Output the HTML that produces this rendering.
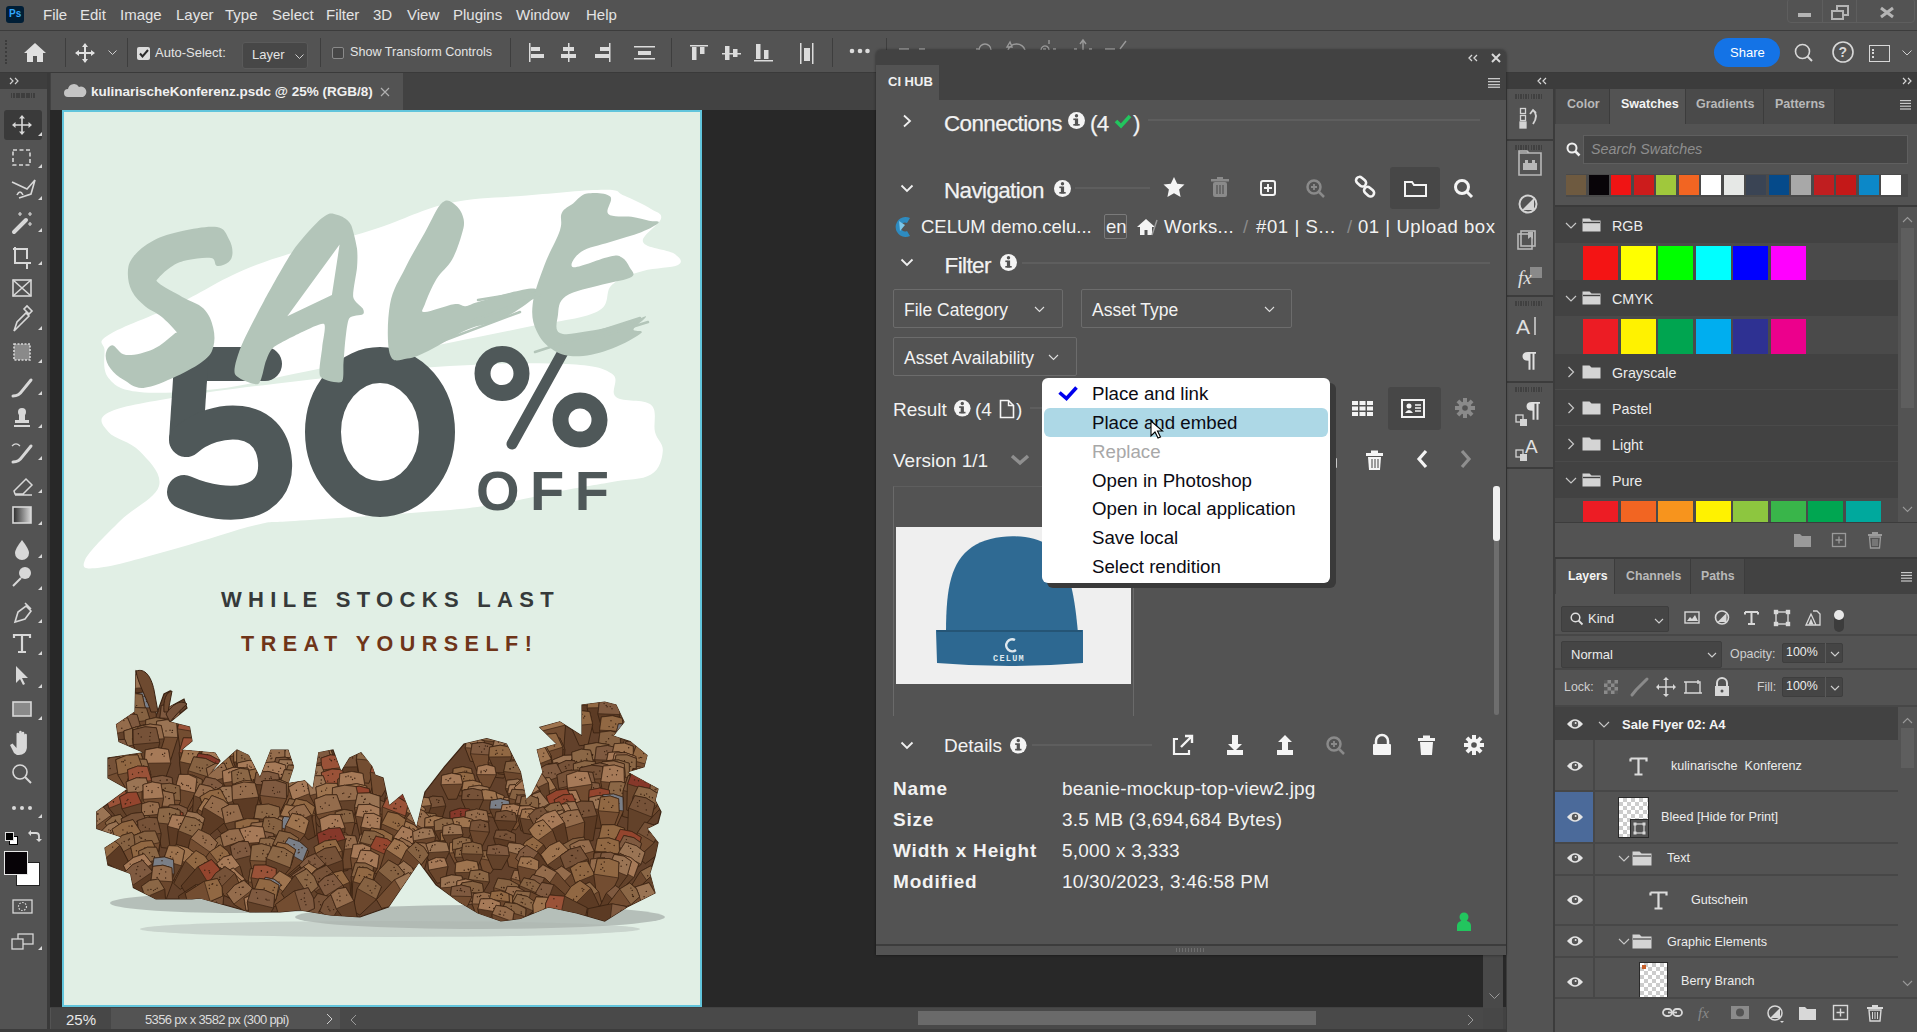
<!DOCTYPE html>
<html><head><meta charset="utf-8">
<style>
*{margin:0;padding:0;box-sizing:border-box}
html,body{width:1917px;height:1032px;overflow:hidden;background:#535353;font-family:"Liberation Sans",sans-serif;color:#e8e8e8}
.a{position:absolute}
.t{position:absolute;white-space:nowrap}
svg{position:absolute;overflow:visible}
</style></head><body>
<!-- ===== MENU BAR ===== -->
<div class="a" style="left:0;top:0;width:1917px;height:30px;background:#535353"></div>
<div class="a" style="left:0;top:30px;width:1917px;height:1px;background:#3c3c3c"></div>
<!-- ===== OPTIONS BAR ===== -->
<div class="a" style="left:0;top:31px;width:1917px;height:42px;background:#535353"></div>
<div class="a" style="left:0;top:72px;width:1917px;height:1px;background:#3a3a3a"></div>
<div id="menus" style="font-size:15px;color:#e4e4e4">
<div class="a" style="left:6px;top:6px;width:18px;height:17px;background:#001e36;border-radius:3px"></div>
<span class="t" style="left:9px;top:8px;font-size:10px;font-weight:bold;color:#31a8ff">Ps</span>
<span class="t" style="left:43px;top:6px">File</span><span class="t" style="left:80px;top:6px">Edit</span><span class="t" style="left:120px;top:6px">Image</span><span class="t" style="left:176px;top:6px">Layer</span><span class="t" style="left:225px;top:6px">Type</span><span class="t" style="left:272px;top:6px">Select</span><span class="t" style="left:326px;top:6px">Filter</span><span class="t" style="left:373px;top:6px">3D</span><span class="t" style="left:407px;top:6px">View</span><span class="t" style="left:453px;top:6px">Plugins</span><span class="t" style="left:516px;top:6px">Window</span><span class="t" style="left:586px;top:6px">Help</span>
<!-- window controls -->
<div class="a" style="left:1787px;top:-2px;width:128px;height:25px;border:1px solid #5e5e5e;border-radius:4px"></div>
<div class="a" style="left:1822px;top:0;width:1px;height:23px;background:#5e5e5e"></div>
<div class="a" style="left:1856px;top:0;width:1px;height:23px;background:#5e5e5e"></div>
<div class="a" style="left:1798px;top:13px;width:13px;height:4px;background:#b4b4b4"></div>
<div class="a" style="left:1836px;top:5px;width:13px;height:11px;border:2px solid #b4b4b4"></div>
<div class="a" style="left:1831px;top:10px;width:13px;height:10px;border:2px solid #b4b4b4;background:#535353"></div>
<svg style="left:1880px;top:7px" width="14" height="11"><path d="M1 1L13 10M13 1L1 10" stroke="#b4b4b4" stroke-width="3"/></svg>
</div>
<!-- options bar content -->
<div id="opts">
<div class="a" style="left:5px;top:40px;width:2px;height:24px;border-left:2px dotted #3c3c3c"></div>
<svg style="left:24px;top:43px" width="22" height="20"><path d="M11 0L0 10h3v9h6v-6h4v6h6v-9h3z" fill="#e0e0e0"/></svg>
<div class="a" style="left:65px;top:38px;width:1px;height:29px;background:#3e3e3e"></div>
<svg style="left:75px;top:43px" width="20" height="20"><path d="M10 1v18M1 10h18" stroke="#e0e0e0" stroke-width="2"/><path d="M10 0l-3 4h6zM10 20l-3-4h6zM0 10l4-3v6zM20 10l-4-3v6z" fill="#e0e0e0"/></svg>
<svg style="left:108px;top:50px" width="9" height="6"><path d="M0.5 0.5l4 4 4-4" stroke="#cfcfcf" fill="none"/></svg>
<div class="a" style="left:127px;top:38px;width:1px;height:29px;background:#3e3e3e"></div>
<div class="a" style="left:137px;top:47px;width:13px;height:13px;background:#dcdcdc;border-radius:2px"></div>
<svg style="left:139px;top:49px" width="10" height="9"><path d="M1 4.5l2.5 3 5.5-6.5" stroke="#2a2a2a" stroke-width="2" fill="none"/></svg>
<span class="t" style="left:155px;top:45px;font-size:13px;color:#e4e4e4">Auto-Select:</span>
<div class="a" style="left:242px;top:42px;width:66px;height:27px;background:#474747;border:1px solid #5a5a5a;border-radius:3px"></div>
<span class="t" style="left:252px;top:47px;font-size:13px;color:#e4e4e4">Layer</span>
<svg style="left:295px;top:54px" width="9" height="6"><path d="M0.5 0.5l4 4 4-4" stroke="#cfcfcf" fill="none"/></svg>
<div class="a" style="left:320px;top:38px;width:1px;height:29px;background:#3e3e3e"></div>
<div class="a" style="left:332px;top:47px;width:12px;height:12px;border:1px solid #8a8a8a;border-radius:2px;background:#474747"></div>
<span class="t" style="left:350px;top:45px;font-size:12.6px;color:#e4e4e4">Show Transform Controls</span>
<div class="a" style="left:510px;top:38px;width:1px;height:29px;background:#3e3e3e"></div>
<svg style="left:528px;top:42px" width="300" height="22" fill="#dcdcdc">
<rect x="1" y="1" width="1.5" height="19"/><rect x="3" y="5" width="9" height="4"/><rect x="3" y="12" width="13" height="4"/>
<rect x="40" y="1" width="1.5" height="19"/><rect x="35" y="5" width="11" height="4"/><rect x="33" y="12" width="15" height="4"/>
<rect x="81" y="1" width="1.5" height="19"/><rect x="72" y="5" width="9" height="4"/><rect x="67" y="12" width="14" height="4"/>
<rect x="106" y="4" width="21" height="1.5"/><rect x="110" y="9" width="13" height="4"/><rect x="106" y="16" width="21" height="1.5"/>
<rect x="162" y="3" width="18" height="1.5"/><rect x="164" y="5" width="4.5" height="13"/><rect x="172" y="5" width="4.5" height="7"/>
<rect x="194" y="11" width="19" height="1.5"/><rect x="197" y="4" width="4.5" height="14"/><rect x="205" y="7" width="4.5" height="8"/>
<rect x="226" y="18" width="19" height="1.5"/><rect x="228" y="2" width="4.5" height="15"/><rect x="236" y="8" width="4.5" height="9"/>
<rect x="272" y="1" width="1.5" height="21"/><rect x="284" y="1" width="1.5" height="21"/><rect x="276" y="6" width="6" height="13"/>
</svg>
<div class="a" style="left:671px;top:38px;width:1px;height:29px;background:#3e3e3e"></div>
<div class="a" style="left:832px;top:38px;width:1px;height:29px;background:#3e3e3e"></div>
<svg style="left:849px;top:48px" width="22" height="6" fill="#dcdcdc"><circle cx="3" cy="3" r="2.3"/><circle cx="11" cy="3" r="2.3"/><circle cx="18.5" cy="3" r="2.3"/></svg>
<div class="a" style="left:886px;top:38px;width:1px;height:29px;background:#3e3e3e"></div>
<!-- share etc -->
<div class="a" style="left:1714px;top:38px;width:66px;height:29px;background:#1473e6;border-radius:15px"></div>
<span class="t" style="left:1730px;top:45px;font-size:13px;color:#fff">Share</span>
<svg style="left:1794px;top:43px" width="24" height="20"><circle cx="8.5" cy="8.5" r="7" stroke="#d8d8d8" stroke-width="1.6" fill="none"/><path d="M13.5 13.5l4.5 4.5" stroke="#d8d8d8" stroke-width="2"/></svg>
<svg style="left:1832px;top:41px" width="24" height="24"><circle cx="11" cy="11" r="10" stroke="#d8d8d8" stroke-width="1.6" fill="none"/><text x="6.5" y="16" font-size="14" font-weight="bold" fill="#d8d8d8" font-family="Liberation Sans">?</text></svg>
<div class="a" style="left:1869px;top:45px;width:21px;height:17px;border:1.5px solid #d8d8d8"></div>
<div class="a" style="left:1872px;top:49px;width:3px;height:9px;border-left:2px dotted #d8d8d8"></div>
<svg style="left:1902px;top:50px" width="10" height="6"><path d="M0.5 0.5l4.5 4.5 4.5-4.5" stroke="#cfcfcf" fill="none"/></svg>
<!-- faint 3D icons partly hidden -->
<svg style="left:880px;top:38px" width="260" height="12" stroke="#9a9a9a" fill="none" stroke-width="1.4"><path d="M19 11h10M39 11h6"/><path d="M99 12a6 6 0 0 1 12 0M96 11h4"/><path d="M128 12a9 9 0 0 1 17 0M130 4l-3 5 5 0z"/><path d="M169 12a4 4 0 1 1 0-.1M169 2v4M163 11h3M173 11h3"/><path d="M200 6l3-4 3 4M203 3v9M194 11h3M209 11h3"/><path d="M225 11h10M240 11l6-8"/></svg>
</div>
<!-- ===== LEFT TOOLBAR ===== -->
<div class="a" style="left:0;top:73px;width:47px;height:959px;background:#535353"></div>
<div class="a" style="left:0;top:73px;width:47px;height:16px;background:#3e3e3e"></div>
<div class="a" style="left:47px;top:73px;width:3px;height:959px;background:#3a3a3a"></div>
<svg style="left:9px;top:77px" width="12" height="8"><path d="M1 1l3 3-3 3M6 1l3 3-3 3" stroke="#d0d0d0" fill="none" stroke-width="1.2"/></svg>
<div class="a" style="left:11px;top:93px;width:25px;height:5px;background:repeating-linear-gradient(90deg,#3e3e3e 0 1.5px,transparent 1.5px 2.5px)"></div>
<div class="a" style="left:4px;top:110px;width:38px;height:30px;background:#3a3a3a;border-radius:3px"></div>
<svg style="left:0;top:100px" width="47" height="870" fill="none" stroke="#d8d8d8" stroke-width="1.6">
<g transform="translate(22,25)"><path d="M0-9v18M-9 0h18"/><path d="M0-10l-3 3.5h6zM0 10l-3-3.5h6zM-10 0l3.5-3v6zM10 0l-3.5-3v6z" fill="#d8d8d8" stroke="none"/></g>
<rect x="13" y="50" width="17" height="15" stroke-dasharray="4 2.5"/>
<path d="M12 82l15 7 8-9-4 14-12 4M17 95q3-6 6 0"/>
<path d="M14 132l12-12" stroke-width="4" stroke-linecap="round"/><path d="M20 112v4M18 114h4M30 112v4M28 114h4M30 122v4M28 124h4" stroke-width="1.2"/>
<path d="M15 147v16h16M13 149h6M27 163v6M19 149h8v10" stroke-width="2"/>
<rect x="13" y="180" width="18" height="16"/><path d="M13 180l18 16M31 180l-18 16"/>
<path d="M14 231l3-9 9-9 3 3-9 9zM24 209l5 5 3-3-5-5z"/>
<rect x="14" y="244" width="16" height="16" fill="#8a8a8a" stroke-dasharray="2 1.5"/>
<path d="M13 296q6 0 9-5l9-11" stroke-width="3" stroke-linecap="round"/>
<path d="M14 327h16M15 323h14v-3h-14zM19 320v-5h6v5" fill="#d8d8d8" stroke="none"/><circle cx="22" cy="312" r="4" fill="#d8d8d8" stroke="none"/><rect x="14" y="325" width="16" height="2" fill="#d8d8d8" stroke="none"/>
<path d="M13 362q6 0 9-5l9-11" stroke-width="3" stroke-linecap="round"/><path d="M12 346q4-4 8 0" stroke-width="1.2"/>
<path d="M14 391l12-12 6 6-9 9h-8zM15 395h17" stroke-width="1.5"/>
<rect x="13" y="407" width="18" height="16" fill="url(#gr)" stroke="#d8d8d8"/>
<path d="M22 440q-7 9-7 13a7 7 0 0 0 14 0q0-4-7-13z" fill="#d8d8d8" stroke="none"/>
<circle cx="25" cy="473" r="6" fill="#d8d8d8" stroke="none"/><path d="M21 478l-8 8" stroke-width="2"/>
<path d="M15 522l3-10 8-6 5 5-6 8zM25 503l6 6" stroke-width="1.6"/>
<path d="M14 538v-3h16v3M22 535v17M18 552h8" stroke-width="2.2"/>
<path d="M16 566v17l4-4 3 6 2-1-3-6h6z" fill="#d8d8d8" stroke="none"/>
<rect x="13" y="602" width="18" height="14" fill="#8a8a8a"/>
<path d="M14 653l-4-8 2.5-1.5 4 4.5v-14a1.3 1.3 0 0 1 2.6 0v9-11a1.3 1.3 0 0 1 2.6 0v11-10a1.3 1.3 0 0 1 2.6 0v10-8a1.3 1.3 0 0 1 2.6 0v13q-1 7-8 7h-2z" fill="#d8d8d8" stroke="none"/>
<circle cx="20" cy="672" r="7"/><path d="M25 677l6 6" stroke-width="2"/>
<circle cx="14" cy="708" r="2" fill="#d8d8d8" stroke="none"/><circle cx="22" cy="708" r="2" fill="#d8d8d8" stroke="none"/><circle cx="30" cy="708" r="2" fill="#d8d8d8" stroke="none"/>
<rect x="13" y="800" width="19" height="13" stroke-width="1.3"/><circle cx="22.5" cy="806.5" r="4" stroke-dasharray="1.5 1.5" stroke-width="1.2"/>
<rect x="18" y="834" width="15" height="10" stroke-width="1.3"/><rect x="12" y="839" width="11" height="10" stroke-width="1.3" fill="#535353"/>
</svg>
<svg style="left:0;top:100px" width="47" height="870" fill="#d8d8d8"><path d="M38 36h4v-4zM38 68h4v-4zM38 100h4v-4zM38 132h4v-4zM38 165h4v-4zM38 230h4v-4zM38 263h4v-4zM38 295h4v-4zM38 328h4v-4zM38 360h4v-4zM38 393h4v-4zM38 425h4v-4zM38 458h4v-4zM38 490h4v-4zM38 523h4v-4zM38 555h4v-4zM38 588h4v-4zM38 620h4v-4zM38 718h4v-4zM38 850h4v-4z"/></svg>
<div class="a" style="left:5px;top:832px;width:9px;height:9px;background:#000;border:1px solid #ddd"></div>
<div class="a" style="left:9px;top:836px;width:9px;height:9px;background:#fff;border:1px solid #000;z-index:0"></div>
<div class="a" style="left:5px;top:832px;width:9px;height:9px;background:#000;border:1.5px solid #ddd"></div>
<svg style="left:27px;top:829px" width="14" height="14"><path d="M2 4h7q3 0 3 3v5" stroke="#d8d8d8" stroke-width="1.8" fill="none"/><path d="M4 1l-3 3 3 3zM9 10l3 3 3-3z" fill="#d8d8d8"/></svg>
<div class="a" style="left:16px;top:862px;width:24px;height:24px;background:#fff;border:1px solid #222"></div>
<div class="a" style="left:4px;top:851px;width:24px;height:24px;background:#070307;border:1.5px solid #e8e8e8"></div>
<svg width="0" height="0"><defs><linearGradient id="gr" x1="0" x2="1"><stop offset="0" stop-color="#2a2a2a"/><stop offset="1" stop-color="#d8d8d8"/></linearGradient></defs></svg>
<!-- ===== DOCUMENT AREA ===== -->
<div class="a" style="left:50px;top:73px;width:1457px;height:37px;background:#424242"></div>
<div class="a" style="left:51px;top:73px;width:352px;height:37px;background:#535353"></div>
<div class="a" style="left:50px;top:110px;width:1457px;height:897px;background:#282828"></div>
<div class="a" style="left:50px;top:1007px;width:1457px;height:25px;background:#424242"></div>
<svg style="left:64px;top:83px" width="23" height="15"><path d="M4 14a4 4 0 0 1 0-8a6 6 0 0 1 11-2a5 5 0 0 1 4 10z" fill="#c4c4c4"/></svg>
<span class="t" style="left:91px;top:84px;font-size:13.5px;font-weight:bold;color:#f0f0f0">kulinarischeKonferenz.psdc @ 25% (RGB/8)</span>
<svg style="left:380px;top:87px" width="10" height="10"><path d="M1 1l8 8M9 1l-8 8" stroke="#b0b0b0" stroke-width="1.2"/></svg>
<!-- status bar -->
<div class="a" style="left:50px;top:1008px;width:1433px;height:21px;background:#494949"></div>
<div class="a" style="left:50px;top:1008px;width:290px;height:21px;background:#535353"></div>
<div class="a" style="left:51px;top:1008px;width:60px;height:21px;background:#474747"></div>
<span class="t" style="left:66px;top:1011px;font-size:15px;color:#e8e8e8">25%</span>
<span class="t" style="left:145px;top:1012px;font-size:13px;color:#dcdcdc;letter-spacing:-0.65px">5356 px x 3582 px (300 ppi)</span>
<svg style="left:326px;top:1013px" width="8" height="12"><path d="M1 1l5 5-5 5" stroke="#cfcfcf" fill="none"/></svg>
<svg style="left:350px;top:1014px" width="8" height="12"><path d="M6 1l-5 5 5 5" stroke="#9a9a9a" fill="none"/></svg>
<div class="a" style="left:918px;top:1011px;width:398px;height:14px;background:#6a6a6a"></div>
<svg style="left:1467px;top:1014px" width="8" height="12"><path d="M1 1l5 5-5 5" stroke="#9a9a9a" fill="none"/></svg>
<div class="a" style="left:1483px;top:110px;width:20px;height:898px;background:#494949"></div>
<div class="a" style="left:1483px;top:1008px;width:20px;height:21px;background:#474747"></div>
<svg style="left:1489px;top:993px" width="11" height="7"><path d="M0.5 0.5l5 5 5-5" stroke="#9a9a9a" fill="none"/></svg>
<div class="a" style="left:0;top:1029px;width:1917px;height:3px;background:#3c3c3c"></div>
<!-- canvas -->
<div class="a" style="left:62px;top:110px;width:640px;height:897px;background:#e1efe5;border:2px solid #62c5dc"></div>
<!--ART-->
<svg style="left:64px;top:112px" width="636" height="893" viewBox="64 112 636 893">
<path fill="#fff"  d="M108.5,335.0 C121.7,326.6 151.4,316.6 178.0,304.0 C204.6,291.4 221.1,278.3 256.0,265.0 C290.9,251.7 337.2,241.2 372.0,230.0 C406.8,218.8 421.7,209.2 449.6,203.0 C477.5,196.8 499.1,197.9 527.0,195.5 C554.9,193.1 587.1,189.7 604.6,189.7 C622.1,189.7 615.6,192.0 624.0,195.5 C632.4,199.0 644.3,204.8 651.0,209.0 C657.7,213.2 662.4,212.9 661.0,218.8 C659.6,224.7 640.7,235.7 643.0,242.0 C645.3,248.3 667.7,249.5 674.0,253.6 C680.3,257.7 683.6,261.9 678.0,265.0 C672.4,268.1 654.9,267.5 643.0,271.0 C631.1,274.5 620.3,277.4 612.0,284.7 C603.7,292.0 612.3,304.2 597.0,311.8 C581.7,319.4 553.5,321.4 527.0,327.0 C500.5,332.6 477.5,337.2 449.6,342.8 C421.7,348.4 399.9,352.4 372.0,358.0 C344.1,363.6 322.5,368.2 294.6,373.8 C266.7,379.4 244.9,385.7 217.0,389.0 C189.1,392.3 159.0,394.0 139.5,392.0 C120.0,390.0 114.8,385.5 108.5,378.0 C102.2,370.5 104.6,358.2 104.6,350.5 C104.6,342.8 95.3,343.4 108.5,335.0Z"/>
<path fill="#fff"  d="M108.5,412.6 C121.0,406.3 144.5,402.6 178.0,397.0 C211.5,391.4 245.7,387.1 294.6,381.5 C343.5,375.9 400.7,369.1 449.6,366.0 C498.5,362.9 536.8,362.6 566.0,364.0 C595.2,365.4 603.0,367.9 612.0,373.8 C621.0,379.7 609.0,391.4 616.0,397.0 C623.0,402.6 644.0,398.5 651.0,404.8 C658.0,411.1 652.9,423.7 655.0,432.0 C657.1,440.3 663.5,443.3 662.8,451.0 C662.1,458.7 660.1,469.0 651.0,474.6 C641.9,480.2 627.3,479.2 612.0,482.0 C596.7,484.8 588.3,485.8 566.0,490.0 C543.7,494.2 515.9,501.5 488.0,505.6 C460.1,509.7 445.8,510.2 411.0,513.0 C376.2,515.8 322.5,518.8 294.6,521.0 C266.7,523.2 277.0,520.1 256.0,525.0 C235.0,529.9 205.9,540.3 178.0,548.0 C150.1,555.7 117.5,565.4 100.8,567.6 C84.1,569.8 81.5,568.4 85.0,560.0 C88.5,551.6 106.7,534.3 120.0,521.0 C133.3,507.7 155.5,498.6 159.0,486.0 C162.5,473.4 148.6,460.7 139.5,451.0 C130.4,441.3 114.1,438.9 108.5,432.0 C102.9,425.1 96.0,418.9 108.5,412.6Z"/>
<g fill="none" stroke="#4f5859">
<ellipse cx="380" cy="432" rx="57" ry="67" stroke-width="36"/>
<path stroke-width="34" stroke-linecap="round" d="M265 364 H192"/>
<path stroke-width="34" d="M192 350 L186 440"/>
<path stroke-width="34" stroke-linecap="round" d="M186 440 C215 415 272 412 275 462 C278 505 230 512 184 492"/>
<circle cx="502" cy="373.5" r="19.5" stroke-width="16"/>
<circle cx="580" cy="420" r="19.5" stroke-width="16"/>
<path stroke-width="11" stroke-linecap="round" d="M563 352 L512 444"/>
</g>
<path fill="#b3c5b9"  d="M217.0,227.1 C225.4,228.5 225.9,234.2 228.7,238.7 C231.5,243.2 232.5,248.1 232.5,252.3 C232.5,256.5 231.5,259.6 228.7,262.0 C225.9,264.4 220.2,266.6 217.0,265.9 C213.8,265.2 216.4,259.2 211.2,258.1 C206.0,257.0 195.0,258.6 188.0,260.0 C181.0,261.4 177.7,262.8 172.5,265.9 C167.3,269.0 161.4,274.4 159.0,277.5 C156.6,280.6 154.8,279.8 159.0,283.3 C163.2,286.8 174.2,292.4 182.2,296.9 C190.2,301.4 197.9,302.9 203.5,308.5 C209.1,314.1 211.5,320.8 213.2,327.8 C214.9,334.8 214.9,341.3 213.2,347.2 C211.5,353.1 210.1,355.6 203.5,360.8 C196.9,366.0 187.2,371.4 176.4,376.3 C165.6,381.2 152.8,387.2 143.4,387.9 C134.0,388.6 129.9,383.6 124.0,380.1 C118.1,376.6 113.8,373.0 110.5,368.5 C107.2,364.0 105.4,359.2 105.7,355.0 C106.0,350.8 108.7,345.3 112.4,345.3 C116.1,345.3 118.7,354.3 126.0,355.0 C133.3,355.7 144.4,353.0 153.1,349.2 C161.8,345.4 170.2,336.8 174.4,333.7 C178.6,330.6 178.8,334.8 176.4,331.7 C174.0,328.6 166.5,320.7 160.9,316.2 C155.3,311.7 150.6,311.0 145.4,306.5 C140.2,302.0 135.0,297.3 131.8,291.0 C128.7,284.7 127.6,278.0 127.9,271.7 C128.2,265.4 129.2,261.8 133.7,256.2 C138.2,250.6 144.4,245.2 153.1,240.7 C161.8,236.2 170.7,233.4 182.2,231.0 C193.7,228.6 208.6,225.7 217.0,227.1Z"/>
<path fill="#b3c5b9" fill-rule="evenodd" d="M329.9,213.6 C333.2,212.9 340.9,216.0 343.5,217.4 C346.1,218.8 349.6,221.5 351.2,225.2 C352.8,228.9 356.3,243.3 357.0,248.4 C357.7,253.5 357.5,262.0 357.0,267.8 C356.5,273.6 352.5,292.0 353.2,296.9 C353.9,301.8 361.6,306.4 362.8,308.5 C364.0,310.6 364.4,313.1 362.8,314.3 C361.2,315.5 351.4,315.2 349.3,318.2 C347.2,321.2 346.1,334.2 345.4,339.5 C344.7,344.8 344.0,357.6 343.5,362.7 C343.0,367.8 344.3,380.5 341.5,382.1 C338.7,383.7 322.5,380.5 320.2,376.3 C317.9,372.1 321.7,353.5 322.2,347.2 C322.7,340.9 326.4,325.9 324.1,324.0 C321.8,322.1 308.8,328.9 302.8,331.7 C296.8,334.5 278.1,343.7 273.7,347.2 C269.3,350.7 267.9,356.4 266.0,360.8 C264.1,365.2 261.9,382.4 258.2,384.0 C254.5,385.6 237.1,378.7 235.0,374.3 C232.9,369.9 237.3,356.0 240.8,347.2 C244.3,338.4 257.8,312.3 264.1,300.7 C270.4,289.1 286.8,259.7 293.1,250.4 C299.4,241.1 312.0,227.6 316.4,223.2 C320.8,218.8 326.6,214.3 329.9,213.6Z M339.6,244.6 L331.9,294.9 L287.3,316.2 Z"/>
<path fill="#b3c5b9"  d="M442.3,202.6 C447.9,197.7 452.1,202.5 455.9,205.5 C459.7,208.5 462.6,213.9 463.6,219.1 C464.6,224.3 463.8,227.3 461.7,234.6 C459.6,241.9 456.5,251.7 452.0,259.7 C447.5,267.7 441.4,271.1 436.5,279.1 C431.6,287.1 427.0,298.4 424.9,304.3 C422.8,310.2 419.7,312.0 424.9,312.0 C430.1,312.0 446.6,305.3 453.9,304.3 C461.2,303.3 461.3,306.6 465.5,306.2 C469.7,305.8 469.2,304.7 477.2,302.3 C485.2,299.9 499.6,295.1 510.1,292.7 C520.6,290.3 531.1,287.8 535.3,288.8 C539.5,289.8 539.6,292.9 533.3,298.5 C527.0,304.1 512.2,314.2 500.4,319.8 C488.6,325.4 480.4,323.9 467.5,329.5 C454.6,335.1 439.5,345.6 428.7,350.8 C417.9,356.0 414.4,357.8 407.4,358.5 C400.4,359.2 393.1,364.4 390.0,354.6 C386.9,344.8 387.2,320.0 390.0,304.3 C392.8,288.6 399.2,280.4 405.5,267.5 C411.8,254.6 418.3,244.3 424.9,232.6 C431.5,220.9 436.7,207.5 442.3,202.6Z"/>
<path fill="#b3c5b9"  d="M587.0,193.6 C593.6,192.4 606.4,192.8 610.2,196.5 C614.0,200.2 604.5,210.2 608.3,213.9 C612.1,217.6 624.2,215.6 631.5,216.8 C638.8,218.0 644.1,219.7 649.0,220.7 C653.9,221.7 660.1,220.5 658.7,222.6 C657.3,224.7 649.9,228.8 641.2,232.3 C632.5,235.8 621.0,238.5 610.2,242.0 C599.4,245.5 587.8,247.2 581.2,251.7 C574.6,256.2 568.2,266.3 573.4,267.2 C578.6,268.1 601.5,258.2 610.2,256.5 C618.9,254.8 618.4,255.6 621.9,257.5 C625.4,259.4 627.9,263.7 629.6,267.2 C631.3,270.7 636.4,273.8 631.5,276.9 C626.6,280.0 614.3,281.1 602.5,284.6 C590.7,288.1 573.7,290.6 565.7,296.2 C557.7,301.8 558.9,309.0 557.9,315.6 C556.9,322.2 554.3,330.2 559.9,333.0 C565.5,335.8 576.0,333.2 588.9,331.1 C601.8,329.0 621.2,324.0 631.5,321.4 C641.8,318.8 645.6,315.2 646.0,316.6 C646.4,318.0 634.4,326.2 633.5,329.2 C632.6,332.2 645.0,329.5 641.2,333.0 C637.4,336.5 623.4,344.3 612.2,348.5 C601.0,352.7 589.7,355.9 579.2,356.3 C568.7,356.7 561.7,355.0 554.0,350.5 C546.3,346.0 540.4,339.5 536.6,331.1 C532.8,322.7 531.3,315.9 532.7,304.0 C534.1,292.1 539.5,278.4 544.4,265.2 C549.3,252.0 556.8,239.8 559.9,230.4 C563.0,221.0 559.4,217.8 561.8,212.9 C564.2,208.0 568.9,206.7 573.4,203.2 C577.9,199.7 580.4,194.8 587.0,193.6Z"/>
<g fill="none" stroke="#b3c5b9" stroke-linecap="round">
<path stroke-width="2.5" d="M432 345 L520 312 M470 322 L540 295 M535 352 L640 318 M590 340 L648 322 M478 300 L534 291"/>
</g>
<text x="476" y="510" font-family="Liberation Sans" font-weight="bold" font-size="56" fill="#4f5859" letter-spacing="10.5">OFF</text>
<text x="221" y="607" font-family="Liberation Sans" font-weight="bold" font-size="22" fill="#363a3a" letter-spacing="6.3">WHILE STOCKS LAST</text>
<text x="241" y="651" font-family="Liberation Sans" font-weight="bold" font-size="21.5" fill="#6f3519" letter-spacing="6.5">TREAT YOURSELF!</text>
<ellipse cx="235" cy="903" rx="125" ry="10" fill="#8a908e" opacity="0.5"/>
<ellipse cx="480" cy="917" rx="185" ry="12" fill="#8a908e" opacity="0.5"/>
<ellipse cx="390" cy="929" rx="250" ry="8" fill="#aeb3b0" opacity="0.45"/>
<defs><clipPath id="conesclip"><polygon points="136.0,671.0 150.0,682.0 156.0,716.0 164.0,694.0 170.0,691.0 164.0,710.0 184.0,699.0 187.0,708.0 170.0,722.0 189.5,727.0 192.0,741.0 181.0,750.0 215.0,753.0 220.0,761.0 206.0,778.0 237.0,750.0 248.5,755.5 260.0,778.0 271.0,750.0 288.0,750.0 293.5,766.7 288.0,783.6 304.7,780.8 313.0,789.0 318.8,752.7 333.0,750.0 341.0,772.0 349.7,758.0 361.0,752.7 372.0,766.7 375.0,775.0 383.0,778.0 389.0,806.0 402.5,794.8 416.5,828.5 425.0,792.0 444.6,766.7 464.0,744.0 486.7,738.7 506.4,744.0 520.4,772.0 526.0,800.0 531.7,794.8 543.0,772.0 537.3,750.0 557.0,744.0 540.0,727.4 559.8,721.8 582.0,736.0 582.0,705.0 604.7,702.0 616.0,705.0 624.0,722.0 613.0,736.0 630.0,741.5 647.0,755.5 644.0,766.7 627.0,772.0 658.0,789.0 655.0,800.4 661.0,811.7 658.0,823.0 647.0,828.5 658.0,842.6 655.0,856.6 649.7,873.5 655.0,893.0 627.0,907.0 604.7,921.0 576.6,913.0 548.5,907.0 520.4,918.4 500.8,921.0 478.0,913.0 458.7,901.6 436.0,884.7 419.0,862.0 388.4,907.0 360.0,917.0 330.0,915.0 300.0,910.0 280.0,912.0 250.0,912.0 225.0,905.0 200.0,898.0 192.0,899.0 156.0,899.0 133.4,887.5 130.6,873.5 108.0,865.0 105.0,848.0 122.0,837.0 96.8,828.5 96.8,811.7 127.8,789.0 108.0,778.0 108.0,758.0 144.6,752.7 119.0,741.5 116.5,724.6 135.0,712.0"/></clipPath></defs>
<polygon points="136.0,671.0 150.0,682.0 156.0,716.0 164.0,694.0 170.0,691.0 164.0,710.0 184.0,699.0 187.0,708.0 170.0,722.0 189.5,727.0 192.0,741.0 181.0,750.0 215.0,753.0 220.0,761.0 206.0,778.0 237.0,750.0 248.5,755.5 260.0,778.0 271.0,750.0 288.0,750.0 293.5,766.7 288.0,783.6 304.7,780.8 313.0,789.0 318.8,752.7 333.0,750.0 341.0,772.0 349.7,758.0 361.0,752.7 372.0,766.7 375.0,775.0 383.0,778.0 389.0,806.0 402.5,794.8 416.5,828.5 425.0,792.0 444.6,766.7 464.0,744.0 486.7,738.7 506.4,744.0 520.4,772.0 526.0,800.0 531.7,794.8 543.0,772.0 537.3,750.0 557.0,744.0 540.0,727.4 559.8,721.8 582.0,736.0 582.0,705.0 604.7,702.0 616.0,705.0 624.0,722.0 613.0,736.0 630.0,741.5 647.0,755.5 644.0,766.7 627.0,772.0 658.0,789.0 655.0,800.4 661.0,811.7 658.0,823.0 647.0,828.5 658.0,842.6 655.0,856.6 649.7,873.5 655.0,893.0 627.0,907.0 604.7,921.0 576.6,913.0 548.5,907.0 520.4,918.4 500.8,921.0 478.0,913.0 458.7,901.6 436.0,884.7 419.0,862.0 388.4,907.0 360.0,917.0 330.0,915.0 300.0,910.0 280.0,912.0 250.0,912.0 225.0,905.0 200.0,898.0 192.0,899.0 156.0,899.0 133.4,887.5 130.6,873.5 108.0,865.0 105.0,848.0 122.0,837.0 96.8,828.5 96.8,811.7 127.8,789.0 108.0,778.0 108.0,758.0 144.6,752.7 119.0,741.5 116.5,724.6 135.0,712.0" fill="#62412b" stroke="#3a2212" stroke-width="1.2"/>
<g clip-path="url(#conesclip)">
<polygon points="153.9,713.6 158.6,691.1 156.2,676.3 147.9,674.8 139.1,677.2 139.1,692.1 146.1,714.0" fill="#63422a" stroke="#3a2212" stroke-width="0.9"/>
<polygon points="158.5,690.3 156.2,676.3 147.9,674.8 139.1,677.2 139.1,691.4" fill="#7f5a40" stroke="#3a2212" stroke-width="0.7"/>
<circle cx="145.8" cy="687.4" r="0.7" fill="#3a2212"/>
<circle cx="146.1" cy="687.8" r="0.7" fill="#3a2212"/>
<circle cx="154.0" cy="681.0" r="0.7" fill="#3a2212"/>
<circle cx="152.5" cy="681.8" r="0.7" fill="#3a2212"/>
<circle cx="150.7" cy="680.1" r="0.7" fill="#3a2212"/>
<polygon points="150.0,708.8 154.7,687.6 152.1,673.9 143.1,672.6 133.6,675.3 133.8,689.1 141.6,709.4" fill="#5c3b24" stroke="#3a2212" stroke-width="0.9"/>
<polygon points="154.7,686.9 152.1,673.9 143.1,672.6 133.6,675.3 133.7,688.4" fill="#9a7454" stroke="#3a2212" stroke-width="0.7"/>
<circle cx="146.9" cy="682.9" r="0.7" fill="#3a2212"/>
<circle cx="144.8" cy="682.1" r="0.7" fill="#3a2212"/>
<circle cx="145.3" cy="680.1" r="0.7" fill="#3a2212"/>
<circle cx="140.8" cy="683.8" r="0.7" fill="#3a2212"/>
<circle cx="140.0" cy="679.2" r="0.7" fill="#3a2212"/>
<polygon points="589.9,728.5 596.0,705.1 592.7,690.1 581.3,689.1 569.2,692.1 569.4,707.3 579.3,729.4" fill="#5c3b24" stroke="#3a2212" stroke-width="0.9"/>
<polygon points="596.0,704.4 592.7,690.1 581.3,689.1 569.2,692.1 569.4,706.6" fill="#866242" stroke="#3a2212" stroke-width="0.7"/>
<circle cx="577.0" cy="696.4" r="0.7" fill="#3a2212"/>
<circle cx="583.3" cy="697.4" r="0.7" fill="#3a2212"/>
<circle cx="584.6" cy="697.8" r="0.7" fill="#3a2212"/>
<circle cx="586.4" cy="693.4" r="0.7" fill="#3a2212"/>
<circle cx="576.1" cy="695.2" r="0.7" fill="#3a2212"/>
<polygon points="620.3,736.1 629.5,713.7 628.9,698.3 619.0,695.4 607.9,696.4 605.6,711.7 610.8,735.3" fill="#6b472d" stroke="#3a2212" stroke-width="0.9"/>
<polygon points="629.6,713.0 628.9,698.3 619.0,695.4 607.9,696.4 605.6,710.9" fill="#946c4c" stroke="#3a2212" stroke-width="0.7"/>
<circle cx="624.8" cy="707.8" r="0.7" fill="#3a2212"/>
<circle cx="621.1" cy="705.6" r="0.7" fill="#3a2212"/>
<circle cx="616.9" cy="703.1" r="0.7" fill="#3a2212"/>
<circle cx="619.1" cy="704.8" r="0.7" fill="#3a2212"/>
<circle cx="619.2" cy="699.5" r="0.7" fill="#3a2212"/>
<polygon points="610.7,724.7 617.9,701.2 616.7,685.4 607.8,683.1 597.9,684.8 596.5,700.5 602.1,724.4" fill="#63422a" stroke="#3a2212" stroke-width="0.9"/>
<polygon points="618.0,700.5 616.7,685.4 607.8,683.1 597.9,684.8 596.5,699.7" fill="#7f5a40" stroke="#3a2212" stroke-width="0.7"/>
<circle cx="613.4" cy="696.3" r="0.7" fill="#3a2212"/>
<circle cx="604.5" cy="690.8" r="0.7" fill="#3a2212"/>
<circle cx="602.3" cy="692.2" r="0.7" fill="#3a2212"/>
<circle cx="611.8" cy="694.8" r="0.7" fill="#3a2212"/>
<circle cx="612.3" cy="690.1" r="0.7" fill="#3a2212"/>
<polygon points="623.0,735.0 630.9,716.6 630.6,703.7 622.6,700.8 613.3,701.9 611.1,714.5 615.1,734.2" fill="#6b472d" stroke="#3a2212" stroke-width="0.9"/>
<polygon points="631.0,715.9 630.6,703.7 622.6,700.8 613.3,701.9 611.2,713.8" fill="#916843" stroke="#3a2212" stroke-width="0.7"/>
<circle cx="619.5" cy="706.4" r="0.7" fill="#3a2212"/>
<circle cx="623.0" cy="706.6" r="0.7" fill="#3a2212"/>
<circle cx="625.0" cy="710.4" r="0.7" fill="#3a2212"/>
<circle cx="622.5" cy="711.9" r="0.7" fill="#3a2212"/>
<circle cx="616.1" cy="710.3" r="0.7" fill="#3a2212"/>
<polygon points="144.3,729.6 148.8,707.5 145.3,693.6 135.4,692.7 125.0,695.9 125.8,710.2 135.1,730.7" fill="#734d31" stroke="#3a2212" stroke-width="0.9"/>
<polygon points="148.7,706.8 145.3,693.6 135.4,692.7 125.0,695.9 125.7,709.5" fill="#765238" stroke="#3a2212" stroke-width="0.7"/>
<circle cx="131.3" cy="698.9" r="0.7" fill="#3a2212"/>
<circle cx="143.2" cy="704.5" r="0.7" fill="#3a2212"/>
<circle cx="131.0" cy="702.3" r="0.7" fill="#3a2212"/>
<circle cx="139.4" cy="703.4" r="0.7" fill="#3a2212"/>
<circle cx="134.9" cy="704.0" r="0.7" fill="#3a2212"/>
<polygon points="143.3,736.4 146.9,712.9 143.3,698.0 133.9,697.2 124.2,700.4 125.3,715.7 134.6,737.5" fill="#63422a" stroke="#3a2212" stroke-width="0.9"/>
<polygon points="146.8,712.2 143.3,698.0 133.9,697.2 124.2,700.4 125.2,714.9" fill="#7f5a40" stroke="#3a2212" stroke-width="0.7"/>
<circle cx="137.1" cy="707.4" r="0.7" fill="#3a2212"/>
<circle cx="136.0" cy="704.2" r="0.7" fill="#3a2212"/>
<circle cx="138.3" cy="705.5" r="0.7" fill="#3a2212"/>
<circle cx="138.1" cy="708.2" r="0.7" fill="#3a2212"/>
<circle cx="128.4" cy="702.0" r="0.7" fill="#3a2212"/>
<polygon points="147.9,742.2 153.8,721.7 150.2,708.8 138.8,708.0 126.7,711.3 127.1,724.5 137.2,743.4" fill="#734d31" stroke="#3a2212" stroke-width="0.9"/>
<polygon points="153.7,721.0 150.2,708.8 138.8,708.0 126.7,711.3 127.0,723.9" fill="#7a7f88" stroke="#3a2212" stroke-width="0.7"/>
<circle cx="142.1" cy="719.0" r="0.7" fill="#3a2212"/>
<circle cx="145.7" cy="719.1" r="0.7" fill="#3a2212"/>
<circle cx="146.6" cy="716.6" r="0.7" fill="#3a2212"/>
<circle cx="133.4" cy="713.1" r="0.7" fill="#3a2212"/>
<circle cx="134.1" cy="717.1" r="0.7" fill="#3a2212"/>
<polygon points="153.3,731.7 157.7,707.9 155.2,692.4 146.8,690.9 137.8,693.5 138.0,709.2 145.4,732.2" fill="#6b472d" stroke="#3a2212" stroke-width="0.9"/>
<polygon points="157.7,707.2 155.2,692.4 146.8,690.9 137.8,693.5 138.0,708.4" fill="#7a7f88" stroke="#3a2212" stroke-width="0.7"/>
<circle cx="144.1" cy="696.5" r="0.7" fill="#3a2212"/>
<circle cx="146.8" cy="701.5" r="0.7" fill="#3a2212"/>
<circle cx="146.3" cy="699.3" r="0.7" fill="#3a2212"/>
<circle cx="145.2" cy="695.5" r="0.7" fill="#3a2212"/>
<circle cx="151.6" cy="699.7" r="0.7" fill="#3a2212"/>
<polygon points="173.1,739.1 180.2,719.7 179.3,706.4 170.9,704.0 161.4,705.5 159.9,718.6 164.9,738.6" fill="#6b472d" stroke="#3a2212" stroke-width="0.9"/>
<polygon points="180.3,719.0 179.3,706.4 170.9,704.0 161.4,705.5 159.9,717.9" fill="#7f5a40" stroke="#3a2212" stroke-width="0.7"/>
<circle cx="174.6" cy="708.7" r="0.7" fill="#3a2212"/>
<circle cx="168.4" cy="712.7" r="0.7" fill="#3a2212"/>
<circle cx="174.8" cy="715.3" r="0.7" fill="#3a2212"/>
<circle cx="168.5" cy="712.1" r="0.7" fill="#3a2212"/>
<circle cx="167.0" cy="714.2" r="0.7" fill="#3a2212"/>
<polygon points="601.6,732.8 607.3,708.4 605.5,692.2 597.1,690.3 587.9,692.5 587.3,708.7 593.6,732.9" fill="#5c3b24" stroke="#3a2212" stroke-width="0.9"/>
<polygon points="607.3,707.6 605.5,692.2 597.1,690.3 587.9,692.5 587.3,707.9" fill="#916843" stroke="#3a2212" stroke-width="0.7"/>
<circle cx="596.0" cy="699.4" r="0.7" fill="#3a2212"/>
<circle cx="601.1" cy="702.5" r="0.7" fill="#3a2212"/>
<circle cx="597.9" cy="695.4" r="0.7" fill="#3a2212"/>
<circle cx="602.2" cy="701.9" r="0.7" fill="#3a2212"/>
<circle cx="593.3" cy="702.5" r="0.7" fill="#3a2212"/>
<polygon points="562.9,745.0 564.9,721.3 559.3,707.3 548.3,707.9 537.4,712.7 540.0,727.5 552.9,747.5" fill="#6b472d" stroke="#3a2212" stroke-width="0.9"/>
<polygon points="564.7,720.6 559.3,707.3 548.3,707.9 537.4,712.7 539.8,726.8" fill="#866242" stroke="#3a2212" stroke-width="0.7"/>
<circle cx="553.1" cy="718.5" r="0.7" fill="#3a2212"/>
<circle cx="557.2" cy="716.3" r="0.7" fill="#3a2212"/>
<circle cx="553.5" cy="718.0" r="0.7" fill="#3a2212"/>
<circle cx="554.4" cy="718.4" r="0.7" fill="#3a2212"/>
<circle cx="547.7" cy="719.4" r="0.7" fill="#3a2212"/>
<polygon points="612.4,735.2 619.9,715.3 618.7,701.8 609.6,699.3 599.4,700.9 597.9,714.3 603.6,734.8" fill="#5c3b24" stroke="#3a2212" stroke-width="0.9"/>
<polygon points="619.9,714.6 618.7,701.8 609.6,699.3 599.4,700.9 598.0,713.7" fill="#7f5a40" stroke="#3a2212" stroke-width="0.7"/>
<circle cx="607.1" cy="706.8" r="0.7" fill="#3a2212"/>
<circle cx="610.2" cy="706.6" r="0.7" fill="#3a2212"/>
<circle cx="604.1" cy="703.6" r="0.7" fill="#3a2212"/>
<circle cx="612.0" cy="708.7" r="0.7" fill="#3a2212"/>
<circle cx="606.2" cy="705.4" r="0.7" fill="#3a2212"/>
<polygon points="142.7,735.8 145.8,710.5 142.1,694.4 133.1,693.5 123.9,696.7 125.2,713.1 134.5,736.9" fill="#5c3b24" stroke="#3a2212" stroke-width="0.9"/>
<polygon points="145.7,709.7 142.1,694.4 133.1,693.5 123.9,696.7 125.0,712.3" fill="#8b6746" stroke="#3a2212" stroke-width="0.7"/>
<circle cx="133.6" cy="699.5" r="0.7" fill="#3a2212"/>
<circle cx="134.8" cy="706.5" r="0.7" fill="#3a2212"/>
<circle cx="136.7" cy="705.6" r="0.7" fill="#3a2212"/>
<circle cx="129.5" cy="707.9" r="0.7" fill="#3a2212"/>
<circle cx="128.0" cy="702.3" r="0.7" fill="#3a2212"/>
<polygon points="588.0,744.9 592.7,724.6 589.7,711.7 580.3,710.6 570.5,713.6 570.9,726.7 579.3,745.7" fill="#6b472d" stroke="#3a2212" stroke-width="0.9"/>
<polygon points="592.6,724.0 589.7,711.7 580.3,710.6 570.5,713.6 570.8,726.1" fill="#916843" stroke="#3a2212" stroke-width="0.7"/>
<circle cx="578.3" cy="714.5" r="0.7" fill="#3a2212"/>
<circle cx="581.9" cy="714.2" r="0.7" fill="#3a2212"/>
<circle cx="583.7" cy="717.9" r="0.7" fill="#3a2212"/>
<circle cx="579.8" cy="715.3" r="0.7" fill="#3a2212"/>
<circle cx="584.7" cy="716.2" r="0.7" fill="#3a2212"/>
<polygon points="144.7,741.3 150.2,720.8 146.4,708.1 135.0,707.5 123.0,711.0 123.6,724.2 134.0,742.7" fill="#6b472d" stroke="#3a2212" stroke-width="0.9"/>
<polygon points="150.1,720.1 146.4,708.1 135.0,707.5 123.0,711.0 123.5,723.5" fill="#866242" stroke="#3a2212" stroke-width="0.7"/>
<circle cx="135.8" cy="715.1" r="0.7" fill="#3a2212"/>
<circle cx="133.4" cy="717.5" r="0.7" fill="#3a2212"/>
<circle cx="134.7" cy="717.7" r="0.7" fill="#3a2212"/>
<circle cx="142.1" cy="712.4" r="0.7" fill="#3a2212"/>
<circle cx="135.2" cy="718.4" r="0.7" fill="#3a2212"/>
<polygon points="563.6,750.7 565.5,725.8 559.6,711.1 548.3,711.9 536.9,716.8 539.8,732.4 553.3,753.4" fill="#734d31" stroke="#3a2212" stroke-width="0.9"/>
<polygon points="565.3,725.1 559.6,711.1 548.3,711.9 536.9,716.8 539.6,731.6" fill="#9e744f" stroke="#3a2212" stroke-width="0.7"/>
<circle cx="548.4" cy="723.7" r="0.7" fill="#3a2212"/>
<circle cx="557.8" cy="719.4" r="0.7" fill="#3a2212"/>
<circle cx="543.1" cy="723.5" r="0.7" fill="#3a2212"/>
<circle cx="550.5" cy="717.1" r="0.7" fill="#3a2212"/>
<circle cx="558.0" cy="720.8" r="0.7" fill="#3a2212"/>
<polygon points="133.5,742.9 137.4,722.7 132.9,710.6 121.9,710.7 110.7,714.9 112.2,727.6 123.4,744.9" fill="#6b472d" stroke="#3a2212" stroke-width="0.9"/>
<polygon points="137.3,722.1 132.9,710.6 121.9,710.7 110.7,714.9 112.0,727.0" fill="#94452e" stroke="#3a2212" stroke-width="0.7"/>
<circle cx="124.6" cy="715.5" r="0.7" fill="#3a2212"/>
<circle cx="116.6" cy="722.9" r="0.7" fill="#3a2212"/>
<circle cx="126.4" cy="718.3" r="0.7" fill="#3a2212"/>
<circle cx="122.9" cy="718.0" r="0.7" fill="#3a2212"/>
<circle cx="128.1" cy="720.5" r="0.7" fill="#3a2212"/>
<polygon points="189.7,754.5 200.2,733.3 200.9,718.1 191.6,714.6 180.8,714.8 177.4,729.5 180.6,752.9" fill="#734d31" stroke="#3a2212" stroke-width="0.9"/>
<polygon points="200.4,732.6 200.9,718.1 191.6,714.6 180.8,714.8 177.6,728.8" fill="#9a5238" stroke="#3a2212" stroke-width="0.7"/>
<circle cx="192.4" cy="722.4" r="0.7" fill="#3a2212"/>
<circle cx="194.0" cy="722.4" r="0.7" fill="#3a2212"/>
<circle cx="190.6" cy="720.8" r="0.7" fill="#3a2212"/>
<circle cx="186.0" cy="720.6" r="0.7" fill="#3a2212"/>
<circle cx="184.3" cy="723.6" r="0.7" fill="#3a2212"/>
<polygon points="139.1,754.6 141.3,729.9 137.0,714.5 128.0,713.9 118.8,717.5 120.6,733.4 130.8,755.9" fill="#5c3b24" stroke="#3a2212" stroke-width="0.9"/>
<polygon points="141.2,729.1 137.0,714.5 128.0,713.9 118.8,717.5 120.5,732.6" fill="#7f5a40" stroke="#3a2212" stroke-width="0.7"/>
<circle cx="123.5" cy="722.9" r="0.7" fill="#3a2212"/>
<circle cx="125.0" cy="723.1" r="0.7" fill="#3a2212"/>
<circle cx="123.7" cy="719.3" r="0.7" fill="#3a2212"/>
<circle cx="127.0" cy="723.8" r="0.7" fill="#3a2212"/>
<circle cx="129.7" cy="722.9" r="0.7" fill="#3a2212"/>
<polygon points="160.9,753.0 167.0,732.7 165.0,719.3 155.8,717.6 145.8,719.8 145.2,733.2 152.2,753.2" fill="#5c3b24" stroke="#3a2212" stroke-width="0.9"/>
<polygon points="167.0,732.1 165.0,719.3 155.8,717.6 145.8,719.8 145.2,732.5" fill="#8b6746" stroke="#3a2212" stroke-width="0.7"/>
<circle cx="152.6" cy="728.4" r="0.7" fill="#3a2212"/>
<circle cx="154.3" cy="728.0" r="0.7" fill="#3a2212"/>
<circle cx="149.6" cy="724.4" r="0.7" fill="#3a2212"/>
<circle cx="155.0" cy="725.5" r="0.7" fill="#3a2212"/>
<circle cx="160.2" cy="724.0" r="0.7" fill="#3a2212"/>
<polygon points="614.9,752.7 623.4,732.3 622.3,718.3 612.5,715.7 601.4,717.0 599.6,730.8 605.4,752.1" fill="#63422a" stroke="#3a2212" stroke-width="0.9"/>
<polygon points="623.4,731.6 622.3,718.3 612.5,715.7 601.4,717.0 599.6,730.1" fill="#916843" stroke="#3a2212" stroke-width="0.7"/>
<circle cx="611.0" cy="720.8" r="0.7" fill="#3a2212"/>
<circle cx="613.0" cy="727.3" r="0.7" fill="#3a2212"/>
<circle cx="609.1" cy="726.6" r="0.7" fill="#3a2212"/>
<circle cx="618.8" cy="728.0" r="0.7" fill="#3a2212"/>
<circle cx="615.7" cy="724.0" r="0.7" fill="#3a2212"/>
<polygon points="129.4,751.5 132.7,730.3 127.6,717.9 116.2,718.5 104.8,723.2 106.8,736.4 119.1,753.9" fill="#63422a" stroke="#3a2212" stroke-width="0.9"/>
<polygon points="132.5,729.7 127.6,717.9 116.2,718.5 104.8,723.2 106.6,735.7" fill="#946c4c" stroke="#3a2212" stroke-width="0.7"/>
<circle cx="111.4" cy="726.8" r="0.7" fill="#3a2212"/>
<circle cx="114.9" cy="726.1" r="0.7" fill="#3a2212"/>
<circle cx="123.9" cy="720.6" r="0.7" fill="#3a2212"/>
<circle cx="121.8" cy="728.3" r="0.7" fill="#3a2212"/>
<circle cx="112.3" cy="728.8" r="0.7" fill="#3a2212"/>
<polygon points="146.6,768.7 151.1,743.6 146.8,727.8 135.6,727.3 123.9,730.9 125.1,747.1 136.2,770.1" fill="#6b472d" stroke="#3a2212" stroke-width="0.9"/>
<polygon points="151.0,742.8 146.8,727.8 135.6,727.3 123.9,730.9 125.0,746.3" fill="#8b6746" stroke="#3a2212" stroke-width="0.7"/>
<circle cx="139.0" cy="734.2" r="0.7" fill="#3a2212"/>
<circle cx="141.9" cy="732.0" r="0.7" fill="#3a2212"/>
<circle cx="132.5" cy="738.9" r="0.7" fill="#3a2212"/>
<circle cx="138.2" cy="735.7" r="0.7" fill="#3a2212"/>
<circle cx="142.7" cy="737.0" r="0.7" fill="#3a2212"/>
<polygon points="152.4,766.6 157.5,741.9 154.1,726.1 143.7,725.0 132.6,728.0 133.1,744.1 142.6,767.5" fill="#5c3b24" stroke="#3a2212" stroke-width="0.9"/>
<polygon points="157.4,741.1 154.1,726.1 143.7,725.0 132.6,728.0 133.0,743.3" fill="#8b6746" stroke="#3a2212" stroke-width="0.7"/>
<circle cx="138.8" cy="731.4" r="0.7" fill="#3a2212"/>
<circle cx="146.0" cy="729.8" r="0.7" fill="#3a2212"/>
<circle cx="140.2" cy="736.7" r="0.7" fill="#3a2212"/>
<circle cx="143.9" cy="733.1" r="0.7" fill="#3a2212"/>
<circle cx="138.4" cy="732.6" r="0.7" fill="#3a2212"/>
<polygon points="170.0,762.3 177.6,738.3 176.5,722.0 167.1,719.7 156.7,721.3 155.2,737.4 161.0,762.0" fill="#734d31" stroke="#3a2212" stroke-width="0.9"/>
<polygon points="177.7,737.5 176.5,722.0 167.1,719.7 156.7,721.3 155.2,736.6" fill="#9a7454" stroke="#3a2212" stroke-width="0.7"/>
<circle cx="172.4" cy="730.4" r="0.7" fill="#3a2212"/>
<circle cx="170.0" cy="730.3" r="0.7" fill="#3a2212"/>
<circle cx="172.1" cy="732.4" r="0.7" fill="#3a2212"/>
<circle cx="160.5" cy="733.1" r="0.7" fill="#3a2212"/>
<circle cx="166.0" cy="730.9" r="0.7" fill="#3a2212"/>
<polygon points="157.4,761.3 164.1,739.6 161.2,725.5 150.1,724.1 138.1,726.7 137.8,741.0 146.9,761.9" fill="#63422a" stroke="#3a2212" stroke-width="0.9"/>
<polygon points="164.1,738.8 161.2,725.5 150.1,724.1 138.1,726.7 137.8,740.3" fill="#946c4c" stroke="#3a2212" stroke-width="0.7"/>
<circle cx="145.7" cy="729.4" r="0.7" fill="#3a2212"/>
<circle cx="149.8" cy="731.6" r="0.7" fill="#3a2212"/>
<circle cx="151.3" cy="728.5" r="0.7" fill="#3a2212"/>
<circle cx="155.4" cy="734.4" r="0.7" fill="#3a2212"/>
<circle cx="148.3" cy="733.3" r="0.7" fill="#3a2212"/>
<polygon points="489.2,756.5 497.2,742.5 496.5,732.6 487.5,729.7 477.3,730.6 475.4,740.3 480.4,755.6" fill="#6b472d" stroke="#3a2212" stroke-width="0.9"/>
<polygon points="497.3,742.0 496.5,732.6 487.5,729.7 477.3,730.6 475.4,739.8" fill="#8b6746" stroke="#3a2212" stroke-width="0.7"/>
<circle cx="490.3" cy="738.6" r="0.7" fill="#3a2212"/>
<circle cx="484.0" cy="733.0" r="0.7" fill="#3a2212"/>
<circle cx="484.4" cy="734.0" r="0.7" fill="#3a2212"/>
<circle cx="487.2" cy="734.2" r="0.7" fill="#3a2212"/>
<circle cx="481.9" cy="735.6" r="0.7" fill="#3a2212"/>
<polygon points="507.0,764.9 514.9,750.8 514.5,740.7 506.0,737.7 496.3,738.5 494.3,748.3 498.7,763.9" fill="#5c3b24" stroke="#3a2212" stroke-width="0.9"/>
<polygon points="515.0,750.3 514.5,740.7 506.0,737.7 496.3,738.5 494.4,747.8" fill="#7a7f88" stroke="#3a2212" stroke-width="0.7"/>
<circle cx="501.8" cy="746.3" r="0.7" fill="#3a2212"/>
<circle cx="499.3" cy="744.1" r="0.7" fill="#3a2212"/>
<circle cx="509.3" cy="744.8" r="0.7" fill="#3a2212"/>
<circle cx="507.7" cy="741.5" r="0.7" fill="#3a2212"/>
<circle cx="499.9" cy="742.1" r="0.7" fill="#3a2212"/>
<polygon points="563.5,769.6 565.0,749.6 559.8,738.1 549.9,738.8 540.3,743.6 542.8,755.9 554.6,772.1" fill="#5c3b24" stroke="#3a2212" stroke-width="0.9"/>
<polygon points="564.8,749.0 559.8,738.1 549.9,738.8 540.3,743.6 542.7,755.3" fill="#765238" stroke="#3a2212" stroke-width="0.7"/>
<circle cx="550.5" cy="750.2" r="0.7" fill="#3a2212"/>
<circle cx="550.0" cy="750.5" r="0.7" fill="#3a2212"/>
<circle cx="548.8" cy="746.1" r="0.7" fill="#3a2212"/>
<circle cx="547.1" cy="749.4" r="0.7" fill="#3a2212"/>
<circle cx="552.5" cy="747.0" r="0.7" fill="#3a2212"/>
<polygon points="629.8,763.3 641.2,742.6 641.4,727.6 630.7,723.9 618.4,723.9 615.0,738.4 619.3,761.6" fill="#63422a" stroke="#3a2212" stroke-width="0.9"/>
<polygon points="641.3,741.9 641.4,727.6 630.7,723.9 618.4,723.9 615.1,737.6" fill="#7a7f88" stroke="#3a2212" stroke-width="0.7"/>
<circle cx="629.8" cy="733.5" r="0.7" fill="#3a2212"/>
<circle cx="622.9" cy="731.7" r="0.7" fill="#3a2212"/>
<circle cx="627.1" cy="727.5" r="0.7" fill="#3a2212"/>
<circle cx="634.9" cy="734.8" r="0.7" fill="#3a2212"/>
<circle cx="630.7" cy="734.2" r="0.7" fill="#3a2212"/>
<polygon points="279.2,769.0 287.9,750.9 287.6,738.1 278.7,735.1 268.5,735.9 266.1,748.4 270.5,768.0" fill="#734d31" stroke="#3a2212" stroke-width="0.9"/>
<polygon points="288.0,750.3 287.6,738.1 278.7,735.1 268.5,735.9 266.2,747.7" fill="#9a7454" stroke="#3a2212" stroke-width="0.7"/>
<circle cx="277.6" cy="745.6" r="0.7" fill="#3a2212"/>
<circle cx="274.8" cy="739.7" r="0.7" fill="#3a2212"/>
<circle cx="272.7" cy="739.4" r="0.7" fill="#3a2212"/>
<circle cx="276.1" cy="741.8" r="0.7" fill="#3a2212"/>
<circle cx="280.7" cy="745.2" r="0.7" fill="#3a2212"/>
<polygon points="478.3,761.8 485.1,749.5 484.1,740.9 475.9,738.3 466.6,739.7 465.2,748.1 470.3,761.3" fill="#734d31" stroke="#3a2212" stroke-width="0.9"/>
<polygon points="485.1,749.0 484.1,740.9 475.9,738.3 466.6,739.7 465.3,747.7" fill="#9a7454" stroke="#3a2212" stroke-width="0.7"/>
<circle cx="470.9" cy="743.5" r="0.7" fill="#3a2212"/>
<circle cx="481.5" cy="743.9" r="0.7" fill="#3a2212"/>
<circle cx="476.7" cy="745.7" r="0.7" fill="#3a2212"/>
<circle cx="477.4" cy="742.3" r="0.7" fill="#3a2212"/>
<circle cx="472.3" cy="744.6" r="0.7" fill="#3a2212"/>
<polygon points="153.7,767.0 159.7,743.1 156.3,727.8 145.1,726.8 133.1,729.8 133.4,745.3 143.2,767.9" fill="#63422a" stroke="#3a2212" stroke-width="0.9"/>
<polygon points="159.6,742.3 156.3,727.8 145.1,726.8 133.1,729.8 133.3,744.6" fill="#765238" stroke="#3a2212" stroke-width="0.7"/>
<circle cx="150.5" cy="732.7" r="0.7" fill="#3a2212"/>
<circle cx="149.9" cy="736.4" r="0.7" fill="#3a2212"/>
<circle cx="141.2" cy="737.0" r="0.7" fill="#3a2212"/>
<circle cx="149.8" cy="740.1" r="0.7" fill="#3a2212"/>
<circle cx="138.4" cy="733.7" r="0.7" fill="#3a2212"/>
<polygon points="245.3,773.7 249.5,754.6 246.4,742.6 237.1,741.7 227.5,744.9 228.1,757.2 236.8,774.8" fill="#6b472d" stroke="#3a2212" stroke-width="0.9"/>
<polygon points="249.5,754.0 246.4,742.6 237.1,741.7 227.5,744.9 228.1,756.6" fill="#916843" stroke="#3a2212" stroke-width="0.7"/>
<circle cx="235.9" cy="751.1" r="0.7" fill="#3a2212"/>
<circle cx="237.2" cy="750.2" r="0.7" fill="#3a2212"/>
<circle cx="239.7" cy="745.2" r="0.7" fill="#3a2212"/>
<circle cx="238.9" cy="745.8" r="0.7" fill="#3a2212"/>
<circle cx="236.0" cy="745.7" r="0.7" fill="#3a2212"/>
<polygon points="213.7,774.4 227.6,758.4 230.4,745.3 221.2,739.7 209.8,737.6 204.2,749.7 204.3,770.9" fill="#63422a" stroke="#3a2212" stroke-width="0.9"/>
<polygon points="227.9,757.8 230.4,745.3 221.2,739.7 209.8,737.6 204.5,749.1" fill="#a67a58" stroke="#3a2212" stroke-width="0.7"/>
<circle cx="217.9" cy="750.6" r="0.7" fill="#3a2212"/>
<circle cx="214.0" cy="741.9" r="0.7" fill="#3a2212"/>
<circle cx="218.1" cy="742.7" r="0.7" fill="#3a2212"/>
<circle cx="223.7" cy="744.6" r="0.7" fill="#3a2212"/>
<circle cx="213.8" cy="747.3" r="0.7" fill="#3a2212"/>
<polygon points="505.9,768.1 515.6,753.4 515.5,742.5 506.0,738.9 494.8,739.1 492.1,749.5 496.5,766.6" fill="#5c3b24" stroke="#3a2212" stroke-width="0.9"/>
<polygon points="515.7,752.9 515.5,742.5 506.0,738.9 494.8,739.1 492.2,749.0" fill="#9a7454" stroke="#3a2212" stroke-width="0.7"/>
<circle cx="505.0" cy="744.0" r="0.7" fill="#3a2212"/>
<circle cx="498.5" cy="742.0" r="0.7" fill="#3a2212"/>
<circle cx="501.6" cy="742.4" r="0.7" fill="#3a2212"/>
<circle cx="503.4" cy="742.2" r="0.7" fill="#3a2212"/>
<circle cx="504.2" cy="744.5" r="0.7" fill="#3a2212"/>
<polygon points="129.8,776.3 130.3,753.2 124.8,739.4 115.5,739.8 106.5,744.3 109.5,758.8 121.5,778.5" fill="#6b472d" stroke="#3a2212" stroke-width="0.9"/>
<polygon points="130.1,752.5 124.8,739.4 115.5,739.8 106.5,744.3 109.3,758.1" fill="#7f5a40" stroke="#3a2212" stroke-width="0.7"/>
<circle cx="113.8" cy="745.2" r="0.7" fill="#3a2212"/>
<circle cx="123.7" cy="746.4" r="0.7" fill="#3a2212"/>
<circle cx="113.4" cy="753.1" r="0.7" fill="#3a2212"/>
<circle cx="121.4" cy="750.0" r="0.7" fill="#3a2212"/>
<circle cx="120.7" cy="748.8" r="0.7" fill="#3a2212"/>
<polygon points="191.6,780.3 204.0,758.4 205.3,742.4 195.2,738.2 183.4,737.8 179.1,753.2 181.6,778.2" fill="#63422a" stroke="#3a2212" stroke-width="0.9"/>
<polygon points="204.2,757.7 205.3,742.4 195.2,738.2 183.4,737.8 179.2,752.4" fill="#9a5238" stroke="#3a2212" stroke-width="0.7"/>
<circle cx="199.1" cy="747.1" r="0.7" fill="#3a2212"/>
<circle cx="187.6" cy="745.4" r="0.7" fill="#3a2212"/>
<circle cx="199.4" cy="750.5" r="0.7" fill="#3a2212"/>
<circle cx="192.6" cy="748.5" r="0.7" fill="#3a2212"/>
<circle cx="196.9" cy="744.0" r="0.7" fill="#3a2212"/>
<polygon points="612.7,772.6 620.8,749.3 619.9,733.4 610.5,730.9 599.9,732.3 598.1,748.0 603.6,772.1" fill="#6b472d" stroke="#3a2212" stroke-width="0.9"/>
<polygon points="620.9,748.5 619.9,733.4 610.5,730.9 599.9,732.3 598.1,747.2" fill="#866242" stroke="#3a2212" stroke-width="0.7"/>
<circle cx="605.8" cy="744.1" r="0.7" fill="#3a2212"/>
<circle cx="608.6" cy="738.7" r="0.7" fill="#3a2212"/>
<circle cx="612.2" cy="735.1" r="0.7" fill="#3a2212"/>
<circle cx="608.8" cy="744.4" r="0.7" fill="#3a2212"/>
<circle cx="606.1" cy="741.8" r="0.7" fill="#3a2212"/>
<polygon points="485.6,771.2 493.5,755.7 492.3,744.9 482.8,742.4 472.1,743.7 470.5,754.3 476.5,770.7" fill="#734d31" stroke="#3a2212" stroke-width="0.9"/>
<polygon points="493.5,755.2 492.3,744.9 482.8,742.4 472.1,743.7 470.6,753.8" fill="#7f5a40" stroke="#3a2212" stroke-width="0.7"/>
<circle cx="479.4" cy="746.6" r="0.7" fill="#3a2212"/>
<circle cx="484.3" cy="749.0" r="0.7" fill="#3a2212"/>
<circle cx="485.4" cy="745.9" r="0.7" fill="#3a2212"/>
<circle cx="481.6" cy="752.0" r="0.7" fill="#3a2212"/>
<circle cx="487.4" cy="746.3" r="0.7" fill="#3a2212"/>
<polygon points="506.4,775.6 513.4,763.4 512.3,755.0 503.8,752.4 494.2,753.8 492.8,762.1 498.2,775.0" fill="#63422a" stroke="#3a2212" stroke-width="0.9"/>
<polygon points="513.4,763.0 512.3,755.0 503.8,752.4 494.2,753.8 492.8,761.7" fill="#9e744f" stroke="#3a2212" stroke-width="0.7"/>
<circle cx="500.6" cy="755.9" r="0.7" fill="#3a2212"/>
<circle cx="505.8" cy="757.3" r="0.7" fill="#3a2212"/>
<circle cx="503.5" cy="759.4" r="0.7" fill="#3a2212"/>
<circle cx="500.6" cy="757.2" r="0.7" fill="#3a2212"/>
<circle cx="505.0" cy="758.0" r="0.7" fill="#3a2212"/>
<polygon points="629.7,784.5 640.8,761.3 642.3,744.6 633.9,741.0 623.9,741.1 619.9,757.2 621.4,782.9" fill="#63422a" stroke="#3a2212" stroke-width="0.9"/>
<polygon points="640.9,760.4 642.3,744.6 633.9,741.0 623.9,741.1 620.0,756.4" fill="#9a7454" stroke="#3a2212" stroke-width="0.7"/>
<circle cx="632.1" cy="749.0" r="0.7" fill="#3a2212"/>
<circle cx="629.2" cy="745.1" r="0.7" fill="#3a2212"/>
<circle cx="631.8" cy="749.9" r="0.7" fill="#3a2212"/>
<circle cx="630.9" cy="753.0" r="0.7" fill="#3a2212"/>
<circle cx="630.5" cy="750.2" r="0.7" fill="#3a2212"/>
<polygon points="602.8,783.9 610.5,760.2 608.0,744.5 596.7,742.7 584.3,744.9 583.6,760.7 592.1,784.1" fill="#5c3b24" stroke="#3a2212" stroke-width="0.9"/>
<polygon points="610.4,759.4 608.0,744.5 596.7,742.7 584.3,744.9 583.5,759.9" fill="#8b6746" stroke="#3a2212" stroke-width="0.7"/>
<circle cx="592.5" cy="755.4" r="0.7" fill="#3a2212"/>
<circle cx="597.0" cy="749.3" r="0.7" fill="#3a2212"/>
<circle cx="603.2" cy="754.3" r="0.7" fill="#3a2212"/>
<circle cx="603.7" cy="750.4" r="0.7" fill="#3a2212"/>
<circle cx="592.7" cy="754.5" r="0.7" fill="#3a2212"/>
<polygon points="250.2,784.0 254.3,761.0 251.3,746.3 242.6,745.0 233.4,747.9 233.9,762.9 242.1,784.7" fill="#5c3b24" stroke="#3a2212" stroke-width="0.9"/>
<polygon points="254.2,760.3 251.3,746.3 242.6,745.0 233.4,747.9 233.9,762.1" fill="#9e744f" stroke="#3a2212" stroke-width="0.7"/>
<circle cx="241.0" cy="757.8" r="0.7" fill="#3a2212"/>
<circle cx="242.4" cy="749.3" r="0.7" fill="#3a2212"/>
<circle cx="248.9" cy="748.9" r="0.7" fill="#3a2212"/>
<circle cx="246.3" cy="756.2" r="0.7" fill="#3a2212"/>
<circle cx="244.4" cy="749.3" r="0.7" fill="#3a2212"/>
<polygon points="503.6,778.2 512.1,765.5 511.0,756.4 501.1,753.5 489.9,754.4 488.1,763.2 494.0,777.2" fill="#63422a" stroke="#3a2212" stroke-width="0.9"/>
<polygon points="512.1,765.1 511.0,756.4 501.1,753.5 489.9,754.4 488.1,762.7" fill="#765238" stroke="#3a2212" stroke-width="0.7"/>
<circle cx="505.5" cy="759.5" r="0.7" fill="#3a2212"/>
<circle cx="493.3" cy="759.5" r="0.7" fill="#3a2212"/>
<circle cx="506.0" cy="760.4" r="0.7" fill="#3a2212"/>
<circle cx="502.2" cy="761.3" r="0.7" fill="#3a2212"/>
<circle cx="497.0" cy="761.1" r="0.7" fill="#3a2212"/>
<polygon points="206.3,772.7 218.8,753.0 221.8,738.3 214.5,733.8 205.2,733.0 199.9,747.0 198.8,770.3" fill="#63422a" stroke="#3a2212" stroke-width="0.9"/>
<polygon points="219.0,752.3 221.8,738.3 214.5,733.8 205.2,733.0 200.1,746.3" fill="#765238" stroke="#3a2212" stroke-width="0.7"/>
<circle cx="216.6" cy="741.0" r="0.7" fill="#3a2212"/>
<circle cx="214.3" cy="744.9" r="0.7" fill="#3a2212"/>
<circle cx="213.7" cy="740.1" r="0.7" fill="#3a2212"/>
<circle cx="213.0" cy="741.4" r="0.7" fill="#3a2212"/>
<circle cx="214.8" cy="740.5" r="0.7" fill="#3a2212"/>
<polygon points="562.1,781.4 562.9,760.1 557.0,748.1 546.7,749.3 536.7,754.6 539.9,767.5 552.9,784.3" fill="#6b472d" stroke="#3a2212" stroke-width="0.9"/>
<polygon points="562.7,759.5 557.0,748.1 546.7,749.3 536.7,754.6 539.7,766.9" fill="#916843" stroke="#3a2212" stroke-width="0.7"/>
<circle cx="550.3" cy="758.0" r="0.7" fill="#3a2212"/>
<circle cx="550.4" cy="755.7" r="0.7" fill="#3a2212"/>
<circle cx="552.2" cy="758.5" r="0.7" fill="#3a2212"/>
<circle cx="550.5" cy="759.6" r="0.7" fill="#3a2212"/>
<circle cx="551.9" cy="756.2" r="0.7" fill="#3a2212"/>
<polygon points="562.3,773.5 562.9,748.0 556.2,733.2 544.8,734.6 533.6,740.1 537.2,755.9 552.0,776.6" fill="#6b472d" stroke="#3a2212" stroke-width="0.9"/>
<polygon points="562.7,747.2 556.2,733.2 544.8,734.6 533.6,740.1 537.0,755.1" fill="#916843" stroke="#3a2212" stroke-width="0.7"/>
<circle cx="554.3" cy="746.0" r="0.7" fill="#3a2212"/>
<circle cx="544.8" cy="746.9" r="0.7" fill="#3a2212"/>
<circle cx="543.9" cy="746.4" r="0.7" fill="#3a2212"/>
<circle cx="544.8" cy="746.3" r="0.7" fill="#3a2212"/>
<circle cx="545.2" cy="743.6" r="0.7" fill="#3a2212"/>
<polygon points="508.0,775.2 517.6,760.6 517.2,749.8 507.3,746.3 495.8,746.6 493.3,757.0 498.3,773.8" fill="#6b472d" stroke="#3a2212" stroke-width="0.9"/>
<polygon points="517.7,760.0 517.2,749.8 507.3,746.3 495.8,746.6 493.3,756.5" fill="#7f5a40" stroke="#3a2212" stroke-width="0.7"/>
<circle cx="505.0" cy="751.2" r="0.7" fill="#3a2212"/>
<circle cx="509.8" cy="755.4" r="0.7" fill="#3a2212"/>
<circle cx="504.3" cy="751.5" r="0.7" fill="#3a2212"/>
<circle cx="500.1" cy="750.9" r="0.7" fill="#3a2212"/>
<circle cx="512.4" cy="751.9" r="0.7" fill="#3a2212"/>
<polygon points="275.5,787.4 284.1,763.1 284.3,746.4 276.2,743.5 266.9,744.6 264.3,761.0 267.6,786.5" fill="#6b472d" stroke="#3a2212" stroke-width="0.9"/>
<polygon points="284.2,762.3 284.3,746.4 276.2,743.5 266.9,744.6 264.4,760.2" fill="#8b6746" stroke="#3a2212" stroke-width="0.7"/>
<circle cx="273.4" cy="751.2" r="0.7" fill="#3a2212"/>
<circle cx="278.2" cy="749.4" r="0.7" fill="#3a2212"/>
<circle cx="273.1" cy="751.1" r="0.7" fill="#3a2212"/>
<circle cx="272.1" cy="749.3" r="0.7" fill="#3a2212"/>
<circle cx="273.4" cy="757.6" r="0.7" fill="#3a2212"/>
<polygon points="638.2,781.7 650.1,765.7 651.1,753.4 641.0,748.8 629.1,747.9 625.1,759.6 628.2,779.2" fill="#5c3b24" stroke="#3a2212" stroke-width="0.9"/>
<polygon points="650.3,765.1 651.1,753.4 641.0,748.8 629.1,747.9 625.3,759.0" fill="#a67a58" stroke="#3a2212" stroke-width="0.7"/>
<circle cx="642.7" cy="758.1" r="0.7" fill="#3a2212"/>
<circle cx="640.2" cy="752.7" r="0.7" fill="#3a2212"/>
<circle cx="635.4" cy="753.6" r="0.7" fill="#3a2212"/>
<circle cx="633.1" cy="756.9" r="0.7" fill="#3a2212"/>
<circle cx="637.9" cy="752.1" r="0.7" fill="#3a2212"/>
<polygon points="331.6,786.3 334.6,763.2 330.0,749.1 319.6,749.1 309.0,753.1 310.8,767.8 322.0,788.1" fill="#734d31" stroke="#3a2212" stroke-width="0.9"/>
<polygon points="334.5,762.5 330.0,749.1 319.6,749.1 309.0,753.1 310.6,767.0" fill="#765238" stroke="#3a2212" stroke-width="0.7"/>
<circle cx="319.2" cy="756.4" r="0.7" fill="#3a2212"/>
<circle cx="327.2" cy="757.5" r="0.7" fill="#3a2212"/>
<circle cx="321.5" cy="761.6" r="0.7" fill="#3a2212"/>
<circle cx="326.0" cy="753.1" r="0.7" fill="#3a2212"/>
<circle cx="323.9" cy="757.9" r="0.7" fill="#3a2212"/>
<polygon points="227.2,776.6 230.0,756.0 224.7,744.1 213.5,745.0 202.3,750.0 204.5,762.7 217.0,779.3" fill="#63422a" stroke="#3a2212" stroke-width="0.9"/>
<polygon points="229.9,755.4 224.7,744.1 213.5,745.0 202.3,750.0 204.3,762.1" fill="#9a7454" stroke="#3a2212" stroke-width="0.7"/>
<circle cx="207.9" cy="750.2" r="0.7" fill="#3a2212"/>
<circle cx="222.5" cy="748.3" r="0.7" fill="#3a2212"/>
<circle cx="210.4" cy="755.4" r="0.7" fill="#3a2212"/>
<circle cx="212.0" cy="751.1" r="0.7" fill="#3a2212"/>
<circle cx="217.6" cy="754.4" r="0.7" fill="#3a2212"/>
<polygon points="610.7,781.1 618.8,761.4 617.5,748.0 607.5,745.5 596.4,747.1 594.8,760.4 601.1,780.7" fill="#63422a" stroke="#3a2212" stroke-width="0.9"/>
<polygon points="618.8,760.8 617.5,748.0 607.5,745.5 596.4,747.1 594.8,759.7" fill="#7f5a40" stroke="#3a2212" stroke-width="0.7"/>
<circle cx="606.0" cy="754.8" r="0.7" fill="#3a2212"/>
<circle cx="604.6" cy="751.6" r="0.7" fill="#3a2212"/>
<circle cx="608.1" cy="752.9" r="0.7" fill="#3a2212"/>
<circle cx="606.8" cy="750.9" r="0.7" fill="#3a2212"/>
<circle cx="607.9" cy="754.1" r="0.7" fill="#3a2212"/>
<polygon points="191.8,787.0 203.8,767.8 205.0,753.5 195.2,749.3 183.6,748.7 179.5,762.3 182.1,784.8" fill="#63422a" stroke="#3a2212" stroke-width="0.9"/>
<polygon points="203.9,767.1 205.0,753.5 195.2,749.3 183.6,748.7 179.7,761.6" fill="#9e744f" stroke="#3a2212" stroke-width="0.7"/>
<circle cx="200.6" cy="756.7" r="0.7" fill="#3a2212"/>
<circle cx="192.6" cy="760.2" r="0.7" fill="#3a2212"/>
<circle cx="192.8" cy="753.8" r="0.7" fill="#3a2212"/>
<circle cx="188.4" cy="753.8" r="0.7" fill="#3a2212"/>
<circle cx="195.7" cy="761.2" r="0.7" fill="#3a2212"/>
<polygon points="353.8,792.7 359.8,767.6 357.8,751.1 348.6,749.2 338.7,751.4 338.1,768.1 345.1,792.9" fill="#5c3b24" stroke="#3a2212" stroke-width="0.9"/>
<polygon points="359.8,766.8 357.8,751.1 348.6,749.2 338.7,751.4 338.1,767.2" fill="#765238" stroke="#3a2212" stroke-width="0.7"/>
<circle cx="352.1" cy="754.5" r="0.7" fill="#3a2212"/>
<circle cx="342.8" cy="758.3" r="0.7" fill="#3a2212"/>
<circle cx="346.0" cy="757.5" r="0.7" fill="#3a2212"/>
<circle cx="343.7" cy="758.6" r="0.7" fill="#3a2212"/>
<circle cx="352.6" cy="757.9" r="0.7" fill="#3a2212"/>
<polygon points="632.7,784.0 644.5,761.8 646.1,745.6 636.9,741.6 626.0,741.4 621.7,756.9 623.5,782.0" fill="#63422a" stroke="#3a2212" stroke-width="0.9"/>
<polygon points="644.7,761.0 646.1,745.6 636.9,741.6 626.0,741.4 621.9,756.1" fill="#765238" stroke="#3a2212" stroke-width="0.7"/>
<circle cx="640.9" cy="750.9" r="0.7" fill="#3a2212"/>
<circle cx="632.2" cy="747.5" r="0.7" fill="#3a2212"/>
<circle cx="636.7" cy="753.1" r="0.7" fill="#3a2212"/>
<circle cx="631.6" cy="747.9" r="0.7" fill="#3a2212"/>
<circle cx="634.6" cy="753.0" r="0.7" fill="#3a2212"/>
<polygon points="504.9,772.8 511.7,757.4 509.8,747.1 500.2,745.2 489.6,747.2 488.8,757.5 495.8,772.8" fill="#63422a" stroke="#3a2212" stroke-width="0.9"/>
<polygon points="511.7,756.8 509.8,747.1 500.2,745.2 489.6,747.2 488.8,757.0" fill="#916843" stroke="#3a2212" stroke-width="0.7"/>
<circle cx="502.8" cy="750.1" r="0.7" fill="#3a2212"/>
<circle cx="502.1" cy="754.3" r="0.7" fill="#3a2212"/>
<circle cx="497.1" cy="753.3" r="0.7" fill="#3a2212"/>
<circle cx="496.2" cy="750.5" r="0.7" fill="#3a2212"/>
<circle cx="495.6" cy="754.3" r="0.7" fill="#3a2212"/>
<polygon points="624.2,776.2 633.2,758.8 633.2,746.3 624.5,743.1 614.4,743.7 611.8,755.8 615.6,775.0" fill="#6b472d" stroke="#3a2212" stroke-width="0.9"/>
<polygon points="633.3,758.2 633.2,746.3 624.5,743.1 614.4,743.7 611.9,755.1" fill="#9e744f" stroke="#3a2212" stroke-width="0.7"/>
<circle cx="628.7" cy="747.8" r="0.7" fill="#3a2212"/>
<circle cx="624.2" cy="751.5" r="0.7" fill="#3a2212"/>
<circle cx="624.3" cy="752.8" r="0.7" fill="#3a2212"/>
<circle cx="625.7" cy="753.1" r="0.7" fill="#3a2212"/>
<circle cx="627.1" cy="754.3" r="0.7" fill="#3a2212"/>
<polygon points="255.2,784.2 261.4,762.9 258.6,749.0 248.1,747.6 236.8,750.3 236.7,764.3 245.3,784.8" fill="#734d31" stroke="#3a2212" stroke-width="0.9"/>
<polygon points="261.3,762.2 258.6,749.0 248.1,747.6 236.8,750.3 236.6,763.6" fill="#866242" stroke="#3a2212" stroke-width="0.7"/>
<circle cx="244.8" cy="759.0" r="0.7" fill="#3a2212"/>
<circle cx="252.5" cy="755.9" r="0.7" fill="#3a2212"/>
<circle cx="255.9" cy="755.0" r="0.7" fill="#3a2212"/>
<circle cx="241.9" cy="757.9" r="0.7" fill="#3a2212"/>
<circle cx="241.8" cy="755.6" r="0.7" fill="#3a2212"/>
<polygon points="283.8,790.3 293.9,768.9 294.8,753.6 286.5,750.2 276.7,750.5 273.3,765.3 275.6,788.9" fill="#63422a" stroke="#3a2212" stroke-width="0.9"/>
<polygon points="294.0,768.2 294.8,753.6 286.5,750.2 276.7,750.5 273.4,764.6" fill="#94452e" stroke="#3a2212" stroke-width="0.7"/>
<circle cx="290.4" cy="755.0" r="0.7" fill="#3a2212"/>
<circle cx="284.9" cy="755.0" r="0.7" fill="#3a2212"/>
<circle cx="280.4" cy="756.9" r="0.7" fill="#3a2212"/>
<circle cx="287.5" cy="756.3" r="0.7" fill="#3a2212"/>
<circle cx="279.3" cy="758.6" r="0.7" fill="#3a2212"/>
<polygon points="231.9,788.7 233.8,768.4 229.1,756.3 219.5,756.6 210.1,760.9 212.3,773.6 223.3,790.8" fill="#63422a" stroke="#3a2212" stroke-width="0.9"/>
<polygon points="233.7,767.8 229.1,756.3 219.5,756.6 210.1,760.9 212.1,773.0" fill="#916843" stroke="#3a2212" stroke-width="0.7"/>
<circle cx="218.7" cy="767.2" r="0.7" fill="#3a2212"/>
<circle cx="219.1" cy="766.7" r="0.7" fill="#3a2212"/>
<circle cx="219.1" cy="762.1" r="0.7" fill="#3a2212"/>
<circle cx="224.0" cy="764.8" r="0.7" fill="#3a2212"/>
<circle cx="226.4" cy="763.2" r="0.7" fill="#3a2212"/>
<polygon points="205.3,788.5 220.1,769.2 223.1,754.1 213.6,748.7 201.7,746.7 195.8,760.9 195.6,785.2" fill="#734d31" stroke="#3a2212" stroke-width="0.9"/>
<polygon points="220.3,768.5 223.1,754.1 213.6,748.7 201.7,746.7 196.0,760.2" fill="#765238" stroke="#3a2212" stroke-width="0.7"/>
<circle cx="212.5" cy="757.4" r="0.7" fill="#3a2212"/>
<circle cx="217.2" cy="754.5" r="0.7" fill="#3a2212"/>
<circle cx="212.7" cy="759.6" r="0.7" fill="#3a2212"/>
<circle cx="205.0" cy="756.3" r="0.7" fill="#3a2212"/>
<circle cx="216.3" cy="761.9" r="0.7" fill="#3a2212"/>
<polygon points="553.4,782.2 551.4,756.4 543.5,741.8 532.9,743.8 522.9,749.9 527.9,765.6 544.0,785.9" fill="#5c3b24" stroke="#3a2212" stroke-width="0.9"/>
<polygon points="551.1,755.7 543.5,741.8 532.9,743.8 522.9,749.9 527.6,764.9" fill="#916843" stroke="#3a2212" stroke-width="0.7"/>
<circle cx="529.4" cy="755.1" r="0.7" fill="#3a2212"/>
<circle cx="536.2" cy="757.3" r="0.7" fill="#3a2212"/>
<circle cx="533.8" cy="751.0" r="0.7" fill="#3a2212"/>
<circle cx="534.5" cy="758.4" r="0.7" fill="#3a2212"/>
<circle cx="541.2" cy="753.9" r="0.7" fill="#3a2212"/>
<polygon points="329.4,777.9 333.4,757.0 328.8,744.6 317.3,744.8 305.6,749.2 307.1,762.3 318.8,780.0" fill="#63422a" stroke="#3a2212" stroke-width="0.9"/>
<polygon points="333.3,756.4 328.8,744.6 317.3,744.8 305.6,749.2 307.0,761.6" fill="#9e744f" stroke="#3a2212" stroke-width="0.7"/>
<circle cx="321.1" cy="749.0" r="0.7" fill="#3a2212"/>
<circle cx="314.2" cy="750.2" r="0.7" fill="#3a2212"/>
<circle cx="325.9" cy="754.3" r="0.7" fill="#3a2212"/>
<circle cx="318.3" cy="749.3" r="0.7" fill="#3a2212"/>
<circle cx="313.4" cy="752.7" r="0.7" fill="#3a2212"/>
<polygon points="577.5,793.0 580.0,769.2 574.7,755.0 563.7,755.4 552.5,760.0 554.9,774.9 567.5,795.3" fill="#5c3b24" stroke="#3a2212" stroke-width="0.9"/>
<polygon points="579.8,768.5 574.7,755.0 563.7,755.4 552.5,760.0 554.7,774.2" fill="#9a7454" stroke="#3a2212" stroke-width="0.7"/>
<circle cx="571.6" cy="759.4" r="0.7" fill="#3a2212"/>
<circle cx="559.0" cy="763.2" r="0.7" fill="#3a2212"/>
<circle cx="564.8" cy="765.8" r="0.7" fill="#3a2212"/>
<circle cx="562.5" cy="764.5" r="0.7" fill="#3a2212"/>
<circle cx="566.3" cy="766.0" r="0.7" fill="#3a2212"/>
<polygon points="516.7,789.6 524.9,774.6 524.5,763.9 515.8,760.8 505.8,761.7 503.7,772.0 508.2,788.6" fill="#6b472d" stroke="#3a2212" stroke-width="0.9"/>
<polygon points="525.0,774.1 524.5,763.9 515.8,760.8 505.8,761.7 503.8,771.5" fill="#866242" stroke="#3a2212" stroke-width="0.7"/>
<circle cx="519.7" cy="764.8" r="0.7" fill="#3a2212"/>
<circle cx="510.1" cy="769.0" r="0.7" fill="#3a2212"/>
<circle cx="510.0" cy="768.7" r="0.7" fill="#3a2212"/>
<circle cx="515.9" cy="765.0" r="0.7" fill="#3a2212"/>
<circle cx="513.4" cy="767.4" r="0.7" fill="#3a2212"/>
<polygon points="369.8,783.8 378.7,763.0 378.3,748.5 369.1,745.6 358.6,746.6 356.3,760.8 360.9,783.0" fill="#63422a" stroke="#3a2212" stroke-width="0.9"/>
<polygon points="378.7,762.3 378.3,748.5 369.1,745.6 358.6,746.6 356.3,760.1" fill="#765238" stroke="#3a2212" stroke-width="0.7"/>
<circle cx="373.2" cy="751.1" r="0.7" fill="#3a2212"/>
<circle cx="371.9" cy="750.9" r="0.7" fill="#3a2212"/>
<circle cx="366.9" cy="756.7" r="0.7" fill="#3a2212"/>
<circle cx="366.6" cy="750.6" r="0.7" fill="#3a2212"/>
<circle cx="364.4" cy="752.9" r="0.7" fill="#3a2212"/>
<polygon points="202.8,792.3 216.7,771.8 220.2,756.1 212.2,751.3 202.1,750.0 196.2,764.8 194.6,789.6" fill="#63422a" stroke="#3a2212" stroke-width="0.9"/>
<polygon points="216.9,771.0 220.2,756.1 212.2,751.3 202.1,750.0 196.4,764.0" fill="#866242" stroke="#3a2212" stroke-width="0.7"/>
<circle cx="204.1" cy="761.3" r="0.7" fill="#3a2212"/>
<circle cx="211.0" cy="761.0" r="0.7" fill="#3a2212"/>
<circle cx="206.4" cy="762.5" r="0.7" fill="#3a2212"/>
<circle cx="213.8" cy="760.7" r="0.7" fill="#3a2212"/>
<circle cx="210.0" cy="756.2" r="0.7" fill="#3a2212"/>
<polygon points="284.3,783.2 294.6,759.9 295.6,743.4 287.1,740.0 277.1,740.4 273.5,756.4 275.8,781.8" fill="#5c3b24" stroke="#3a2212" stroke-width="0.9"/>
<polygon points="294.8,759.1 295.6,743.4 287.1,740.0 277.1,740.4 273.7,755.6" fill="#9a7454" stroke="#3a2212" stroke-width="0.7"/>
<circle cx="289.3" cy="745.7" r="0.7" fill="#3a2212"/>
<circle cx="284.4" cy="751.1" r="0.7" fill="#3a2212"/>
<circle cx="290.7" cy="754.2" r="0.7" fill="#3a2212"/>
<circle cx="280.4" cy="748.7" r="0.7" fill="#3a2212"/>
<circle cx="285.3" cy="750.6" r="0.7" fill="#3a2212"/>
<polygon points="291.4,790.0 301.7,773.9 302.7,761.8 294.5,757.8 284.6,757.5 281.0,769.1 283.1,788.1" fill="#5c3b24" stroke="#3a2212" stroke-width="0.9"/>
<polygon points="301.8,773.3 302.7,761.8 294.5,757.8 284.6,757.5 281.2,768.5" fill="#946c4c" stroke="#3a2212" stroke-width="0.7"/>
<circle cx="290.4" cy="762.3" r="0.7" fill="#3a2212"/>
<circle cx="295.3" cy="768.5" r="0.7" fill="#3a2212"/>
<circle cx="290.6" cy="761.2" r="0.7" fill="#3a2212"/>
<circle cx="297.8" cy="765.7" r="0.7" fill="#3a2212"/>
<circle cx="291.1" cy="764.3" r="0.7" fill="#3a2212"/>
<polygon points="274.0,792.3 281.6,773.8 281.4,761.0 273.5,758.2 264.5,759.3 262.5,771.9 266.4,791.5" fill="#6b472d" stroke="#3a2212" stroke-width="0.9"/>
<polygon points="281.7,773.2 281.4,761.0 273.5,758.2 264.5,759.3 262.6,771.3" fill="#9e744f" stroke="#3a2212" stroke-width="0.7"/>
<circle cx="278.7" cy="762.5" r="0.7" fill="#3a2212"/>
<circle cx="273.5" cy="769.6" r="0.7" fill="#3a2212"/>
<circle cx="267.7" cy="763.7" r="0.7" fill="#3a2212"/>
<circle cx="271.0" cy="764.2" r="0.7" fill="#3a2212"/>
<circle cx="268.4" cy="764.2" r="0.7" fill="#3a2212"/>
<polygon points="639.2,788.1 651.8,766.6 654.4,750.7 646.2,746.4 636.1,745.7 631.0,760.9 630.9,785.9" fill="#734d31" stroke="#3a2212" stroke-width="0.9"/>
<polygon points="652.0,765.8 654.4,750.7 646.2,746.4 636.1,745.7 631.2,760.1" fill="#916843" stroke="#3a2212" stroke-width="0.7"/>
<circle cx="639.1" cy="758.0" r="0.7" fill="#3a2212"/>
<circle cx="643.8" cy="753.5" r="0.7" fill="#3a2212"/>
<circle cx="640.5" cy="757.4" r="0.7" fill="#3a2212"/>
<circle cx="649.5" cy="754.7" r="0.7" fill="#3a2212"/>
<circle cx="641.7" cy="757.6" r="0.7" fill="#3a2212"/>
<polygon points="369.3,795.0 377.6,773.0 377.6,757.8 369.6,754.9 360.4,756.0 358.0,770.9 361.5,794.1" fill="#734d31" stroke="#3a2212" stroke-width="0.9"/>
<polygon points="377.7,772.3 377.6,757.8 369.6,754.9 360.4,756.0 358.1,770.2" fill="#a67a58" stroke="#3a2212" stroke-width="0.7"/>
<circle cx="368.6" cy="759.9" r="0.7" fill="#3a2212"/>
<circle cx="372.8" cy="767.4" r="0.7" fill="#3a2212"/>
<circle cx="369.6" cy="761.2" r="0.7" fill="#3a2212"/>
<circle cx="373.8" cy="764.4" r="0.7" fill="#3a2212"/>
<circle cx="367.1" cy="762.4" r="0.7" fill="#3a2212"/>
<polygon points="368.9,783.3 377.2,761.7 376.9,746.7 368.3,743.9 358.6,745.0 356.4,759.7 360.6,782.5" fill="#734d31" stroke="#3a2212" stroke-width="0.9"/>
<polygon points="377.2,760.9 376.9,746.7 368.3,743.9 358.6,745.0 356.4,759.0" fill="#8b6746" stroke="#3a2212" stroke-width="0.7"/>
<circle cx="365.3" cy="756.8" r="0.7" fill="#3a2212"/>
<circle cx="371.6" cy="752.2" r="0.7" fill="#3a2212"/>
<circle cx="361.8" cy="753.7" r="0.7" fill="#3a2212"/>
<circle cx="361.9" cy="747.5" r="0.7" fill="#3a2212"/>
<circle cx="367.6" cy="753.1" r="0.7" fill="#3a2212"/>
<polygon points="205.0,789.1 219.4,767.5 223.3,751.1 215.3,746.2 205.1,744.8 198.8,760.3 196.7,786.2" fill="#734d31" stroke="#3a2212" stroke-width="0.9"/>
<polygon points="219.7,766.7 223.3,751.1 215.3,746.2 205.1,744.8 199.1,759.6" fill="#a67a58" stroke="#3a2212" stroke-width="0.7"/>
<circle cx="207.4" cy="754.7" r="0.7" fill="#3a2212"/>
<circle cx="213.8" cy="751.2" r="0.7" fill="#3a2212"/>
<circle cx="210.3" cy="751.8" r="0.7" fill="#3a2212"/>
<circle cx="217.9" cy="755.2" r="0.7" fill="#3a2212"/>
<circle cx="216.9" cy="759.7" r="0.7" fill="#3a2212"/>
<polygon points="141.3,785.3 144.7,764.1 140.1,751.4 129.5,751.5 118.8,755.7 120.4,769.0 131.6,787.2" fill="#5c3b24" stroke="#3a2212" stroke-width="0.9"/>
<polygon points="144.5,763.5 140.1,751.4 129.5,751.5 118.8,755.7 120.3,768.3" fill="#916843" stroke="#3a2212" stroke-width="0.7"/>
<circle cx="128.8" cy="755.9" r="0.7" fill="#3a2212"/>
<circle cx="137.3" cy="758.5" r="0.7" fill="#3a2212"/>
<circle cx="124.4" cy="759.6" r="0.7" fill="#3a2212"/>
<circle cx="132.1" cy="761.9" r="0.7" fill="#3a2212"/>
<circle cx="124.9" cy="761.8" r="0.7" fill="#3a2212"/>
<polygon points="330.3,785.9 332.1,761.2 327.3,745.9 318.1,745.7 308.7,749.6 310.9,765.4 321.8,787.5" fill="#6b472d" stroke="#3a2212" stroke-width="0.9"/>
<polygon points="331.9,760.4 327.3,745.9 318.1,745.7 308.7,749.6 310.7,764.6" fill="#7f5a40" stroke="#3a2212" stroke-width="0.7"/>
<circle cx="324.6" cy="751.1" r="0.7" fill="#3a2212"/>
<circle cx="314.1" cy="758.1" r="0.7" fill="#3a2212"/>
<circle cx="315.7" cy="754.3" r="0.7" fill="#3a2212"/>
<circle cx="319.1" cy="757.3" r="0.7" fill="#3a2212"/>
<circle cx="317.2" cy="758.9" r="0.7" fill="#3a2212"/>
<polygon points="553.8,784.0 551.6,760.0 544.3,746.2 534.9,747.7 526.1,753.3 530.9,768.0 545.6,787.3" fill="#63422a" stroke="#3a2212" stroke-width="0.9"/>
<polygon points="551.3,759.2 544.3,746.2 534.9,747.7 526.1,753.3 530.6,767.3" fill="#9e744f" stroke="#3a2212" stroke-width="0.7"/>
<circle cx="534.5" cy="757.1" r="0.7" fill="#3a2212"/>
<circle cx="532.4" cy="753.5" r="0.7" fill="#3a2212"/>
<circle cx="543.1" cy="756.6" r="0.7" fill="#3a2212"/>
<circle cx="543.8" cy="753.1" r="0.7" fill="#3a2212"/>
<circle cx="536.5" cy="761.7" r="0.7" fill="#3a2212"/>
<polygon points="227.9,798.3 227.3,774.3 221.3,759.9 212.3,760.5 203.6,765.2 207.2,780.2 219.8,800.7" fill="#6b472d" stroke="#3a2212" stroke-width="0.9"/>
<polygon points="227.1,773.5 221.3,759.9 212.3,760.5 203.6,765.2 207.0,779.5" fill="#9a7454" stroke="#3a2212" stroke-width="0.7"/>
<circle cx="216.2" cy="772.9" r="0.7" fill="#3a2212"/>
<circle cx="213.9" cy="772.2" r="0.7" fill="#3a2212"/>
<circle cx="210.0" cy="774.8" r="0.7" fill="#3a2212"/>
<circle cx="212.9" cy="773.9" r="0.7" fill="#3a2212"/>
<circle cx="216.0" cy="772.9" r="0.7" fill="#3a2212"/>
<polygon points="466.8,794.4 473.0,779.0 471.5,768.7 462.8,766.7 453.3,768.6 452.4,778.9 458.5,794.3" fill="#63422a" stroke="#3a2212" stroke-width="0.9"/>
<polygon points="473.1,778.5 471.5,768.7 462.8,766.7 453.3,768.6 452.4,778.4" fill="#916843" stroke="#3a2212" stroke-width="0.7"/>
<circle cx="463.5" cy="774.1" r="0.7" fill="#3a2212"/>
<circle cx="463.0" cy="775.8" r="0.7" fill="#3a2212"/>
<circle cx="466.7" cy="771.2" r="0.7" fill="#3a2212"/>
<circle cx="456.7" cy="774.3" r="0.7" fill="#3a2212"/>
<circle cx="464.9" cy="771.1" r="0.7" fill="#3a2212"/>
<polygon points="619.0,785.3 627.5,767.4 627.2,754.7 618.3,751.7 608.2,752.6 605.9,764.9 610.3,784.3" fill="#5c3b24" stroke="#3a2212" stroke-width="0.9"/>
<polygon points="627.6,766.7 627.2,754.7 618.3,751.7 608.2,752.6 606.0,764.3" fill="#a67a58" stroke="#3a2212" stroke-width="0.7"/>
<circle cx="616.2" cy="761.3" r="0.7" fill="#3a2212"/>
<circle cx="615.5" cy="756.7" r="0.7" fill="#3a2212"/>
<circle cx="618.8" cy="759.5" r="0.7" fill="#3a2212"/>
<circle cx="612.3" cy="760.6" r="0.7" fill="#3a2212"/>
<circle cx="620.2" cy="760.2" r="0.7" fill="#3a2212"/>
<polygon points="276.1,787.5 284.7,765.4 284.8,750.0 276.3,747.1 266.7,748.1 264.2,763.1 267.9,786.6" fill="#6b472d" stroke="#3a2212" stroke-width="0.9"/>
<polygon points="284.8,764.6 284.8,750.0 276.3,747.1 266.7,748.1 264.3,762.4" fill="#946c4c" stroke="#3a2212" stroke-width="0.7"/>
<circle cx="271.9" cy="758.1" r="0.7" fill="#3a2212"/>
<circle cx="279.1" cy="752.7" r="0.7" fill="#3a2212"/>
<circle cx="271.0" cy="753.3" r="0.7" fill="#3a2212"/>
<circle cx="271.0" cy="758.8" r="0.7" fill="#3a2212"/>
<circle cx="270.6" cy="756.0" r="0.7" fill="#3a2212"/>
<polygon points="163.2,785.0 170.7,763.6 168.4,749.5 157.3,747.7 145.3,749.9 144.4,764.1 152.7,785.1" fill="#63422a" stroke="#3a2212" stroke-width="0.9"/>
<polygon points="170.7,762.9 168.4,749.5 157.3,747.7 145.3,749.9 144.4,763.3" fill="#a67a58" stroke="#3a2212" stroke-width="0.7"/>
<circle cx="164.1" cy="756.1" r="0.7" fill="#3a2212"/>
<circle cx="162.6" cy="754.4" r="0.7" fill="#3a2212"/>
<circle cx="151.9" cy="753.7" r="0.7" fill="#3a2212"/>
<circle cx="164.7" cy="753.3" r="0.7" fill="#3a2212"/>
<circle cx="151.2" cy="754.9" r="0.7" fill="#3a2212"/>
<polygon points="624.5,793.3 635.4,771.9 635.9,756.5 626.1,752.9 614.6,753.1 611.3,768.0 614.9,791.7" fill="#734d31" stroke="#3a2212" stroke-width="0.9"/>
<polygon points="635.5,771.1 635.9,756.5 626.1,752.9 614.6,753.1 611.4,767.2" fill="#a67a58" stroke="#3a2212" stroke-width="0.7"/>
<circle cx="630.3" cy="764.0" r="0.7" fill="#3a2212"/>
<circle cx="631.0" cy="757.7" r="0.7" fill="#3a2212"/>
<circle cx="630.0" cy="759.2" r="0.7" fill="#3a2212"/>
<circle cx="617.1" cy="764.6" r="0.7" fill="#3a2212"/>
<circle cx="626.4" cy="766.3" r="0.7" fill="#3a2212"/>
<polygon points="490.2,787.8 496.2,775.2 494.7,766.7 486.5,764.6 477.5,766.6 476.7,775.0 482.4,787.7" fill="#734d31" stroke="#3a2212" stroke-width="0.9"/>
<polygon points="496.2,774.7 494.7,766.7 486.5,764.6 477.5,766.6 476.7,774.6" fill="#a67a58" stroke="#3a2212" stroke-width="0.7"/>
<circle cx="486.5" cy="770.0" r="0.7" fill="#3a2212"/>
<circle cx="481.1" cy="771.3" r="0.7" fill="#3a2212"/>
<circle cx="484.1" cy="770.6" r="0.7" fill="#3a2212"/>
<circle cx="481.0" cy="772.8" r="0.7" fill="#3a2212"/>
<circle cx="485.5" cy="771.5" r="0.7" fill="#3a2212"/>
<polygon points="256.3,794.2 263.0,774.5 260.2,761.8 249.2,760.4 237.5,763.0 237.2,775.9 246.0,794.8" fill="#6b472d" stroke="#3a2212" stroke-width="0.9"/>
<polygon points="262.9,773.8 260.2,761.8 249.2,760.4 237.5,763.0 237.2,775.3" fill="#a67a58" stroke="#3a2212" stroke-width="0.7"/>
<circle cx="248.7" cy="769.4" r="0.7" fill="#3a2212"/>
<circle cx="249.7" cy="766.1" r="0.7" fill="#3a2212"/>
<circle cx="247.1" cy="767.0" r="0.7" fill="#3a2212"/>
<circle cx="251.1" cy="767.3" r="0.7" fill="#3a2212"/>
<circle cx="247.2" cy="764.9" r="0.7" fill="#3a2212"/>
<polygon points="141.0,795.0 142.2,770.5 137.3,755.3 128.4,755.1 119.5,759.1 122.0,774.7 132.9,796.7" fill="#734d31" stroke="#3a2212" stroke-width="0.9"/>
<polygon points="142.1,769.7 137.3,755.3 128.4,755.1 119.5,759.1 121.8,774.0" fill="#8b6746" stroke="#3a2212" stroke-width="0.7"/>
<circle cx="124.5" cy="760.8" r="0.7" fill="#3a2212"/>
<circle cx="130.3" cy="766.0" r="0.7" fill="#3a2212"/>
<circle cx="131.8" cy="761.4" r="0.7" fill="#3a2212"/>
<circle cx="129.7" cy="767.8" r="0.7" fill="#3a2212"/>
<circle cx="125.5" cy="762.7" r="0.7" fill="#3a2212"/>
<polygon points="204.3,788.7 217.6,773.2 219.7,760.6 210.1,755.3 198.3,753.5 193.3,765.1 194.6,785.4" fill="#6b472d" stroke="#3a2212" stroke-width="0.9"/>
<polygon points="217.8,772.6 219.7,760.6 210.1,755.3 198.3,753.5 193.5,764.5" fill="#86382a" stroke="#3a2212" stroke-width="0.7"/>
<circle cx="203.7" cy="764.8" r="0.7" fill="#3a2212"/>
<circle cx="206.3" cy="763.0" r="0.7" fill="#3a2212"/>
<circle cx="201.0" cy="763.6" r="0.7" fill="#3a2212"/>
<circle cx="215.7" cy="762.1" r="0.7" fill="#3a2212"/>
<circle cx="205.1" cy="759.8" r="0.7" fill="#3a2212"/>
<polygon points="590.1,788.5 593.9,765.1 590.5,750.2 581.3,749.2 571.8,752.3 572.7,767.5 581.6,789.5" fill="#5c3b24" stroke="#3a2212" stroke-width="0.9"/>
<polygon points="593.8,764.3 590.5,750.2 581.3,749.2 571.8,752.3 572.6,766.7" fill="#8b6746" stroke="#3a2212" stroke-width="0.7"/>
<circle cx="576.6" cy="761.5" r="0.7" fill="#3a2212"/>
<circle cx="587.0" cy="760.2" r="0.7" fill="#3a2212"/>
<circle cx="581.2" cy="760.2" r="0.7" fill="#3a2212"/>
<circle cx="586.5" cy="759.0" r="0.7" fill="#3a2212"/>
<circle cx="587.5" cy="754.0" r="0.7" fill="#3a2212"/>
<polygon points="339.1,787.5 343.0,768.0 339.6,755.7 330.5,754.9 321.1,758.1 321.9,770.7 330.7,788.6" fill="#734d31" stroke="#3a2212" stroke-width="0.9"/>
<polygon points="342.9,767.4 339.6,755.7 330.5,754.9 321.1,758.1 321.8,770.1" fill="#9a5238" stroke="#3a2212" stroke-width="0.7"/>
<circle cx="331.5" cy="760.7" r="0.7" fill="#3a2212"/>
<circle cx="329.8" cy="759.1" r="0.7" fill="#3a2212"/>
<circle cx="337.2" cy="761.2" r="0.7" fill="#3a2212"/>
<circle cx="330.9" cy="760.1" r="0.7" fill="#3a2212"/>
<circle cx="334.6" cy="759.6" r="0.7" fill="#3a2212"/>
<polygon points="563.9,796.1 563.7,775.0 557.6,762.8 548.2,764.0 539.2,769.2 542.7,782.2 555.5,799.0" fill="#5c3b24" stroke="#3a2212" stroke-width="0.9"/>
<polygon points="563.5,774.3 557.6,762.8 548.2,764.0 539.2,769.2 542.5,781.5" fill="#7f5a40" stroke="#3a2212" stroke-width="0.7"/>
<circle cx="550.4" cy="773.5" r="0.7" fill="#3a2212"/>
<circle cx="552.6" cy="770.9" r="0.7" fill="#3a2212"/>
<circle cx="555.6" cy="771.7" r="0.7" fill="#3a2212"/>
<circle cx="553.2" cy="768.1" r="0.7" fill="#3a2212"/>
<circle cx="550.8" cy="768.8" r="0.7" fill="#3a2212"/>
<polygon points="625.0,795.2 635.7,773.8 636.4,758.5 627.1,754.9 616.2,755.1 612.7,769.9 615.8,793.6" fill="#6b472d" stroke="#3a2212" stroke-width="0.9"/>
<polygon points="635.9,773.1 636.4,758.5 627.1,754.9 616.2,755.1 612.9,769.2" fill="#8b6746" stroke="#3a2212" stroke-width="0.7"/>
<circle cx="624.2" cy="761.8" r="0.7" fill="#3a2212"/>
<circle cx="627.1" cy="763.4" r="0.7" fill="#3a2212"/>
<circle cx="630.6" cy="766.6" r="0.7" fill="#3a2212"/>
<circle cx="631.8" cy="762.3" r="0.7" fill="#3a2212"/>
<circle cx="624.4" cy="760.6" r="0.7" fill="#3a2212"/>
<polygon points="127.4,794.4 126.4,770.5 119.8,756.5 110.3,757.6 101.2,762.8 105.3,777.6 119.0,797.3" fill="#734d31" stroke="#3a2212" stroke-width="0.9"/>
<polygon points="126.1,769.8 119.8,756.5 110.3,757.6 101.2,762.8 105.1,776.9" fill="#765238" stroke="#3a2212" stroke-width="0.7"/>
<circle cx="110.1" cy="768.5" r="0.7" fill="#3a2212"/>
<circle cx="118.1" cy="762.6" r="0.7" fill="#3a2212"/>
<circle cx="117.5" cy="767.6" r="0.7" fill="#3a2212"/>
<circle cx="109.2" cy="765.7" r="0.7" fill="#3a2212"/>
<circle cx="118.5" cy="767.8" r="0.7" fill="#3a2212"/>
<polygon points="283.4,791.2 292.6,773.4 293.2,760.6 285.2,757.2 275.9,757.7 272.9,770.0 275.6,789.9" fill="#63422a" stroke="#3a2212" stroke-width="0.9"/>
<polygon points="292.7,772.8 293.2,760.6 285.2,757.2 275.9,757.7 273.0,769.4" fill="#765238" stroke="#3a2212" stroke-width="0.7"/>
<circle cx="285.8" cy="765.0" r="0.7" fill="#3a2212"/>
<circle cx="285.6" cy="767.2" r="0.7" fill="#3a2212"/>
<circle cx="289.8" cy="761.8" r="0.7" fill="#3a2212"/>
<circle cx="288.5" cy="766.1" r="0.7" fill="#3a2212"/>
<circle cx="279.2" cy="766.7" r="0.7" fill="#3a2212"/>
<polygon points="198.6,799.4 213.1,779.4 215.8,763.8 205.8,758.6 193.7,756.9 188.0,771.5 188.5,796.2" fill="#6b472d" stroke="#3a2212" stroke-width="0.9"/>
<polygon points="213.4,778.6 215.8,763.8 205.8,758.6 193.7,756.9 188.2,770.7" fill="#866242" stroke="#3a2212" stroke-width="0.7"/>
<circle cx="199.4" cy="767.7" r="0.7" fill="#3a2212"/>
<circle cx="202.4" cy="768.2" r="0.7" fill="#3a2212"/>
<circle cx="200.2" cy="770.7" r="0.7" fill="#3a2212"/>
<circle cx="196.8" cy="766.9" r="0.7" fill="#3a2212"/>
<circle cx="207.1" cy="764.9" r="0.7" fill="#3a2212"/>
<polygon points="578.1,796.7 579.2,774.4 574.6,760.7 566.2,760.5 557.8,764.4 560.1,778.6 570.4,798.3" fill="#734d31" stroke="#3a2212" stroke-width="0.9"/>
<polygon points="579.1,773.7 574.6,760.7 566.2,760.5 557.8,764.4 559.9,777.9" fill="#765238" stroke="#3a2212" stroke-width="0.7"/>
<circle cx="568.9" cy="764.9" r="0.7" fill="#3a2212"/>
<circle cx="571.3" cy="770.3" r="0.7" fill="#3a2212"/>
<circle cx="566.1" cy="768.2" r="0.7" fill="#3a2212"/>
<circle cx="565.4" cy="766.5" r="0.7" fill="#3a2212"/>
<circle cx="563.4" cy="772.9" r="0.7" fill="#3a2212"/>
<polygon points="229.9,800.4 229.9,777.1 224.2,763.2 215.1,763.7 206.3,768.3 209.5,782.9 221.8,802.8" fill="#63422a" stroke="#3a2212" stroke-width="0.9"/>
<polygon points="229.7,776.4 224.2,763.2 215.1,763.7 206.3,768.3 209.3,782.2" fill="#946c4c" stroke="#3a2212" stroke-width="0.7"/>
<circle cx="214.0" cy="770.3" r="0.7" fill="#3a2212"/>
<circle cx="221.3" cy="767.4" r="0.7" fill="#3a2212"/>
<circle cx="213.3" cy="770.0" r="0.7" fill="#3a2212"/>
<circle cx="217.8" cy="767.5" r="0.7" fill="#3a2212"/>
<circle cx="221.6" cy="767.4" r="0.7" fill="#3a2212"/>
<polygon points="555.0,800.7 552.9,779.5 545.9,767.8 536.6,769.7 528.1,775.6 532.7,788.3 546.9,804.3" fill="#6b472d" stroke="#3a2212" stroke-width="0.9"/>
<polygon points="552.6,778.9 545.9,767.8 536.6,769.7 528.1,775.6 532.5,787.7" fill="#a67a58" stroke="#3a2212" stroke-width="0.7"/>
<circle cx="535.5" cy="782.5" r="0.7" fill="#3a2212"/>
<circle cx="537.3" cy="777.5" r="0.7" fill="#3a2212"/>
<circle cx="532.4" cy="776.1" r="0.7" fill="#3a2212"/>
<circle cx="542.7" cy="776.6" r="0.7" fill="#3a2212"/>
<circle cx="543.5" cy="774.3" r="0.7" fill="#3a2212"/>
<polygon points="619.0,800.1 629.4,778.6 629.2,763.3 618.6,760.0 606.5,760.6 603.6,775.5 608.7,798.9" fill="#734d31" stroke="#3a2212" stroke-width="0.9"/>
<polygon points="629.5,777.8 629.2,763.3 618.6,760.0 606.5,760.6 603.7,774.7" fill="#8b6746" stroke="#3a2212" stroke-width="0.7"/>
<circle cx="619.2" cy="771.3" r="0.7" fill="#3a2212"/>
<circle cx="620.9" cy="768.3" r="0.7" fill="#3a2212"/>
<circle cx="614.7" cy="767.0" r="0.7" fill="#3a2212"/>
<circle cx="613.4" cy="765.8" r="0.7" fill="#3a2212"/>
<circle cx="610.1" cy="766.9" r="0.7" fill="#3a2212"/>
<polygon points="147.7,799.9 150.9,774.9 146.5,759.4 136.2,759.0 125.7,762.8 127.3,778.8 138.3,801.5" fill="#6b472d" stroke="#3a2212" stroke-width="0.9"/>
<polygon points="150.8,774.1 146.5,759.4 136.2,759.0 125.7,762.8 127.2,778.0" fill="#8b6746" stroke="#3a2212" stroke-width="0.7"/>
<circle cx="143.7" cy="765.9" r="0.7" fill="#3a2212"/>
<circle cx="137.5" cy="769.3" r="0.7" fill="#3a2212"/>
<circle cx="144.5" cy="768.5" r="0.7" fill="#3a2212"/>
<circle cx="134.4" cy="772.3" r="0.7" fill="#3a2212"/>
<circle cx="133.5" cy="765.9" r="0.7" fill="#3a2212"/>
<polygon points="260.2,801.7 266.5,783.1 264.5,770.9 255.2,769.0 245.2,771.2 244.5,783.6 251.5,801.9" fill="#6b472d" stroke="#3a2212" stroke-width="0.9"/>
<polygon points="266.5,782.5 264.5,770.9 255.2,769.0 245.2,771.2 244.5,782.9" fill="#916843" stroke="#3a2212" stroke-width="0.7"/>
<circle cx="249.1" cy="776.2" r="0.7" fill="#3a2212"/>
<circle cx="256.2" cy="775.9" r="0.7" fill="#3a2212"/>
<circle cx="253.3" cy="779.7" r="0.7" fill="#3a2212"/>
<circle cx="255.9" cy="778.4" r="0.7" fill="#3a2212"/>
<circle cx="251.5" cy="780.3" r="0.7" fill="#3a2212"/>
<polygon points="247.8,807.7 252.1,783.3 247.8,768.1 237.0,767.7 225.7,771.3 226.9,786.9 237.7,809.1" fill="#6b472d" stroke="#3a2212" stroke-width="0.9"/>
<polygon points="251.9,782.6 247.8,768.1 237.0,767.7 225.7,771.3 226.8,786.2" fill="#a67a58" stroke="#3a2212" stroke-width="0.7"/>
<circle cx="238.1" cy="780.6" r="0.7" fill="#3a2212"/>
<circle cx="230.4" cy="774.6" r="0.7" fill="#3a2212"/>
<circle cx="234.5" cy="776.1" r="0.7" fill="#3a2212"/>
<circle cx="242.7" cy="773.3" r="0.7" fill="#3a2212"/>
<circle cx="241.9" cy="772.1" r="0.7" fill="#3a2212"/>
<polygon points="243.4,799.1 247.4,779.6 243.5,767.6 233.1,767.4 222.4,771.2 223.5,783.6 233.8,800.8" fill="#6b472d" stroke="#3a2212" stroke-width="0.9"/>
<polygon points="247.3,778.9 243.5,767.6 233.1,767.4 222.4,771.2 223.4,783.0" fill="#a67a58" stroke="#3a2212" stroke-width="0.7"/>
<circle cx="234.3" cy="777.0" r="0.7" fill="#3a2212"/>
<circle cx="233.1" cy="775.5" r="0.7" fill="#3a2212"/>
<circle cx="229.9" cy="771.9" r="0.7" fill="#3a2212"/>
<circle cx="228.8" cy="772.8" r="0.7" fill="#3a2212"/>
<circle cx="233.3" cy="773.4" r="0.7" fill="#3a2212"/>
<polygon points="381.7,796.4 392.5,777.4 393.5,763.4 384.5,759.5 373.8,759.4 370.2,772.8 372.7,794.6" fill="#734d31" stroke="#3a2212" stroke-width="0.9"/>
<polygon points="392.7,776.7 393.5,763.4 384.5,759.5 373.8,759.4 370.3,772.2" fill="#9a5238" stroke="#3a2212" stroke-width="0.7"/>
<circle cx="379.8" cy="770.2" r="0.7" fill="#3a2212"/>
<circle cx="383.6" cy="771.6" r="0.7" fill="#3a2212"/>
<circle cx="384.9" cy="769.3" r="0.7" fill="#3a2212"/>
<circle cx="385.5" cy="770.4" r="0.7" fill="#3a2212"/>
<circle cx="383.5" cy="769.7" r="0.7" fill="#3a2212"/>
<polygon points="140.9,795.0 143.2,770.0 137.8,754.9 126.8,755.2 115.8,759.7 118.2,775.5 130.9,797.2" fill="#734d31" stroke="#3a2212" stroke-width="0.9"/>
<polygon points="143.0,769.2 137.8,754.9 126.8,755.2 115.8,759.7 118.0,774.7" fill="#916843" stroke="#3a2212" stroke-width="0.7"/>
<circle cx="124.9" cy="760.3" r="0.7" fill="#3a2212"/>
<circle cx="123.4" cy="761.7" r="0.7" fill="#3a2212"/>
<circle cx="121.9" cy="761.8" r="0.7" fill="#3a2212"/>
<circle cx="130.7" cy="762.9" r="0.7" fill="#3a2212"/>
<circle cx="125.4" cy="765.1" r="0.7" fill="#3a2212"/>
<polygon points="639.5,811.1 654.3,790.0 657.6,773.7 648.3,768.5 636.8,766.8 630.7,782.2 630.0,807.9" fill="#63422a" stroke="#3a2212" stroke-width="0.9"/>
<polygon points="654.6,789.2 657.6,773.7 648.3,768.5 636.8,766.8 630.9,781.4" fill="#a67a58" stroke="#3a2212" stroke-width="0.7"/>
<circle cx="641.2" cy="779.2" r="0.7" fill="#3a2212"/>
<circle cx="642.7" cy="776.6" r="0.7" fill="#3a2212"/>
<circle cx="648.0" cy="777.6" r="0.7" fill="#3a2212"/>
<circle cx="642.7" cy="780.1" r="0.7" fill="#3a2212"/>
<circle cx="642.4" cy="780.1" r="0.7" fill="#3a2212"/>
<polygon points="288.4,795.3 299.7,777.4 300.5,764.0 291.0,759.9 279.6,759.6 275.9,772.3 278.9,793.2" fill="#63422a" stroke="#3a2212" stroke-width="0.9"/>
<polygon points="299.8,776.7 300.5,764.0 291.0,759.9 279.6,759.6 276.1,771.7" fill="#9a7454" stroke="#3a2212" stroke-width="0.7"/>
<circle cx="287.4" cy="763.2" r="0.7" fill="#3a2212"/>
<circle cx="292.6" cy="765.9" r="0.7" fill="#3a2212"/>
<circle cx="292.9" cy="771.0" r="0.7" fill="#3a2212"/>
<circle cx="291.0" cy="771.8" r="0.7" fill="#3a2212"/>
<circle cx="292.2" cy="764.7" r="0.7" fill="#3a2212"/>
<polygon points="273.8,806.0 283.4,783.8 283.0,768.4 273.0,765.3 261.7,766.2 259.2,781.4 264.2,805.0" fill="#734d31" stroke="#3a2212" stroke-width="0.9"/>
<polygon points="283.5,783.1 283.0,768.4 273.0,765.3 261.7,766.2 259.3,780.6" fill="#866242" stroke="#3a2212" stroke-width="0.7"/>
<circle cx="268.3" cy="777.7" r="0.7" fill="#3a2212"/>
<circle cx="275.4" cy="777.0" r="0.7" fill="#3a2212"/>
<circle cx="274.2" cy="770.2" r="0.7" fill="#3a2212"/>
<circle cx="270.2" cy="770.0" r="0.7" fill="#3a2212"/>
<circle cx="275.3" cy="777.7" r="0.7" fill="#3a2212"/>
<polygon points="270.1,804.1 278.3,784.1 277.4,770.3 268.0,767.7 257.5,769.0 255.6,782.6 261.0,803.5" fill="#5c3b24" stroke="#3a2212" stroke-width="0.9"/>
<polygon points="278.4,783.4 277.4,770.3 268.0,767.7 257.5,769.0 255.7,781.9" fill="#9e744f" stroke="#3a2212" stroke-width="0.7"/>
<circle cx="264.9" cy="771.5" r="0.7" fill="#3a2212"/>
<circle cx="273.8" cy="779.2" r="0.7" fill="#3a2212"/>
<circle cx="262.5" cy="772.4" r="0.7" fill="#3a2212"/>
<circle cx="272.4" cy="777.5" r="0.7" fill="#3a2212"/>
<circle cx="266.2" cy="777.1" r="0.7" fill="#3a2212"/>
<polygon points="468.9,795.7 475.8,782.4 473.5,773.8 463.1,772.2 451.9,774.6 451.3,783.3 459.1,796.0" fill="#6b472d" stroke="#3a2212" stroke-width="0.9"/>
<polygon points="475.7,782.0 473.5,773.8 463.1,772.2 451.9,774.6 451.2,782.8" fill="#916843" stroke="#3a2212" stroke-width="0.7"/>
<circle cx="456.4" cy="776.3" r="0.7" fill="#3a2212"/>
<circle cx="461.7" cy="776.2" r="0.7" fill="#3a2212"/>
<circle cx="464.5" cy="776.3" r="0.7" fill="#3a2212"/>
<circle cx="463.7" cy="778.7" r="0.7" fill="#3a2212"/>
<circle cx="469.8" cy="780.3" r="0.7" fill="#3a2212"/>
<polygon points="595.4,808.7 600.5,783.8 597.1,767.9 586.8,766.8 575.9,769.7 576.4,786.0 585.8,809.5" fill="#734d31" stroke="#3a2212" stroke-width="0.9"/>
<polygon points="600.4,783.0 597.1,767.9 586.8,766.8 575.9,769.7 576.3,785.1" fill="#916843" stroke="#3a2212" stroke-width="0.7"/>
<circle cx="590.0" cy="778.2" r="0.7" fill="#3a2212"/>
<circle cx="592.5" cy="770.5" r="0.7" fill="#3a2212"/>
<circle cx="582.5" cy="773.2" r="0.7" fill="#3a2212"/>
<circle cx="584.6" cy="778.0" r="0.7" fill="#3a2212"/>
<circle cx="593.4" cy="774.6" r="0.7" fill="#3a2212"/>
<polygon points="456.7,799.1 462.7,784.5 460.7,774.9 451.6,773.2 441.7,775.5 441.2,785.2 448.1,799.4" fill="#6b472d" stroke="#3a2212" stroke-width="0.9"/>
<polygon points="462.7,784.0 460.7,774.9 451.6,773.2 441.7,775.5 441.2,784.7" fill="#a67a58" stroke="#3a2212" stroke-width="0.7"/>
<circle cx="450.8" cy="778.1" r="0.7" fill="#3a2212"/>
<circle cx="454.2" cy="781.9" r="0.7" fill="#3a2212"/>
<circle cx="448.2" cy="780.8" r="0.7" fill="#3a2212"/>
<circle cx="449.9" cy="778.8" r="0.7" fill="#3a2212"/>
<circle cx="446.0" cy="779.6" r="0.7" fill="#3a2212"/>
<polygon points="593.1,795.9 598.5,775.0 595.2,761.8 584.6,760.8 573.4,763.9 573.7,777.5 583.2,796.9" fill="#5c3b24" stroke="#3a2212" stroke-width="0.9"/>
<polygon points="598.4,774.3 595.2,761.8 584.6,760.8 573.4,763.9 573.7,776.8" fill="#8b6746" stroke="#3a2212" stroke-width="0.7"/>
<circle cx="580.3" cy="772.4" r="0.7" fill="#3a2212"/>
<circle cx="581.9" cy="766.7" r="0.7" fill="#3a2212"/>
<circle cx="582.0" cy="767.9" r="0.7" fill="#3a2212"/>
<circle cx="577.9" cy="767.8" r="0.7" fill="#3a2212"/>
<circle cx="591.0" cy="770.1" r="0.7" fill="#3a2212"/>
<polygon points="188.9,810.9 200.9,793.2 202.3,779.7 193.0,775.3 181.8,774.5 177.6,787.3 179.6,808.5" fill="#6b472d" stroke="#3a2212" stroke-width="0.9"/>
<polygon points="201.1,792.5 202.3,779.7 193.0,775.3 181.8,774.5 177.7,786.6" fill="#866242" stroke="#3a2212" stroke-width="0.7"/>
<circle cx="190.3" cy="783.4" r="0.7" fill="#3a2212"/>
<circle cx="190.5" cy="786.8" r="0.7" fill="#3a2212"/>
<circle cx="189.0" cy="783.0" r="0.7" fill="#3a2212"/>
<circle cx="197.1" cy="782.2" r="0.7" fill="#3a2212"/>
<circle cx="188.2" cy="783.0" r="0.7" fill="#3a2212"/>
<polygon points="326.2,804.7 327.3,780.0 321.3,765.3 310.6,766.1 300.0,771.1 303.1,786.5 316.5,807.3" fill="#5c3b24" stroke="#3a2212" stroke-width="0.9"/>
<polygon points="327.1,779.2 321.3,765.3 310.6,766.1 300.0,771.1 302.9,785.7" fill="#9a7454" stroke="#3a2212" stroke-width="0.7"/>
<circle cx="314.5" cy="774.1" r="0.7" fill="#3a2212"/>
<circle cx="316.1" cy="773.8" r="0.7" fill="#3a2212"/>
<circle cx="308.8" cy="780.1" r="0.7" fill="#3a2212"/>
<circle cx="309.6" cy="772.7" r="0.7" fill="#3a2212"/>
<circle cx="317.0" cy="772.1" r="0.7" fill="#3a2212"/>
<polygon points="615.8,795.8 625.1,777.0 624.3,763.9 613.8,760.9 602.1,761.9 599.9,774.8 605.7,794.9" fill="#734d31" stroke="#3a2212" stroke-width="0.9"/>
<polygon points="625.2,776.4 624.3,763.9 613.8,760.9 602.1,761.9 599.9,774.1" fill="#946c4c" stroke="#3a2212" stroke-width="0.7"/>
<circle cx="607.5" cy="770.3" r="0.7" fill="#3a2212"/>
<circle cx="616.4" cy="770.5" r="0.7" fill="#3a2212"/>
<circle cx="608.9" cy="769.9" r="0.7" fill="#3a2212"/>
<circle cx="608.8" cy="765.5" r="0.7" fill="#3a2212"/>
<circle cx="617.8" cy="767.2" r="0.7" fill="#3a2212"/>
<polygon points="603.7,801.7 609.5,779.6 607.9,764.9 599.9,762.9 591.1,764.9 590.3,779.6 596.1,801.7" fill="#734d31" stroke="#3a2212" stroke-width="0.9"/>
<polygon points="609.5,778.9 607.9,764.9 599.9,762.9 591.1,764.9 590.3,778.9" fill="#7f5a40" stroke="#3a2212" stroke-width="0.7"/>
<circle cx="599.1" cy="768.8" r="0.7" fill="#3a2212"/>
<circle cx="604.1" cy="768.3" r="0.7" fill="#3a2212"/>
<circle cx="599.9" cy="771.1" r="0.7" fill="#3a2212"/>
<circle cx="600.1" cy="769.4" r="0.7" fill="#3a2212"/>
<circle cx="604.9" cy="767.0" r="0.7" fill="#3a2212"/>
<polygon points="563.5,798.9 563.2,776.1 556.5,763.2 546.1,764.8 536.2,770.5 540.1,784.4 554.3,802.2" fill="#63422a" stroke="#3a2212" stroke-width="0.9"/>
<polygon points="562.9,775.5 556.5,763.2 546.1,764.8 536.2,770.5 539.9,783.7" fill="#7f5a40" stroke="#3a2212" stroke-width="0.7"/>
<circle cx="555.1" cy="773.9" r="0.7" fill="#3a2212"/>
<circle cx="551.5" cy="772.8" r="0.7" fill="#3a2212"/>
<circle cx="546.2" cy="777.9" r="0.7" fill="#3a2212"/>
<circle cx="542.9" cy="771.8" r="0.7" fill="#3a2212"/>
<circle cx="548.5" cy="773.0" r="0.7" fill="#3a2212"/>
<polygon points="580.9,806.2 583.6,783.6 578.6,770.1 567.8,770.5 556.9,774.9 559.0,789.1 571.1,808.4" fill="#6b472d" stroke="#3a2212" stroke-width="0.9"/>
<polygon points="583.5,782.9 578.6,770.1 567.8,770.5 556.9,774.9 558.8,788.4" fill="#765238" stroke="#3a2212" stroke-width="0.7"/>
<circle cx="567.7" cy="775.0" r="0.7" fill="#3a2212"/>
<circle cx="563.4" cy="781.6" r="0.7" fill="#3a2212"/>
<circle cx="567.7" cy="781.2" r="0.7" fill="#3a2212"/>
<circle cx="567.4" cy="780.0" r="0.7" fill="#3a2212"/>
<circle cx="574.4" cy="775.3" r="0.7" fill="#3a2212"/>
<polygon points="276.2,798.9 286.1,779.2 285.6,765.2 275.2,762.0 263.3,762.7 260.8,776.3 266.1,797.8" fill="#5c3b24" stroke="#3a2212" stroke-width="0.9"/>
<polygon points="286.2,778.5 285.6,765.2 275.2,762.0 263.3,762.7 260.8,775.6" fill="#a67a58" stroke="#3a2212" stroke-width="0.7"/>
<circle cx="268.3" cy="766.7" r="0.7" fill="#3a2212"/>
<circle cx="281.4" cy="774.5" r="0.7" fill="#3a2212"/>
<circle cx="272.9" cy="770.1" r="0.7" fill="#3a2212"/>
<circle cx="280.5" cy="768.3" r="0.7" fill="#3a2212"/>
<circle cx="278.8" cy="771.6" r="0.7" fill="#3a2212"/>
<polygon points="598.7,798.4 605.5,779.1 602.7,766.6 591.7,765.2 579.8,767.9 579.4,780.6 588.3,799.0" fill="#6b472d" stroke="#3a2212" stroke-width="0.9"/>
<polygon points="605.5,778.5 602.7,766.6 591.7,765.2 579.8,767.9 579.4,779.9" fill="#765238" stroke="#3a2212" stroke-width="0.7"/>
<circle cx="585.5" cy="776.9" r="0.7" fill="#3a2212"/>
<circle cx="586.1" cy="773.9" r="0.7" fill="#3a2212"/>
<circle cx="599.8" cy="771.0" r="0.7" fill="#3a2212"/>
<circle cx="596.1" cy="774.2" r="0.7" fill="#3a2212"/>
<circle cx="593.9" cy="772.0" r="0.7" fill="#3a2212"/>
<polygon points="149.1,815.1 151.9,790.7 147.4,775.5 137.6,775.2 127.5,779.0 129.3,794.6 140.1,816.7" fill="#734d31" stroke="#3a2212" stroke-width="0.9"/>
<polygon points="151.7,790.0 147.4,775.5 137.6,775.2 127.5,779.0 129.2,793.8" fill="#9e744f" stroke="#3a2212" stroke-width="0.7"/>
<circle cx="139.2" cy="782.1" r="0.7" fill="#3a2212"/>
<circle cx="135.9" cy="787.5" r="0.7" fill="#3a2212"/>
<circle cx="140.2" cy="779.3" r="0.7" fill="#3a2212"/>
<circle cx="139.1" cy="784.0" r="0.7" fill="#3a2212"/>
<circle cx="140.3" cy="780.3" r="0.7" fill="#3a2212"/>
<polygon points="268.8,814.0 277.8,794.8 276.4,781.7 265.4,779.1 253.1,780.4 251.4,793.4 258.2,813.4" fill="#63422a" stroke="#3a2212" stroke-width="0.9"/>
<polygon points="277.9,794.2 276.4,781.7 265.4,779.1 253.1,780.4 251.4,792.8" fill="#765238" stroke="#3a2212" stroke-width="0.7"/>
<circle cx="272.5" cy="788.6" r="0.7" fill="#3a2212"/>
<circle cx="259.7" cy="784.8" r="0.7" fill="#3a2212"/>
<circle cx="264.0" cy="784.2" r="0.7" fill="#3a2212"/>
<circle cx="270.9" cy="790.7" r="0.7" fill="#3a2212"/>
<circle cx="263.6" cy="789.0" r="0.7" fill="#3a2212"/>
<polygon points="348.1,807.5 353.6,788.3 350.8,776.1 340.9,774.8 330.5,777.6 330.5,790.1 338.8,808.2" fill="#5c3b24" stroke="#3a2212" stroke-width="0.9"/>
<polygon points="353.5,787.7 350.8,776.1 340.9,774.8 330.5,777.6 330.4,789.5" fill="#9a7454" stroke="#3a2212" stroke-width="0.7"/>
<circle cx="343.6" cy="779.1" r="0.7" fill="#3a2212"/>
<circle cx="347.7" cy="782.5" r="0.7" fill="#3a2212"/>
<circle cx="339.1" cy="784.5" r="0.7" fill="#3a2212"/>
<circle cx="339.6" cy="781.9" r="0.7" fill="#3a2212"/>
<circle cx="336.2" cy="782.1" r="0.7" fill="#3a2212"/>
<polygon points="248.1,802.6 251.5,782.2 248.3,769.4 240.1,768.3 231.6,771.4 232.4,784.6 240.5,803.5" fill="#6b472d" stroke="#3a2212" stroke-width="0.9"/>
<polygon points="251.4,781.6 248.3,769.4 240.1,768.3 231.6,771.4 232.4,783.9" fill="#8b6746" stroke="#3a2212" stroke-width="0.7"/>
<circle cx="237.8" cy="778.5" r="0.7" fill="#3a2212"/>
<circle cx="237.3" cy="774.7" r="0.7" fill="#3a2212"/>
<circle cx="241.1" cy="773.2" r="0.7" fill="#3a2212"/>
<circle cx="243.7" cy="778.7" r="0.7" fill="#3a2212"/>
<circle cx="238.4" cy="772.3" r="0.7" fill="#3a2212"/>
<polygon points="166.3,814.3 173.7,792.4 172.0,777.7 162.3,775.5 151.5,777.4 150.3,792.0 156.9,814.1" fill="#63422a" stroke="#3a2212" stroke-width="0.9"/>
<polygon points="173.7,791.7 172.0,777.7 162.3,775.5 151.5,777.4 150.3,791.3" fill="#7f5a40" stroke="#3a2212" stroke-width="0.7"/>
<circle cx="166.9" cy="780.0" r="0.7" fill="#3a2212"/>
<circle cx="167.1" cy="780.0" r="0.7" fill="#3a2212"/>
<circle cx="160.2" cy="780.5" r="0.7" fill="#3a2212"/>
<circle cx="161.5" cy="787.1" r="0.7" fill="#3a2212"/>
<circle cx="168.3" cy="787.5" r="0.7" fill="#3a2212"/>
<polygon points="519.9,803.2 527.7,790.8 526.6,781.9 517.5,779.1 507.1,780.3 505.5,788.9 511.0,802.5" fill="#63422a" stroke="#3a2212" stroke-width="0.9"/>
<polygon points="527.7,790.3 526.6,781.9 517.5,779.1 507.1,780.3 505.5,788.4" fill="#9a7454" stroke="#3a2212" stroke-width="0.7"/>
<circle cx="517.4" cy="787.7" r="0.7" fill="#3a2212"/>
<circle cx="516.9" cy="783.2" r="0.7" fill="#3a2212"/>
<circle cx="521.7" cy="786.1" r="0.7" fill="#3a2212"/>
<circle cx="522.6" cy="784.4" r="0.7" fill="#3a2212"/>
<circle cx="514.5" cy="784.5" r="0.7" fill="#3a2212"/>
<polygon points="148.6,805.2 151.7,781.4 147.5,766.5 137.7,766.1 127.6,769.7 129.1,785.0 139.6,806.6" fill="#734d31" stroke="#3a2212" stroke-width="0.9"/>
<polygon points="151.6,780.6 147.5,766.5 137.7,766.1 127.6,769.7 129.0,784.2" fill="#9a5238" stroke="#3a2212" stroke-width="0.7"/>
<circle cx="132.5" cy="774.3" r="0.7" fill="#3a2212"/>
<circle cx="142.2" cy="771.7" r="0.7" fill="#3a2212"/>
<circle cx="146.4" cy="777.9" r="0.7" fill="#3a2212"/>
<circle cx="139.7" cy="777.7" r="0.7" fill="#3a2212"/>
<circle cx="138.6" cy="772.7" r="0.7" fill="#3a2212"/>
<polygon points="293.7,802.0 305.8,784.0 307.6,770.3 298.9,765.9 288.3,765.0 283.8,778.0 284.9,799.5" fill="#734d31" stroke="#3a2212" stroke-width="0.9"/>
<polygon points="306.0,783.3 307.6,770.3 298.9,765.9 288.3,765.0 283.9,777.3" fill="#866242" stroke="#3a2212" stroke-width="0.7"/>
<circle cx="296.5" cy="769.7" r="0.7" fill="#3a2212"/>
<circle cx="295.4" cy="774.5" r="0.7" fill="#3a2212"/>
<circle cx="296.1" cy="776.9" r="0.7" fill="#3a2212"/>
<circle cx="291.0" cy="772.3" r="0.7" fill="#3a2212"/>
<circle cx="292.8" cy="773.3" r="0.7" fill="#3a2212"/>
<polygon points="648.1,808.7 662.5,790.7 666.4,776.4 658.7,771.1 648.6,769.2 642.2,782.4 640.0,805.3" fill="#5c3b24" stroke="#3a2212" stroke-width="0.9"/>
<polygon points="662.8,790.0 666.4,776.4 658.7,771.1 648.6,769.2 642.5,781.8" fill="#9a7454" stroke="#3a2212" stroke-width="0.7"/>
<circle cx="658.8" cy="775.7" r="0.7" fill="#3a2212"/>
<circle cx="656.9" cy="781.3" r="0.7" fill="#3a2212"/>
<circle cx="661.4" cy="777.9" r="0.7" fill="#3a2212"/>
<circle cx="653.7" cy="773.6" r="0.7" fill="#3a2212"/>
<circle cx="653.5" cy="781.5" r="0.7" fill="#3a2212"/>
<polygon points="204.3,815.4 218.8,798.4 223.0,784.6 215.6,779.1 205.7,777.0 199.1,789.7 196.4,811.9" fill="#6b472d" stroke="#3a2212" stroke-width="0.9"/>
<polygon points="219.1,797.8 223.0,784.6 215.6,779.1 205.7,777.0 199.4,789.0" fill="#7f5a40" stroke="#3a2212" stroke-width="0.7"/>
<circle cx="215.1" cy="789.9" r="0.7" fill="#3a2212"/>
<circle cx="216.6" cy="791.6" r="0.7" fill="#3a2212"/>
<circle cx="205.9" cy="787.6" r="0.7" fill="#3a2212"/>
<circle cx="215.8" cy="787.5" r="0.7" fill="#3a2212"/>
<circle cx="211.9" cy="784.5" r="0.7" fill="#3a2212"/>
<polygon points="184.0,815.0 195.0,793.7 196.8,778.3 188.7,774.5 179.0,774.4 174.9,789.3 176.0,813.2" fill="#6b472d" stroke="#3a2212" stroke-width="0.9"/>
<polygon points="195.2,793.0 196.8,778.3 188.7,774.5 179.0,774.4 175.1,788.5" fill="#a67a58" stroke="#3a2212" stroke-width="0.7"/>
<circle cx="190.6" cy="788.3" r="0.7" fill="#3a2212"/>
<circle cx="188.3" cy="785.7" r="0.7" fill="#3a2212"/>
<circle cx="186.8" cy="785.4" r="0.7" fill="#3a2212"/>
<circle cx="181.6" cy="783.2" r="0.7" fill="#3a2212"/>
<circle cx="182.7" cy="784.5" r="0.7" fill="#3a2212"/>
<polygon points="475.1,805.8 482.4,792.4 481.5,783.0 473.0,780.3 463.3,781.5 461.8,790.7 466.8,805.2" fill="#63422a" stroke="#3a2212" stroke-width="0.9"/>
<polygon points="482.4,791.9 481.5,783.0 473.0,780.3 463.3,781.5 461.8,790.3" fill="#9e744f" stroke="#3a2212" stroke-width="0.7"/>
<circle cx="472.4" cy="788.7" r="0.7" fill="#3a2212"/>
<circle cx="473.0" cy="785.1" r="0.7" fill="#3a2212"/>
<circle cx="471.6" cy="786.4" r="0.7" fill="#3a2212"/>
<circle cx="477.1" cy="786.9" r="0.7" fill="#3a2212"/>
<circle cx="474.2" cy="789.0" r="0.7" fill="#3a2212"/>
<polygon points="270.8,804.8 279.8,786.7 278.6,774.1 268.0,771.4 256.0,772.5 254.1,784.9 260.6,804.0" fill="#5c3b24" stroke="#3a2212" stroke-width="0.9"/>
<polygon points="279.9,786.1 278.6,774.1 268.0,771.4 256.0,772.5 254.2,784.3" fill="#7f5a40" stroke="#3a2212" stroke-width="0.7"/>
<circle cx="261.6" cy="781.4" r="0.7" fill="#3a2212"/>
<circle cx="271.3" cy="778.4" r="0.7" fill="#3a2212"/>
<circle cx="265.3" cy="778.7" r="0.7" fill="#3a2212"/>
<circle cx="270.9" cy="776.9" r="0.7" fill="#3a2212"/>
<circle cx="269.6" cy="778.7" r="0.7" fill="#3a2212"/>
<polygon points="614.9,808.4 624.2,784.6 623.9,768.0 614.3,765.1 603.3,766.1 600.8,782.3 605.5,807.5" fill="#6b472d" stroke="#3a2212" stroke-width="0.9"/>
<polygon points="624.3,783.8 623.9,768.0 614.3,765.1 603.3,766.1 600.9,781.5" fill="#a67a58" stroke="#3a2212" stroke-width="0.7"/>
<circle cx="609.9" cy="769.2" r="0.7" fill="#3a2212"/>
<circle cx="617.5" cy="770.7" r="0.7" fill="#3a2212"/>
<circle cx="607.4" cy="776.6" r="0.7" fill="#3a2212"/>
<circle cx="612.2" cy="774.9" r="0.7" fill="#3a2212"/>
<circle cx="616.5" cy="774.7" r="0.7" fill="#3a2212"/>
<polygon points="558.4,809.3 556.3,788.8 549.5,777.5 540.6,779.2 532.5,784.9 537.0,797.2 550.7,812.7" fill="#734d31" stroke="#3a2212" stroke-width="0.9"/>
<polygon points="556.0,788.2 549.5,777.5 540.6,779.2 532.5,784.9 536.7,796.6" fill="#9e744f" stroke="#3a2212" stroke-width="0.7"/>
<circle cx="543.8" cy="784.3" r="0.7" fill="#3a2212"/>
<circle cx="546.3" cy="783.3" r="0.7" fill="#3a2212"/>
<circle cx="540.4" cy="785.3" r="0.7" fill="#3a2212"/>
<circle cx="541.2" cy="789.7" r="0.7" fill="#3a2212"/>
<circle cx="541.7" cy="789.6" r="0.7" fill="#3a2212"/>
<polygon points="634.4,810.0 646.6,788.9 649.5,773.3 642.2,769.1 633.0,768.5 627.8,783.4 626.9,807.8" fill="#734d31" stroke="#3a2212" stroke-width="0.9"/>
<polygon points="646.8,788.1 649.5,773.3 642.2,769.1 633.0,768.5 628.0,782.7" fill="#8b6746" stroke="#3a2212" stroke-width="0.7"/>
<circle cx="640.0" cy="780.2" r="0.7" fill="#3a2212"/>
<circle cx="642.0" cy="773.5" r="0.7" fill="#3a2212"/>
<circle cx="635.8" cy="780.0" r="0.7" fill="#3a2212"/>
<circle cx="643.1" cy="779.6" r="0.7" fill="#3a2212"/>
<circle cx="639.3" cy="774.4" r="0.7" fill="#3a2212"/>
<polygon points="592.1,809.7 596.0,786.9 592.6,772.4 583.2,771.5 573.5,774.6 574.3,789.4 583.4,810.8" fill="#5c3b24" stroke="#3a2212" stroke-width="0.9"/>
<polygon points="595.9,786.2 592.6,772.4 583.2,771.5 573.5,774.6 574.3,788.7" fill="#7f5a40" stroke="#3a2212" stroke-width="0.7"/>
<circle cx="579.9" cy="777.8" r="0.7" fill="#3a2212"/>
<circle cx="578.9" cy="777.5" r="0.7" fill="#3a2212"/>
<circle cx="579.2" cy="783.6" r="0.7" fill="#3a2212"/>
<circle cx="579.9" cy="780.6" r="0.7" fill="#3a2212"/>
<circle cx="586.8" cy="783.9" r="0.7" fill="#3a2212"/>
<polygon points="596.5,815.6 602.0,795.9 599.1,783.3 589.0,782.1 578.4,785.0 578.5,797.8 587.1,816.3" fill="#63422a" stroke="#3a2212" stroke-width="0.9"/>
<polygon points="601.9,795.3 599.1,783.3 589.0,782.1 578.4,785.0 578.5,797.2" fill="#7f5a40" stroke="#3a2212" stroke-width="0.7"/>
<circle cx="590.8" cy="788.9" r="0.7" fill="#3a2212"/>
<circle cx="593.5" cy="787.8" r="0.7" fill="#3a2212"/>
<circle cx="587.6" cy="791.2" r="0.7" fill="#3a2212"/>
<circle cx="595.5" cy="790.8" r="0.7" fill="#3a2212"/>
<circle cx="596.1" cy="790.3" r="0.7" fill="#3a2212"/>
<polygon points="341.8,806.2 346.1,783.8 342.3,769.7 332.0,769.1 321.4,772.5 322.3,786.9 332.3,807.5" fill="#63422a" stroke="#3a2212" stroke-width="0.9"/>
<polygon points="346.0,783.1 342.3,769.7 332.0,769.1 321.4,772.5 322.2,786.2" fill="#9a5238" stroke="#3a2212" stroke-width="0.7"/>
<circle cx="327.7" cy="781.1" r="0.7" fill="#3a2212"/>
<circle cx="339.2" cy="778.3" r="0.7" fill="#3a2212"/>
<circle cx="328.2" cy="775.4" r="0.7" fill="#3a2212"/>
<circle cx="332.7" cy="774.0" r="0.7" fill="#3a2212"/>
<circle cx="334.4" cy="781.6" r="0.7" fill="#3a2212"/>
<polygon points="290.3,812.6 303.7,791.3 305.9,775.3 296.2,770.7 284.5,769.7 279.4,784.9 280.6,810.0" fill="#734d31" stroke="#3a2212" stroke-width="0.9"/>
<polygon points="304.0,790.6 305.9,775.3 296.2,770.7 284.5,769.7 279.6,784.1" fill="#8b6746" stroke="#3a2212" stroke-width="0.7"/>
<circle cx="290.3" cy="780.9" r="0.7" fill="#3a2212"/>
<circle cx="290.1" cy="782.4" r="0.7" fill="#3a2212"/>
<circle cx="300.0" cy="776.3" r="0.7" fill="#3a2212"/>
<circle cx="300.9" cy="780.0" r="0.7" fill="#3a2212"/>
<circle cx="289.1" cy="773.6" r="0.7" fill="#3a2212"/>
<polygon points="353.1,809.2 359.0,790.7 356.9,778.6 347.8,776.8 337.9,779.1 337.3,791.4 344.4,809.5" fill="#63422a" stroke="#3a2212" stroke-width="0.9"/>
<polygon points="359.0,790.1 356.9,778.6 347.8,776.8 337.9,779.1 337.3,790.8" fill="#916843" stroke="#3a2212" stroke-width="0.7"/>
<circle cx="345.8" cy="781.0" r="0.7" fill="#3a2212"/>
<circle cx="352.4" cy="787.3" r="0.7" fill="#3a2212"/>
<circle cx="351.6" cy="787.0" r="0.7" fill="#3a2212"/>
<circle cx="343.0" cy="786.2" r="0.7" fill="#3a2212"/>
<circle cx="342.1" cy="781.8" r="0.7" fill="#3a2212"/>
<polygon points="587.9,806.4 592.0,784.9 587.9,771.7 577.4,771.3 566.5,775.1 567.6,788.8 578.1,807.9" fill="#734d31" stroke="#3a2212" stroke-width="0.9"/>
<polygon points="591.9,784.3 587.9,771.7 577.4,771.3 566.5,775.1 567.5,788.1" fill="#a67a58" stroke="#3a2212" stroke-width="0.7"/>
<circle cx="581.5" cy="778.9" r="0.7" fill="#3a2212"/>
<circle cx="575.4" cy="777.3" r="0.7" fill="#3a2212"/>
<circle cx="584.8" cy="778.0" r="0.7" fill="#3a2212"/>
<circle cx="581.8" cy="780.2" r="0.7" fill="#3a2212"/>
<circle cx="580.0" cy="779.4" r="0.7" fill="#3a2212"/>
<polygon points="278.7,814.1 287.7,796.1 288.2,783.2 280.3,779.9 270.9,780.4 268.1,792.9 270.8,812.8" fill="#6b472d" stroke="#3a2212" stroke-width="0.9"/>
<polygon points="287.8,795.5 288.2,783.2 280.3,779.9 270.9,780.4 268.2,792.2" fill="#8b6746" stroke="#3a2212" stroke-width="0.7"/>
<circle cx="277.7" cy="783.6" r="0.7" fill="#3a2212"/>
<circle cx="280.0" cy="786.1" r="0.7" fill="#3a2212"/>
<circle cx="283.3" cy="791.3" r="0.7" fill="#3a2212"/>
<circle cx="278.4" cy="784.8" r="0.7" fill="#3a2212"/>
<circle cx="281.0" cy="787.6" r="0.7" fill="#3a2212"/>
<polygon points="169.8,821.9 177.0,801.2 176.5,787.0 168.7,784.4 159.8,785.8 158.1,799.8 162.2,821.3" fill="#5c3b24" stroke="#3a2212" stroke-width="0.9"/>
<polygon points="177.1,800.5 176.5,787.0 168.7,784.4 159.8,785.8 158.1,799.1" fill="#946c4c" stroke="#3a2212" stroke-width="0.7"/>
<circle cx="172.8" cy="791.8" r="0.7" fill="#3a2212"/>
<circle cx="162.7" cy="795.7" r="0.7" fill="#3a2212"/>
<circle cx="163.9" cy="794.9" r="0.7" fill="#3a2212"/>
<circle cx="164.7" cy="789.3" r="0.7" fill="#3a2212"/>
<circle cx="168.8" cy="789.9" r="0.7" fill="#3a2212"/>
<polygon points="550.5,803.1 548.4,783.0 541.2,772.5 531.6,775.0 522.9,781.5 527.6,793.2 542.1,807.2" fill="#63422a" stroke="#3a2212" stroke-width="0.9"/>
<polygon points="548.1,782.5 541.2,772.5 531.6,775.0 522.9,781.5 527.3,792.7" fill="#946c4c" stroke="#3a2212" stroke-width="0.7"/>
<circle cx="529.2" cy="782.4" r="0.7" fill="#3a2212"/>
<circle cx="528.6" cy="780.8" r="0.7" fill="#3a2212"/>
<circle cx="536.6" cy="784.1" r="0.7" fill="#3a2212"/>
<circle cx="534.9" cy="784.6" r="0.7" fill="#3a2212"/>
<circle cx="536.0" cy="782.2" r="0.7" fill="#3a2212"/>
<polygon points="650.2,819.1 665.5,803.4 669.6,790.1 661.4,784.0 650.7,781.2 644.0,793.3 641.6,815.1" fill="#6b472d" stroke="#3a2212" stroke-width="0.9"/>
<polygon points="665.7,802.8 669.6,790.1 661.4,784.0 650.7,781.2 644.3,792.7" fill="#8b6746" stroke="#3a2212" stroke-width="0.7"/>
<circle cx="661.4" cy="789.6" r="0.7" fill="#3a2212"/>
<circle cx="661.6" cy="794.7" r="0.7" fill="#3a2212"/>
<circle cx="656.8" cy="794.2" r="0.7" fill="#3a2212"/>
<circle cx="655.1" cy="789.7" r="0.7" fill="#3a2212"/>
<circle cx="656.2" cy="788.9" r="0.7" fill="#3a2212"/>
<polygon points="620.2,818.0 630.4,799.0 630.6,785.3 621.1,781.7 610.0,782.0 606.9,795.3 610.8,816.5" fill="#63422a" stroke="#3a2212" stroke-width="0.9"/>
<polygon points="630.5,798.3 630.6,785.3 621.1,781.7 610.0,782.0 607.0,794.6" fill="#8b6746" stroke="#3a2212" stroke-width="0.7"/>
<circle cx="620.4" cy="790.7" r="0.7" fill="#3a2212"/>
<circle cx="620.2" cy="789.2" r="0.7" fill="#3a2212"/>
<circle cx="613.8" cy="790.5" r="0.7" fill="#3a2212"/>
<circle cx="621.0" cy="785.9" r="0.7" fill="#3a2212"/>
<circle cx="622.2" cy="793.3" r="0.7" fill="#3a2212"/>
<polygon points="171.4,823.6 180.5,801.4 179.8,786.1 169.8,783.3 158.5,784.3 156.3,799.4 161.7,822.8" fill="#734d31" stroke="#3a2212" stroke-width="0.9"/>
<polygon points="180.6,800.6 179.8,786.1 169.8,783.3 158.5,784.3 156.4,798.7" fill="#866242" stroke="#3a2212" stroke-width="0.7"/>
<circle cx="174.4" cy="793.4" r="0.7" fill="#3a2212"/>
<circle cx="165.2" cy="788.3" r="0.7" fill="#3a2212"/>
<circle cx="175.6" cy="792.8" r="0.7" fill="#3a2212"/>
<circle cx="175.5" cy="787.8" r="0.7" fill="#3a2212"/>
<circle cx="164.2" cy="791.6" r="0.7" fill="#3a2212"/>
<polygon points="630.5,818.5 642.9,796.6 645.6,780.5 637.8,776.3 628.1,775.7 623.0,791.2 622.6,816.4" fill="#63422a" stroke="#3a2212" stroke-width="0.9"/>
<polygon points="643.1,795.8 645.6,780.5 637.8,776.3 628.1,775.7 623.2,790.4" fill="#765238" stroke="#3a2212" stroke-width="0.7"/>
<circle cx="634.7" cy="781.2" r="0.7" fill="#3a2212"/>
<circle cx="639.2" cy="787.4" r="0.7" fill="#3a2212"/>
<circle cx="641.9" cy="784.5" r="0.7" fill="#3a2212"/>
<circle cx="630.0" cy="787.6" r="0.7" fill="#3a2212"/>
<circle cx="635.8" cy="783.3" r="0.7" fill="#3a2212"/>
<polygon points="635.5,812.7 649.1,791.3 652.1,775.1 643.5,770.5 632.9,769.4 627.4,784.7 626.8,810.1" fill="#6b472d" stroke="#3a2212" stroke-width="0.9"/>
<polygon points="649.3,790.5 652.1,775.1 643.5,770.5 632.9,769.4 627.6,783.9" fill="#86382a" stroke="#3a2212" stroke-width="0.7"/>
<circle cx="638.5" cy="780.8" r="0.7" fill="#3a2212"/>
<circle cx="645.2" cy="782.1" r="0.7" fill="#3a2212"/>
<circle cx="634.5" cy="779.9" r="0.7" fill="#3a2212"/>
<circle cx="639.6" cy="776.5" r="0.7" fill="#3a2212"/>
<circle cx="639.9" cy="775.3" r="0.7" fill="#3a2212"/>
<polygon points="357.1,806.9 364.9,786.9 362.8,773.5 351.8,771.5 339.9,773.6 338.9,786.9 346.7,807.0" fill="#63422a" stroke="#3a2212" stroke-width="0.9"/>
<polygon points="364.9,786.2 362.8,773.5 351.8,771.5 339.9,773.6 338.9,786.2" fill="#a67a58" stroke="#3a2212" stroke-width="0.7"/>
<circle cx="348.2" cy="776.0" r="0.7" fill="#3a2212"/>
<circle cx="345.9" cy="776.8" r="0.7" fill="#3a2212"/>
<circle cx="352.5" cy="779.5" r="0.7" fill="#3a2212"/>
<circle cx="354.8" cy="778.3" r="0.7" fill="#3a2212"/>
<circle cx="350.9" cy="777.0" r="0.7" fill="#3a2212"/>
<polygon points="495.6,817.8 504.2,805.2 504.0,795.8 495.5,792.4 485.5,792.8 483.2,801.7 487.3,816.4" fill="#734d31" stroke="#3a2212" stroke-width="0.9"/>
<polygon points="504.3,804.7 504.0,795.8 495.5,792.4 485.5,792.8 483.3,801.3" fill="#9e744f" stroke="#3a2212" stroke-width="0.7"/>
<circle cx="491.7" cy="799.0" r="0.7" fill="#3a2212"/>
<circle cx="490.0" cy="799.2" r="0.7" fill="#3a2212"/>
<circle cx="498.4" cy="799.6" r="0.7" fill="#3a2212"/>
<circle cx="500.9" cy="798.5" r="0.7" fill="#3a2212"/>
<circle cx="491.9" cy="799.0" r="0.7" fill="#3a2212"/>
<polygon points="147.1,811.4 150.3,790.7 146.1,778.1 136.2,777.9 126.2,781.9 127.7,795.0 138.1,813.1" fill="#734d31" stroke="#3a2212" stroke-width="0.9"/>
<polygon points="150.2,790.1 146.1,778.1 136.2,777.9 126.2,781.9 127.6,794.3" fill="#9a7454" stroke="#3a2212" stroke-width="0.7"/>
<circle cx="134.0" cy="786.4" r="0.7" fill="#3a2212"/>
<circle cx="138.1" cy="787.1" r="0.7" fill="#3a2212"/>
<circle cx="135.6" cy="789.2" r="0.7" fill="#3a2212"/>
<circle cx="136.2" cy="788.0" r="0.7" fill="#3a2212"/>
<circle cx="143.2" cy="785.4" r="0.7" fill="#3a2212"/>
<polygon points="275.4,821.8 286.4,799.5 286.3,783.7 275.4,780.3 262.9,780.7 259.9,796.1 264.8,820.4" fill="#734d31" stroke="#3a2212" stroke-width="0.9"/>
<polygon points="286.5,798.8 286.3,783.7 275.4,780.3 262.9,780.7 260.0,795.4" fill="#7f5a40" stroke="#3a2212" stroke-width="0.7"/>
<circle cx="272.6" cy="790.6" r="0.7" fill="#3a2212"/>
<circle cx="274.4" cy="793.6" r="0.7" fill="#3a2212"/>
<circle cx="279.6" cy="791.9" r="0.7" fill="#3a2212"/>
<circle cx="273.5" cy="787.5" r="0.7" fill="#3a2212"/>
<circle cx="277.5" cy="792.1" r="0.7" fill="#3a2212"/>
<polygon points="482.8,809.7 488.7,797.1 487.1,788.7 478.7,786.8 469.5,788.8 468.7,797.2 474.8,809.7" fill="#5c3b24" stroke="#3a2212" stroke-width="0.9"/>
<polygon points="488.7,796.7 487.1,788.7 478.7,786.8 469.5,788.8 468.7,796.8" fill="#7f5a40" stroke="#3a2212" stroke-width="0.7"/>
<circle cx="474.7" cy="793.9" r="0.7" fill="#3a2212"/>
<circle cx="475.6" cy="795.0" r="0.7" fill="#3a2212"/>
<circle cx="475.1" cy="794.1" r="0.7" fill="#3a2212"/>
<circle cx="476.5" cy="794.2" r="0.7" fill="#3a2212"/>
<circle cx="484.2" cy="794.1" r="0.7" fill="#3a2212"/>
<polygon points="314.1,816.5 312.5,797.2 306.5,786.3 298.3,787.5 290.9,792.6 294.8,804.4 307.1,819.4" fill="#6b472d" stroke="#3a2212" stroke-width="0.9"/>
<polygon points="312.3,796.6 306.5,786.3 298.3,787.5 290.9,792.6 294.6,803.8" fill="#765238" stroke="#3a2212" stroke-width="0.7"/>
<circle cx="298.4" cy="793.3" r="0.7" fill="#3a2212"/>
<circle cx="297.5" cy="799.8" r="0.7" fill="#3a2212"/>
<circle cx="295.0" cy="793.3" r="0.7" fill="#3a2212"/>
<circle cx="298.7" cy="795.8" r="0.7" fill="#3a2212"/>
<circle cx="299.3" cy="793.8" r="0.7" fill="#3a2212"/>
<polygon points="237.7,825.5 237.4,800.9 231.6,786.1 222.6,786.4 214.0,790.9 217.4,806.4 229.7,827.7" fill="#63422a" stroke="#3a2212" stroke-width="0.9"/>
<polygon points="237.2,800.2 231.6,786.1 222.6,786.4 214.0,790.9 217.2,805.7" fill="#9a7454" stroke="#3a2212" stroke-width="0.7"/>
<circle cx="218.4" cy="792.2" r="0.7" fill="#3a2212"/>
<circle cx="222.7" cy="791.8" r="0.7" fill="#3a2212"/>
<circle cx="226.1" cy="789.6" r="0.7" fill="#3a2212"/>
<circle cx="228.9" cy="796.5" r="0.7" fill="#3a2212"/>
<circle cx="226.2" cy="798.2" r="0.7" fill="#3a2212"/>
<polygon points="475.8,811.7 482.3,799.4 481.2,790.8 473.2,788.4 464.2,789.9 462.9,798.3 468.0,811.3" fill="#5c3b24" stroke="#3a2212" stroke-width="0.9"/>
<polygon points="482.3,799.0 481.2,790.8 473.2,788.4 464.2,789.9 463.0,797.9" fill="#8b6746" stroke="#3a2212" stroke-width="0.7"/>
<circle cx="472.6" cy="792.7" r="0.7" fill="#3a2212"/>
<circle cx="477.0" cy="795.9" r="0.7" fill="#3a2212"/>
<circle cx="470.1" cy="794.6" r="0.7" fill="#3a2212"/>
<circle cx="478.7" cy="792.3" r="0.7" fill="#3a2212"/>
<circle cx="478.3" cy="795.3" r="0.7" fill="#3a2212"/>
<polygon points="642.4,821.4 656.4,806.8 659.1,794.4 650.0,788.6 638.4,786.2 632.8,797.5 633.0,817.7" fill="#734d31" stroke="#3a2212" stroke-width="0.9"/>
<polygon points="656.6,806.2 659.1,794.4 650.0,788.6 638.4,786.2 633.1,796.9" fill="#8b6746" stroke="#3a2212" stroke-width="0.7"/>
<circle cx="644.4" cy="795.3" r="0.7" fill="#3a2212"/>
<circle cx="646.6" cy="793.9" r="0.7" fill="#3a2212"/>
<circle cx="649.4" cy="797.0" r="0.7" fill="#3a2212"/>
<circle cx="640.9" cy="794.3" r="0.7" fill="#3a2212"/>
<circle cx="652.4" cy="797.7" r="0.7" fill="#3a2212"/>
<polygon points="523.2,808.5 531.9,796.2 530.9,787.3 520.8,784.2 509.4,785.0 507.5,793.6 513.5,807.5" fill="#6b472d" stroke="#3a2212" stroke-width="0.9"/>
<polygon points="531.9,795.7 530.9,787.3 520.8,784.2 509.4,785.0 507.6,793.2" fill="#a67a58" stroke="#3a2212" stroke-width="0.7"/>
<circle cx="523.9" cy="788.9" r="0.7" fill="#3a2212"/>
<circle cx="521.4" cy="792.1" r="0.7" fill="#3a2212"/>
<circle cx="522.8" cy="789.0" r="0.7" fill="#3a2212"/>
<circle cx="523.6" cy="788.6" r="0.7" fill="#3a2212"/>
<circle cx="514.7" cy="790.0" r="0.7" fill="#3a2212"/>
<polygon points="160.8,829.3 166.9,805.4 164.0,789.9 153.5,788.5 142.3,791.1 142.2,806.8 150.9,829.9" fill="#5c3b24" stroke="#3a2212" stroke-width="0.9"/>
<polygon points="166.8,804.6 164.0,789.9 153.5,788.5 142.3,791.1 142.1,806.0" fill="#916843" stroke="#3a2212" stroke-width="0.7"/>
<circle cx="161.2" cy="799.4" r="0.7" fill="#3a2212"/>
<circle cx="151.3" cy="796.2" r="0.7" fill="#3a2212"/>
<circle cx="151.0" cy="795.7" r="0.7" fill="#3a2212"/>
<circle cx="158.9" cy="797.9" r="0.7" fill="#3a2212"/>
<circle cx="155.3" cy="794.2" r="0.7" fill="#3a2212"/>
<polygon points="328.8,823.8 329.5,798.8 322.9,784.2 311.9,785.3 301.1,790.7 304.6,806.2 318.9,826.8" fill="#63422a" stroke="#3a2212" stroke-width="0.9"/>
<polygon points="329.2,798.0 322.9,784.2 311.9,785.3 301.1,790.7 304.4,805.4" fill="#866242" stroke="#3a2212" stroke-width="0.7"/>
<circle cx="315.4" cy="792.1" r="0.7" fill="#3a2212"/>
<circle cx="315.3" cy="793.2" r="0.7" fill="#3a2212"/>
<circle cx="311.9" cy="798.3" r="0.7" fill="#3a2212"/>
<circle cx="318.6" cy="792.0" r="0.7" fill="#3a2212"/>
<circle cx="321.6" cy="791.2" r="0.7" fill="#3a2212"/>
<polygon points="252.0,813.9 256.0,794.1 253.2,781.5 244.7,780.3 235.9,783.2 236.4,796.1 244.2,814.6" fill="#734d31" stroke="#3a2212" stroke-width="0.9"/>
<polygon points="256.0,793.5 253.2,781.5 244.7,780.3 235.9,783.2 236.3,795.4" fill="#9e744f" stroke="#3a2212" stroke-width="0.7"/>
<circle cx="243.6" cy="785.2" r="0.7" fill="#3a2212"/>
<circle cx="242.2" cy="789.4" r="0.7" fill="#3a2212"/>
<circle cx="249.1" cy="787.3" r="0.7" fill="#3a2212"/>
<circle cx="245.8" cy="791.0" r="0.7" fill="#3a2212"/>
<circle cx="240.5" cy="790.0" r="0.7" fill="#3a2212"/>
<polygon points="441.1,821.7 445.7,806.3 442.6,796.8 432.8,796.2 422.8,799.6 423.3,809.5 432.1,823.0" fill="#5c3b24" stroke="#3a2212" stroke-width="0.9"/>
<polygon points="445.7,805.8 442.6,796.8 432.8,796.2 422.8,799.6 423.2,809.0" fill="#765238" stroke="#3a2212" stroke-width="0.7"/>
<circle cx="438.9" cy="800.5" r="0.7" fill="#3a2212"/>
<circle cx="436.8" cy="799.7" r="0.7" fill="#3a2212"/>
<circle cx="430.9" cy="803.9" r="0.7" fill="#3a2212"/>
<circle cx="427.0" cy="801.1" r="0.7" fill="#3a2212"/>
<circle cx="438.4" cy="802.4" r="0.7" fill="#3a2212"/>
<polygon points="200.6,820.9 214.8,805.1 218.3,792.0 210.2,786.4 199.7,784.1 193.6,796.1 192.1,817.3" fill="#63422a" stroke="#3a2212" stroke-width="0.9"/>
<polygon points="215.0,804.5 218.3,792.0 210.2,786.4 199.7,784.1 193.9,795.5" fill="#946c4c" stroke="#3a2212" stroke-width="0.7"/>
<circle cx="203.5" cy="793.0" r="0.7" fill="#3a2212"/>
<circle cx="203.2" cy="790.0" r="0.7" fill="#3a2212"/>
<circle cx="205.9" cy="797.0" r="0.7" fill="#3a2212"/>
<circle cx="206.9" cy="794.9" r="0.7" fill="#3a2212"/>
<circle cx="209.4" cy="796.7" r="0.7" fill="#3a2212"/>
<polygon points="546.9,814.2 539.7,789.8 530.2,776.2 522.1,778.6 515.3,784.7 522.8,799.5 540.2,818.0" fill="#63422a" stroke="#3a2212" stroke-width="0.9"/>
<polygon points="539.3,789.1 530.2,776.2 522.1,778.6 515.3,784.7 522.4,798.7" fill="#9e744f" stroke="#3a2212" stroke-width="0.7"/>
<circle cx="525.3" cy="783.8" r="0.7" fill="#3a2212"/>
<circle cx="528.4" cy="790.4" r="0.7" fill="#3a2212"/>
<circle cx="529.6" cy="787.3" r="0.7" fill="#3a2212"/>
<circle cx="523.2" cy="788.1" r="0.7" fill="#3a2212"/>
<circle cx="528.6" cy="788.7" r="0.7" fill="#3a2212"/>
<polygon points="167.1,828.2 175.0,807.3 173.5,793.2 163.5,790.9 152.4,792.5 151.0,806.6 157.5,827.9" fill="#6b472d" stroke="#3a2212" stroke-width="0.9"/>
<polygon points="175.0,806.6 173.5,793.2 163.5,790.9 152.4,792.5 151.0,805.9" fill="#946c4c" stroke="#3a2212" stroke-width="0.7"/>
<circle cx="168.8" cy="798.6" r="0.7" fill="#3a2212"/>
<circle cx="169.4" cy="798.5" r="0.7" fill="#3a2212"/>
<circle cx="156.3" cy="800.4" r="0.7" fill="#3a2212"/>
<circle cx="165.5" cy="796.9" r="0.7" fill="#3a2212"/>
<circle cx="159.0" cy="801.6" r="0.7" fill="#3a2212"/>
<polygon points="483.0,813.7 490.3,798.1 488.7,787.5 479.1,785.3 468.5,787.1 467.3,797.5 473.8,813.5" fill="#5c3b24" stroke="#3a2212" stroke-width="0.9"/>
<polygon points="490.3,797.6 488.7,787.5 479.1,785.3 468.5,787.1 467.3,797.0" fill="#9a7454" stroke="#3a2212" stroke-width="0.7"/>
<circle cx="475.2" cy="791.9" r="0.7" fill="#3a2212"/>
<circle cx="481.8" cy="793.7" r="0.7" fill="#3a2212"/>
<circle cx="473.9" cy="790.6" r="0.7" fill="#3a2212"/>
<circle cx="482.5" cy="789.7" r="0.7" fill="#3a2212"/>
<circle cx="473.8" cy="794.0" r="0.7" fill="#3a2212"/>
<polygon points="426.8,818.5 431.4,805.8 428.9,797.9 420.3,796.9 411.4,799.9 411.5,808.1 418.9,819.4" fill="#63422a" stroke="#3a2212" stroke-width="0.9"/>
<polygon points="431.3,805.4 428.9,797.9 420.3,796.9 411.4,799.9 411.5,807.7" fill="#9e744f" stroke="#3a2212" stroke-width="0.7"/>
<circle cx="414.9" cy="801.7" r="0.7" fill="#3a2212"/>
<circle cx="420.5" cy="803.6" r="0.7" fill="#3a2212"/>
<circle cx="418.8" cy="803.1" r="0.7" fill="#3a2212"/>
<circle cx="419.2" cy="800.7" r="0.7" fill="#3a2212"/>
<circle cx="418.1" cy="804.1" r="0.7" fill="#3a2212"/>
<polygon points="545.7,813.2 539.8,790.3 530.7,778.0 521.9,780.8 514.4,787.5 521.3,801.1 538.3,817.5" fill="#6b472d" stroke="#3a2212" stroke-width="0.9"/>
<polygon points="539.4,789.6 530.7,778.0 521.9,780.8 514.4,787.5 520.9,800.4" fill="#a67a58" stroke="#3a2212" stroke-width="0.7"/>
<circle cx="525.1" cy="788.3" r="0.7" fill="#3a2212"/>
<circle cx="528.1" cy="782.8" r="0.7" fill="#3a2212"/>
<circle cx="530.4" cy="784.2" r="0.7" fill="#3a2212"/>
<circle cx="526.5" cy="792.3" r="0.7" fill="#3a2212"/>
<circle cx="525.4" cy="788.0" r="0.7" fill="#3a2212"/>
<polygon points="390.8,828.1 405.8,806.9 409.9,790.6 401.7,785.4 391.3,783.7 384.7,799.1 382.3,825.0" fill="#734d31" stroke="#3a2212" stroke-width="0.9"/>
<polygon points="406.1,806.1 409.9,790.6 401.7,785.4 391.3,783.7 385.0,798.3" fill="#8b6746" stroke="#3a2212" stroke-width="0.7"/>
<circle cx="395.4" cy="796.4" r="0.7" fill="#3a2212"/>
<circle cx="397.9" cy="796.0" r="0.7" fill="#3a2212"/>
<circle cx="393.2" cy="794.1" r="0.7" fill="#3a2212"/>
<circle cx="400.8" cy="800.1" r="0.7" fill="#3a2212"/>
<circle cx="396.7" cy="793.0" r="0.7" fill="#3a2212"/>
<polygon points="516.2,826.6 525.5,811.5 525.0,800.6 515.1,797.3 503.8,797.8 501.4,808.3 506.5,825.3" fill="#6b472d" stroke="#3a2212" stroke-width="0.9"/>
<polygon points="525.6,811.0 525.0,800.6 515.1,797.3 503.8,797.8 501.5,807.8" fill="#a67a58" stroke="#3a2212" stroke-width="0.7"/>
<circle cx="508.7" cy="802.5" r="0.7" fill="#3a2212"/>
<circle cx="517.9" cy="806.2" r="0.7" fill="#3a2212"/>
<circle cx="507.7" cy="800.5" r="0.7" fill="#3a2212"/>
<circle cx="507.9" cy="800.1" r="0.7" fill="#3a2212"/>
<circle cx="511.7" cy="801.5" r="0.7" fill="#3a2212"/>
<polygon points="315.8,814.5 314.6,792.3 307.7,779.9 297.9,781.6 288.6,787.4 292.8,800.8 307.1,817.9" fill="#6b472d" stroke="#3a2212" stroke-width="0.9"/>
<polygon points="314.4,791.7 307.7,779.9 297.9,781.6 288.6,787.4 292.6,800.2" fill="#a67a58" stroke="#3a2212" stroke-width="0.7"/>
<circle cx="303.4" cy="786.4" r="0.7" fill="#3a2212"/>
<circle cx="296.4" cy="790.3" r="0.7" fill="#3a2212"/>
<circle cx="308.0" cy="788.5" r="0.7" fill="#3a2212"/>
<circle cx="302.3" cy="784.2" r="0.7" fill="#3a2212"/>
<circle cx="304.4" cy="790.9" r="0.7" fill="#3a2212"/>
<polygon points="329.5,817.2 328.8,791.5 323.1,775.7 314.8,775.8 306.7,779.9 310.2,796.3 322.0,819.1" fill="#6b472d" stroke="#3a2212" stroke-width="0.9"/>
<polygon points="328.6,790.7 323.1,775.7 314.8,775.8 306.7,779.9 310.0,795.5" fill="#9a7454" stroke="#3a2212" stroke-width="0.7"/>
<circle cx="321.3" cy="780.0" r="0.7" fill="#3a2212"/>
<circle cx="316.7" cy="787.1" r="0.7" fill="#3a2212"/>
<circle cx="317.0" cy="786.9" r="0.7" fill="#3a2212"/>
<circle cx="321.0" cy="783.2" r="0.7" fill="#3a2212"/>
<circle cx="318.2" cy="786.4" r="0.7" fill="#3a2212"/>
<polygon points="604.3,823.4 611.0,803.4 609.2,790.1 599.7,788.1 589.3,790.1 588.5,803.5 595.3,823.5" fill="#6b472d" stroke="#3a2212" stroke-width="0.9"/>
<polygon points="611.0,802.8 609.2,790.1 599.7,788.1 589.3,790.1 588.4,802.8" fill="#94452e" stroke="#3a2212" stroke-width="0.7"/>
<circle cx="600.0" cy="792.9" r="0.7" fill="#3a2212"/>
<circle cx="605.8" cy="797.8" r="0.7" fill="#3a2212"/>
<circle cx="595.6" cy="796.8" r="0.7" fill="#3a2212"/>
<circle cx="602.4" cy="795.9" r="0.7" fill="#3a2212"/>
<circle cx="596.1" cy="797.9" r="0.7" fill="#3a2212"/>
<polygon points="360.3,816.9 368.0,798.5 366.6,786.1 356.8,783.7 345.9,785.3 344.6,797.7 350.9,816.6" fill="#6b472d" stroke="#3a2212" stroke-width="0.9"/>
<polygon points="368.0,797.9 366.6,786.1 356.8,783.7 345.9,785.3 344.6,797.1" fill="#9e744f" stroke="#3a2212" stroke-width="0.7"/>
<circle cx="352.2" cy="793.7" r="0.7" fill="#3a2212"/>
<circle cx="358.5" cy="794.2" r="0.7" fill="#3a2212"/>
<circle cx="355.7" cy="789.3" r="0.7" fill="#3a2212"/>
<circle cx="360.9" cy="788.8" r="0.7" fill="#3a2212"/>
<circle cx="358.6" cy="788.4" r="0.7" fill="#3a2212"/>
<polygon points="580.6,825.8 581.5,803.5 576.1,790.3 566.5,790.9 557.1,795.5 559.9,809.4 571.9,828.1" fill="#734d31" stroke="#3a2212" stroke-width="0.9"/>
<polygon points="581.3,802.9 576.1,790.3 566.5,790.9 557.1,795.5 559.7,808.7" fill="#a67a58" stroke="#3a2212" stroke-width="0.7"/>
<circle cx="575.7" cy="799.2" r="0.7" fill="#3a2212"/>
<circle cx="569.6" cy="794.5" r="0.7" fill="#3a2212"/>
<circle cx="562.1" cy="797.5" r="0.7" fill="#3a2212"/>
<circle cx="569.2" cy="796.1" r="0.7" fill="#3a2212"/>
<circle cx="566.2" cy="801.3" r="0.7" fill="#3a2212"/>
<polygon points="253.3,821.5 258.7,797.9 255.0,783.0 243.8,782.1 232.0,785.4 232.5,800.7 242.8,822.6" fill="#5c3b24" stroke="#3a2212" stroke-width="0.9"/>
<polygon points="258.6,797.1 255.0,783.0 243.8,782.1 232.0,785.4 232.5,799.9" fill="#946c4c" stroke="#3a2212" stroke-width="0.7"/>
<circle cx="252.5" cy="793.6" r="0.7" fill="#3a2212"/>
<circle cx="245.7" cy="786.5" r="0.7" fill="#3a2212"/>
<circle cx="240.6" cy="786.7" r="0.7" fill="#3a2212"/>
<circle cx="242.5" cy="791.1" r="0.7" fill="#3a2212"/>
<circle cx="240.4" cy="794.4" r="0.7" fill="#3a2212"/>
<polygon points="490.2,813.6 497.6,800.5 495.7,791.7 485.5,789.6 474.3,791.5 473.3,800.3 480.4,813.5" fill="#63422a" stroke="#3a2212" stroke-width="0.9"/>
<polygon points="497.6,800.0 495.7,791.7 485.5,789.6 474.3,791.5 473.3,799.8" fill="#9e744f" stroke="#3a2212" stroke-width="0.7"/>
<circle cx="478.9" cy="798.0" r="0.7" fill="#3a2212"/>
<circle cx="491.2" cy="797.2" r="0.7" fill="#3a2212"/>
<circle cx="478.3" cy="797.1" r="0.7" fill="#3a2212"/>
<circle cx="481.1" cy="792.8" r="0.7" fill="#3a2212"/>
<circle cx="491.9" cy="797.9" r="0.7" fill="#3a2212"/>
<polygon points="337.4,815.5 341.1,795.5 336.9,783.4 326.5,783.3 315.9,787.3 317.3,799.9 327.9,817.2" fill="#734d31" stroke="#3a2212" stroke-width="0.9"/>
<polygon points="341.0,794.8 336.9,783.4 326.5,783.3 315.9,787.3 317.2,799.3" fill="#9e744f" stroke="#3a2212" stroke-width="0.7"/>
<circle cx="326.7" cy="788.1" r="0.7" fill="#3a2212"/>
<circle cx="321.6" cy="791.3" r="0.7" fill="#3a2212"/>
<circle cx="333.5" cy="793.5" r="0.7" fill="#3a2212"/>
<circle cx="325.6" cy="790.1" r="0.7" fill="#3a2212"/>
<circle cx="332.6" cy="792.3" r="0.7" fill="#3a2212"/>
<polygon points="158.9,822.3 163.5,798.8 160.9,783.5 152.3,782.0 143.1,784.6 143.3,800.1 150.8,822.8" fill="#734d31" stroke="#3a2212" stroke-width="0.9"/>
<polygon points="163.4,798.0 160.9,783.5 152.3,782.0 143.1,784.6 143.2,799.3" fill="#a67a58" stroke="#3a2212" stroke-width="0.7"/>
<circle cx="151.9" cy="792.5" r="0.7" fill="#3a2212"/>
<circle cx="148.2" cy="790.5" r="0.7" fill="#3a2212"/>
<circle cx="146.5" cy="786.4" r="0.7" fill="#3a2212"/>
<circle cx="152.1" cy="790.9" r="0.7" fill="#3a2212"/>
<circle cx="158.2" cy="787.6" r="0.7" fill="#3a2212"/>
<polygon points="574.7,827.8 573.9,803.1 566.9,788.9 556.4,790.4 546.4,796.1 550.6,811.2 565.4,831.0" fill="#5c3b24" stroke="#3a2212" stroke-width="0.9"/>
<polygon points="573.6,802.3 566.9,788.9 556.4,790.4 546.4,796.1 550.4,810.5" fill="#94452e" stroke="#3a2212" stroke-width="0.7"/>
<circle cx="561.6" cy="801.3" r="0.7" fill="#3a2212"/>
<circle cx="558.0" cy="801.3" r="0.7" fill="#3a2212"/>
<circle cx="558.8" cy="797.1" r="0.7" fill="#3a2212"/>
<circle cx="554.8" cy="804.1" r="0.7" fill="#3a2212"/>
<circle cx="564.1" cy="802.3" r="0.7" fill="#3a2212"/>
<polygon points="613.9,832.5 623.2,811.7 622.9,797.1 613.5,794.0 602.7,794.8 600.2,809.1 604.7,831.4" fill="#734d31" stroke="#3a2212" stroke-width="0.9"/>
<polygon points="623.3,810.9 622.9,797.1 613.5,794.0 602.7,794.8 600.3,808.4" fill="#7a7f88" stroke="#3a2212" stroke-width="0.7"/>
<circle cx="612.8" cy="806.4" r="0.7" fill="#3a2212"/>
<circle cx="607.7" cy="805.4" r="0.7" fill="#3a2212"/>
<circle cx="607.8" cy="804.4" r="0.7" fill="#3a2212"/>
<circle cx="616.1" cy="802.0" r="0.7" fill="#3a2212"/>
<circle cx="618.8" cy="803.5" r="0.7" fill="#3a2212"/>
<polygon points="603.7,828.3 610.0,809.7 608.2,797.4 599.1,795.4 589.2,797.5 588.4,809.9 595.0,828.3" fill="#5c3b24" stroke="#3a2212" stroke-width="0.9"/>
<polygon points="610.0,809.1 608.2,797.4 599.1,795.4 589.2,797.5 588.4,809.2" fill="#9a7454" stroke="#3a2212" stroke-width="0.7"/>
<circle cx="595.8" cy="800.0" r="0.7" fill="#3a2212"/>
<circle cx="600.5" cy="804.1" r="0.7" fill="#3a2212"/>
<circle cx="598.0" cy="799.1" r="0.7" fill="#3a2212"/>
<circle cx="598.3" cy="799.3" r="0.7" fill="#3a2212"/>
<circle cx="599.7" cy="802.2" r="0.7" fill="#3a2212"/>
<polygon points="230.4,830.0 228.2,803.8 220.3,788.9 209.9,790.8 199.9,796.8 205.1,812.8 221.1,833.6" fill="#5c3b24" stroke="#3a2212" stroke-width="0.9"/>
<polygon points="227.9,803.1 220.3,788.9 209.9,790.8 199.9,796.8 204.8,812.0" fill="#916843" stroke="#3a2212" stroke-width="0.7"/>
<circle cx="214.1" cy="802.0" r="0.7" fill="#3a2212"/>
<circle cx="210.9" cy="799.8" r="0.7" fill="#3a2212"/>
<circle cx="211.3" cy="804.1" r="0.7" fill="#3a2212"/>
<circle cx="210.5" cy="806.2" r="0.7" fill="#3a2212"/>
<circle cx="218.4" cy="793.0" r="0.7" fill="#3a2212"/>
<polygon points="555.0,828.2 549.7,804.2 540.0,791.7 529.9,795.3 520.9,802.9 528.0,816.9 546.3,833.3" fill="#63422a" stroke="#3a2212" stroke-width="0.9"/>
<polygon points="549.3,803.5 540.0,791.7 529.9,795.3 520.9,802.9 527.6,816.2" fill="#9a7454" stroke="#3a2212" stroke-width="0.7"/>
<circle cx="537.5" cy="797.2" r="0.7" fill="#3a2212"/>
<circle cx="534.9" cy="803.5" r="0.7" fill="#3a2212"/>
<circle cx="538.0" cy="804.0" r="0.7" fill="#3a2212"/>
<circle cx="538.8" cy="803.9" r="0.7" fill="#3a2212"/>
<circle cx="539.9" cy="803.8" r="0.7" fill="#3a2212"/>
<polygon points="362.1,823.9 370.4,803.0 369.3,788.8 359.3,786.2 348.2,787.6 346.5,801.7 352.5,823.3" fill="#734d31" stroke="#3a2212" stroke-width="0.9"/>
<polygon points="370.5,802.3 369.3,788.8 359.3,786.2 348.2,787.6 346.5,801.0" fill="#94452e" stroke="#3a2212" stroke-width="0.7"/>
<circle cx="356.3" cy="797.7" r="0.7" fill="#3a2212"/>
<circle cx="357.3" cy="793.9" r="0.7" fill="#3a2212"/>
<circle cx="365.5" cy="797.0" r="0.7" fill="#3a2212"/>
<circle cx="355.8" cy="792.5" r="0.7" fill="#3a2212"/>
<circle cx="361.8" cy="798.4" r="0.7" fill="#3a2212"/>
<polygon points="521.0,817.3 531.3,804.4 531.9,794.2 522.9,789.9 512.1,789.3 508.8,798.8 512.0,815.1" fill="#6b472d" stroke="#3a2212" stroke-width="0.9"/>
<polygon points="531.4,803.9 531.9,794.2 522.9,789.9 512.1,789.3 509.0,798.3" fill="#866242" stroke="#3a2212" stroke-width="0.7"/>
<circle cx="520.0" cy="796.0" r="0.7" fill="#3a2212"/>
<circle cx="516.9" cy="794.5" r="0.7" fill="#3a2212"/>
<circle cx="524.4" cy="796.0" r="0.7" fill="#3a2212"/>
<circle cx="522.7" cy="797.9" r="0.7" fill="#3a2212"/>
<circle cx="523.5" cy="797.7" r="0.7" fill="#3a2212"/>
<polygon points="352.1,822.4 358.9,800.7 356.0,786.6 344.7,785.2 332.5,787.8 332.2,802.1 341.4,823.0" fill="#63422a" stroke="#3a2212" stroke-width="0.9"/>
<polygon points="358.9,800.0 356.0,786.6 344.7,785.2 332.5,787.8 332.2,801.4" fill="#946c4c" stroke="#3a2212" stroke-width="0.7"/>
<circle cx="348.4" cy="797.1" r="0.7" fill="#3a2212"/>
<circle cx="349.6" cy="796.8" r="0.7" fill="#3a2212"/>
<circle cx="342.7" cy="793.6" r="0.7" fill="#3a2212"/>
<circle cx="350.7" cy="793.9" r="0.7" fill="#3a2212"/>
<circle cx="343.8" cy="793.1" r="0.7" fill="#3a2212"/>
<polygon points="476.8,814.5 483.3,800.1 481.6,790.5 472.5,788.5 462.5,790.4 461.6,800.1 468.1,814.5" fill="#63422a" stroke="#3a2212" stroke-width="0.9"/>
<polygon points="483.3,799.6 481.6,790.5 472.5,788.5 462.5,790.4 461.6,799.6" fill="#765238" stroke="#3a2212" stroke-width="0.7"/>
<circle cx="467.5" cy="796.0" r="0.7" fill="#3a2212"/>
<circle cx="468.3" cy="794.9" r="0.7" fill="#3a2212"/>
<circle cx="468.2" cy="796.5" r="0.7" fill="#3a2212"/>
<circle cx="477.8" cy="795.5" r="0.7" fill="#3a2212"/>
<circle cx="469.5" cy="794.6" r="0.7" fill="#3a2212"/>
<polygon points="132.1,822.9 130.4,800.4 123.5,787.9 113.9,789.5 104.9,795.3 109.4,808.9 123.6,826.2" fill="#63422a" stroke="#3a2212" stroke-width="0.9"/>
<polygon points="130.2,799.8 123.5,787.9 113.9,789.5 104.9,795.3 109.1,808.2" fill="#9a5238" stroke="#3a2212" stroke-width="0.7"/>
<circle cx="113.3" cy="797.4" r="0.7" fill="#3a2212"/>
<circle cx="110.4" cy="795.2" r="0.7" fill="#3a2212"/>
<circle cx="113.5" cy="801.8" r="0.7" fill="#3a2212"/>
<circle cx="113.4" cy="801.9" r="0.7" fill="#3a2212"/>
<circle cx="111.1" cy="795.7" r="0.7" fill="#3a2212"/>
<polygon points="527.3,818.3 535.7,807.0 535.5,798.4 527.2,794.9 517.4,795.2 515.1,803.3 519.1,816.8" fill="#5c3b24" stroke="#3a2212" stroke-width="0.9"/>
<polygon points="535.7,806.6 535.5,798.4 527.2,794.9 517.4,795.2 515.2,802.9" fill="#7f5a40" stroke="#3a2212" stroke-width="0.7"/>
<circle cx="528.8" cy="802.1" r="0.7" fill="#3a2212"/>
<circle cx="522.9" cy="797.3" r="0.7" fill="#3a2212"/>
<circle cx="527.6" cy="800.9" r="0.7" fill="#3a2212"/>
<circle cx="521.3" cy="797.0" r="0.7" fill="#3a2212"/>
<circle cx="525.2" cy="799.5" r="0.7" fill="#3a2212"/>
<polygon points="636.7,835.1 651.4,817.7 654.9,803.6 646.0,797.9 634.7,795.7 628.5,808.7 627.5,831.5" fill="#63422a" stroke="#3a2212" stroke-width="0.9"/>
<polygon points="651.7,817.0 654.9,803.6 646.0,797.9 634.7,795.7 628.8,808.0" fill="#765238" stroke="#3a2212" stroke-width="0.7"/>
<circle cx="645.1" cy="803.5" r="0.7" fill="#3a2212"/>
<circle cx="637.9" cy="806.3" r="0.7" fill="#3a2212"/>
<circle cx="646.3" cy="809.9" r="0.7" fill="#3a2212"/>
<circle cx="639.5" cy="800.8" r="0.7" fill="#3a2212"/>
<circle cx="637.4" cy="802.6" r="0.7" fill="#3a2212"/>
<polygon points="401.6,834.2 416.5,821.1 420.4,809.3 412.2,802.8 401.3,799.5 394.8,809.9 392.9,829.7" fill="#63422a" stroke="#3a2212" stroke-width="0.9"/>
<polygon points="416.8,820.6 420.4,809.3 412.2,802.8 401.3,799.5 395.1,809.4" fill="#765238" stroke="#3a2212" stroke-width="0.7"/>
<circle cx="408.0" cy="809.5" r="0.7" fill="#3a2212"/>
<circle cx="405.6" cy="808.8" r="0.7" fill="#3a2212"/>
<circle cx="404.7" cy="803.5" r="0.7" fill="#3a2212"/>
<circle cx="404.9" cy="806.6" r="0.7" fill="#3a2212"/>
<circle cx="402.4" cy="807.2" r="0.7" fill="#3a2212"/>
<polygon points="531.2,822.2 538.7,808.5 538.4,798.6 530.6,795.6 521.6,796.5 519.7,806.1 523.6,821.2" fill="#734d31" stroke="#3a2212" stroke-width="0.9"/>
<polygon points="538.8,808.0 538.4,798.6 530.6,795.6 521.6,796.5 519.7,805.6" fill="#866242" stroke="#3a2212" stroke-width="0.7"/>
<circle cx="531.4" cy="803.0" r="0.7" fill="#3a2212"/>
<circle cx="526.1" cy="803.0" r="0.7" fill="#3a2212"/>
<circle cx="530.2" cy="804.4" r="0.7" fill="#3a2212"/>
<circle cx="530.1" cy="804.4" r="0.7" fill="#3a2212"/>
<circle cx="525.7" cy="800.9" r="0.7" fill="#3a2212"/>
<polygon points="579.1,832.2 578.4,808.3 572.3,794.1 563.1,794.9 554.2,799.7 557.9,814.6 570.8,834.7" fill="#63422a" stroke="#3a2212" stroke-width="0.9"/>
<polygon points="578.2,807.6 572.3,794.1 563.1,794.9 554.2,799.7 557.7,813.9" fill="#94452e" stroke="#3a2212" stroke-width="0.7"/>
<circle cx="566.7" cy="799.7" r="0.7" fill="#3a2212"/>
<circle cx="564.0" cy="799.3" r="0.7" fill="#3a2212"/>
<circle cx="563.4" cy="805.9" r="0.7" fill="#3a2212"/>
<circle cx="562.5" cy="806.5" r="0.7" fill="#3a2212"/>
<circle cx="567.9" cy="801.0" r="0.7" fill="#3a2212"/>
<polygon points="504.0,822.8 510.6,809.7 509.1,800.9 500.3,798.7 490.6,800.5 489.6,809.3 495.6,822.7" fill="#63422a" stroke="#3a2212" stroke-width="0.9"/>
<polygon points="510.6,809.3 509.1,800.9 500.3,798.7 490.6,800.5 489.6,808.9" fill="#7a7f88" stroke="#3a2212" stroke-width="0.7"/>
<circle cx="505.5" cy="806.2" r="0.7" fill="#3a2212"/>
<circle cx="502.0" cy="802.8" r="0.7" fill="#3a2212"/>
<circle cx="503.4" cy="807.3" r="0.7" fill="#3a2212"/>
<circle cx="495.6" cy="805.2" r="0.7" fill="#3a2212"/>
<circle cx="505.8" cy="805.7" r="0.7" fill="#3a2212"/>
<polygon points="291.8,835.5 305.1,818.8 308.0,805.5 299.8,800.4 289.3,798.7 283.8,811.1 283.2,832.4" fill="#5c3b24" stroke="#3a2212" stroke-width="0.9"/>
<polygon points="305.3,818.2 308.0,805.5 299.8,800.4 289.3,798.7 284.0,810.4" fill="#866242" stroke="#3a2212" stroke-width="0.7"/>
<circle cx="301.5" cy="809.0" r="0.7" fill="#3a2212"/>
<circle cx="291.1" cy="808.5" r="0.7" fill="#3a2212"/>
<circle cx="295.8" cy="810.6" r="0.7" fill="#3a2212"/>
<circle cx="302.4" cy="808.2" r="0.7" fill="#3a2212"/>
<circle cx="299.2" cy="808.0" r="0.7" fill="#3a2212"/>
<polygon points="391.8,834.1 407.6,814.6 411.7,799.1 402.9,793.4 391.8,791.1 384.9,805.5 382.8,830.5" fill="#5c3b24" stroke="#3a2212" stroke-width="0.9"/>
<polygon points="407.9,813.9 411.7,799.1 402.9,793.4 391.8,791.1 385.2,804.8" fill="#946c4c" stroke="#3a2212" stroke-width="0.7"/>
<circle cx="405.4" cy="805.6" r="0.7" fill="#3a2212"/>
<circle cx="399.7" cy="797.2" r="0.7" fill="#3a2212"/>
<circle cx="394.4" cy="799.2" r="0.7" fill="#3a2212"/>
<circle cx="398.2" cy="801.6" r="0.7" fill="#3a2212"/>
<circle cx="393.4" cy="801.9" r="0.7" fill="#3a2212"/>
<polygon points="156.9,833.6 161.5,814.7 158.5,802.7 149.2,801.6 139.5,804.7 139.9,816.9 148.3,834.5" fill="#63422a" stroke="#3a2212" stroke-width="0.9"/>
<polygon points="161.5,814.0 158.5,802.7 149.2,801.6 139.5,804.7 139.8,816.3" fill="#946c4c" stroke="#3a2212" stroke-width="0.7"/>
<circle cx="152.8" cy="804.9" r="0.7" fill="#3a2212"/>
<circle cx="150.3" cy="805.9" r="0.7" fill="#3a2212"/>
<circle cx="152.5" cy="811.3" r="0.7" fill="#3a2212"/>
<circle cx="144.5" cy="811.7" r="0.7" fill="#3a2212"/>
<circle cx="152.7" cy="812.2" r="0.7" fill="#3a2212"/>
<polygon points="141.1,823.9 141.7,803.9 136.7,792.1 128.0,792.5 119.6,796.9 122.3,809.4 133.4,826.1" fill="#63422a" stroke="#3a2212" stroke-width="0.9"/>
<polygon points="141.5,803.3 136.7,792.1 128.0,792.5 119.6,796.9 122.1,808.8" fill="#94452e" stroke="#3a2212" stroke-width="0.7"/>
<circle cx="125.2" cy="804.0" r="0.7" fill="#3a2212"/>
<circle cx="127.9" cy="799.4" r="0.7" fill="#3a2212"/>
<circle cx="130.5" cy="802.8" r="0.7" fill="#3a2212"/>
<circle cx="125.8" cy="803.6" r="0.7" fill="#3a2212"/>
<circle cx="127.0" cy="800.6" r="0.7" fill="#3a2212"/>
<polygon points="515.9,829.9 525.0,816.9 524.1,807.3 513.9,804.1 502.3,804.7 500.2,813.9 505.9,828.7" fill="#734d31" stroke="#3a2212" stroke-width="0.9"/>
<polygon points="525.0,816.4 524.1,807.3 513.9,804.1 502.3,804.7 500.3,813.4" fill="#a67a58" stroke="#3a2212" stroke-width="0.7"/>
<circle cx="509.9" cy="806.8" r="0.7" fill="#3a2212"/>
<circle cx="519.9" cy="811.0" r="0.7" fill="#3a2212"/>
<circle cx="506.8" cy="807.8" r="0.7" fill="#3a2212"/>
<circle cx="516.8" cy="810.6" r="0.7" fill="#3a2212"/>
<circle cx="512.0" cy="810.2" r="0.7" fill="#3a2212"/>
<polygon points="398.9,832.3 416.2,813.2 421.4,797.5 412.8,791.3 401.6,788.2 393.7,802.6 389.9,828.1" fill="#63422a" stroke="#3a2212" stroke-width="0.9"/>
<polygon points="416.5,812.5 421.4,797.5 412.8,791.3 401.6,788.2 394.1,801.9" fill="#86382a" stroke="#3a2212" stroke-width="0.7"/>
<circle cx="412.6" cy="800.9" r="0.7" fill="#3a2212"/>
<circle cx="410.8" cy="801.2" r="0.7" fill="#3a2212"/>
<circle cx="408.6" cy="801.7" r="0.7" fill="#3a2212"/>
<circle cx="403.0" cy="800.3" r="0.7" fill="#3a2212"/>
<circle cx="414.0" cy="805.5" r="0.7" fill="#3a2212"/>
<polygon points="373.9,833.3 383.7,815.4 384.8,802.3 376.9,798.7 367.5,798.8 364.1,811.3 366.1,831.7" fill="#734d31" stroke="#3a2212" stroke-width="0.9"/>
<polygon points="383.9,814.7 384.8,802.3 376.9,798.7 367.5,798.8 364.2,810.7" fill="#765238" stroke="#3a2212" stroke-width="0.7"/>
<circle cx="369.6" cy="807.7" r="0.7" fill="#3a2212"/>
<circle cx="372.0" cy="801.6" r="0.7" fill="#3a2212"/>
<circle cx="378.7" cy="803.3" r="0.7" fill="#3a2212"/>
<circle cx="373.7" cy="807.1" r="0.7" fill="#3a2212"/>
<circle cx="372.5" cy="806.7" r="0.7" fill="#3a2212"/>
<polygon points="315.4,835.7 311.2,813.2 303.3,800.6 294.8,802.5 287.4,808.3 293.1,821.9 308.2,839.2" fill="#6b472d" stroke="#3a2212" stroke-width="0.9"/>
<polygon points="310.9,812.5 303.3,800.6 294.8,802.5 287.4,808.3 292.8,821.3" fill="#916843" stroke="#3a2212" stroke-width="0.7"/>
<circle cx="304.7" cy="810.3" r="0.7" fill="#3a2212"/>
<circle cx="300.8" cy="811.2" r="0.7" fill="#3a2212"/>
<circle cx="300.2" cy="807.0" r="0.7" fill="#3a2212"/>
<circle cx="297.8" cy="809.6" r="0.7" fill="#3a2212"/>
<circle cx="301.4" cy="809.4" r="0.7" fill="#3a2212"/>
<polygon points="317.0,835.0 315.4,815.3 308.5,805.0 298.7,807.4 289.8,813.9 294.2,825.4 308.5,839.1" fill="#6b472d" stroke="#3a2212" stroke-width="0.9"/>
<polygon points="315.2,814.8 308.5,805.0 298.7,807.4 289.8,813.9 293.9,824.8" fill="#916843" stroke="#3a2212" stroke-width="0.7"/>
<circle cx="304.3" cy="813.1" r="0.7" fill="#3a2212"/>
<circle cx="298.7" cy="813.2" r="0.7" fill="#3a2212"/>
<circle cx="305.5" cy="811.5" r="0.7" fill="#3a2212"/>
<circle cx="297.8" cy="815.1" r="0.7" fill="#3a2212"/>
<circle cx="298.2" cy="811.6" r="0.7" fill="#3a2212"/>
<polygon points="468.7,833.7 475.7,821.6 473.9,813.4 464.2,811.3 453.6,813.3 452.6,821.4 459.4,833.7" fill="#63422a" stroke="#3a2212" stroke-width="0.9"/>
<polygon points="475.7,821.2 473.9,813.4 464.2,811.3 453.6,813.3 452.6,821.0" fill="#8b6746" stroke="#3a2212" stroke-width="0.7"/>
<circle cx="469.4" cy="815.4" r="0.7" fill="#3a2212"/>
<circle cx="467.8" cy="817.4" r="0.7" fill="#3a2212"/>
<circle cx="468.3" cy="816.0" r="0.7" fill="#3a2212"/>
<circle cx="464.3" cy="817.4" r="0.7" fill="#3a2212"/>
<circle cx="469.0" cy="815.5" r="0.7" fill="#3a2212"/>
<polygon points="200.7,841.9 218.1,826.7 223.2,813.1 214.4,806.0 202.7,801.9 194.9,814.0 191.4,836.8" fill="#734d31" stroke="#3a2212" stroke-width="0.9"/>
<polygon points="218.4,826.1 223.2,813.1 214.4,806.0 202.7,801.9 195.2,813.4" fill="#a67a58" stroke="#3a2212" stroke-width="0.7"/>
<circle cx="208.2" cy="809.3" r="0.7" fill="#3a2212"/>
<circle cx="216.0" cy="816.7" r="0.7" fill="#3a2212"/>
<circle cx="211.8" cy="810.2" r="0.7" fill="#3a2212"/>
<circle cx="204.7" cy="809.3" r="0.7" fill="#3a2212"/>
<circle cx="214.2" cy="816.4" r="0.7" fill="#3a2212"/>
<polygon points="467.3,830.9 472.4,817.4 469.5,809.1 460.0,808.3 450.0,811.5 450.1,820.1 458.4,832.0" fill="#5c3b24" stroke="#3a2212" stroke-width="0.9"/>
<polygon points="472.3,816.9 469.5,809.1 460.0,808.3 450.0,811.5 450.1,819.7" fill="#86382a" stroke="#3a2212" stroke-width="0.7"/>
<circle cx="460.8" cy="815.6" r="0.7" fill="#3a2212"/>
<circle cx="460.7" cy="811.6" r="0.7" fill="#3a2212"/>
<circle cx="454.8" cy="813.7" r="0.7" fill="#3a2212"/>
<circle cx="461.1" cy="813.8" r="0.7" fill="#3a2212"/>
<circle cx="460.4" cy="814.1" r="0.7" fill="#3a2212"/>
<polygon points="405.8,833.4 421.1,820.7 425.4,809.0 417.6,802.4 407.0,798.8 400.2,809.1 397.4,828.7" fill="#5c3b24" stroke="#3a2212" stroke-width="0.9"/>
<polygon points="421.4,820.2 425.4,809.0 417.6,802.4 407.0,798.8 400.5,808.5" fill="#9e744f" stroke="#3a2212" stroke-width="0.7"/>
<circle cx="415.9" cy="812.0" r="0.7" fill="#3a2212"/>
<circle cx="418.8" cy="810.7" r="0.7" fill="#3a2212"/>
<circle cx="418.6" cy="814.7" r="0.7" fill="#3a2212"/>
<circle cx="413.1" cy="805.9" r="0.7" fill="#3a2212"/>
<circle cx="409.3" cy="804.1" r="0.7" fill="#3a2212"/>
<polygon points="391.2,832.5 405.3,816.6 408.2,803.5 399.2,797.9 387.9,795.6 382.1,807.6 381.9,828.9" fill="#734d31" stroke="#3a2212" stroke-width="0.9"/>
<polygon points="405.5,816.0 408.2,803.5 399.2,797.9 387.9,795.6 382.4,807.0" fill="#9a5238" stroke="#3a2212" stroke-width="0.7"/>
<circle cx="395.6" cy="803.7" r="0.7" fill="#3a2212"/>
<circle cx="400.6" cy="806.8" r="0.7" fill="#3a2212"/>
<circle cx="393.9" cy="808.1" r="0.7" fill="#3a2212"/>
<circle cx="396.0" cy="808.7" r="0.7" fill="#3a2212"/>
<circle cx="394.2" cy="808.5" r="0.7" fill="#3a2212"/>
<polygon points="563.3,839.7 559.8,819.9 552.2,809.7 543.2,812.4 535.4,819.0 540.8,830.5 555.7,843.9" fill="#63422a" stroke="#3a2212" stroke-width="0.9"/>
<polygon points="559.5,819.4 552.2,809.7 543.2,812.4 535.4,819.0 540.5,829.9" fill="#8b6746" stroke="#3a2212" stroke-width="0.7"/>
<circle cx="550.8" cy="817.9" r="0.7" fill="#3a2212"/>
<circle cx="544.9" cy="822.7" r="0.7" fill="#3a2212"/>
<circle cx="548.5" cy="818.8" r="0.7" fill="#3a2212"/>
<circle cx="545.2" cy="822.5" r="0.7" fill="#3a2212"/>
<circle cx="545.9" cy="823.5" r="0.7" fill="#3a2212"/>
<polygon points="529.1,832.3 537.8,819.1 537.9,809.3 529.7,805.8 519.9,806.1 517.4,815.5 521.0,830.8" fill="#63422a" stroke="#3a2212" stroke-width="0.9"/>
<polygon points="537.9,818.7 537.9,809.3 529.7,805.8 519.9,806.1 517.5,815.0" fill="#a67a58" stroke="#3a2212" stroke-width="0.7"/>
<circle cx="534.1" cy="811.4" r="0.7" fill="#3a2212"/>
<circle cx="530.5" cy="810.8" r="0.7" fill="#3a2212"/>
<circle cx="527.3" cy="810.9" r="0.7" fill="#3a2212"/>
<circle cx="525.2" cy="808.9" r="0.7" fill="#3a2212"/>
<circle cx="523.8" cy="812.0" r="0.7" fill="#3a2212"/>
<polygon points="432.6,840.4 436.8,823.7 433.3,813.6 423.5,813.2 413.5,816.9 414.3,827.4 423.6,841.9" fill="#6b472d" stroke="#3a2212" stroke-width="0.9"/>
<polygon points="436.7,823.1 433.3,813.6 423.5,813.2 413.5,816.9 414.2,826.9" fill="#94452e" stroke="#3a2212" stroke-width="0.7"/>
<circle cx="424.6" cy="821.7" r="0.7" fill="#3a2212"/>
<circle cx="429.1" cy="822.1" r="0.7" fill="#3a2212"/>
<circle cx="430.7" cy="817.4" r="0.7" fill="#3a2212"/>
<circle cx="423.5" cy="818.9" r="0.7" fill="#3a2212"/>
<circle cx="422.4" cy="821.8" r="0.7" fill="#3a2212"/>
<polygon points="369.2,832.8 379.9,811.5 379.9,796.3 369.5,792.9 357.6,793.3 354.5,808.0 359.1,831.4" fill="#734d31" stroke="#3a2212" stroke-width="0.9"/>
<polygon points="380.0,810.8 379.9,796.3 369.5,792.9 357.6,793.3 354.6,807.2" fill="#9a7454" stroke="#3a2212" stroke-width="0.7"/>
<circle cx="364.5" cy="799.4" r="0.7" fill="#3a2212"/>
<circle cx="365.3" cy="799.0" r="0.7" fill="#3a2212"/>
<circle cx="363.7" cy="802.2" r="0.7" fill="#3a2212"/>
<circle cx="361.9" cy="796.2" r="0.7" fill="#3a2212"/>
<circle cx="369.8" cy="803.4" r="0.7" fill="#3a2212"/>
<polygon points="611.0,834.3 619.1,813.3 618.6,798.8 610.1,796.0 600.4,797.2 598.3,811.5 602.7,833.6" fill="#734d31" stroke="#3a2212" stroke-width="0.9"/>
<polygon points="619.1,812.6 618.6,798.8 610.1,796.0 600.4,797.2 598.4,810.8" fill="#916843" stroke="#3a2212" stroke-width="0.7"/>
<circle cx="612.8" cy="805.8" r="0.7" fill="#3a2212"/>
<circle cx="608.7" cy="802.1" r="0.7" fill="#3a2212"/>
<circle cx="611.6" cy="807.4" r="0.7" fill="#3a2212"/>
<circle cx="604.4" cy="799.4" r="0.7" fill="#3a2212"/>
<circle cx="603.7" cy="808.2" r="0.7" fill="#3a2212"/>
<polygon points="339.5,835.5 342.1,810.1 336.7,794.7 325.6,795.0 314.3,799.4 316.6,815.5 329.3,837.7" fill="#734d31" stroke="#3a2212" stroke-width="0.9"/>
<polygon points="341.9,809.3 336.7,794.7 325.6,795.0 314.3,799.4 316.5,814.7" fill="#946c4c" stroke="#3a2212" stroke-width="0.7"/>
<circle cx="322.2" cy="808.5" r="0.7" fill="#3a2212"/>
<circle cx="320.5" cy="806.8" r="0.7" fill="#3a2212"/>
<circle cx="325.2" cy="803.0" r="0.7" fill="#3a2212"/>
<circle cx="329.2" cy="805.2" r="0.7" fill="#3a2212"/>
<circle cx="333.4" cy="797.8" r="0.7" fill="#3a2212"/>
<polygon points="177.0,838.2 186.7,821.0 187.4,808.5 179.1,804.9 169.3,805.0 166.1,817.1 168.8,836.6" fill="#734d31" stroke="#3a2212" stroke-width="0.9"/>
<polygon points="186.8,820.4 187.4,808.5 179.1,804.9 169.3,805.0 166.2,816.5" fill="#7f5a40" stroke="#3a2212" stroke-width="0.7"/>
<circle cx="180.4" cy="813.5" r="0.7" fill="#3a2212"/>
<circle cx="177.4" cy="808.6" r="0.7" fill="#3a2212"/>
<circle cx="176.6" cy="810.1" r="0.7" fill="#3a2212"/>
<circle cx="178.4" cy="812.5" r="0.7" fill="#3a2212"/>
<circle cx="176.0" cy="809.8" r="0.7" fill="#3a2212"/>
<polygon points="293.7,843.4 310.2,823.1 315.0,806.9 306.6,801.1 295.8,798.7 288.3,813.7 285.0,839.7" fill="#6b472d" stroke="#3a2212" stroke-width="0.9"/>
<polygon points="310.5,822.3 315.0,806.9 306.6,801.1 295.8,798.7 288.7,813.0" fill="#916843" stroke="#3a2212" stroke-width="0.7"/>
<circle cx="302.8" cy="807.3" r="0.7" fill="#3a2212"/>
<circle cx="302.4" cy="813.9" r="0.7" fill="#3a2212"/>
<circle cx="300.2" cy="806.6" r="0.7" fill="#3a2212"/>
<circle cx="303.3" cy="809.2" r="0.7" fill="#3a2212"/>
<circle cx="300.9" cy="814.5" r="0.7" fill="#3a2212"/>
<polygon points="593.1,840.5 597.2,816.3 592.6,801.4 581.1,801.2 569.3,805.2 570.8,820.7 582.5,842.2" fill="#5c3b24" stroke="#3a2212" stroke-width="0.9"/>
<polygon points="597.1,815.5 592.6,801.4 581.1,801.2 569.3,805.2 570.7,819.9" fill="#765238" stroke="#3a2212" stroke-width="0.7"/>
<circle cx="588.9" cy="810.9" r="0.7" fill="#3a2212"/>
<circle cx="588.8" cy="810.3" r="0.7" fill="#3a2212"/>
<circle cx="583.6" cy="811.2" r="0.7" fill="#3a2212"/>
<circle cx="582.4" cy="814.5" r="0.7" fill="#3a2212"/>
<circle cx="579.8" cy="814.6" r="0.7" fill="#3a2212"/>
<polygon points="531.3,834.5 539.5,821.7 539.5,812.3 531.5,808.9 522.1,809.4 519.8,818.4 523.4,833.1" fill="#63422a" stroke="#3a2212" stroke-width="0.9"/>
<polygon points="539.6,821.2 539.5,812.3 531.5,808.9 522.1,809.4 519.9,818.0" fill="#9e744f" stroke="#3a2212" stroke-width="0.7"/>
<circle cx="525.6" cy="812.0" r="0.7" fill="#3a2212"/>
<circle cx="528.9" cy="813.6" r="0.7" fill="#3a2212"/>
<circle cx="530.3" cy="817.0" r="0.7" fill="#3a2212"/>
<circle cx="527.8" cy="816.9" r="0.7" fill="#3a2212"/>
<circle cx="529.3" cy="815.1" r="0.7" fill="#3a2212"/>
<polygon points="202.3,835.4 217.9,820.6 222.6,807.8 215.1,801.5 204.8,798.4 197.7,809.9 194.2,831.1" fill="#6b472d" stroke="#3a2212" stroke-width="0.9"/>
<polygon points="218.2,820.0 222.6,807.8 215.1,801.5 204.8,798.4 198.0,809.3" fill="#9e744f" stroke="#3a2212" stroke-width="0.7"/>
<circle cx="210.4" cy="812.8" r="0.7" fill="#3a2212"/>
<circle cx="211.9" cy="806.3" r="0.7" fill="#3a2212"/>
<circle cx="214.7" cy="813.2" r="0.7" fill="#3a2212"/>
<circle cx="212.0" cy="811.2" r="0.7" fill="#3a2212"/>
<circle cx="209.2" cy="802.8" r="0.7" fill="#3a2212"/>
<polygon points="580.5,835.8 580.7,814.2 575.1,801.5 565.9,802.1 557.1,806.9 560.3,820.3 572.4,838.3" fill="#734d31" stroke="#3a2212" stroke-width="0.9"/>
<polygon points="580.5,813.5 575.1,801.5 565.9,802.1 557.1,806.9 560.1,819.7" fill="#9a7454" stroke="#3a2212" stroke-width="0.7"/>
<circle cx="566.6" cy="809.3" r="0.7" fill="#3a2212"/>
<circle cx="564.7" cy="806.6" r="0.7" fill="#3a2212"/>
<circle cx="567.2" cy="812.9" r="0.7" fill="#3a2212"/>
<circle cx="568.8" cy="805.6" r="0.7" fill="#3a2212"/>
<circle cx="565.3" cy="811.9" r="0.7" fill="#3a2212"/>
<polygon points="509.5,834.6 516.8,821.8 515.4,813.0 506.2,810.5 495.9,812.1 494.6,820.8 500.6,834.2" fill="#5c3b24" stroke="#3a2212" stroke-width="0.9"/>
<polygon points="516.8,821.4 515.4,813.0 506.2,810.5 495.9,812.1 494.6,820.3" fill="#765238" stroke="#3a2212" stroke-width="0.7"/>
<circle cx="503.9" cy="815.4" r="0.7" fill="#3a2212"/>
<circle cx="501.8" cy="817.3" r="0.7" fill="#3a2212"/>
<circle cx="502.1" cy="816.8" r="0.7" fill="#3a2212"/>
<circle cx="505.8" cy="816.7" r="0.7" fill="#3a2212"/>
<circle cx="512.2" cy="814.3" r="0.7" fill="#3a2212"/>
<polygon points="207.1,837.2 225.7,821.7 231.8,807.5 223.3,800.1 211.9,795.5 203.1,808.0 198.0,831.8" fill="#5c3b24" stroke="#3a2212" stroke-width="0.9"/>
<polygon points="226.1,821.0 231.8,807.5 223.3,800.1 211.9,795.5 203.5,807.4" fill="#946c4c" stroke="#3a2212" stroke-width="0.7"/>
<circle cx="212.5" cy="803.2" r="0.7" fill="#3a2212"/>
<circle cx="224.2" cy="811.0" r="0.7" fill="#3a2212"/>
<circle cx="224.1" cy="812.0" r="0.7" fill="#3a2212"/>
<circle cx="211.2" cy="807.4" r="0.7" fill="#3a2212"/>
<circle cx="218.3" cy="811.6" r="0.7" fill="#3a2212"/>
<polygon points="117.6,837.3 111.6,815.9 101.8,805.7 92.0,810.3 83.6,818.8 90.9,830.7 109.3,843.2" fill="#734d31" stroke="#3a2212" stroke-width="0.9"/>
<polygon points="111.2,815.3 101.8,805.7 92.0,810.3 83.6,818.8 90.5,830.1" fill="#9a7454" stroke="#3a2212" stroke-width="0.7"/>
<circle cx="93.7" cy="820.3" r="0.7" fill="#3a2212"/>
<circle cx="98.1" cy="813.9" r="0.7" fill="#3a2212"/>
<circle cx="99.7" cy="819.1" r="0.7" fill="#3a2212"/>
<circle cx="97.3" cy="814.0" r="0.7" fill="#3a2212"/>
<circle cx="97.1" cy="821.0" r="0.7" fill="#3a2212"/>
<polygon points="369.7,837.8 379.9,820.6 379.8,808.0 369.9,804.4 358.3,804.7 355.5,816.8 359.9,836.3" fill="#6b472d" stroke="#3a2212" stroke-width="0.9"/>
<polygon points="379.9,819.9 379.8,808.0 369.9,804.4 358.3,804.7 355.6,816.2" fill="#a67a58" stroke="#3a2212" stroke-width="0.7"/>
<circle cx="365.5" cy="811.3" r="0.7" fill="#3a2212"/>
<circle cx="366.2" cy="813.3" r="0.7" fill="#3a2212"/>
<circle cx="370.9" cy="810.3" r="0.7" fill="#3a2212"/>
<circle cx="367.0" cy="811.5" r="0.7" fill="#3a2212"/>
<circle cx="363.4" cy="811.6" r="0.7" fill="#3a2212"/>
<polygon points="172.9,846.2 183.0,826.7 182.9,812.7 172.9,809.4 161.5,809.8 158.7,823.4 163.2,844.9" fill="#734d31" stroke="#3a2212" stroke-width="0.9"/>
<polygon points="183.0,826.0 182.9,812.7 172.9,809.4 161.5,809.8 158.7,822.7" fill="#94452e" stroke="#3a2212" stroke-width="0.7"/>
<circle cx="171.9" cy="814.9" r="0.7" fill="#3a2212"/>
<circle cx="175.4" cy="819.4" r="0.7" fill="#3a2212"/>
<circle cx="171.4" cy="813.7" r="0.7" fill="#3a2212"/>
<circle cx="177.4" cy="821.4" r="0.7" fill="#3a2212"/>
<circle cx="178.3" cy="819.2" r="0.7" fill="#3a2212"/>
<polygon points="150.8,846.3 153.5,827.0 148.8,815.7 138.6,816.1 128.4,820.6 130.3,832.6 141.5,848.6" fill="#734d31" stroke="#3a2212" stroke-width="0.9"/>
<polygon points="153.3,826.4 148.8,815.7 138.6,816.1 128.4,820.6 130.2,832.0" fill="#8b6746" stroke="#3a2212" stroke-width="0.7"/>
<circle cx="144.0" cy="820.9" r="0.7" fill="#3a2212"/>
<circle cx="141.0" cy="823.3" r="0.7" fill="#3a2212"/>
<circle cx="144.9" cy="820.0" r="0.7" fill="#3a2212"/>
<circle cx="145.6" cy="823.9" r="0.7" fill="#3a2212"/>
<circle cx="143.5" cy="821.8" r="0.7" fill="#3a2212"/>
<polygon points="244.1,845.0 243.6,819.8 238.1,804.3 229.8,804.4 221.7,808.5 225.0,824.6 236.7,846.9" fill="#63422a" stroke="#3a2212" stroke-width="0.9"/>
<polygon points="243.4,819.0 238.1,804.3 229.8,804.4 221.7,808.5 224.8,823.8" fill="#946c4c" stroke="#3a2212" stroke-width="0.7"/>
<circle cx="230.4" cy="813.7" r="0.7" fill="#3a2212"/>
<circle cx="233.8" cy="812.1" r="0.7" fill="#3a2212"/>
<circle cx="230.5" cy="813.0" r="0.7" fill="#3a2212"/>
<circle cx="227.5" cy="815.0" r="0.7" fill="#3a2212"/>
<circle cx="227.2" cy="812.3" r="0.7" fill="#3a2212"/>
<polygon points="574.3,835.3 573.2,815.0 567.1,803.6 558.3,804.8 550.1,810.0 553.9,822.4 566.5,838.2" fill="#63422a" stroke="#3a2212" stroke-width="0.9"/>
<polygon points="573.0,814.4 567.1,803.6 558.3,804.8 550.1,810.0 553.7,821.8" fill="#a67a58" stroke="#3a2212" stroke-width="0.7"/>
<circle cx="564.0" cy="815.1" r="0.7" fill="#3a2212"/>
<circle cx="560.3" cy="815.2" r="0.7" fill="#3a2212"/>
<circle cx="558.2" cy="810.3" r="0.7" fill="#3a2212"/>
<circle cx="565.9" cy="812.1" r="0.7" fill="#3a2212"/>
<circle cx="566.9" cy="811.7" r="0.7" fill="#3a2212"/>
<polygon points="350.3,841.5 354.9,822.9 352.4,810.9 344.1,809.5 335.3,812.1 335.4,824.3 342.5,842.1" fill="#6b472d" stroke="#3a2212" stroke-width="0.9"/>
<polygon points="354.8,822.3 352.4,810.9 344.1,809.5 335.3,812.1 335.3,823.7" fill="#866242" stroke="#3a2212" stroke-width="0.7"/>
<circle cx="342.1" cy="814.7" r="0.7" fill="#3a2212"/>
<circle cx="341.9" cy="814.2" r="0.7" fill="#3a2212"/>
<circle cx="344.4" cy="814.0" r="0.7" fill="#3a2212"/>
<circle cx="349.8" cy="813.4" r="0.7" fill="#3a2212"/>
<circle cx="340.3" cy="814.8" r="0.7" fill="#3a2212"/>
<polygon points="270.3,842.0 280.2,821.5 279.5,807.2 268.7,804.1 256.4,805.0 254.0,819.0 259.8,841.0" fill="#5c3b24" stroke="#3a2212" stroke-width="0.9"/>
<polygon points="280.3,820.8 279.5,807.2 268.7,804.1 256.4,805.0 254.1,818.3" fill="#8b6746" stroke="#3a2212" stroke-width="0.7"/>
<circle cx="262.1" cy="812.1" r="0.7" fill="#3a2212"/>
<circle cx="268.9" cy="816.2" r="0.7" fill="#3a2212"/>
<circle cx="266.0" cy="816.5" r="0.7" fill="#3a2212"/>
<circle cx="272.4" cy="814.4" r="0.7" fill="#3a2212"/>
<circle cx="266.8" cy="813.4" r="0.7" fill="#3a2212"/>
<polygon points="570.5,838.3 567.0,815.1 559.4,802.0 550.8,803.6 543.0,809.3 548.4,823.4 563.1,841.5" fill="#5c3b24" stroke="#3a2212" stroke-width="0.9"/>
<polygon points="566.7,814.4 559.4,802.0 550.8,803.6 543.0,809.3 548.1,822.7" fill="#8b6746" stroke="#3a2212" stroke-width="0.7"/>
<circle cx="558.1" cy="810.8" r="0.7" fill="#3a2212"/>
<circle cx="557.6" cy="805.5" r="0.7" fill="#3a2212"/>
<circle cx="548.0" cy="811.2" r="0.7" fill="#3a2212"/>
<circle cx="553.0" cy="812.8" r="0.7" fill="#3a2212"/>
<circle cx="554.3" cy="812.7" r="0.7" fill="#3a2212"/>
<polygon points="433.1,834.3 438.4,821.5 435.6,813.8 426.0,813.0 415.9,816.2 416.0,824.3 424.2,835.4" fill="#5c3b24" stroke="#3a2212" stroke-width="0.9"/>
<polygon points="438.3,821.1 435.6,813.8 426.0,813.0 415.9,816.2 416.0,823.9" fill="#8b6746" stroke="#3a2212" stroke-width="0.7"/>
<circle cx="428.3" cy="819.3" r="0.7" fill="#3a2212"/>
<circle cx="426.9" cy="818.5" r="0.7" fill="#3a2212"/>
<circle cx="420.2" cy="819.6" r="0.7" fill="#3a2212"/>
<circle cx="420.4" cy="820.0" r="0.7" fill="#3a2212"/>
<circle cx="430.3" cy="816.0" r="0.7" fill="#3a2212"/>
<polygon points="290.0,838.9 302.9,823.9 305.2,811.7 296.3,806.5 285.1,804.6 280.1,815.9 280.8,835.7" fill="#734d31" stroke="#3a2212" stroke-width="0.9"/>
<polygon points="303.1,823.3 305.2,811.7 296.3,806.5 285.1,804.6 280.3,815.3" fill="#9e744f" stroke="#3a2212" stroke-width="0.7"/>
<circle cx="299.6" cy="817.4" r="0.7" fill="#3a2212"/>
<circle cx="295.7" cy="814.9" r="0.7" fill="#3a2212"/>
<circle cx="296.2" cy="817.5" r="0.7" fill="#3a2212"/>
<circle cx="298.6" cy="818.7" r="0.7" fill="#3a2212"/>
<circle cx="291.5" cy="816.4" r="0.7" fill="#3a2212"/>
<polygon points="315.2,836.4 311.6,815.6 304.3,804.2 295.9,806.1 288.6,812.0 293.8,824.4 308.1,839.9" fill="#5c3b24" stroke="#3a2212" stroke-width="0.9"/>
<polygon points="311.3,815.0 304.3,804.2 295.9,806.1 288.6,812.0 293.5,823.8" fill="#946c4c" stroke="#3a2212" stroke-width="0.7"/>
<circle cx="297.5" cy="813.6" r="0.7" fill="#3a2212"/>
<circle cx="296.5" cy="811.9" r="0.7" fill="#3a2212"/>
<circle cx="300.1" cy="814.4" r="0.7" fill="#3a2212"/>
<circle cx="294.9" cy="814.2" r="0.7" fill="#3a2212"/>
<circle cx="303.8" cy="815.1" r="0.7" fill="#3a2212"/>
<polygon points="571.4,842.2 570.1,820.9 562.6,809.9 551.7,812.8 541.5,819.9 546.2,832.2 561.9,846.7" fill="#6b472d" stroke="#3a2212" stroke-width="0.9"/>
<polygon points="569.9,820.3 562.6,809.9 551.7,812.8 541.5,819.9 545.9,831.7" fill="#9a7454" stroke="#3a2212" stroke-width="0.7"/>
<circle cx="553.0" cy="824.7" r="0.7" fill="#3a2212"/>
<circle cx="557.9" cy="822.9" r="0.7" fill="#3a2212"/>
<circle cx="558.0" cy="817.9" r="0.7" fill="#3a2212"/>
<circle cx="561.3" cy="818.2" r="0.7" fill="#3a2212"/>
<circle cx="556.4" cy="815.8" r="0.7" fill="#3a2212"/>
<polygon points="583.6,845.7 584.7,822.7 578.3,809.6 567.1,811.0 556.1,816.6 559.5,830.6 573.5,848.9" fill="#734d31" stroke="#3a2212" stroke-width="0.9"/>
<polygon points="584.4,822.0 578.3,809.6 567.1,811.0 556.1,816.6 559.2,829.9" fill="#946c4c" stroke="#3a2212" stroke-width="0.7"/>
<circle cx="562.3" cy="817.5" r="0.7" fill="#3a2212"/>
<circle cx="568.0" cy="820.7" r="0.7" fill="#3a2212"/>
<circle cx="570.2" cy="815.4" r="0.7" fill="#3a2212"/>
<circle cx="576.9" cy="816.2" r="0.7" fill="#3a2212"/>
<circle cx="570.7" cy="814.9" r="0.7" fill="#3a2212"/>
<polygon points="406.8,844.2 423.6,830.0 429.9,817.3 423.7,810.9 414.6,807.3 406.2,818.6 399.8,839.7" fill="#734d31" stroke="#3a2212" stroke-width="0.9"/>
<polygon points="424.0,829.4 429.9,817.3 423.7,810.9 414.6,807.3 406.5,818.0" fill="#946c4c" stroke="#3a2212" stroke-width="0.7"/>
<circle cx="419.1" cy="816.2" r="0.7" fill="#3a2212"/>
<circle cx="421.4" cy="814.0" r="0.7" fill="#3a2212"/>
<circle cx="413.2" cy="816.3" r="0.7" fill="#3a2212"/>
<circle cx="420.4" cy="816.8" r="0.7" fill="#3a2212"/>
<circle cx="418.3" cy="818.2" r="0.7" fill="#3a2212"/>
<polygon points="135.9,852.1 129.5,827.9 120.4,814.4 112.2,816.5 105.2,822.6 112.2,837.2 129.0,855.8" fill="#5c3b24" stroke="#3a2212" stroke-width="0.9"/>
<polygon points="129.1,827.2 120.4,814.4 112.2,816.5 105.2,822.6 111.9,836.5" fill="#8b6746" stroke="#3a2212" stroke-width="0.7"/>
<circle cx="114.7" cy="821.6" r="0.7" fill="#3a2212"/>
<circle cx="121.7" cy="824.4" r="0.7" fill="#3a2212"/>
<circle cx="113.8" cy="831.3" r="0.7" fill="#3a2212"/>
<circle cx="111.9" cy="827.5" r="0.7" fill="#3a2212"/>
<circle cx="115.4" cy="820.3" r="0.7" fill="#3a2212"/>
<polygon points="482.1,837.6 488.9,821.5 486.8,810.9 476.6,809.1 465.6,811.4 464.9,822.1 472.5,837.8" fill="#6b472d" stroke="#3a2212" stroke-width="0.9"/>
<polygon points="488.9,820.9 486.8,810.9 476.6,809.1 465.6,811.4 464.9,821.5" fill="#946c4c" stroke="#3a2212" stroke-width="0.7"/>
<circle cx="477.6" cy="813.1" r="0.7" fill="#3a2212"/>
<circle cx="476.1" cy="817.0" r="0.7" fill="#3a2212"/>
<circle cx="471.7" cy="814.7" r="0.7" fill="#3a2212"/>
<circle cx="483.4" cy="814.2" r="0.7" fill="#3a2212"/>
<circle cx="479.4" cy="814.2" r="0.7" fill="#3a2212"/>
<polygon points="560.5,843.1 552.8,819.7 543.2,806.8 535.3,809.3 528.8,815.6 536.5,829.6 554.0,847.1" fill="#6b472d" stroke="#3a2212" stroke-width="0.9"/>
<polygon points="552.4,819.0 543.2,806.8 535.3,809.3 528.8,815.6 536.1,828.9" fill="#765238" stroke="#3a2212" stroke-width="0.7"/>
<circle cx="536.4" cy="818.5" r="0.7" fill="#3a2212"/>
<circle cx="543.7" cy="814.8" r="0.7" fill="#3a2212"/>
<circle cx="537.6" cy="819.4" r="0.7" fill="#3a2212"/>
<circle cx="540.9" cy="811.1" r="0.7" fill="#3a2212"/>
<circle cx="541.1" cy="815.9" r="0.7" fill="#3a2212"/>
<polygon points="399.7,856.0 416.4,844.0 421.7,832.2 414.0,824.8 403.3,820.2 395.4,830.3 391.3,850.5" fill="#63422a" stroke="#3a2212" stroke-width="0.9"/>
<polygon points="416.8,843.5 421.7,832.2 414.0,824.8 403.3,820.2 395.8,829.8" fill="#9e744f" stroke="#3a2212" stroke-width="0.7"/>
<circle cx="409.4" cy="827.2" r="0.7" fill="#3a2212"/>
<circle cx="414.2" cy="829.5" r="0.7" fill="#3a2212"/>
<circle cx="413.0" cy="828.8" r="0.7" fill="#3a2212"/>
<circle cx="407.8" cy="829.5" r="0.7" fill="#3a2212"/>
<circle cx="404.1" cy="831.7" r="0.7" fill="#3a2212"/>
<polygon points="439.7,840.7 445.1,826.5 443.1,817.3 434.4,815.7 425.1,818.2 424.7,827.5 431.5,841.1" fill="#63422a" stroke="#3a2212" stroke-width="0.9"/>
<polygon points="445.1,826.0 443.1,817.3 434.4,815.7 425.1,818.2 424.7,827.0" fill="#9e744f" stroke="#3a2212" stroke-width="0.7"/>
<circle cx="429.0" cy="822.3" r="0.7" fill="#3a2212"/>
<circle cx="430.2" cy="819.7" r="0.7" fill="#3a2212"/>
<circle cx="430.6" cy="820.6" r="0.7" fill="#3a2212"/>
<circle cx="434.9" cy="822.0" r="0.7" fill="#3a2212"/>
<circle cx="435.6" cy="823.1" r="0.7" fill="#3a2212"/>
<polygon points="466.3,841.4 474.0,828.6 472.8,819.6 463.4,816.9 452.9,818.2 451.4,827.0 457.3,840.8" fill="#63422a" stroke="#3a2212" stroke-width="0.9"/>
<polygon points="474.0,828.1 472.8,819.6 463.4,816.9 452.9,818.2 451.4,826.6" fill="#9e744f" stroke="#3a2212" stroke-width="0.7"/>
<circle cx="468.9" cy="821.1" r="0.7" fill="#3a2212"/>
<circle cx="456.9" cy="821.7" r="0.7" fill="#3a2212"/>
<circle cx="459.2" cy="823.9" r="0.7" fill="#3a2212"/>
<circle cx="459.0" cy="822.5" r="0.7" fill="#3a2212"/>
<circle cx="469.6" cy="820.8" r="0.7" fill="#3a2212"/>
<polygon points="285.0,851.4 298.2,836.2 300.3,823.9 290.8,818.5 279.0,816.6 274.0,828.0 275.3,848.1" fill="#734d31" stroke="#3a2212" stroke-width="0.9"/>
<polygon points="298.4,835.7 300.3,823.9 290.8,818.5 279.0,816.6 274.2,827.4" fill="#9a7454" stroke="#3a2212" stroke-width="0.7"/>
<circle cx="286.2" cy="825.2" r="0.7" fill="#3a2212"/>
<circle cx="289.6" cy="825.9" r="0.7" fill="#3a2212"/>
<circle cx="284.0" cy="825.6" r="0.7" fill="#3a2212"/>
<circle cx="283.5" cy="824.9" r="0.7" fill="#3a2212"/>
<circle cx="289.4" cy="824.8" r="0.7" fill="#3a2212"/>
<polygon points="170.8,848.5 180.4,826.1 180.1,810.4 170.3,807.4 159.0,808.2 156.4,823.6 161.2,847.5" fill="#63422a" stroke="#3a2212" stroke-width="0.9"/>
<polygon points="180.5,825.3 180.1,810.4 170.3,807.4 159.0,808.2 156.5,822.8" fill="#8b6746" stroke="#3a2212" stroke-width="0.7"/>
<circle cx="163.6" cy="816.3" r="0.7" fill="#3a2212"/>
<circle cx="175.6" cy="813.9" r="0.7" fill="#3a2212"/>
<circle cx="169.6" cy="814.6" r="0.7" fill="#3a2212"/>
<circle cx="169.8" cy="818.0" r="0.7" fill="#3a2212"/>
<circle cx="169.6" cy="813.5" r="0.7" fill="#3a2212"/>
<polygon points="132.6,855.0 125.6,833.1 116.3,821.5 108.2,824.3 101.7,830.8 109.1,843.7 126.0,859.3" fill="#5c3b24" stroke="#3a2212" stroke-width="0.9"/>
<polygon points="125.2,832.5 116.3,821.5 108.2,824.3 101.7,830.8 108.7,843.1" fill="#9a7454" stroke="#3a2212" stroke-width="0.7"/>
<circle cx="108.8" cy="829.9" r="0.7" fill="#3a2212"/>
<circle cx="111.1" cy="832.5" r="0.7" fill="#3a2212"/>
<circle cx="112.7" cy="835.8" r="0.7" fill="#3a2212"/>
<circle cx="110.6" cy="830.8" r="0.7" fill="#3a2212"/>
<circle cx="113.3" cy="831.7" r="0.7" fill="#3a2212"/>
<polygon points="342.7,852.0 345.1,828.7 340.2,814.5 330.0,814.6 319.6,818.9 321.7,833.6 333.3,854.0" fill="#5c3b24" stroke="#3a2212" stroke-width="0.9"/>
<polygon points="345.0,828.0 340.2,814.5 330.0,814.6 319.6,818.9 321.5,832.9" fill="#a67a58" stroke="#3a2212" stroke-width="0.7"/>
<circle cx="332.3" cy="823.4" r="0.7" fill="#3a2212"/>
<circle cx="334.4" cy="826.4" r="0.7" fill="#3a2212"/>
<circle cx="337.6" cy="820.9" r="0.7" fill="#3a2212"/>
<circle cx="328.9" cy="827.6" r="0.7" fill="#3a2212"/>
<circle cx="335.2" cy="819.8" r="0.7" fill="#3a2212"/>
<polygon points="186.1,851.7 200.5,832.9 204.7,818.2 197.3,813.0 187.6,811.3 181.1,825.1 178.4,848.6" fill="#63422a" stroke="#3a2212" stroke-width="0.9"/>
<polygon points="200.8,832.2 204.7,818.2 197.3,813.0 187.6,811.3 181.4,824.4" fill="#9a7454" stroke="#3a2212" stroke-width="0.7"/>
<circle cx="199.1" cy="819.6" r="0.7" fill="#3a2212"/>
<circle cx="194.7" cy="819.7" r="0.7" fill="#3a2212"/>
<circle cx="190.2" cy="817.9" r="0.7" fill="#3a2212"/>
<circle cx="199.9" cy="820.9" r="0.7" fill="#3a2212"/>
<circle cx="196.1" cy="820.8" r="0.7" fill="#3a2212"/>
<polygon points="482.0,846.8 489.2,832.6 488.5,822.6 480.4,819.9 471.1,821.1 469.5,830.9 474.1,846.1" fill="#6b472d" stroke="#3a2212" stroke-width="0.9"/>
<polygon points="489.3,832.1 488.5,822.6 480.4,819.9 471.1,821.1 469.5,830.4" fill="#765238" stroke="#3a2212" stroke-width="0.7"/>
<circle cx="484.6" cy="826.8" r="0.7" fill="#3a2212"/>
<circle cx="485.5" cy="826.5" r="0.7" fill="#3a2212"/>
<circle cx="484.6" cy="824.9" r="0.7" fill="#3a2212"/>
<circle cx="479.8" cy="824.9" r="0.7" fill="#3a2212"/>
<circle cx="478.4" cy="827.1" r="0.7" fill="#3a2212"/>
<polygon points="149.0,852.6 149.1,827.2 142.4,812.3 131.7,813.6 121.2,818.9 125.0,834.7 139.4,855.6" fill="#63422a" stroke="#3a2212" stroke-width="0.9"/>
<polygon points="148.9,826.4 142.4,812.3 131.7,813.6 121.2,818.9 124.8,833.9" fill="#765238" stroke="#3a2212" stroke-width="0.7"/>
<circle cx="132.4" cy="820.1" r="0.7" fill="#3a2212"/>
<circle cx="136.9" cy="821.5" r="0.7" fill="#3a2212"/>
<circle cx="137.1" cy="824.6" r="0.7" fill="#3a2212"/>
<circle cx="132.7" cy="826.9" r="0.7" fill="#3a2212"/>
<circle cx="134.5" cy="822.8" r="0.7" fill="#3a2212"/>
<polygon points="450.9,845.3 455.1,829.0 452.2,818.9 443.4,817.9 434.2,821.1 434.6,831.5 442.7,846.3" fill="#5c3b24" stroke="#3a2212" stroke-width="0.9"/>
<polygon points="455.0,828.5 452.2,818.9 443.4,817.9 434.2,821.1 434.6,831.0" fill="#8b6746" stroke="#3a2212" stroke-width="0.7"/>
<circle cx="442.8" cy="824.5" r="0.7" fill="#3a2212"/>
<circle cx="443.7" cy="827.4" r="0.7" fill="#3a2212"/>
<circle cx="447.1" cy="823.2" r="0.7" fill="#3a2212"/>
<circle cx="450.0" cy="824.9" r="0.7" fill="#3a2212"/>
<circle cx="443.5" cy="827.7" r="0.7" fill="#3a2212"/>
<polygon points="282.1,859.3 294.2,843.1 297.0,830.5 289.7,825.8 280.4,824.6 275.4,836.4 274.5,856.6" fill="#6b472d" stroke="#3a2212" stroke-width="0.9"/>
<polygon points="294.4,842.5 297.0,830.5 289.7,825.8 280.4,824.6 275.6,835.8" fill="#a67a58" stroke="#3a2212" stroke-width="0.7"/>
<circle cx="289.1" cy="837.1" r="0.7" fill="#3a2212"/>
<circle cx="289.5" cy="835.7" r="0.7" fill="#3a2212"/>
<circle cx="292.0" cy="836.9" r="0.7" fill="#3a2212"/>
<circle cx="284.3" cy="835.0" r="0.7" fill="#3a2212"/>
<circle cx="287.8" cy="835.6" r="0.7" fill="#3a2212"/>
<polygon points="506.4,853.5 515.5,842.6 515.4,834.0 506.6,830.2 496.1,830.2 493.6,838.2 497.7,851.8" fill="#5c3b24" stroke="#3a2212" stroke-width="0.9"/>
<polygon points="515.5,842.2 515.4,834.0 506.6,830.2 496.1,830.2 493.7,837.8" fill="#765238" stroke="#3a2212" stroke-width="0.7"/>
<circle cx="510.4" cy="837.8" r="0.7" fill="#3a2212"/>
<circle cx="505.3" cy="834.1" r="0.7" fill="#3a2212"/>
<circle cx="500.1" cy="836.3" r="0.7" fill="#3a2212"/>
<circle cx="506.8" cy="834.1" r="0.7" fill="#3a2212"/>
<circle cx="504.4" cy="835.4" r="0.7" fill="#3a2212"/>
<polygon points="286.3,849.3 298.2,834.4 300.8,822.6 293.5,817.7 283.9,816.4 279.0,827.4 278.6,846.5" fill="#734d31" stroke="#3a2212" stroke-width="0.9"/>
<polygon points="298.5,833.9 300.8,822.6 293.5,817.7 283.9,816.4 279.2,826.9" fill="#7a7f88" stroke="#3a2212" stroke-width="0.7"/>
<circle cx="288.8" cy="825.6" r="0.7" fill="#3a2212"/>
<circle cx="294.6" cy="826.0" r="0.7" fill="#3a2212"/>
<circle cx="290.2" cy="822.0" r="0.7" fill="#3a2212"/>
<circle cx="291.6" cy="826.3" r="0.7" fill="#3a2212"/>
<circle cx="290.0" cy="825.1" r="0.7" fill="#3a2212"/>
<polygon points="369.8,851.7 379.8,831.5 381.1,817.0 373.5,813.4 364.4,813.6 360.8,827.7 362.2,850.2" fill="#5c3b24" stroke="#3a2212" stroke-width="0.9"/>
<polygon points="379.9,830.8 381.1,817.0 373.5,813.4 364.4,813.6 360.9,827.0" fill="#a67a58" stroke="#3a2212" stroke-width="0.7"/>
<circle cx="377.8" cy="818.4" r="0.7" fill="#3a2212"/>
<circle cx="377.3" cy="821.6" r="0.7" fill="#3a2212"/>
<circle cx="370.1" cy="825.1" r="0.7" fill="#3a2212"/>
<circle cx="367.4" cy="817.5" r="0.7" fill="#3a2212"/>
<circle cx="367.6" cy="822.3" r="0.7" fill="#3a2212"/>
<polygon points="257.0,856.8 262.5,833.8 258.8,819.3 247.3,818.6 235.2,822.0 235.8,836.8 246.3,858.0" fill="#63422a" stroke="#3a2212" stroke-width="0.9"/>
<polygon points="262.4,833.1 258.8,819.3 247.3,818.6 235.2,822.0 235.7,836.1" fill="#916843" stroke="#3a2212" stroke-width="0.7"/>
<circle cx="243.2" cy="826.1" r="0.7" fill="#3a2212"/>
<circle cx="254.3" cy="825.8" r="0.7" fill="#3a2212"/>
<circle cx="241.0" cy="828.9" r="0.7" fill="#3a2212"/>
<circle cx="250.1" cy="825.9" r="0.7" fill="#3a2212"/>
<circle cx="252.6" cy="825.2" r="0.7" fill="#3a2212"/>
<polygon points="387.0,850.4 401.7,833.3 405.8,819.5 398.0,813.9 387.8,811.7 381.3,824.5 378.9,846.9" fill="#6b472d" stroke="#3a2212" stroke-width="0.9"/>
<polygon points="402.0,832.7 405.8,819.5 398.0,813.9 387.8,811.7 381.6,823.8" fill="#916843" stroke="#3a2212" stroke-width="0.7"/>
<circle cx="398.6" cy="823.4" r="0.7" fill="#3a2212"/>
<circle cx="395.4" cy="823.3" r="0.7" fill="#3a2212"/>
<circle cx="393.2" cy="822.1" r="0.7" fill="#3a2212"/>
<circle cx="398.0" cy="826.0" r="0.7" fill="#3a2212"/>
<circle cx="399.6" cy="825.1" r="0.7" fill="#3a2212"/>
<polygon points="392.5,864.8 409.9,849.0 416.8,835.4 410.9,829.2 402.1,825.9 393.2,838.2 385.9,860.5" fill="#5c3b24" stroke="#3a2212" stroke-width="0.9"/>
<polygon points="410.3,848.3 416.8,835.4 410.9,829.2 402.1,825.9 393.6,837.5" fill="#a67a58" stroke="#3a2212" stroke-width="0.7"/>
<circle cx="410.8" cy="837.4" r="0.7" fill="#3a2212"/>
<circle cx="411.1" cy="836.8" r="0.7" fill="#3a2212"/>
<circle cx="403.5" cy="832.0" r="0.7" fill="#3a2212"/>
<circle cx="407.6" cy="838.0" r="0.7" fill="#3a2212"/>
<circle cx="411.3" cy="836.5" r="0.7" fill="#3a2212"/>
<polygon points="289.9,852.9 304.6,835.0 309.0,820.8 301.8,815.4 292.1,813.3 285.4,826.6 282.2,849.5" fill="#734d31" stroke="#3a2212" stroke-width="0.9"/>
<polygon points="304.9,834.3 309.0,820.8 301.8,815.4 292.1,813.3 285.7,825.9" fill="#9e744f" stroke="#3a2212" stroke-width="0.7"/>
<circle cx="298.8" cy="819.1" r="0.7" fill="#3a2212"/>
<circle cx="295.5" cy="820.5" r="0.7" fill="#3a2212"/>
<circle cx="296.8" cy="820.7" r="0.7" fill="#3a2212"/>
<circle cx="303.9" cy="822.9" r="0.7" fill="#3a2212"/>
<circle cx="299.7" cy="826.5" r="0.7" fill="#3a2212"/>
<polygon points="569.4,848.0 564.7,823.2 555.3,810.1 544.8,813.6 535.3,821.0 542.1,835.6 560.3,852.9" fill="#5c3b24" stroke="#3a2212" stroke-width="0.9"/>
<polygon points="564.3,822.5 555.3,810.1 544.8,813.6 535.3,821.0 541.7,834.8" fill="#a67a58" stroke="#3a2212" stroke-width="0.7"/>
<circle cx="551.7" cy="816.6" r="0.7" fill="#3a2212"/>
<circle cx="552.9" cy="821.7" r="0.7" fill="#3a2212"/>
<circle cx="548.9" cy="820.9" r="0.7" fill="#3a2212"/>
<circle cx="549.3" cy="826.7" r="0.7" fill="#3a2212"/>
<circle cx="553.9" cy="816.7" r="0.7" fill="#3a2212"/>
<polygon points="158.0,859.8 161.1,834.2 157.0,817.9 147.4,817.3 137.5,820.7 139.0,837.3 149.2,861.1" fill="#63422a" stroke="#3a2212" stroke-width="0.9"/>
<polygon points="161.0,833.3 157.0,817.9 147.4,817.3 137.5,820.7 138.9,836.5" fill="#765238" stroke="#3a2212" stroke-width="0.7"/>
<circle cx="145.4" cy="827.3" r="0.7" fill="#3a2212"/>
<circle cx="149.4" cy="828.9" r="0.7" fill="#3a2212"/>
<circle cx="142.7" cy="832.0" r="0.7" fill="#3a2212"/>
<circle cx="154.6" cy="823.9" r="0.7" fill="#3a2212"/>
<circle cx="142.9" cy="825.1" r="0.7" fill="#3a2212"/>
<polygon points="458.1,851.0 462.9,837.8 459.9,830.0 450.2,829.5 440.3,833.0 440.6,841.3 449.2,852.3" fill="#5c3b24" stroke="#3a2212" stroke-width="0.9"/>
<polygon points="462.9,837.4 459.9,830.0 450.2,829.5 440.3,833.0 440.6,840.9" fill="#916843" stroke="#3a2212" stroke-width="0.7"/>
<circle cx="457.3" cy="836.4" r="0.7" fill="#3a2212"/>
<circle cx="446.5" cy="834.3" r="0.7" fill="#3a2212"/>
<circle cx="456.5" cy="832.3" r="0.7" fill="#3a2212"/>
<circle cx="452.0" cy="835.9" r="0.7" fill="#3a2212"/>
<circle cx="449.5" cy="837.8" r="0.7" fill="#3a2212"/>
<polygon points="180.3,850.6 193.1,833.9 194.5,820.9 184.3,816.0 172.0,814.7 167.5,827.0 170.1,847.8" fill="#5c3b24" stroke="#3a2212" stroke-width="0.9"/>
<polygon points="193.3,833.3 194.5,820.9 184.3,816.0 172.0,814.7 167.7,826.3" fill="#a67a58" stroke="#3a2212" stroke-width="0.7"/>
<circle cx="177.0" cy="820.0" r="0.7" fill="#3a2212"/>
<circle cx="180.0" cy="826.5" r="0.7" fill="#3a2212"/>
<circle cx="189.5" cy="822.7" r="0.7" fill="#3a2212"/>
<circle cx="178.5" cy="824.1" r="0.7" fill="#3a2212"/>
<circle cx="180.4" cy="823.4" r="0.7" fill="#3a2212"/>
<polygon points="457.3,849.1 462.9,834.9 461.0,825.6 452.3,823.9 443.0,826.2 442.5,835.6 449.1,849.3" fill="#63422a" stroke="#3a2212" stroke-width="0.9"/>
<polygon points="462.9,834.4 461.0,825.6 452.3,823.9 443.0,826.2 442.5,835.1" fill="#9a7454" stroke="#3a2212" stroke-width="0.7"/>
<circle cx="448.6" cy="832.6" r="0.7" fill="#3a2212"/>
<circle cx="448.9" cy="831.9" r="0.7" fill="#3a2212"/>
<circle cx="452.9" cy="832.6" r="0.7" fill="#3a2212"/>
<circle cx="450.0" cy="829.3" r="0.7" fill="#3a2212"/>
<circle cx="450.0" cy="827.5" r="0.7" fill="#3a2212"/>
<polygon points="265.5,859.9 273.7,838.7 272.5,824.3 262.4,821.8 251.3,823.2 249.6,837.6 255.8,859.5" fill="#63422a" stroke="#3a2212" stroke-width="0.9"/>
<polygon points="273.8,838.0 272.5,824.3 262.4,821.8 251.3,823.2 249.6,836.8" fill="#946c4c" stroke="#3a2212" stroke-width="0.7"/>
<circle cx="258.2" cy="829.7" r="0.7" fill="#3a2212"/>
<circle cx="260.9" cy="829.7" r="0.7" fill="#3a2212"/>
<circle cx="255.6" cy="833.5" r="0.7" fill="#3a2212"/>
<circle cx="257.3" cy="831.1" r="0.7" fill="#3a2212"/>
<circle cx="259.3" cy="827.2" r="0.7" fill="#3a2212"/>
<polygon points="560.6,852.2 552.9,830.9 543.1,819.8 535.2,823.0 528.8,829.9 536.6,842.3 554.1,856.8" fill="#6b472d" stroke="#3a2212" stroke-width="0.9"/>
<polygon points="552.4,830.3 543.1,819.8 535.2,823.0 528.8,829.9 536.2,841.7" fill="#9e744f" stroke="#3a2212" stroke-width="0.7"/>
<circle cx="538.5" cy="825.5" r="0.7" fill="#3a2212"/>
<circle cx="539.6" cy="825.9" r="0.7" fill="#3a2212"/>
<circle cx="543.6" cy="825.8" r="0.7" fill="#3a2212"/>
<circle cx="541.3" cy="830.6" r="0.7" fill="#3a2212"/>
<circle cx="539.9" cy="834.1" r="0.7" fill="#3a2212"/>
<polygon points="431.5,852.6 435.7,837.3 432.3,828.3 422.6,827.9 412.7,831.7 413.5,841.2 422.6,854.1" fill="#6b472d" stroke="#3a2212" stroke-width="0.9"/>
<polygon points="435.6,836.9 432.3,828.3 422.6,827.9 412.7,831.7 413.4,840.8" fill="#9a7454" stroke="#3a2212" stroke-width="0.7"/>
<circle cx="418.6" cy="835.9" r="0.7" fill="#3a2212"/>
<circle cx="422.9" cy="832.5" r="0.7" fill="#3a2212"/>
<circle cx="429.7" cy="830.9" r="0.7" fill="#3a2212"/>
<circle cx="419.6" cy="832.2" r="0.7" fill="#3a2212"/>
<circle cx="429.1" cy="834.0" r="0.7" fill="#3a2212"/>
<polygon points="645.4,863.7 664.8,849.2 673.0,835.9 667.2,828.8 658.2,824.3 648.0,836.1 638.7,858.4" fill="#63422a" stroke="#3a2212" stroke-width="0.9"/>
<polygon points="665.3,848.6 673.0,835.9 667.2,828.8 658.2,824.3 648.5,835.5" fill="#765238" stroke="#3a2212" stroke-width="0.7"/>
<circle cx="659.7" cy="838.0" r="0.7" fill="#3a2212"/>
<circle cx="658.1" cy="837.5" r="0.7" fill="#3a2212"/>
<circle cx="668.8" cy="835.1" r="0.7" fill="#3a2212"/>
<circle cx="654.4" cy="834.8" r="0.7" fill="#3a2212"/>
<circle cx="661.7" cy="832.5" r="0.7" fill="#3a2212"/>
<polygon points="375.8,867.4 390.2,849.6 392.9,835.4 383.2,829.9 371.2,827.9 365.5,841.1 365.9,864.0" fill="#734d31" stroke="#3a2212" stroke-width="0.9"/>
<polygon points="390.4,849.0 392.9,835.4 383.2,829.9 371.2,827.9 365.8,840.4" fill="#916843" stroke="#3a2212" stroke-width="0.7"/>
<circle cx="376.4" cy="840.6" r="0.7" fill="#3a2212"/>
<circle cx="375.7" cy="836.5" r="0.7" fill="#3a2212"/>
<circle cx="383.8" cy="842.4" r="0.7" fill="#3a2212"/>
<circle cx="383.5" cy="841.5" r="0.7" fill="#3a2212"/>
<circle cx="374.5" cy="839.1" r="0.7" fill="#3a2212"/>
<polygon points="251.4,861.2 254.8,840.6 250.0,828.4 239.1,828.7 228.1,833.2 229.9,846.0 241.5,863.3" fill="#734d31" stroke="#3a2212" stroke-width="0.9"/>
<polygon points="254.6,840.0 250.0,828.4 239.1,828.7 228.1,833.2 229.7,845.4" fill="#8b6746" stroke="#3a2212" stroke-width="0.7"/>
<circle cx="239.7" cy="835.5" r="0.7" fill="#3a2212"/>
<circle cx="237.0" cy="833.9" r="0.7" fill="#3a2212"/>
<circle cx="244.6" cy="839.1" r="0.7" fill="#3a2212"/>
<circle cx="241.3" cy="836.9" r="0.7" fill="#3a2212"/>
<circle cx="247.8" cy="837.2" r="0.7" fill="#3a2212"/>
<polygon points="271.4,859.0 281.4,836.7 282.3,820.9 274.0,817.5 264.1,817.9 260.7,833.3 263.1,857.6" fill="#63422a" stroke="#3a2212" stroke-width="0.9"/>
<polygon points="281.6,835.9 282.3,820.9 274.0,817.5 264.1,817.9 260.9,832.5" fill="#866242" stroke="#3a2212" stroke-width="0.7"/>
<circle cx="268.7" cy="820.9" r="0.7" fill="#3a2212"/>
<circle cx="268.8" cy="826.6" r="0.7" fill="#3a2212"/>
<circle cx="273.8" cy="826.6" r="0.7" fill="#3a2212"/>
<circle cx="273.2" cy="828.8" r="0.7" fill="#3a2212"/>
<circle cx="269.5" cy="824.0" r="0.7" fill="#3a2212"/>
<polygon points="182.9,860.5 198.5,839.8 203.2,823.6 195.3,818.3 185.2,816.3 178.1,831.4 174.7,857.1" fill="#5c3b24" stroke="#3a2212" stroke-width="0.9"/>
<polygon points="198.8,839.0 203.2,823.6 195.3,818.3 185.2,816.3 178.4,830.7" fill="#8b6746" stroke="#3a2212" stroke-width="0.7"/>
<circle cx="190.0" cy="830.4" r="0.7" fill="#3a2212"/>
<circle cx="195.2" cy="825.5" r="0.7" fill="#3a2212"/>
<circle cx="199.4" cy="824.8" r="0.7" fill="#3a2212"/>
<circle cx="191.9" cy="825.4" r="0.7" fill="#3a2212"/>
<circle cx="185.8" cy="827.3" r="0.7" fill="#3a2212"/>
<polygon points="638.6,857.2 653.8,843.0 659.2,830.7 653.3,824.9 644.6,822.1 637.2,833.2 632.0,853.3" fill="#734d31" stroke="#3a2212" stroke-width="0.9"/>
<polygon points="654.1,842.4 659.2,830.7 653.3,824.9 644.6,822.1 637.5,832.6" fill="#765238" stroke="#3a2212" stroke-width="0.7"/>
<circle cx="648.6" cy="831.8" r="0.7" fill="#3a2212"/>
<circle cx="647.5" cy="834.9" r="0.7" fill="#3a2212"/>
<circle cx="652.4" cy="829.3" r="0.7" fill="#3a2212"/>
<circle cx="648.9" cy="832.8" r="0.7" fill="#3a2212"/>
<circle cx="647.8" cy="828.3" r="0.7" fill="#3a2212"/>
<polygon points="369.3,870.9 381.5,853.2 382.7,839.7 372.6,835.2 360.5,834.3 356.4,847.1 359.2,868.4" fill="#5c3b24" stroke="#3a2212" stroke-width="0.9"/>
<polygon points="381.7,852.5 382.7,839.7 372.6,835.2 360.5,834.3 356.5,846.4" fill="#9a7454" stroke="#3a2212" stroke-width="0.7"/>
<circle cx="372.3" cy="839.0" r="0.7" fill="#3a2212"/>
<circle cx="371.1" cy="845.6" r="0.7" fill="#3a2212"/>
<circle cx="373.1" cy="839.9" r="0.7" fill="#3a2212"/>
<circle cx="372.7" cy="847.2" r="0.7" fill="#3a2212"/>
<circle cx="365.1" cy="839.6" r="0.7" fill="#3a2212"/>
<polygon points="442.7,866.4 449.4,851.9 446.9,842.6 436.3,841.2 425.0,843.9 424.6,853.3 432.8,867.0" fill="#63422a" stroke="#3a2212" stroke-width="0.9"/>
<polygon points="449.4,851.4 446.9,842.6 436.3,841.2 425.0,843.9 424.5,852.9" fill="#9a7454" stroke="#3a2212" stroke-width="0.7"/>
<circle cx="430.7" cy="849.1" r="0.7" fill="#3a2212"/>
<circle cx="431.7" cy="847.0" r="0.7" fill="#3a2212"/>
<circle cx="434.9" cy="844.7" r="0.7" fill="#3a2212"/>
<circle cx="432.4" cy="845.5" r="0.7" fill="#3a2212"/>
<circle cx="430.3" cy="850.5" r="0.7" fill="#3a2212"/>
<polygon points="347.8,870.4 351.3,847.3 346.5,833.2 335.6,833.2 324.4,837.4 326.1,852.0 337.8,872.3" fill="#5c3b24" stroke="#3a2212" stroke-width="0.9"/>
<polygon points="351.2,846.6 346.5,833.2 335.6,833.2 324.4,837.4 326.0,851.3" fill="#9e744f" stroke="#3a2212" stroke-width="0.7"/>
<circle cx="337.1" cy="839.0" r="0.7" fill="#3a2212"/>
<circle cx="339.4" cy="841.7" r="0.7" fill="#3a2212"/>
<circle cx="334.6" cy="840.4" r="0.7" fill="#3a2212"/>
<circle cx="336.5" cy="843.3" r="0.7" fill="#3a2212"/>
<circle cx="335.5" cy="841.0" r="0.7" fill="#3a2212"/>
<polygon points="352.7,868.5 358.7,848.6 355.5,836.0 344.6,834.9 333.1,837.9 333.2,850.8 342.5,869.4" fill="#6b472d" stroke="#3a2212" stroke-width="0.9"/>
<polygon points="358.6,848.0 355.5,836.0 344.6,834.9 333.1,837.9 333.1,850.2" fill="#946c4c" stroke="#3a2212" stroke-width="0.7"/>
<circle cx="346.2" cy="846.1" r="0.7" fill="#3a2212"/>
<circle cx="350.7" cy="838.8" r="0.7" fill="#3a2212"/>
<circle cx="349.2" cy="840.5" r="0.7" fill="#3a2212"/>
<circle cx="346.4" cy="838.9" r="0.7" fill="#3a2212"/>
<circle cx="348.3" cy="844.9" r="0.7" fill="#3a2212"/>
<polygon points="266.0,866.1 274.9,846.8 273.6,833.6 262.7,831.0 250.6,832.3 248.8,845.4 255.5,865.5" fill="#6b472d" stroke="#3a2212" stroke-width="0.9"/>
<polygon points="274.9,846.2 273.6,833.6 262.7,831.0 250.6,832.3 248.9,844.7" fill="#7f5a40" stroke="#3a2212" stroke-width="0.7"/>
<circle cx="265.1" cy="837.0" r="0.7" fill="#3a2212"/>
<circle cx="257.9" cy="835.8" r="0.7" fill="#3a2212"/>
<circle cx="255.4" cy="841.0" r="0.7" fill="#3a2212"/>
<circle cx="265.7" cy="839.9" r="0.7" fill="#3a2212"/>
<circle cx="264.5" cy="835.1" r="0.7" fill="#3a2212"/>
<polygon points="260.0,867.1 266.3,842.8 263.2,827.1 252.0,825.9 240.0,828.7 240.1,844.6 249.5,867.8" fill="#5c3b24" stroke="#3a2212" stroke-width="0.9"/>
<polygon points="266.3,842.0 263.2,827.1 252.0,825.9 240.0,828.7 240.0,843.8" fill="#a67a58" stroke="#3a2212" stroke-width="0.7"/>
<circle cx="250.0" cy="831.5" r="0.7" fill="#3a2212"/>
<circle cx="245.5" cy="837.0" r="0.7" fill="#3a2212"/>
<circle cx="248.0" cy="835.1" r="0.7" fill="#3a2212"/>
<circle cx="256.9" cy="835.8" r="0.7" fill="#3a2212"/>
<circle cx="245.4" cy="830.9" r="0.7" fill="#3a2212"/>
<polygon points="143.8,857.2 141.3,832.9 133.0,819.7 122.1,822.5 112.0,829.3 117.5,843.8 134.3,861.5" fill="#63422a" stroke="#3a2212" stroke-width="0.9"/>
<polygon points="141.0,832.2 133.0,819.7 122.1,822.5 112.0,829.3 117.2,843.1" fill="#916843" stroke="#3a2212" stroke-width="0.7"/>
<circle cx="132.2" cy="826.1" r="0.7" fill="#3a2212"/>
<circle cx="122.9" cy="829.9" r="0.7" fill="#3a2212"/>
<circle cx="127.2" cy="832.2" r="0.7" fill="#3a2212"/>
<circle cx="131.7" cy="826.0" r="0.7" fill="#3a2212"/>
<circle cx="129.1" cy="826.1" r="0.7" fill="#3a2212"/>
<polygon points="465.8,867.8 471.0,851.7 468.4,841.5 459.3,840.2 449.6,843.0 449.6,853.5 457.3,868.5" fill="#734d31" stroke="#3a2212" stroke-width="0.9"/>
<polygon points="471.0,851.2 468.4,841.5 459.3,840.2 449.6,843.0 449.5,853.0" fill="#9e744f" stroke="#3a2212" stroke-width="0.7"/>
<circle cx="461.0" cy="846.6" r="0.7" fill="#3a2212"/>
<circle cx="459.2" cy="848.7" r="0.7" fill="#3a2212"/>
<circle cx="456.8" cy="845.4" r="0.7" fill="#3a2212"/>
<circle cx="463.3" cy="846.9" r="0.7" fill="#3a2212"/>
<circle cx="460.8" cy="845.7" r="0.7" fill="#3a2212"/>
<polygon points="275.8,870.8 287.9,854.8 289.5,842.3 280.2,837.6 268.9,836.4 264.5,848.1 266.4,868.1" fill="#6b472d" stroke="#3a2212" stroke-width="0.9"/>
<polygon points="288.1,854.2 289.5,842.3 280.2,837.6 268.9,836.4 264.7,847.5" fill="#866242" stroke="#3a2212" stroke-width="0.7"/>
<circle cx="283.0" cy="848.7" r="0.7" fill="#3a2212"/>
<circle cx="282.3" cy="846.2" r="0.7" fill="#3a2212"/>
<circle cx="282.8" cy="849.6" r="0.7" fill="#3a2212"/>
<circle cx="274.5" cy="842.9" r="0.7" fill="#3a2212"/>
<circle cx="278.9" cy="843.4" r="0.7" fill="#3a2212"/>
<polygon points="342.5,861.0 345.5,840.0 340.2,827.8 328.7,828.6 317.2,833.6 319.4,846.6 332.1,863.7" fill="#5c3b24" stroke="#3a2212" stroke-width="0.9"/>
<polygon points="345.3,839.3 340.2,827.8 328.7,828.6 317.2,833.6 319.2,846.0" fill="#86382a" stroke="#3a2212" stroke-width="0.7"/>
<circle cx="324.8" cy="834.4" r="0.7" fill="#3a2212"/>
<circle cx="323.4" cy="834.1" r="0.7" fill="#3a2212"/>
<circle cx="335.5" cy="836.1" r="0.7" fill="#3a2212"/>
<circle cx="329.0" cy="839.6" r="0.7" fill="#3a2212"/>
<circle cx="330.9" cy="836.9" r="0.7" fill="#3a2212"/>
<polygon points="554.3,864.2 544.0,845.2 533.0,836.7 525.4,841.6 520.0,849.9 529.3,860.2 548.4,870.2" fill="#5c3b24" stroke="#3a2212" stroke-width="0.9"/>
<polygon points="543.5,844.7 533.0,836.7 525.4,841.6 520.0,849.9 528.8,859.7" fill="#916843" stroke="#3a2212" stroke-width="0.7"/>
<circle cx="526.8" cy="849.8" r="0.7" fill="#3a2212"/>
<circle cx="536.3" cy="847.6" r="0.7" fill="#3a2212"/>
<circle cx="532.1" cy="844.6" r="0.7" fill="#3a2212"/>
<circle cx="526.3" cy="850.3" r="0.7" fill="#3a2212"/>
<circle cx="537.0" cy="845.6" r="0.7" fill="#3a2212"/>
<polygon points="268.7,876.5 278.6,856.1 279.2,841.5 270.5,838.1 260.3,838.4 257.1,852.6 260.1,875.1" fill="#6b472d" stroke="#3a2212" stroke-width="0.9"/>
<polygon points="278.8,855.4 279.2,841.5 270.5,838.1 260.3,838.4 257.2,851.9" fill="#8b6746" stroke="#3a2212" stroke-width="0.7"/>
<circle cx="266.0" cy="844.0" r="0.7" fill="#3a2212"/>
<circle cx="269.7" cy="844.0" r="0.7" fill="#3a2212"/>
<circle cx="264.2" cy="847.5" r="0.7" fill="#3a2212"/>
<circle cx="268.9" cy="849.3" r="0.7" fill="#3a2212"/>
<circle cx="274.5" cy="847.8" r="0.7" fill="#3a2212"/>
<polygon points="143.5,864.8 139.9,843.5 131.8,832.4 122.1,835.4 113.5,842.4 119.2,854.8 135.2,869.3" fill="#734d31" stroke="#3a2212" stroke-width="0.9"/>
<polygon points="139.6,842.9 131.8,832.4 122.1,835.4 113.5,842.4 118.9,854.2" fill="#866242" stroke="#3a2212" stroke-width="0.7"/>
<circle cx="129.4" cy="839.0" r="0.7" fill="#3a2212"/>
<circle cx="121.6" cy="843.1" r="0.7" fill="#3a2212"/>
<circle cx="128.5" cy="839.9" r="0.7" fill="#3a2212"/>
<circle cx="124.2" cy="841.5" r="0.7" fill="#3a2212"/>
<circle cx="128.9" cy="845.4" r="0.7" fill="#3a2212"/>
<polygon points="612.8,866.8 624.1,844.4 624.5,828.4 614.0,824.7 601.8,824.9 598.4,840.4 602.4,865.2" fill="#6b472d" stroke="#3a2212" stroke-width="0.9"/>
<polygon points="624.3,843.6 624.5,828.4 614.0,824.7 601.8,824.9 598.5,839.6" fill="#916843" stroke="#3a2212" stroke-width="0.7"/>
<circle cx="608.4" cy="830.2" r="0.7" fill="#3a2212"/>
<circle cx="618.9" cy="833.4" r="0.7" fill="#3a2212"/>
<circle cx="608.4" cy="834.5" r="0.7" fill="#3a2212"/>
<circle cx="619.7" cy="835.9" r="0.7" fill="#3a2212"/>
<circle cx="615.4" cy="838.1" r="0.7" fill="#3a2212"/>
<polygon points="588.6,867.7 589.8,847.9 583.8,837.2 572.8,838.9 562.3,844.8 565.4,856.6 578.8,871.2" fill="#6b472d" stroke="#3a2212" stroke-width="0.9"/>
<polygon points="589.6,847.3 583.8,837.2 572.8,838.9 562.3,844.8 565.2,856.1" fill="#866242" stroke="#3a2212" stroke-width="0.7"/>
<circle cx="568.4" cy="849.7" r="0.7" fill="#3a2212"/>
<circle cx="577.2" cy="847.2" r="0.7" fill="#3a2212"/>
<circle cx="580.6" cy="847.0" r="0.7" fill="#3a2212"/>
<circle cx="572.9" cy="849.6" r="0.7" fill="#3a2212"/>
<circle cx="572.6" cy="850.0" r="0.7" fill="#3a2212"/>
<polygon points="370.9,865.7 382.5,848.7 383.9,835.7 374.9,831.3 363.9,830.5 359.7,842.8 361.7,863.4" fill="#6b472d" stroke="#3a2212" stroke-width="0.9"/>
<polygon points="382.7,848.1 383.9,835.7 374.9,831.3 363.9,830.5 359.9,842.2" fill="#866242" stroke="#3a2212" stroke-width="0.7"/>
<circle cx="370.8" cy="838.9" r="0.7" fill="#3a2212"/>
<circle cx="373.1" cy="839.6" r="0.7" fill="#3a2212"/>
<circle cx="374.0" cy="842.7" r="0.7" fill="#3a2212"/>
<circle cx="369.3" cy="836.5" r="0.7" fill="#3a2212"/>
<circle cx="376.1" cy="836.2" r="0.7" fill="#3a2212"/>
<polygon points="518.2,869.2 529.1,858.0 529.7,848.6 520.2,843.8 508.7,842.7 505.3,851.3 508.7,866.6" fill="#734d31" stroke="#3a2212" stroke-width="0.9"/>
<polygon points="529.2,857.5 529.7,848.6 520.2,843.8 508.7,842.7 505.4,850.8" fill="#9a7454" stroke="#3a2212" stroke-width="0.7"/>
<circle cx="515.9" cy="848.7" r="0.7" fill="#3a2212"/>
<circle cx="525.0" cy="851.6" r="0.7" fill="#3a2212"/>
<circle cx="521.3" cy="853.3" r="0.7" fill="#3a2212"/>
<circle cx="518.6" cy="851.7" r="0.7" fill="#3a2212"/>
<circle cx="519.2" cy="848.6" r="0.7" fill="#3a2212"/>
<polygon points="621.7,872.6 637.4,853.0 641.2,837.3 631.9,831.6 620.3,829.3 613.6,843.9 612.2,869.0" fill="#734d31" stroke="#3a2212" stroke-width="0.9"/>
<polygon points="637.6,852.2 641.2,837.3 631.9,831.6 620.3,829.3 613.9,843.1" fill="#94452e" stroke="#3a2212" stroke-width="0.7"/>
<circle cx="629.6" cy="838.2" r="0.7" fill="#3a2212"/>
<circle cx="622.6" cy="842.5" r="0.7" fill="#3a2212"/>
<circle cx="628.3" cy="841.8" r="0.7" fill="#3a2212"/>
<circle cx="626.0" cy="836.5" r="0.7" fill="#3a2212"/>
<circle cx="631.3" cy="839.4" r="0.7" fill="#3a2212"/>
<polygon points="467.6,864.7 472.8,848.8 470.5,838.5 461.9,837.0 452.7,839.5 452.5,850.0 459.5,865.2" fill="#734d31" stroke="#3a2212" stroke-width="0.9"/>
<polygon points="472.8,848.2 470.5,838.5 461.9,837.0 452.7,839.5 452.4,849.4" fill="#8b6746" stroke="#3a2212" stroke-width="0.7"/>
<circle cx="466.8" cy="845.6" r="0.7" fill="#3a2212"/>
<circle cx="458.0" cy="843.7" r="0.7" fill="#3a2212"/>
<circle cx="461.3" cy="841.7" r="0.7" fill="#3a2212"/>
<circle cx="459.6" cy="842.0" r="0.7" fill="#3a2212"/>
<circle cx="466.3" cy="840.0" r="0.7" fill="#3a2212"/>
<polygon points="623.7,871.9 637.7,856.2 641.5,843.3 633.8,837.7 623.8,835.5 617.6,847.4 615.6,868.4" fill="#63422a" stroke="#3a2212" stroke-width="0.9"/>
<polygon points="638.0,855.6 641.5,843.3 633.8,837.7 623.8,835.5 617.9,846.8" fill="#7f5a40" stroke="#3a2212" stroke-width="0.7"/>
<circle cx="631.7" cy="846.8" r="0.7" fill="#3a2212"/>
<circle cx="632.7" cy="846.5" r="0.7" fill="#3a2212"/>
<circle cx="630.6" cy="844.5" r="0.7" fill="#3a2212"/>
<circle cx="626.4" cy="839.6" r="0.7" fill="#3a2212"/>
<circle cx="633.9" cy="845.6" r="0.7" fill="#3a2212"/>
<polygon points="237.3,864.8 234.3,845.2 227.2,834.8 218.7,836.8 211.2,842.8 216.1,854.4 230.0,868.4" fill="#63422a" stroke="#3a2212" stroke-width="0.9"/>
<polygon points="234.0,844.7 227.2,834.8 218.7,836.8 211.2,842.8 215.8,853.8" fill="#866242" stroke="#3a2212" stroke-width="0.7"/>
<circle cx="224.8" cy="842.5" r="0.7" fill="#3a2212"/>
<circle cx="226.1" cy="844.4" r="0.7" fill="#3a2212"/>
<circle cx="219.5" cy="848.8" r="0.7" fill="#3a2212"/>
<circle cx="223.8" cy="842.3" r="0.7" fill="#3a2212"/>
<circle cx="218.5" cy="845.8" r="0.7" fill="#3a2212"/>
<polygon points="185.7,878.0 203.6,865.0 210.6,852.7 204.4,845.6 195.2,841.2 186.0,851.9 178.7,872.7" fill="#6b472d" stroke="#3a2212" stroke-width="0.9"/>
<polygon points="204.0,864.5 210.6,852.7 204.4,845.6 195.2,841.2 186.5,851.3" fill="#866242" stroke="#3a2212" stroke-width="0.7"/>
<circle cx="204.0" cy="856.7" r="0.7" fill="#3a2212"/>
<circle cx="196.1" cy="848.3" r="0.7" fill="#3a2212"/>
<circle cx="201.6" cy="849.8" r="0.7" fill="#3a2212"/>
<circle cx="199.0" cy="853.9" r="0.7" fill="#3a2212"/>
<circle cx="195.1" cy="847.7" r="0.7" fill="#3a2212"/>
<polygon points="341.6,873.8 342.3,851.7 335.8,839.4 324.8,841.1 314.0,846.9 317.5,860.3 331.7,877.2" fill="#734d31" stroke="#3a2212" stroke-width="0.9"/>
<polygon points="342.1,851.1 335.8,839.4 324.8,841.1 314.0,846.9 317.3,859.6" fill="#916843" stroke="#3a2212" stroke-width="0.7"/>
<circle cx="322.5" cy="853.4" r="0.7" fill="#3a2212"/>
<circle cx="330.6" cy="844.4" r="0.7" fill="#3a2212"/>
<circle cx="324.3" cy="850.0" r="0.7" fill="#3a2212"/>
<circle cx="323.2" cy="846.5" r="0.7" fill="#3a2212"/>
<circle cx="324.5" cy="850.7" r="0.7" fill="#3a2212"/>
<polygon points="244.8,861.9 244.6,840.7 238.7,828.5 229.3,829.6 220.3,834.7 223.7,847.7 236.4,864.7" fill="#5c3b24" stroke="#3a2212" stroke-width="0.9"/>
<polygon points="244.4,840.1 238.7,828.5 229.3,829.6 220.3,834.7 223.5,847.1" fill="#946c4c" stroke="#3a2212" stroke-width="0.7"/>
<circle cx="226.8" cy="836.3" r="0.7" fill="#3a2212"/>
<circle cx="234.8" cy="840.1" r="0.7" fill="#3a2212"/>
<circle cx="231.3" cy="838.9" r="0.7" fill="#3a2212"/>
<circle cx="235.5" cy="838.2" r="0.7" fill="#3a2212"/>
<circle cx="232.2" cy="839.1" r="0.7" fill="#3a2212"/>
<polygon points="424.6,869.2 428.7,853.2 425.6,843.3 416.6,842.5 407.3,845.8 407.9,856.1 416.3,870.4" fill="#6b472d" stroke="#3a2212" stroke-width="0.9"/>
<polygon points="428.6,852.6 425.6,843.3 416.6,842.5 407.3,845.8 407.8,855.6" fill="#946c4c" stroke="#3a2212" stroke-width="0.7"/>
<circle cx="412.6" cy="847.3" r="0.7" fill="#3a2212"/>
<circle cx="419.8" cy="847.2" r="0.7" fill="#3a2212"/>
<circle cx="421.1" cy="850.5" r="0.7" fill="#3a2212"/>
<circle cx="415.3" cy="847.7" r="0.7" fill="#3a2212"/>
<circle cx="413.8" cy="847.1" r="0.7" fill="#3a2212"/>
<polygon points="156.5,863.6 159.9,843.3 155.3,831.1 144.7,831.3 134.0,835.5 135.6,848.3 146.8,865.6" fill="#734d31" stroke="#3a2212" stroke-width="0.9"/>
<polygon points="159.7,842.6 155.3,831.1 144.7,831.3 134.0,835.5 135.5,847.7" fill="#866242" stroke="#3a2212" stroke-width="0.7"/>
<circle cx="139.6" cy="836.9" r="0.7" fill="#3a2212"/>
<circle cx="145.3" cy="839.6" r="0.7" fill="#3a2212"/>
<circle cx="144.2" cy="841.9" r="0.7" fill="#3a2212"/>
<circle cx="140.8" cy="838.0" r="0.7" fill="#3a2212"/>
<circle cx="141.6" cy="838.2" r="0.7" fill="#3a2212"/>
<polygon points="194.5,865.2 211.9,854.2 217.5,842.7 209.6,834.6 198.5,829.3 190.3,839.0 185.8,859.2" fill="#734d31" stroke="#3a2212" stroke-width="0.9"/>
<polygon points="212.3,853.7 217.5,842.7 209.6,834.6 198.5,829.3 190.7,838.5" fill="#946c4c" stroke="#3a2212" stroke-width="0.7"/>
<circle cx="206.0" cy="840.2" r="0.7" fill="#3a2212"/>
<circle cx="211.5" cy="844.6" r="0.7" fill="#3a2212"/>
<circle cx="205.0" cy="842.7" r="0.7" fill="#3a2212"/>
<circle cx="202.9" cy="836.1" r="0.7" fill="#3a2212"/>
<circle cx="203.2" cy="838.3" r="0.7" fill="#3a2212"/>
<polygon points="490.6,873.3 498.8,862.4 498.6,854.1 490.7,850.6 481.2,850.9 478.9,858.8 482.7,871.9" fill="#734d31" stroke="#3a2212" stroke-width="0.9"/>
<polygon points="498.8,862.0 498.6,854.1 490.7,850.6 481.2,850.9 479.0,858.4" fill="#866242" stroke="#3a2212" stroke-width="0.7"/>
<circle cx="487.9" cy="855.0" r="0.7" fill="#3a2212"/>
<circle cx="491.5" cy="855.7" r="0.7" fill="#3a2212"/>
<circle cx="495.0" cy="856.0" r="0.7" fill="#3a2212"/>
<circle cx="484.1" cy="856.8" r="0.7" fill="#3a2212"/>
<circle cx="484.1" cy="856.1" r="0.7" fill="#3a2212"/>
<polygon points="286.0,878.1 303.4,864.4 308.6,851.4 299.9,843.9 288.2,839.4 280.3,850.7 276.7,872.7" fill="#63422a" stroke="#3a2212" stroke-width="0.9"/>
<polygon points="303.8,863.8 308.6,851.4 299.9,843.9 288.2,839.4 280.7,850.1" fill="#765238" stroke="#3a2212" stroke-width="0.7"/>
<circle cx="299.2" cy="853.1" r="0.7" fill="#3a2212"/>
<circle cx="297.1" cy="849.4" r="0.7" fill="#3a2212"/>
<circle cx="287.3" cy="850.1" r="0.7" fill="#3a2212"/>
<circle cx="289.0" cy="847.2" r="0.7" fill="#3a2212"/>
<circle cx="295.6" cy="846.6" r="0.7" fill="#3a2212"/>
<polygon points="156.7,876.1 157.9,853.6 151.9,840.5 141.2,841.6 130.7,846.8 133.8,860.7 147.1,879.0" fill="#734d31" stroke="#3a2212" stroke-width="0.9"/>
<polygon points="157.7,852.9 151.9,840.5 141.2,841.6 130.7,846.8 133.6,860.0" fill="#916843" stroke="#3a2212" stroke-width="0.7"/>
<circle cx="146.1" cy="848.5" r="0.7" fill="#3a2212"/>
<circle cx="144.8" cy="847.9" r="0.7" fill="#3a2212"/>
<circle cx="136.4" cy="850.7" r="0.7" fill="#3a2212"/>
<circle cx="141.2" cy="852.9" r="0.7" fill="#3a2212"/>
<circle cx="147.9" cy="849.4" r="0.7" fill="#3a2212"/>
<polygon points="388.0,876.6 406.2,863.3 412.7,850.5 405.2,842.9 394.6,838.1 385.7,849.2 379.8,870.9" fill="#5c3b24" stroke="#3a2212" stroke-width="0.9"/>
<polygon points="406.6,862.8 412.7,850.5 405.2,842.9 394.6,838.1 386.1,848.6" fill="#765238" stroke="#3a2212" stroke-width="0.7"/>
<circle cx="405.6" cy="852.6" r="0.7" fill="#3a2212"/>
<circle cx="404.2" cy="853.8" r="0.7" fill="#3a2212"/>
<circle cx="400.8" cy="853.9" r="0.7" fill="#3a2212"/>
<circle cx="397.6" cy="842.8" r="0.7" fill="#3a2212"/>
<circle cx="403.2" cy="853.2" r="0.7" fill="#3a2212"/>
<polygon points="469.9,869.5 475.5,856.8 473.5,848.6 464.8,847.0 455.4,849.5 455.0,857.8 461.7,869.9" fill="#63422a" stroke="#3a2212" stroke-width="0.9"/>
<polygon points="475.5,856.4 473.5,848.6 464.8,847.0 455.4,849.5 454.9,857.4" fill="#866242" stroke="#3a2212" stroke-width="0.7"/>
<circle cx="465.6" cy="850.4" r="0.7" fill="#3a2212"/>
<circle cx="470.2" cy="852.7" r="0.7" fill="#3a2212"/>
<circle cx="460.5" cy="850.4" r="0.7" fill="#3a2212"/>
<circle cx="459.7" cy="854.3" r="0.7" fill="#3a2212"/>
<circle cx="465.6" cy="853.4" r="0.7" fill="#3a2212"/>
<polygon points="377.1,874.0 391.8,858.0 395.5,844.7 386.9,838.8 375.9,836.3 369.6,848.5 368.2,870.2" fill="#734d31" stroke="#3a2212" stroke-width="0.9"/>
<polygon points="392.1,857.4 395.5,844.7 386.9,838.8 375.9,836.3 369.9,847.8" fill="#94452e" stroke="#3a2212" stroke-width="0.7"/>
<circle cx="379.7" cy="845.7" r="0.7" fill="#3a2212"/>
<circle cx="384.3" cy="844.6" r="0.7" fill="#3a2212"/>
<circle cx="386.2" cy="845.4" r="0.7" fill="#3a2212"/>
<circle cx="390.1" cy="846.6" r="0.7" fill="#3a2212"/>
<circle cx="384.0" cy="849.2" r="0.7" fill="#3a2212"/>
<polygon points="279.3,873.7 294.8,854.0 298.8,838.4 290.2,832.9 279.2,830.7 272.5,845.2 270.4,870.2" fill="#5c3b24" stroke="#3a2212" stroke-width="0.9"/>
<polygon points="295.0,853.2 298.8,838.4 290.2,832.9 279.2,830.7 272.8,844.5" fill="#866242" stroke="#3a2212" stroke-width="0.7"/>
<circle cx="288.8" cy="846.5" r="0.7" fill="#3a2212"/>
<circle cx="288.9" cy="841.8" r="0.7" fill="#3a2212"/>
<circle cx="283.5" cy="841.1" r="0.7" fill="#3a2212"/>
<circle cx="285.9" cy="843.9" r="0.7" fill="#3a2212"/>
<circle cx="287.4" cy="841.8" r="0.7" fill="#3a2212"/>
<polygon points="285.3,876.9 302.4,862.0 307.7,848.6 299.6,841.7 288.6,837.8 280.7,849.7 276.6,872.0" fill="#6b472d" stroke="#3a2212" stroke-width="0.9"/>
<polygon points="302.7,861.4 307.7,848.6 299.6,841.7 288.6,837.8 281.1,849.1" fill="#7a7f88" stroke="#3a2212" stroke-width="0.7"/>
<circle cx="299.1" cy="852.3" r="0.7" fill="#3a2212"/>
<circle cx="294.1" cy="844.7" r="0.7" fill="#3a2212"/>
<circle cx="298.8" cy="849.8" r="0.7" fill="#3a2212"/>
<circle cx="302.0" cy="847.7" r="0.7" fill="#3a2212"/>
<circle cx="298.2" cy="852.9" r="0.7" fill="#3a2212"/>
<polygon points="391.7,874.3 409.5,861.5 416.4,849.3 410.3,842.2 401.0,837.7 392.0,848.4 384.7,869.1" fill="#63422a" stroke="#3a2212" stroke-width="0.9"/>
<polygon points="409.9,860.9 416.4,849.3 410.3,842.2 401.0,837.7 392.4,847.8" fill="#946c4c" stroke="#3a2212" stroke-width="0.7"/>
<circle cx="407.2" cy="845.5" r="0.7" fill="#3a2212"/>
<circle cx="399.9" cy="846.8" r="0.7" fill="#3a2212"/>
<circle cx="399.7" cy="847.6" r="0.7" fill="#3a2212"/>
<circle cx="401.4" cy="846.1" r="0.7" fill="#3a2212"/>
<circle cx="403.5" cy="843.5" r="0.7" fill="#3a2212"/>
<polygon points="393.0,883.1 413.1,871.3 422.1,859.3 417.0,851.7 408.4,846.3 397.5,856.6 386.8,877.2" fill="#734d31" stroke="#3a2212" stroke-width="0.9"/>
<polygon points="413.6,870.8 422.1,859.3 417.0,851.7 408.4,846.3 398.1,856.0" fill="#8b6746" stroke="#3a2212" stroke-width="0.7"/>
<circle cx="416.8" cy="860.5" r="0.7" fill="#3a2212"/>
<circle cx="415.9" cy="861.0" r="0.7" fill="#3a2212"/>
<circle cx="405.4" cy="855.1" r="0.7" fill="#3a2212"/>
<circle cx="414.4" cy="855.1" r="0.7" fill="#3a2212"/>
<circle cx="408.9" cy="854.4" r="0.7" fill="#3a2212"/>
<polygon points="385.7,876.0 402.7,861.3 409.3,848.3 403.2,842.0 394.3,838.5 385.7,850.1 378.9,871.6" fill="#6b472d" stroke="#3a2212" stroke-width="0.9"/>
<polygon points="403.1,860.7 409.3,848.3 403.2,842.0 394.3,838.5 386.1,849.5" fill="#9e744f" stroke="#3a2212" stroke-width="0.7"/>
<circle cx="396.5" cy="848.7" r="0.7" fill="#3a2212"/>
<circle cx="398.4" cy="848.0" r="0.7" fill="#3a2212"/>
<circle cx="397.3" cy="846.7" r="0.7" fill="#3a2212"/>
<circle cx="399.4" cy="845.2" r="0.7" fill="#3a2212"/>
<circle cx="395.0" cy="848.3" r="0.7" fill="#3a2212"/>
<polygon points="253.1,879.5 253.5,855.8 248.1,841.5 239.0,841.7 230.2,846.1 233.2,861.0 245.0,881.6" fill="#63422a" stroke="#3a2212" stroke-width="0.9"/>
<polygon points="253.3,855.0 248.1,841.5 239.0,841.7 230.2,846.1 233.0,860.3" fill="#7f5a40" stroke="#3a2212" stroke-width="0.7"/>
<circle cx="234.4" cy="848.9" r="0.7" fill="#3a2212"/>
<circle cx="246.7" cy="851.3" r="0.7" fill="#3a2212"/>
<circle cx="237.8" cy="852.9" r="0.7" fill="#3a2212"/>
<circle cx="245.4" cy="848.2" r="0.7" fill="#3a2212"/>
<circle cx="239.9" cy="851.5" r="0.7" fill="#3a2212"/>
<polygon points="609.8,873.8 619.5,854.6 619.1,841.1 609.0,837.9 597.4,838.6 594.8,851.8 599.9,872.6" fill="#5c3b24" stroke="#3a2212" stroke-width="0.9"/>
<polygon points="619.6,854.0 619.1,841.1 609.0,837.9 597.4,838.6 594.9,851.1" fill="#916843" stroke="#3a2212" stroke-width="0.7"/>
<circle cx="609.8" cy="843.4" r="0.7" fill="#3a2212"/>
<circle cx="604.9" cy="848.7" r="0.7" fill="#3a2212"/>
<circle cx="614.2" cy="845.5" r="0.7" fill="#3a2212"/>
<circle cx="601.4" cy="845.2" r="0.7" fill="#3a2212"/>
<circle cx="608.1" cy="842.5" r="0.7" fill="#3a2212"/>
<polygon points="361.5,881.1 370.3,861.1 370.7,847.0 362.6,843.8 353.2,844.5 350.5,858.3 353.5,880.0" fill="#734d31" stroke="#3a2212" stroke-width="0.9"/>
<polygon points="370.4,860.4 370.7,847.0 362.6,843.8 353.2,844.5 350.6,857.6" fill="#a67a58" stroke="#3a2212" stroke-width="0.7"/>
<circle cx="362.8" cy="849.3" r="0.7" fill="#3a2212"/>
<circle cx="362.7" cy="854.2" r="0.7" fill="#3a2212"/>
<circle cx="366.8" cy="854.7" r="0.7" fill="#3a2212"/>
<circle cx="364.5" cy="848.2" r="0.7" fill="#3a2212"/>
<circle cx="360.1" cy="852.7" r="0.7" fill="#3a2212"/>
<polygon points="476.0,870.5 483.0,855.0 481.6,844.4 472.6,842.1 462.7,843.7 461.4,854.2 467.4,870.3" fill="#63422a" stroke="#3a2212" stroke-width="0.9"/>
<polygon points="483.0,854.4 481.6,844.4 472.6,842.1 462.7,843.7 461.5,853.7" fill="#866242" stroke="#3a2212" stroke-width="0.7"/>
<circle cx="468.8" cy="846.4" r="0.7" fill="#3a2212"/>
<circle cx="476.7" cy="851.9" r="0.7" fill="#3a2212"/>
<circle cx="466.1" cy="846.2" r="0.7" fill="#3a2212"/>
<circle cx="478.3" cy="847.7" r="0.7" fill="#3a2212"/>
<circle cx="473.3" cy="846.2" r="0.7" fill="#3a2212"/>
<polygon points="132.8,870.4 121.3,847.9 108.6,838.0 99.6,844.1 92.7,853.8 103.2,865.9 125.6,877.6" fill="#6b472d" stroke="#3a2212" stroke-width="0.9"/>
<polygon points="120.7,847.4 108.6,838.0 99.6,844.1 92.7,853.8 102.7,865.3" fill="#866242" stroke="#3a2212" stroke-width="0.7"/>
<circle cx="107.5" cy="843.7" r="0.7" fill="#3a2212"/>
<circle cx="103.9" cy="851.7" r="0.7" fill="#3a2212"/>
<circle cx="100.9" cy="849.9" r="0.7" fill="#3a2212"/>
<circle cx="110.6" cy="849.8" r="0.7" fill="#3a2212"/>
<circle cx="109.4" cy="846.0" r="0.7" fill="#3a2212"/>
<polygon points="365.5,887.1 377.2,868.9 379.1,855.2 370.9,850.9 360.7,850.2 356.3,863.2 357.1,884.8" fill="#5c3b24" stroke="#3a2212" stroke-width="0.9"/>
<polygon points="377.3,868.3 379.1,855.2 370.9,850.9 360.7,850.2 356.4,862.6" fill="#a67a58" stroke="#3a2212" stroke-width="0.7"/>
<circle cx="370.8" cy="861.3" r="0.7" fill="#3a2212"/>
<circle cx="363.1" cy="859.0" r="0.7" fill="#3a2212"/>
<circle cx="372.1" cy="859.7" r="0.7" fill="#3a2212"/>
<circle cx="371.6" cy="860.6" r="0.7" fill="#3a2212"/>
<circle cx="365.2" cy="854.5" r="0.7" fill="#3a2212"/>
<polygon points="501.7,869.6 509.2,856.1 507.8,846.8 498.4,844.4 487.8,845.9 486.5,855.0 492.6,869.2" fill="#63422a" stroke="#3a2212" stroke-width="0.9"/>
<polygon points="509.2,855.7 507.8,846.8 498.4,844.4 487.8,845.9 486.5,854.6" fill="#7f5a40" stroke="#3a2212" stroke-width="0.7"/>
<circle cx="499.3" cy="852.3" r="0.7" fill="#3a2212"/>
<circle cx="494.1" cy="849.2" r="0.7" fill="#3a2212"/>
<circle cx="493.0" cy="848.9" r="0.7" fill="#3a2212"/>
<circle cx="496.7" cy="848.9" r="0.7" fill="#3a2212"/>
<circle cx="495.5" cy="853.1" r="0.7" fill="#3a2212"/>
<polygon points="275.9,884.0 291.1,864.9 295.6,849.7 287.8,844.3 277.7,842.2 270.8,856.3 267.7,880.6" fill="#63422a" stroke="#3a2212" stroke-width="0.9"/>
<polygon points="291.4,864.2 295.6,849.7 287.8,844.3 277.7,842.2 271.1,855.6" fill="#916843" stroke="#3a2212" stroke-width="0.7"/>
<circle cx="285.9" cy="852.4" r="0.7" fill="#3a2212"/>
<circle cx="287.3" cy="851.5" r="0.7" fill="#3a2212"/>
<circle cx="284.5" cy="852.4" r="0.7" fill="#3a2212"/>
<circle cx="284.5" cy="850.6" r="0.7" fill="#3a2212"/>
<circle cx="288.9" cy="858.5" r="0.7" fill="#3a2212"/>
<polygon points="131.7,868.0 120.3,845.9 108.1,835.4 99.8,840.5 93.5,849.1 103.7,861.4 125.1,874.2" fill="#5c3b24" stroke="#3a2212" stroke-width="0.9"/>
<polygon points="119.8,845.3 108.1,835.4 99.8,840.5 93.5,849.1 103.2,860.8" fill="#916843" stroke="#3a2212" stroke-width="0.7"/>
<circle cx="100.1" cy="850.2" r="0.7" fill="#3a2212"/>
<circle cx="111.4" cy="843.3" r="0.7" fill="#3a2212"/>
<circle cx="105.9" cy="845.2" r="0.7" fill="#3a2212"/>
<circle cx="107.0" cy="843.6" r="0.7" fill="#3a2212"/>
<circle cx="112.6" cy="847.1" r="0.7" fill="#3a2212"/>
<polygon points="592.9,872.2 594.3,851.8 589.1,839.8 579.4,840.4 569.9,845.1 572.4,857.8 584.1,874.6" fill="#6b472d" stroke="#3a2212" stroke-width="0.9"/>
<polygon points="594.1,851.1 589.1,839.8 579.4,840.4 569.9,845.1 572.2,857.2" fill="#946c4c" stroke="#3a2212" stroke-width="0.7"/>
<circle cx="583.0" cy="845.6" r="0.7" fill="#3a2212"/>
<circle cx="579.8" cy="850.6" r="0.7" fill="#3a2212"/>
<circle cx="580.1" cy="846.3" r="0.7" fill="#3a2212"/>
<circle cx="584.3" cy="846.6" r="0.7" fill="#3a2212"/>
<circle cx="574.0" cy="846.6" r="0.7" fill="#3a2212"/>
<polygon points="202.6,876.9 222.5,869.6 232.0,859.9 228.0,851.5 220.2,844.9 209.1,852.5 197.2,870.1" fill="#734d31" stroke="#3a2212" stroke-width="0.9"/>
<polygon points="223.0,869.1 232.0,859.9 228.0,851.5 220.2,844.9 209.6,852.1" fill="#916843" stroke="#3a2212" stroke-width="0.7"/>
<circle cx="222.6" cy="859.4" r="0.7" fill="#3a2212"/>
<circle cx="223.4" cy="860.4" r="0.7" fill="#3a2212"/>
<circle cx="222.2" cy="853.1" r="0.7" fill="#3a2212"/>
<circle cx="219.3" cy="859.3" r="0.7" fill="#3a2212"/>
<circle cx="220.4" cy="855.5" r="0.7" fill="#3a2212"/>
<polygon points="263.8,886.2 271.5,862.4 270.7,846.3 261.7,843.8 251.7,845.3 250.0,861.3 255.2,885.8" fill="#734d31" stroke="#3a2212" stroke-width="0.9"/>
<polygon points="271.6,861.6 270.7,846.3 261.7,843.8 251.7,845.3 250.0,860.5" fill="#8b6746" stroke="#3a2212" stroke-width="0.7"/>
<circle cx="266.0" cy="857.7" r="0.7" fill="#3a2212"/>
<circle cx="257.1" cy="856.6" r="0.7" fill="#3a2212"/>
<circle cx="262.7" cy="853.7" r="0.7" fill="#3a2212"/>
<circle cx="263.4" cy="850.5" r="0.7" fill="#3a2212"/>
<circle cx="267.3" cy="854.3" r="0.7" fill="#3a2212"/>
<polygon points="274.7,886.4 290.0,868.5 293.5,854.0 284.2,848.2 272.5,845.8 266.2,859.2 265.2,882.6" fill="#63422a" stroke="#3a2212" stroke-width="0.9"/>
<polygon points="290.2,867.8 293.5,854.0 284.2,848.2 272.5,845.8 266.4,858.5" fill="#8b6746" stroke="#3a2212" stroke-width="0.7"/>
<circle cx="286.3" cy="855.5" r="0.7" fill="#3a2212"/>
<circle cx="286.6" cy="853.6" r="0.7" fill="#3a2212"/>
<circle cx="281.6" cy="851.8" r="0.7" fill="#3a2212"/>
<circle cx="278.1" cy="856.9" r="0.7" fill="#3a2212"/>
<circle cx="278.9" cy="856.6" r="0.7" fill="#3a2212"/>
<polygon points="551.7,871.0 538.7,853.0 526.6,845.3 519.9,850.5 515.7,858.7 526.4,868.3 546.8,877.2" fill="#5c3b24" stroke="#3a2212" stroke-width="0.9"/>
<polygon points="538.2,852.6 526.6,845.3 519.9,850.5 515.7,858.7 525.8,867.9" fill="#7f5a40" stroke="#3a2212" stroke-width="0.7"/>
<circle cx="525.6" cy="862.0" r="0.7" fill="#3a2212"/>
<circle cx="523.5" cy="852.8" r="0.7" fill="#3a2212"/>
<circle cx="523.6" cy="859.6" r="0.7" fill="#3a2212"/>
<circle cx="523.8" cy="860.3" r="0.7" fill="#3a2212"/>
<circle cx="523.3" cy="856.2" r="0.7" fill="#3a2212"/>
<polygon points="625.0,878.4 640.7,864.8 644.9,852.5 636.5,845.8 625.3,842.1 618.4,853.1 616.1,873.7" fill="#6b472d" stroke="#3a2212" stroke-width="0.9"/>
<polygon points="641.0,864.2 644.9,852.5 636.5,845.8 625.3,842.1 618.7,852.5" fill="#9a7454" stroke="#3a2212" stroke-width="0.7"/>
<circle cx="628.6" cy="846.1" r="0.7" fill="#3a2212"/>
<circle cx="639.7" cy="854.0" r="0.7" fill="#3a2212"/>
<circle cx="630.6" cy="848.4" r="0.7" fill="#3a2212"/>
<circle cx="638.8" cy="856.3" r="0.7" fill="#3a2212"/>
<circle cx="632.6" cy="851.7" r="0.7" fill="#3a2212"/>
<polygon points="444.8,881.8 448.0,867.0 444.7,858.0 436.3,857.6 427.9,861.2 428.8,870.5 437.1,883.3" fill="#6b472d" stroke="#3a2212" stroke-width="0.9"/>
<polygon points="447.9,866.5 444.7,858.0 436.3,857.6 427.9,861.2 428.7,870.1" fill="#a67a58" stroke="#3a2212" stroke-width="0.7"/>
<circle cx="441.8" cy="861.2" r="0.7" fill="#3a2212"/>
<circle cx="440.1" cy="860.2" r="0.7" fill="#3a2212"/>
<circle cx="437.7" cy="861.0" r="0.7" fill="#3a2212"/>
<circle cx="436.0" cy="861.7" r="0.7" fill="#3a2212"/>
<circle cx="431.6" cy="862.2" r="0.7" fill="#3a2212"/>
<polygon points="403.3,874.0 421.1,865.0 428.7,854.8 423.9,847.2 415.7,841.9 406.2,850.3 397.4,868.2" fill="#6b472d" stroke="#3a2212" stroke-width="0.9"/>
<polygon points="421.5,864.5 428.7,854.8 423.9,847.2 415.7,841.9 406.7,849.9" fill="#866242" stroke="#3a2212" stroke-width="0.7"/>
<circle cx="415.8" cy="847.5" r="0.7" fill="#3a2212"/>
<circle cx="420.1" cy="855.5" r="0.7" fill="#3a2212"/>
<circle cx="418.6" cy="850.8" r="0.7" fill="#3a2212"/>
<circle cx="419.5" cy="857.2" r="0.7" fill="#3a2212"/>
<circle cx="416.5" cy="849.7" r="0.7" fill="#3a2212"/>
<polygon points="344.5,886.2 342.9,860.9 335.4,846.6 324.9,848.4 314.9,854.3 319.7,869.7 335.2,889.7" fill="#5c3b24" stroke="#3a2212" stroke-width="0.9"/>
<polygon points="342.7,860.2 335.4,846.6 324.9,848.4 314.9,854.3 319.4,869.0" fill="#765238" stroke="#3a2212" stroke-width="0.7"/>
<circle cx="322.1" cy="856.6" r="0.7" fill="#3a2212"/>
<circle cx="331.5" cy="858.5" r="0.7" fill="#3a2212"/>
<circle cx="325.5" cy="858.6" r="0.7" fill="#3a2212"/>
<circle cx="325.7" cy="863.1" r="0.7" fill="#3a2212"/>
<circle cx="320.9" cy="856.8" r="0.7" fill="#3a2212"/>
<polygon points="333.2,886.7 325.3,864.7 315.1,853.6 306.4,857.5 299.3,865.1 307.4,877.7 326.0,892.0" fill="#6b472d" stroke="#3a2212" stroke-width="0.9"/>
<polygon points="324.9,864.1 315.1,853.6 306.4,857.5 299.3,865.1 307.0,877.1" fill="#7f5a40" stroke="#3a2212" stroke-width="0.7"/>
<circle cx="308.7" cy="861.0" r="0.7" fill="#3a2212"/>
<circle cx="309.9" cy="862.0" r="0.7" fill="#3a2212"/>
<circle cx="314.6" cy="858.3" r="0.7" fill="#3a2212"/>
<circle cx="313.3" cy="865.1" r="0.7" fill="#3a2212"/>
<circle cx="315.0" cy="864.3" r="0.7" fill="#3a2212"/>
<polygon points="574.1,870.9 568.6,850.4 559.2,841.0 549.3,845.7 540.9,854.4 547.9,865.6 565.8,877.0" fill="#63422a" stroke="#3a2212" stroke-width="0.9"/>
<polygon points="568.3,849.9 559.2,841.0 549.3,845.7 540.9,854.4 547.5,865.1" fill="#9e744f" stroke="#3a2212" stroke-width="0.7"/>
<circle cx="552.9" cy="856.6" r="0.7" fill="#3a2212"/>
<circle cx="559.0" cy="848.1" r="0.7" fill="#3a2212"/>
<circle cx="558.4" cy="849.3" r="0.7" fill="#3a2212"/>
<circle cx="556.5" cy="848.9" r="0.7" fill="#3a2212"/>
<circle cx="554.7" cy="855.8" r="0.7" fill="#3a2212"/>
<polygon points="177.5,881.2 193.1,867.2 196.8,854.6 187.7,847.9 175.9,844.4 169.3,855.6 167.9,876.6" fill="#734d31" stroke="#3a2212" stroke-width="0.9"/>
<polygon points="193.4,866.6 196.8,854.6 187.7,847.9 175.9,844.4 169.6,855.0" fill="#9e744f" stroke="#3a2212" stroke-width="0.7"/>
<circle cx="191.6" cy="854.2" r="0.7" fill="#3a2212"/>
<circle cx="189.7" cy="860.7" r="0.7" fill="#3a2212"/>
<circle cx="190.8" cy="856.5" r="0.7" fill="#3a2212"/>
<circle cx="191.0" cy="859.1" r="0.7" fill="#3a2212"/>
<circle cx="181.4" cy="851.1" r="0.7" fill="#3a2212"/>
<polygon points="246.4,888.2 240.2,866.5 231.4,854.8 223.4,857.2 216.8,863.5 223.6,876.4 239.8,892.1" fill="#6b472d" stroke="#3a2212" stroke-width="0.9"/>
<polygon points="239.8,865.8 231.4,854.8 223.4,857.2 216.8,863.5 223.2,875.8" fill="#a67a58" stroke="#3a2212" stroke-width="0.7"/>
<circle cx="224.8" cy="869.8" r="0.7" fill="#3a2212"/>
<circle cx="228.1" cy="859.5" r="0.7" fill="#3a2212"/>
<circle cx="229.6" cy="862.9" r="0.7" fill="#3a2212"/>
<circle cx="222.0" cy="864.3" r="0.7" fill="#3a2212"/>
<circle cx="223.9" cy="866.9" r="0.7" fill="#3a2212"/>
<polygon points="606.4,894.6 615.5,871.0 614.9,854.8 605.3,851.9 594.3,853.0 592.0,869.1 597.0,893.9" fill="#5c3b24" stroke="#3a2212" stroke-width="0.9"/>
<polygon points="615.5,870.2 614.9,854.8 605.3,851.9 594.3,853.0 592.1,868.3" fill="#765238" stroke="#3a2212" stroke-width="0.7"/>
<circle cx="610.0" cy="858.3" r="0.7" fill="#3a2212"/>
<circle cx="601.1" cy="859.4" r="0.7" fill="#3a2212"/>
<circle cx="608.7" cy="863.8" r="0.7" fill="#3a2212"/>
<circle cx="600.3" cy="863.8" r="0.7" fill="#3a2212"/>
<circle cx="609.7" cy="858.3" r="0.7" fill="#3a2212"/>
<polygon points="158.9,880.4 160.8,859.8 156.4,847.3 147.5,847.2 138.6,851.2 140.6,864.2 150.8,882.2" fill="#63422a" stroke="#3a2212" stroke-width="0.9"/>
<polygon points="160.7,859.2 156.4,847.3 147.5,847.2 138.6,851.2 140.4,863.6" fill="#8b6746" stroke="#3a2212" stroke-width="0.7"/>
<circle cx="149.5" cy="852.8" r="0.7" fill="#3a2212"/>
<circle cx="154.3" cy="857.8" r="0.7" fill="#3a2212"/>
<circle cx="152.2" cy="856.4" r="0.7" fill="#3a2212"/>
<circle cx="154.3" cy="856.6" r="0.7" fill="#3a2212"/>
<circle cx="142.7" cy="853.3" r="0.7" fill="#3a2212"/>
<polygon points="590.9,883.1 588.4,859.4 580.3,846.6 569.7,849.3 560.0,856.0 565.3,870.0 581.7,887.3" fill="#5c3b24" stroke="#3a2212" stroke-width="0.9"/>
<polygon points="588.1,858.7 580.3,846.6 569.7,849.3 560.0,856.0 565.0,869.3" fill="#765238" stroke="#3a2212" stroke-width="0.7"/>
<circle cx="577.7" cy="850.8" r="0.7" fill="#3a2212"/>
<circle cx="572.5" cy="855.5" r="0.7" fill="#3a2212"/>
<circle cx="571.4" cy="855.5" r="0.7" fill="#3a2212"/>
<circle cx="570.1" cy="861.6" r="0.7" fill="#3a2212"/>
<circle cx="575.9" cy="858.1" r="0.7" fill="#3a2212"/>
<polygon points="180.2,889.3 200.9,876.3 210.1,863.5 204.7,855.8 196.0,850.6 184.8,861.6 173.7,883.4" fill="#63422a" stroke="#3a2212" stroke-width="0.9"/>
<polygon points="201.4,875.7 210.1,863.5 204.7,855.8 196.0,850.6 185.3,861.0" fill="#916843" stroke="#3a2212" stroke-width="0.7"/>
<circle cx="195.5" cy="862.3" r="0.7" fill="#3a2212"/>
<circle cx="196.0" cy="858.5" r="0.7" fill="#3a2212"/>
<circle cx="205.2" cy="862.6" r="0.7" fill="#3a2212"/>
<circle cx="200.9" cy="866.1" r="0.7" fill="#3a2212"/>
<circle cx="204.8" cy="863.1" r="0.7" fill="#3a2212"/>
<polygon points="168.7,888.9 181.3,866.6 184.5,850.3 177.4,846.1 168.5,845.6 163.0,861.2 161.4,886.7" fill="#63422a" stroke="#3a2212" stroke-width="0.9"/>
<polygon points="181.5,865.8 184.5,850.3 177.4,846.1 168.5,845.6 163.3,860.4" fill="#9e744f" stroke="#3a2212" stroke-width="0.7"/>
<circle cx="171.9" cy="852.1" r="0.7" fill="#3a2212"/>
<circle cx="176.1" cy="854.0" r="0.7" fill="#3a2212"/>
<circle cx="170.4" cy="856.5" r="0.7" fill="#3a2212"/>
<circle cx="177.6" cy="852.4" r="0.7" fill="#3a2212"/>
<circle cx="172.8" cy="858.1" r="0.7" fill="#3a2212"/>
<polygon points="155.7,886.3 152.7,864.6 144.1,853.8 133.3,857.6 123.5,865.4 129.2,877.8 146.3,891.6" fill="#5c3b24" stroke="#3a2212" stroke-width="0.9"/>
<polygon points="152.3,864.0 144.1,853.8 133.3,857.6 123.5,865.4 128.9,877.2" fill="#a67a58" stroke="#3a2212" stroke-width="0.7"/>
<circle cx="145.4" cy="864.6" r="0.7" fill="#3a2212"/>
<circle cx="135.3" cy="865.4" r="0.7" fill="#3a2212"/>
<circle cx="130.2" cy="864.1" r="0.7" fill="#3a2212"/>
<circle cx="141.7" cy="859.7" r="0.7" fill="#3a2212"/>
<circle cx="143.7" cy="861.0" r="0.7" fill="#3a2212"/>
<polygon points="608.2,889.7 617.5,869.8 618.3,855.6 610.6,852.3 601.5,852.8 598.4,866.5 600.6,888.4" fill="#5c3b24" stroke="#3a2212" stroke-width="0.9"/>
<polygon points="617.6,869.1 618.3,855.6 610.6,852.3 601.5,852.8 598.5,865.8" fill="#7f5a40" stroke="#3a2212" stroke-width="0.7"/>
<circle cx="612.9" cy="862.9" r="0.7" fill="#3a2212"/>
<circle cx="607.9" cy="860.9" r="0.7" fill="#3a2212"/>
<circle cx="604.3" cy="857.9" r="0.7" fill="#3a2212"/>
<circle cx="612.9" cy="865.2" r="0.7" fill="#3a2212"/>
<circle cx="609.9" cy="863.4" r="0.7" fill="#3a2212"/>
<polygon points="235.8,889.7 224.5,870.8 212.8,863.1 205.1,868.9 199.7,878.1 209.6,887.9 229.8,896.5" fill="#63422a" stroke="#3a2212" stroke-width="0.9"/>
<polygon points="224.0,870.4 212.8,863.1 205.1,868.9 199.7,878.1 209.1,887.5" fill="#7f5a40" stroke="#3a2212" stroke-width="0.7"/>
<circle cx="211.4" cy="876.6" r="0.7" fill="#3a2212"/>
<circle cx="210.4" cy="871.4" r="0.7" fill="#3a2212"/>
<circle cx="217.4" cy="872.8" r="0.7" fill="#3a2212"/>
<circle cx="205.9" cy="874.4" r="0.7" fill="#3a2212"/>
<circle cx="208.4" cy="872.4" r="0.7" fill="#3a2212"/>
<polygon points="472.7,888.9 479.4,872.5 477.1,861.8 466.9,860.1 455.8,862.5 455.1,873.3 462.9,889.2" fill="#63422a" stroke="#3a2212" stroke-width="0.9"/>
<polygon points="479.4,872.0 477.1,861.8 466.9,860.1 455.8,862.5 455.1,872.7" fill="#9e744f" stroke="#3a2212" stroke-width="0.7"/>
<circle cx="470.9" cy="868.9" r="0.7" fill="#3a2212"/>
<circle cx="474.0" cy="866.9" r="0.7" fill="#3a2212"/>
<circle cx="468.2" cy="869.3" r="0.7" fill="#3a2212"/>
<circle cx="468.7" cy="869.7" r="0.7" fill="#3a2212"/>
<circle cx="464.2" cy="870.2" r="0.7" fill="#3a2212"/>
<polygon points="520.6,895.4 530.0,884.1 530.9,875.0 523.5,870.8 514.2,870.3 511.0,878.7 513.0,893.2" fill="#734d31" stroke="#3a2212" stroke-width="0.9"/>
<polygon points="530.1,883.7 530.9,875.0 523.5,870.8 514.2,870.3 511.1,878.3" fill="#946c4c" stroke="#3a2212" stroke-width="0.7"/>
<circle cx="516.0" cy="877.7" r="0.7" fill="#3a2212"/>
<circle cx="525.5" cy="879.8" r="0.7" fill="#3a2212"/>
<circle cx="523.0" cy="874.3" r="0.7" fill="#3a2212"/>
<circle cx="520.3" cy="877.2" r="0.7" fill="#3a2212"/>
<circle cx="523.5" cy="875.4" r="0.7" fill="#3a2212"/>
<polygon points="232.7,887.6 220.9,868.4 208.7,860.7 200.6,867.2 195.1,877.1 205.4,886.9 226.5,895.0" fill="#6b472d" stroke="#3a2212" stroke-width="0.9"/>
<polygon points="220.3,867.9 208.7,860.7 200.6,867.2 195.1,877.1 204.8,886.5" fill="#a67a58" stroke="#3a2212" stroke-width="0.7"/>
<circle cx="209.1" cy="876.3" r="0.7" fill="#3a2212"/>
<circle cx="207.7" cy="876.6" r="0.7" fill="#3a2212"/>
<circle cx="201.9" cy="875.9" r="0.7" fill="#3a2212"/>
<circle cx="209.5" cy="865.5" r="0.7" fill="#3a2212"/>
<circle cx="209.3" cy="865.5" r="0.7" fill="#3a2212"/>
<polygon points="528.5,884.5 538.1,871.2 538.7,860.9 530.5,857.0 520.5,856.8 517.4,866.4 520.3,882.6" fill="#6b472d" stroke="#3a2212" stroke-width="0.9"/>
<polygon points="538.3,870.7 538.7,860.9 530.5,857.0 520.5,856.8 517.5,865.9" fill="#9e744f" stroke="#3a2212" stroke-width="0.7"/>
<circle cx="530.9" cy="861.0" r="0.7" fill="#3a2212"/>
<circle cx="528.9" cy="862.3" r="0.7" fill="#3a2212"/>
<circle cx="522.7" cy="863.0" r="0.7" fill="#3a2212"/>
<circle cx="527.3" cy="863.5" r="0.7" fill="#3a2212"/>
<circle cx="531.0" cy="864.1" r="0.7" fill="#3a2212"/>
<polygon points="582.2,892.2 572.2,874.1 561.6,866.2 554.2,871.0 549.0,879.3 558.0,889.0 576.5,898.2" fill="#6b472d" stroke="#3a2212" stroke-width="0.9"/>
<polygon points="571.8,873.6 561.6,866.2 554.2,871.0 549.0,879.3 557.5,888.5" fill="#946c4c" stroke="#3a2212" stroke-width="0.7"/>
<circle cx="558.4" cy="879.4" r="0.7" fill="#3a2212"/>
<circle cx="559.5" cy="876.6" r="0.7" fill="#3a2212"/>
<circle cx="558.8" cy="879.3" r="0.7" fill="#3a2212"/>
<circle cx="561.0" cy="878.4" r="0.7" fill="#3a2212"/>
<circle cx="557.4" cy="873.5" r="0.7" fill="#3a2212"/>
<polygon points="326.3,888.0 318.7,869.9 308.6,863.0 299.6,869.5 292.8,879.5 300.7,888.6 319.1,895.5" fill="#63422a" stroke="#3a2212" stroke-width="0.9"/>
<polygon points="318.3,869.5 308.6,863.0 299.6,869.5 292.8,879.5 300.3,888.2" fill="#9e744f" stroke="#3a2212" stroke-width="0.7"/>
<circle cx="302.2" cy="877.3" r="0.7" fill="#3a2212"/>
<circle cx="306.8" cy="871.1" r="0.7" fill="#3a2212"/>
<circle cx="300.5" cy="877.2" r="0.7" fill="#3a2212"/>
<circle cx="305.1" cy="878.9" r="0.7" fill="#3a2212"/>
<circle cx="303.7" cy="873.5" r="0.7" fill="#3a2212"/>
<polygon points="574.7,892.4 557.6,872.9 542.9,864.8 536.2,871.0 532.3,880.1 545.6,890.3 569.9,899.4" fill="#6b472d" stroke="#3a2212" stroke-width="0.9"/>
<polygon points="556.9,872.4 542.9,864.8 536.2,871.0 532.3,880.1 544.9,889.9" fill="#946c4c" stroke="#3a2212" stroke-width="0.7"/>
<circle cx="543.1" cy="882.5" r="0.7" fill="#3a2212"/>
<circle cx="545.3" cy="870.3" r="0.7" fill="#3a2212"/>
<circle cx="543.6" cy="879.4" r="0.7" fill="#3a2212"/>
<circle cx="545.2" cy="881.5" r="0.7" fill="#3a2212"/>
<circle cx="542.6" cy="881.0" r="0.7" fill="#3a2212"/>
<polygon points="165.3,896.2 173.9,874.8 173.5,859.9 164.4,857.0 154.0,858.1 151.7,872.7 156.4,895.4" fill="#63422a" stroke="#3a2212" stroke-width="0.9"/>
<polygon points="174.0,874.0 173.5,859.9 164.4,857.0 154.0,858.1 151.8,872.0" fill="#7a7f88" stroke="#3a2212" stroke-width="0.7"/>
<circle cx="168.4" cy="866.9" r="0.7" fill="#3a2212"/>
<circle cx="167.5" cy="867.6" r="0.7" fill="#3a2212"/>
<circle cx="169.3" cy="869.3" r="0.7" fill="#3a2212"/>
<circle cx="168.2" cy="869.6" r="0.7" fill="#3a2212"/>
<circle cx="162.0" cy="860.8" r="0.7" fill="#3a2212"/>
<polygon points="616.6,894.1 633.5,878.0 638.7,864.1 630.7,857.6 620.0,854.1 612.2,866.6 608.1,889.5" fill="#63422a" stroke="#3a2212" stroke-width="0.9"/>
<polygon points="633.8,877.4 638.7,864.1 630.7,857.6 620.0,854.1 612.5,866.0" fill="#a67a58" stroke="#3a2212" stroke-width="0.7"/>
<circle cx="626.6" cy="862.9" r="0.7" fill="#3a2212"/>
<circle cx="626.9" cy="870.2" r="0.7" fill="#3a2212"/>
<circle cx="627.9" cy="861.3" r="0.7" fill="#3a2212"/>
<circle cx="626.9" cy="866.1" r="0.7" fill="#3a2212"/>
<circle cx="630.5" cy="862.1" r="0.7" fill="#3a2212"/>
<polygon points="186.4,894.6 210.7,888.5 223.1,878.5 219.3,868.4 211.5,859.6 197.4,867.1 181.1,886.0" fill="#5c3b24" stroke="#3a2212" stroke-width="0.9"/>
<polygon points="211.3,888.1 223.1,878.5 219.3,868.4 211.5,859.6 198.1,866.7" fill="#94452e" stroke="#3a2212" stroke-width="0.7"/>
<circle cx="216.0" cy="878.9" r="0.7" fill="#3a2212"/>
<circle cx="209.1" cy="870.7" r="0.7" fill="#3a2212"/>
<circle cx="217.3" cy="873.7" r="0.7" fill="#3a2212"/>
<circle cx="209.7" cy="872.7" r="0.7" fill="#3a2212"/>
<circle cx="204.8" cy="870.3" r="0.7" fill="#3a2212"/>
<polygon points="160.4,896.6 153.2,872.5 142.5,860.3 132.7,864.6 124.2,872.7 132.3,886.6 152.0,902.2" fill="#5c3b24" stroke="#3a2212" stroke-width="0.9"/>
<polygon points="152.7,871.8 142.5,860.3 132.7,864.6 124.2,872.7 131.9,885.9" fill="#7f5a40" stroke="#3a2212" stroke-width="0.7"/>
<circle cx="137.8" cy="866.5" r="0.7" fill="#3a2212"/>
<circle cx="140.2" cy="876.2" r="0.7" fill="#3a2212"/>
<circle cx="136.7" cy="869.7" r="0.7" fill="#3a2212"/>
<circle cx="144.7" cy="869.8" r="0.7" fill="#3a2212"/>
<circle cx="136.1" cy="873.7" r="0.7" fill="#3a2212"/>
<polygon points="164.4,904.0 172.4,882.6 171.8,867.8 162.9,865.2 152.9,866.4 151.0,881.0 155.8,903.4" fill="#6b472d" stroke="#3a2212" stroke-width="0.9"/>
<polygon points="172.5,881.8 171.8,867.8 162.9,865.2 152.9,866.4 151.1,880.3" fill="#946c4c" stroke="#3a2212" stroke-width="0.7"/>
<circle cx="159.4" cy="873.7" r="0.7" fill="#3a2212"/>
<circle cx="161.1" cy="869.5" r="0.7" fill="#3a2212"/>
<circle cx="165.7" cy="871.9" r="0.7" fill="#3a2212"/>
<circle cx="165.6" cy="878.0" r="0.7" fill="#3a2212"/>
<circle cx="157.1" cy="877.5" r="0.7" fill="#3a2212"/>
<polygon points="263.1,904.4 270.9,886.0 270.1,873.4 261.4,870.7 251.5,871.9 249.7,884.4 254.6,903.7" fill="#734d31" stroke="#3a2212" stroke-width="0.9"/>
<polygon points="270.9,885.4 270.1,873.4 261.4,870.7 251.5,871.9 249.8,883.8" fill="#765238" stroke="#3a2212" stroke-width="0.7"/>
<circle cx="257.6" cy="880.1" r="0.7" fill="#3a2212"/>
<circle cx="262.8" cy="879.2" r="0.7" fill="#3a2212"/>
<circle cx="265.9" cy="881.8" r="0.7" fill="#3a2212"/>
<circle cx="260.2" cy="876.3" r="0.7" fill="#3a2212"/>
<circle cx="265.8" cy="874.8" r="0.7" fill="#3a2212"/>
<polygon points="605.3,892.2 612.9,872.9 611.3,859.8 601.5,857.6 590.6,859.3 589.3,872.3 595.9,892.0" fill="#734d31" stroke="#3a2212" stroke-width="0.9"/>
<polygon points="612.9,872.3 611.3,859.8 601.5,857.6 590.6,859.3 589.3,871.6" fill="#946c4c" stroke="#3a2212" stroke-width="0.7"/>
<circle cx="603.8" cy="868.4" r="0.7" fill="#3a2212"/>
<circle cx="596.6" cy="861.7" r="0.7" fill="#3a2212"/>
<circle cx="600.6" cy="861.3" r="0.7" fill="#3a2212"/>
<circle cx="599.7" cy="868.0" r="0.7" fill="#3a2212"/>
<circle cx="602.5" cy="866.8" r="0.7" fill="#3a2212"/>
<polygon points="598.5,900.3 595.0,875.4 587.3,861.1 578.4,862.6 570.2,868.1 575.6,883.4 590.7,903.5" fill="#5c3b24" stroke="#3a2212" stroke-width="0.9"/>
<polygon points="594.7,874.7 587.3,861.1 578.4,862.6 570.2,868.1 575.3,882.7" fill="#916843" stroke="#3a2212" stroke-width="0.7"/>
<circle cx="580.3" cy="866.4" r="0.7" fill="#3a2212"/>
<circle cx="588.0" cy="871.8" r="0.7" fill="#3a2212"/>
<circle cx="584.3" cy="875.4" r="0.7" fill="#3a2212"/>
<circle cx="576.1" cy="870.0" r="0.7" fill="#3a2212"/>
<circle cx="580.1" cy="875.3" r="0.7" fill="#3a2212"/>
<polygon points="390.3,891.6 408.1,884.2 416.0,874.9 411.6,867.0 403.7,861.0 394.0,868.5 384.7,885.3" fill="#5c3b24" stroke="#3a2212" stroke-width="0.9"/>
<polygon points="408.5,883.8 416.0,874.9 411.6,867.0 403.7,861.0 394.5,868.1" fill="#9a7454" stroke="#3a2212" stroke-width="0.7"/>
<circle cx="404.0" cy="871.9" r="0.7" fill="#3a2212"/>
<circle cx="410.8" cy="872.7" r="0.7" fill="#3a2212"/>
<circle cx="404.2" cy="874.6" r="0.7" fill="#3a2212"/>
<circle cx="404.1" cy="869.4" r="0.7" fill="#3a2212"/>
<circle cx="401.5" cy="869.9" r="0.7" fill="#3a2212"/>
<polygon points="344.1,900.1 336.6,876.4 325.7,864.9 315.6,869.8 307.0,878.5 315.3,891.8 335.6,906.3" fill="#63422a" stroke="#3a2212" stroke-width="0.9"/>
<polygon points="336.2,875.7 325.7,864.9 315.6,869.8 307.0,878.5 314.9,891.2" fill="#7f5a40" stroke="#3a2212" stroke-width="0.7"/>
<circle cx="321.9" cy="873.1" r="0.7" fill="#3a2212"/>
<circle cx="327.4" cy="877.6" r="0.7" fill="#3a2212"/>
<circle cx="318.5" cy="878.5" r="0.7" fill="#3a2212"/>
<circle cx="325.4" cy="874.7" r="0.7" fill="#3a2212"/>
<circle cx="317.7" cy="880.7" r="0.7" fill="#3a2212"/>
<polygon points="263.8,904.5 272.9,884.6 272.0,870.7 261.9,867.9 250.4,868.9 248.3,882.5 254.0,903.7" fill="#6b472d" stroke="#3a2212" stroke-width="0.9"/>
<polygon points="272.9,883.9 272.0,870.7 261.9,867.9 250.4,868.9 248.3,881.9" fill="#866242" stroke="#3a2212" stroke-width="0.7"/>
<circle cx="253.9" cy="873.9" r="0.7" fill="#3a2212"/>
<circle cx="257.9" cy="877.0" r="0.7" fill="#3a2212"/>
<circle cx="258.5" cy="873.3" r="0.7" fill="#3a2212"/>
<circle cx="262.7" cy="873.5" r="0.7" fill="#3a2212"/>
<circle cx="258.0" cy="879.0" r="0.7" fill="#3a2212"/>
<polygon points="265.3,901.3 276.0,882.4 276.2,868.7 265.9,865.1 254.1,865.2 251.0,878.4 255.3,899.7" fill="#6b472d" stroke="#3a2212" stroke-width="0.9"/>
<polygon points="276.1,881.8 276.2,868.7 265.9,865.1 254.1,865.2 251.1,877.8" fill="#9a5238" stroke="#3a2212" stroke-width="0.7"/>
<circle cx="261.4" cy="870.7" r="0.7" fill="#3a2212"/>
<circle cx="267.6" cy="872.0" r="0.7" fill="#3a2212"/>
<circle cx="271.8" cy="870.1" r="0.7" fill="#3a2212"/>
<circle cx="261.4" cy="870.9" r="0.7" fill="#3a2212"/>
<circle cx="267.2" cy="872.3" r="0.7" fill="#3a2212"/>
<polygon points="559.8,892.1 545.1,878.3 532.8,874.7 527.2,882.1 524.9,892.1 536.2,898.1 556.2,900.0" fill="#5c3b24" stroke="#3a2212" stroke-width="0.9"/>
<polygon points="544.5,878.0 532.8,874.7 527.2,882.1 524.9,892.1 535.6,897.8" fill="#7f5a40" stroke="#3a2212" stroke-width="0.7"/>
<circle cx="534.3" cy="890.1" r="0.7" fill="#3a2212"/>
<circle cx="535.2" cy="881.8" r="0.7" fill="#3a2212"/>
<circle cx="537.5" cy="886.1" r="0.7" fill="#3a2212"/>
<circle cx="532.7" cy="888.8" r="0.7" fill="#3a2212"/>
<circle cx="533.0" cy="891.0" r="0.7" fill="#3a2212"/>
<polygon points="374.8,900.2 395.5,886.6 404.3,873.3 398.0,865.4 388.5,860.0 377.6,871.5 367.6,894.2" fill="#63422a" stroke="#3a2212" stroke-width="0.9"/>
<polygon points="396.0,886.0 404.3,873.3 398.0,865.4 388.5,860.0 378.1,870.9" fill="#866242" stroke="#3a2212" stroke-width="0.7"/>
<circle cx="395.4" cy="870.4" r="0.7" fill="#3a2212"/>
<circle cx="398.1" cy="873.9" r="0.7" fill="#3a2212"/>
<circle cx="398.2" cy="873.7" r="0.7" fill="#3a2212"/>
<circle cx="391.1" cy="870.6" r="0.7" fill="#3a2212"/>
<circle cx="394.1" cy="867.4" r="0.7" fill="#3a2212"/>
<polygon points="612.2,896.0 626.9,876.5 631.3,861.3 624.0,856.2 614.3,854.4 607.6,868.7 604.5,892.9" fill="#63422a" stroke="#3a2212" stroke-width="0.9"/>
<polygon points="627.2,875.8 631.3,861.3 624.0,856.2 614.3,854.4 607.9,867.9" fill="#9a7454" stroke="#3a2212" stroke-width="0.7"/>
<circle cx="617.4" cy="865.2" r="0.7" fill="#3a2212"/>
<circle cx="621.1" cy="866.2" r="0.7" fill="#3a2212"/>
<circle cx="619.0" cy="863.1" r="0.7" fill="#3a2212"/>
<circle cx="626.6" cy="864.7" r="0.7" fill="#3a2212"/>
<circle cx="622.4" cy="860.6" r="0.7" fill="#3a2212"/>
<polygon points="481.3,895.4 489.2,882.3 488.6,872.9 480.2,869.9 470.4,870.7 468.5,879.9 473.0,894.5" fill="#63422a" stroke="#3a2212" stroke-width="0.9"/>
<polygon points="489.2,881.9 488.6,872.9 480.2,869.9 470.4,870.7 468.5,879.4" fill="#8b6746" stroke="#3a2212" stroke-width="0.7"/>
<circle cx="479.8" cy="873.8" r="0.7" fill="#3a2212"/>
<circle cx="477.0" cy="877.8" r="0.7" fill="#3a2212"/>
<circle cx="479.4" cy="874.2" r="0.7" fill="#3a2212"/>
<circle cx="483.3" cy="878.6" r="0.7" fill="#3a2212"/>
<circle cx="475.0" cy="876.1" r="0.7" fill="#3a2212"/>
<polygon points="328.6,895.2 316.5,877.0 304.7,869.5 297.5,875.0 292.9,883.8 303.1,893.3 323.2,901.7" fill="#734d31" stroke="#3a2212" stroke-width="0.9"/>
<polygon points="316.0,876.6 304.7,869.5 297.5,875.0 292.9,883.8 302.5,892.8" fill="#86382a" stroke="#3a2212" stroke-width="0.7"/>
<circle cx="306.1" cy="882.4" r="0.7" fill="#3a2212"/>
<circle cx="304.6" cy="885.0" r="0.7" fill="#3a2212"/>
<circle cx="306.0" cy="883.2" r="0.7" fill="#3a2212"/>
<circle cx="306.0" cy="882.1" r="0.7" fill="#3a2212"/>
<circle cx="302.2" cy="878.0" r="0.7" fill="#3a2212"/>
<polygon points="255.4,903.8 245.4,879.6 233.2,868.0 223.7,873.2 215.9,882.2 225.7,895.8 247.5,910.3" fill="#5c3b24" stroke="#3a2212" stroke-width="0.9"/>
<polygon points="244.9,879.0 233.2,868.0 223.7,873.2 215.9,882.2 225.2,895.1" fill="#a67a58" stroke="#3a2212" stroke-width="0.7"/>
<circle cx="233.2" cy="872.8" r="0.7" fill="#3a2212"/>
<circle cx="225.6" cy="878.5" r="0.7" fill="#3a2212"/>
<circle cx="226.6" cy="876.5" r="0.7" fill="#3a2212"/>
<circle cx="222.0" cy="881.9" r="0.7" fill="#3a2212"/>
<circle cx="231.4" cy="877.7" r="0.7" fill="#3a2212"/>
<polygon points="607.1,902.0 618.2,878.7 618.8,862.1 608.9,858.5 597.3,858.7 593.8,874.9 597.3,900.5" fill="#734d31" stroke="#3a2212" stroke-width="0.9"/>
<polygon points="618.4,877.9 618.8,862.1 608.9,858.5 597.3,858.7 593.9,874.1" fill="#916843" stroke="#3a2212" stroke-width="0.7"/>
<circle cx="604.3" cy="871.0" r="0.7" fill="#3a2212"/>
<circle cx="604.3" cy="862.0" r="0.7" fill="#3a2212"/>
<circle cx="601.3" cy="864.3" r="0.7" fill="#3a2212"/>
<circle cx="600.9" cy="869.4" r="0.7" fill="#3a2212"/>
<circle cx="602.7" cy="867.8" r="0.7" fill="#3a2212"/>
<polygon points="635.6,897.2 655.0,893.7 663.7,885.2 659.1,874.8 650.6,865.9 640.0,871.7 629.6,888.5" fill="#6b472d" stroke="#3a2212" stroke-width="0.9"/>
<polygon points="655.5,893.4 663.7,885.2 659.1,874.8 650.6,865.9 640.5,871.4" fill="#8b6746" stroke="#3a2212" stroke-width="0.7"/>
<circle cx="647.7" cy="875.8" r="0.7" fill="#3a2212"/>
<circle cx="651.7" cy="879.2" r="0.7" fill="#3a2212"/>
<circle cx="651.6" cy="882.2" r="0.7" fill="#3a2212"/>
<circle cx="652.6" cy="883.1" r="0.7" fill="#3a2212"/>
<circle cx="652.2" cy="881.3" r="0.7" fill="#3a2212"/>
<polygon points="281.9,901.3 303.8,891.9 314.8,881.1 311.0,873.1 303.6,866.9 291.1,875.8 276.8,894.9" fill="#5c3b24" stroke="#3a2212" stroke-width="0.9"/>
<polygon points="304.4,891.4 314.8,881.1 311.0,873.1 303.6,866.9 291.7,875.3" fill="#7f5a40" stroke="#3a2212" stroke-width="0.7"/>
<circle cx="302.9" cy="878.5" r="0.7" fill="#3a2212"/>
<circle cx="310.1" cy="878.3" r="0.7" fill="#3a2212"/>
<circle cx="303.4" cy="884.5" r="0.7" fill="#3a2212"/>
<circle cx="306.9" cy="881.3" r="0.7" fill="#3a2212"/>
<circle cx="300.2" cy="878.8" r="0.7" fill="#3a2212"/>
<polygon points="381.7,908.5 407.1,902.5 420.4,892.3 416.6,881.9 408.8,872.6 393.9,880.2 376.4,899.6" fill="#734d31" stroke="#3a2212" stroke-width="0.9"/>
<polygon points="407.8,902.1 420.4,892.3 416.6,881.9 408.8,872.6 394.6,879.8" fill="#9a7454" stroke="#3a2212" stroke-width="0.7"/>
<circle cx="405.3" cy="886.2" r="0.7" fill="#3a2212"/>
<circle cx="408.2" cy="885.8" r="0.7" fill="#3a2212"/>
<circle cx="409.9" cy="889.0" r="0.7" fill="#3a2212"/>
<circle cx="413.8" cy="887.0" r="0.7" fill="#3a2212"/>
<circle cx="408.4" cy="880.1" r="0.7" fill="#3a2212"/>
<polygon points="465.2,905.4 470.4,891.6 468.3,882.7 459.9,881.2 450.9,883.7 450.7,892.7 457.4,905.9" fill="#734d31" stroke="#3a2212" stroke-width="0.9"/>
<polygon points="470.4,891.2 468.3,882.7 459.9,881.2 450.9,883.7 450.6,892.3" fill="#9a7454" stroke="#3a2212" stroke-width="0.7"/>
<circle cx="464.8" cy="887.2" r="0.7" fill="#3a2212"/>
<circle cx="459.3" cy="885.4" r="0.7" fill="#3a2212"/>
<circle cx="457.5" cy="884.8" r="0.7" fill="#3a2212"/>
<circle cx="464.9" cy="885.7" r="0.7" fill="#3a2212"/>
<circle cx="465.5" cy="886.6" r="0.7" fill="#3a2212"/>
<polygon points="360.5,901.9 371.7,881.8 373.4,867.0 365.2,863.1 355.2,862.8 351.1,877.0 352.3,900.0" fill="#63422a" stroke="#3a2212" stroke-width="0.9"/>
<polygon points="371.9,881.1 373.4,867.0 365.2,863.1 355.2,862.8 351.3,876.3" fill="#866242" stroke="#3a2212" stroke-width="0.7"/>
<circle cx="364.7" cy="871.7" r="0.7" fill="#3a2212"/>
<circle cx="360.7" cy="872.4" r="0.7" fill="#3a2212"/>
<circle cx="358.6" cy="871.6" r="0.7" fill="#3a2212"/>
<circle cx="362.9" cy="867.0" r="0.7" fill="#3a2212"/>
<circle cx="359.6" cy="866.9" r="0.7" fill="#3a2212"/>
<polygon points="323.4,898.2 307.6,881.8 294.2,875.7 288.2,881.9 285.2,890.8 297.3,899.0 319.3,905.1" fill="#63422a" stroke="#3a2212" stroke-width="0.9"/>
<polygon points="307.0,881.4 294.2,875.7 288.2,881.9 285.2,890.8 296.7,898.6" fill="#9a7454" stroke="#3a2212" stroke-width="0.7"/>
<circle cx="295.9" cy="881.8" r="0.7" fill="#3a2212"/>
<circle cx="290.1" cy="889.3" r="0.7" fill="#3a2212"/>
<circle cx="300.1" cy="884.6" r="0.7" fill="#3a2212"/>
<circle cx="299.4" cy="882.9" r="0.7" fill="#3a2212"/>
<circle cx="295.4" cy="885.8" r="0.7" fill="#3a2212"/>
<polygon points="250.8,900.6 241.9,881.2 231.9,871.8 224.4,875.5 218.9,882.8 227.2,893.7 244.9,905.6" fill="#63422a" stroke="#3a2212" stroke-width="0.9"/>
<polygon points="241.5,880.7 231.9,871.8 224.4,875.5 218.9,882.8 226.8,893.2" fill="#9e744f" stroke="#3a2212" stroke-width="0.7"/>
<circle cx="231.5" cy="882.7" r="0.7" fill="#3a2212"/>
<circle cx="230.1" cy="880.1" r="0.7" fill="#3a2212"/>
<circle cx="234.1" cy="881.7" r="0.7" fill="#3a2212"/>
<circle cx="234.1" cy="878.3" r="0.7" fill="#3a2212"/>
<circle cx="227.5" cy="887.2" r="0.7" fill="#3a2212"/>
<polygon points="345.0,901.1 337.5,877.0 326.5,865.3 316.3,870.1 307.6,878.8 316.0,892.4 336.4,907.3" fill="#5c3b24" stroke="#3a2212" stroke-width="0.9"/>
<polygon points="337.0,876.4 326.5,865.3 316.3,870.1 307.6,878.8 315.5,891.7" fill="#765238" stroke="#3a2212" stroke-width="0.7"/>
<circle cx="326.9" cy="871.6" r="0.7" fill="#3a2212"/>
<circle cx="312.4" cy="877.9" r="0.7" fill="#3a2212"/>
<circle cx="324.3" cy="880.4" r="0.7" fill="#3a2212"/>
<circle cx="318.3" cy="881.7" r="0.7" fill="#3a2212"/>
<circle cx="319.5" cy="878.5" r="0.7" fill="#3a2212"/>
<polygon points="505.1,908.8 517.0,895.7 518.5,884.8 509.3,879.8 497.9,878.2 493.7,888.2 495.8,905.8" fill="#734d31" stroke="#3a2212" stroke-width="0.9"/>
<polygon points="517.2,895.2 518.5,884.8 509.3,879.8 497.9,878.2 493.9,887.7" fill="#866242" stroke="#3a2212" stroke-width="0.7"/>
<circle cx="503.8" cy="887.5" r="0.7" fill="#3a2212"/>
<circle cx="501.5" cy="887.5" r="0.7" fill="#3a2212"/>
<circle cx="504.1" cy="887.9" r="0.7" fill="#3a2212"/>
<circle cx="511.5" cy="884.3" r="0.7" fill="#3a2212"/>
<circle cx="510.0" cy="887.0" r="0.7" fill="#3a2212"/>
<polygon points="242.6,892.3 235.2,873.7 225.0,866.7 215.7,873.2 208.5,883.4 216.4,892.7 235.1,899.9" fill="#6b472d" stroke="#3a2212" stroke-width="0.9"/>
<polygon points="234.8,873.3 225.0,866.7 215.7,873.2 208.5,883.4 216.0,892.3" fill="#765238" stroke="#3a2212" stroke-width="0.7"/>
<circle cx="216.5" cy="879.1" r="0.7" fill="#3a2212"/>
<circle cx="219.5" cy="879.5" r="0.7" fill="#3a2212"/>
<circle cx="225.0" cy="876.0" r="0.7" fill="#3a2212"/>
<circle cx="219.9" cy="883.7" r="0.7" fill="#3a2212"/>
<circle cx="219.9" cy="877.2" r="0.7" fill="#3a2212"/>
<polygon points="637.7,900.1 659.4,895.8 671.2,887.7 669.0,879.0 662.8,871.4 649.8,877.3 633.8,892.7" fill="#63422a" stroke="#3a2212" stroke-width="0.9"/>
<polygon points="660.1,895.4 671.2,887.7 669.0,879.0 662.8,871.4 650.4,876.9" fill="#9a7454" stroke="#3a2212" stroke-width="0.7"/>
<circle cx="663.9" cy="882.3" r="0.7" fill="#3a2212"/>
<circle cx="663.6" cy="883.2" r="0.7" fill="#3a2212"/>
<circle cx="666.8" cy="884.2" r="0.7" fill="#3a2212"/>
<circle cx="665.9" cy="884.4" r="0.7" fill="#3a2212"/>
<circle cx="661.8" cy="881.8" r="0.7" fill="#3a2212"/>
<polygon points="269.9,909.2 289.6,898.2 297.2,886.0 290.1,877.3 279.6,871.0 269.6,881.1 261.9,902.4" fill="#734d31" stroke="#3a2212" stroke-width="0.9"/>
<polygon points="290.1,897.6 297.2,886.0 290.1,877.3 279.6,871.0 270.1,880.6" fill="#9e744f" stroke="#3a2212" stroke-width="0.7"/>
<circle cx="281.5" cy="885.2" r="0.7" fill="#3a2212"/>
<circle cx="276.5" cy="881.7" r="0.7" fill="#3a2212"/>
<circle cx="288.4" cy="887.2" r="0.7" fill="#3a2212"/>
<circle cx="279.0" cy="882.0" r="0.7" fill="#3a2212"/>
<circle cx="289.9" cy="884.6" r="0.7" fill="#3a2212"/>
<polygon points="460.5,904.6 466.6,889.1 465.0,878.8 456.3,876.8 446.8,878.8 446.0,889.1 452.2,904.6" fill="#63422a" stroke="#3a2212" stroke-width="0.9"/>
<polygon points="466.6,888.6 465.0,878.8 456.3,876.8 446.8,878.8 446.0,888.6" fill="#a67a58" stroke="#3a2212" stroke-width="0.7"/>
<circle cx="462.4" cy="884.0" r="0.7" fill="#3a2212"/>
<circle cx="454.2" cy="881.4" r="0.7" fill="#3a2212"/>
<circle cx="454.7" cy="881.7" r="0.7" fill="#3a2212"/>
<circle cx="458.2" cy="880.8" r="0.7" fill="#3a2212"/>
<circle cx="457.3" cy="882.3" r="0.7" fill="#3a2212"/>
<polygon points="286.7,901.3 307.9,895.7 318.3,886.4 314.3,876.9 306.5,868.9 294.5,875.8 281.4,893.4" fill="#63422a" stroke="#3a2212" stroke-width="0.9"/>
<polygon points="308.5,895.3 318.3,886.4 314.3,876.9 306.5,868.9 295.1,875.4" fill="#8b6746" stroke="#3a2212" stroke-width="0.7"/>
<circle cx="310.7" cy="882.6" r="0.7" fill="#3a2212"/>
<circle cx="306.9" cy="879.8" r="0.7" fill="#3a2212"/>
<circle cx="305.1" cy="879.5" r="0.7" fill="#3a2212"/>
<circle cx="307.7" cy="875.0" r="0.7" fill="#3a2212"/>
<circle cx="306.6" cy="885.3" r="0.7" fill="#3a2212"/>
<polygon points="359.2,909.1 371.4,887.8 374.3,872.1 367.0,867.9 357.9,867.3 352.7,882.4 351.7,907.0" fill="#63422a" stroke="#3a2212" stroke-width="0.9"/>
<polygon points="371.6,887.0 374.3,872.1 367.0,867.9 357.9,867.3 353.0,881.6" fill="#916843" stroke="#3a2212" stroke-width="0.7"/>
<circle cx="364.2" cy="876.6" r="0.7" fill="#3a2212"/>
<circle cx="370.8" cy="874.9" r="0.7" fill="#3a2212"/>
<circle cx="366.7" cy="876.8" r="0.7" fill="#3a2212"/>
<circle cx="369.1" cy="874.5" r="0.7" fill="#3a2212"/>
<circle cx="359.4" cy="875.5" r="0.7" fill="#3a2212"/>
<polygon points="528.7,905.0 540.5,895.1 542.5,885.9 534.3,880.2 523.8,877.9 519.3,886.0 520.2,901.4" fill="#63422a" stroke="#3a2212" stroke-width="0.9"/>
<polygon points="540.7,894.7 542.5,885.9 534.3,880.2 523.8,877.9 519.5,885.6" fill="#866242" stroke="#3a2212" stroke-width="0.7"/>
<circle cx="530.2" cy="882.7" r="0.7" fill="#3a2212"/>
<circle cx="526.9" cy="882.8" r="0.7" fill="#3a2212"/>
<circle cx="527.3" cy="884.9" r="0.7" fill="#3a2212"/>
<circle cx="531.9" cy="888.8" r="0.7" fill="#3a2212"/>
<circle cx="533.0" cy="886.2" r="0.7" fill="#3a2212"/>
<polygon points="351.5,905.9 350.0,882.8 342.1,870.5 331.2,873.2 320.8,880.0 325.8,893.6 341.9,910.2" fill="#5c3b24" stroke="#3a2212" stroke-width="0.9"/>
<polygon points="349.7,882.2 342.1,870.5 331.2,873.2 320.8,880.0 325.5,893.0" fill="#916843" stroke="#3a2212" stroke-width="0.7"/>
<circle cx="335.3" cy="883.9" r="0.7" fill="#3a2212"/>
<circle cx="333.0" cy="881.3" r="0.7" fill="#3a2212"/>
<circle cx="335.3" cy="883.1" r="0.7" fill="#3a2212"/>
<circle cx="337.8" cy="875.8" r="0.7" fill="#3a2212"/>
<circle cx="337.3" cy="878.5" r="0.7" fill="#3a2212"/>
<polygon points="191.4,904.6 210.8,908.1 222.9,904.7 223.7,895.7 220.3,886.5 207.8,887.5 190.1,896.4" fill="#63422a" stroke="#3a2212" stroke-width="0.9"/>
<polygon points="211.4,908.0 222.9,904.7 223.7,895.7 220.3,886.5 208.4,887.4" fill="#765238" stroke="#3a2212" stroke-width="0.7"/>
<circle cx="212.4" cy="891.5" r="0.7" fill="#3a2212"/>
<circle cx="216.1" cy="894.9" r="0.7" fill="#3a2212"/>
<circle cx="216.0" cy="892.9" r="0.7" fill="#3a2212"/>
<circle cx="216.8" cy="902.8" r="0.7" fill="#3a2212"/>
<circle cx="216.5" cy="902.3" r="0.7" fill="#3a2212"/>
<polygon points="604.0,912.4 598.8,892.1 589.8,882.2 580.4,886.2 572.5,894.0 579.1,905.4 596.2,917.8" fill="#6b472d" stroke="#3a2212" stroke-width="0.9"/>
<polygon points="598.4,891.5 589.8,882.2 580.4,886.2 572.5,894.0 578.7,904.9" fill="#8b6746" stroke="#3a2212" stroke-width="0.7"/>
<circle cx="586.5" cy="889.9" r="0.7" fill="#3a2212"/>
<circle cx="580.9" cy="899.5" r="0.7" fill="#3a2212"/>
<circle cx="582.7" cy="895.4" r="0.7" fill="#3a2212"/>
<circle cx="586.9" cy="893.4" r="0.7" fill="#3a2212"/>
<circle cx="584.2" cy="895.8" r="0.7" fill="#3a2212"/>
<polygon points="180.5,905.4 200.2,908.4 212.0,903.8 211.8,893.6 207.5,883.3 195.1,885.1 178.4,896.1" fill="#5c3b24" stroke="#3a2212" stroke-width="0.9"/>
<polygon points="200.9,908.2 212.0,903.8 211.8,893.6 207.5,883.3 195.7,884.9" fill="#9a7454" stroke="#3a2212" stroke-width="0.7"/>
<circle cx="203.9" cy="888.5" r="0.7" fill="#3a2212"/>
<circle cx="208.7" cy="901.3" r="0.7" fill="#3a2212"/>
<circle cx="206.5" cy="897.5" r="0.7" fill="#3a2212"/>
<circle cx="207.8" cy="897.7" r="0.7" fill="#3a2212"/>
<circle cx="206.4" cy="899.0" r="0.7" fill="#3a2212"/>
<polygon points="187.4,901.4 209.4,901.6 222.5,896.1 222.0,887.1 217.4,878.5 203.6,881.6 185.1,893.4" fill="#734d31" stroke="#3a2212" stroke-width="0.9"/>
<polygon points="210.1,901.4 222.5,896.1 222.0,887.1 217.4,878.5 204.3,881.4" fill="#916843" stroke="#3a2212" stroke-width="0.7"/>
<circle cx="209.4" cy="888.5" r="0.7" fill="#3a2212"/>
<circle cx="209.2" cy="885.1" r="0.7" fill="#3a2212"/>
<circle cx="216.9" cy="885.3" r="0.7" fill="#3a2212"/>
<circle cx="212.7" cy="883.7" r="0.7" fill="#3a2212"/>
<circle cx="212.0" cy="884.3" r="0.7" fill="#3a2212"/>
<polygon points="458.6,903.2 464.5,886.6 461.7,876.1 451.5,874.9 440.7,877.8 440.6,888.5 449.0,904.0" fill="#6b472d" stroke="#3a2212" stroke-width="0.9"/>
<polygon points="464.4,886.1 461.7,876.1 451.5,874.9 440.7,877.8 440.5,888.0" fill="#9a7454" stroke="#3a2212" stroke-width="0.7"/>
<circle cx="449.1" cy="882.2" r="0.7" fill="#3a2212"/>
<circle cx="445.3" cy="884.2" r="0.7" fill="#3a2212"/>
<circle cx="453.6" cy="882.1" r="0.7" fill="#3a2212"/>
<circle cx="447.2" cy="883.0" r="0.7" fill="#3a2212"/>
<circle cx="457.6" cy="883.0" r="0.7" fill="#3a2212"/>
<polygon points="261.6,916.5 275.9,898.5 280.6,884.3 274.1,879.2 265.2,877.4 258.4,890.6 254.5,913.3" fill="#63422a" stroke="#3a2212" stroke-width="0.9"/>
<polygon points="276.2,897.8 280.6,884.3 274.1,879.2 265.2,877.4 258.7,890.0" fill="#7a7f88" stroke="#3a2212" stroke-width="0.7"/>
<circle cx="268.0" cy="888.2" r="0.7" fill="#3a2212"/>
<circle cx="272.6" cy="889.1" r="0.7" fill="#3a2212"/>
<circle cx="270.9" cy="884.5" r="0.7" fill="#3a2212"/>
<circle cx="276.4" cy="885.8" r="0.7" fill="#3a2212"/>
<circle cx="267.5" cy="887.4" r="0.7" fill="#3a2212"/>
<polygon points="513.6,913.8 523.1,900.9 524.1,890.8 516.6,886.8 507.3,886.4 504.0,895.8 506.0,911.8" fill="#63422a" stroke="#3a2212" stroke-width="0.9"/>
<polygon points="523.2,900.4 524.1,890.8 516.6,886.8 507.3,886.4 504.2,895.4" fill="#946c4c" stroke="#3a2212" stroke-width="0.7"/>
<circle cx="516.6" cy="896.5" r="0.7" fill="#3a2212"/>
<circle cx="520.1" cy="892.0" r="0.7" fill="#3a2212"/>
<circle cx="520.2" cy="892.5" r="0.7" fill="#3a2212"/>
<circle cx="513.3" cy="891.8" r="0.7" fill="#3a2212"/>
<circle cx="516.7" cy="893.9" r="0.7" fill="#3a2212"/>
<polygon points="470.0,906.0 475.7,891.0 474.1,881.0 465.9,879.1 457.0,881.1 456.3,891.1 462.2,906.0" fill="#734d31" stroke="#3a2212" stroke-width="0.9"/>
<polygon points="475.7,890.5 474.1,881.0 465.9,879.1 457.0,881.1 456.3,890.6" fill="#a67a58" stroke="#3a2212" stroke-width="0.7"/>
<circle cx="469.9" cy="884.9" r="0.7" fill="#3a2212"/>
<circle cx="465.5" cy="884.0" r="0.7" fill="#3a2212"/>
<circle cx="463.5" cy="883.7" r="0.7" fill="#3a2212"/>
<circle cx="466.1" cy="886.7" r="0.7" fill="#3a2212"/>
<circle cx="461.1" cy="884.4" r="0.7" fill="#3a2212"/>
<polygon points="570.5,903.2 552.8,891.4 539.4,890.5 535.1,900.5 534.5,912.3 547.2,916.2 568.3,913.1" fill="#734d31" stroke="#3a2212" stroke-width="0.9"/>
<polygon points="552.1,891.2 539.4,890.5 535.1,900.5 534.5,912.3 546.6,916.1" fill="#8b6746" stroke="#3a2212" stroke-width="0.7"/>
<circle cx="541.0" cy="909.4" r="0.7" fill="#3a2212"/>
<circle cx="538.2" cy="908.9" r="0.7" fill="#3a2212"/>
<circle cx="541.1" cy="908.0" r="0.7" fill="#3a2212"/>
<circle cx="544.5" cy="905.5" r="0.7" fill="#3a2212"/>
<circle cx="540.1" cy="904.6" r="0.7" fill="#3a2212"/>
<polygon points="569.5,898.5 554.3,885.0 541.8,882.5 536.3,891.6 534.2,903.0 545.7,908.3 566.1,907.8" fill="#5c3b24" stroke="#3a2212" stroke-width="0.9"/>
<polygon points="553.7,884.7 541.8,882.5 536.3,891.6 534.2,903.0 545.1,908.1" fill="#7f5a40" stroke="#3a2212" stroke-width="0.7"/>
<circle cx="544.9" cy="897.4" r="0.7" fill="#3a2212"/>
<circle cx="543.3" cy="899.5" r="0.7" fill="#3a2212"/>
<circle cx="541.3" cy="889.3" r="0.7" fill="#3a2212"/>
<circle cx="542.5" cy="896.6" r="0.7" fill="#3a2212"/>
<circle cx="546.5" cy="894.3" r="0.7" fill="#3a2212"/>
<polygon points="600.5,908.4 591.2,888.7 580.0,880.5 571.2,886.5 564.6,896.1 573.6,906.4 593.4,915.5" fill="#5c3b24" stroke="#3a2212" stroke-width="0.9"/>
<polygon points="590.7,888.2 580.0,880.5 571.2,886.5 564.6,896.1 573.1,905.9" fill="#916843" stroke="#3a2212" stroke-width="0.7"/>
<circle cx="576.6" cy="896.5" r="0.7" fill="#3a2212"/>
<circle cx="582.1" cy="888.5" r="0.7" fill="#3a2212"/>
<circle cx="573.6" cy="899.2" r="0.7" fill="#3a2212"/>
<circle cx="583.8" cy="889.4" r="0.7" fill="#3a2212"/>
<circle cx="582.8" cy="891.0" r="0.7" fill="#3a2212"/>
<polygon points="166.3,909.2 164.8,889.7 158.3,879.0 149.5,880.6 141.5,886.3 145.6,898.0 158.7,912.5" fill="#5c3b24" stroke="#3a2212" stroke-width="0.9"/>
<polygon points="164.5,889.1 158.3,879.0 149.5,880.6 141.5,886.3 145.4,897.4" fill="#8b6746" stroke="#3a2212" stroke-width="0.7"/>
<circle cx="153.6" cy="890.6" r="0.7" fill="#3a2212"/>
<circle cx="155.2" cy="889.4" r="0.7" fill="#3a2212"/>
<circle cx="148.0" cy="889.9" r="0.7" fill="#3a2212"/>
<circle cx="157.2" cy="888.2" r="0.7" fill="#3a2212"/>
<circle cx="150.9" cy="889.4" r="0.7" fill="#3a2212"/>
<polygon points="261.4,919.5 275.7,900.3 278.9,885.2 270.2,880.1 259.2,878.4 253.3,892.5 252.5,916.4" fill="#5c3b24" stroke="#3a2212" stroke-width="0.9"/>
<polygon points="275.9,899.5 278.9,885.2 270.2,880.1 259.2,878.4 253.5,891.7" fill="#916843" stroke="#3a2212" stroke-width="0.7"/>
<circle cx="260.4" cy="889.7" r="0.7" fill="#3a2212"/>
<circle cx="273.1" cy="890.3" r="0.7" fill="#3a2212"/>
<circle cx="274.4" cy="887.5" r="0.7" fill="#3a2212"/>
<circle cx="259.8" cy="889.6" r="0.7" fill="#3a2212"/>
<circle cx="264.2" cy="888.2" r="0.7" fill="#3a2212"/>
<polygon points="603.8,917.6 621.6,909.5 629.1,899.7 624.0,891.6 615.4,885.6 606.0,893.5 597.5,911.2" fill="#5c3b24" stroke="#3a2212" stroke-width="0.9"/>
<polygon points="622.0,909.1 629.1,899.7 624.0,891.6 615.4,885.6 606.4,893.1" fill="#7f5a40" stroke="#3a2212" stroke-width="0.7"/>
<circle cx="619.1" cy="898.4" r="0.7" fill="#3a2212"/>
<circle cx="622.2" cy="898.1" r="0.7" fill="#3a2212"/>
<circle cx="619.1" cy="898.9" r="0.7" fill="#3a2212"/>
<circle cx="620.6" cy="903.4" r="0.7" fill="#3a2212"/>
<circle cx="614.5" cy="896.3" r="0.7" fill="#3a2212"/>
<polygon points="476.3,910.3 483.9,894.5 482.4,883.7 472.6,881.3 461.8,882.9 460.4,893.6 466.9,909.9" fill="#734d31" stroke="#3a2212" stroke-width="0.9"/>
<polygon points="483.9,893.9 482.4,883.7 472.6,881.3 461.8,882.9 460.5,893.1" fill="#866242" stroke="#3a2212" stroke-width="0.7"/>
<circle cx="469.1" cy="888.9" r="0.7" fill="#3a2212"/>
<circle cx="472.4" cy="890.3" r="0.7" fill="#3a2212"/>
<circle cx="473.4" cy="888.6" r="0.7" fill="#3a2212"/>
<circle cx="470.2" cy="887.4" r="0.7" fill="#3a2212"/>
<circle cx="478.8" cy="890.3" r="0.7" fill="#3a2212"/>
<polygon points="552.7,902.1 531.3,892.0 516.0,890.8 512.5,898.7 512.8,908.2 527.6,911.8 551.2,910.0" fill="#6b472d" stroke="#3a2212" stroke-width="0.9"/>
<polygon points="530.5,891.9 516.0,890.8 512.5,898.7 512.8,908.2 526.9,911.6" fill="#8b6746" stroke="#3a2212" stroke-width="0.7"/>
<circle cx="522.6" cy="905.5" r="0.7" fill="#3a2212"/>
<circle cx="524.5" cy="904.8" r="0.7" fill="#3a2212"/>
<circle cx="524.1" cy="896.5" r="0.7" fill="#3a2212"/>
<circle cx="522.8" cy="900.8" r="0.7" fill="#3a2212"/>
<circle cx="521.1" cy="894.5" r="0.7" fill="#3a2212"/>
<polygon points="350.1,908.8 343.3,885.9 333.8,873.7 325.1,876.7 317.9,883.5 325.3,897.0 342.9,913.3" fill="#734d31" stroke="#3a2212" stroke-width="0.9"/>
<polygon points="342.9,885.2 333.8,873.7 325.1,876.7 317.9,883.5 324.9,896.4" fill="#7f5a40" stroke="#3a2212" stroke-width="0.7"/>
<circle cx="333.9" cy="884.6" r="0.7" fill="#3a2212"/>
<circle cx="327.8" cy="884.5" r="0.7" fill="#3a2212"/>
<circle cx="324.9" cy="885.5" r="0.7" fill="#3a2212"/>
<circle cx="332.7" cy="881.2" r="0.7" fill="#3a2212"/>
<circle cx="328.0" cy="880.4" r="0.7" fill="#3a2212"/>
<polygon points="479.1,920.0 486.3,904.7 484.2,894.6 473.6,892.8 462.2,895.0 461.4,905.2 469.2,920.1" fill="#63422a" stroke="#3a2212" stroke-width="0.9"/>
<polygon points="486.3,904.2 484.2,894.6 473.6,892.8 462.2,895.0 461.4,904.6" fill="#7f5a40" stroke="#3a2212" stroke-width="0.7"/>
<circle cx="471.4" cy="901.3" r="0.7" fill="#3a2212"/>
<circle cx="474.7" cy="897.6" r="0.7" fill="#3a2212"/>
<circle cx="469.5" cy="901.3" r="0.7" fill="#3a2212"/>
<circle cx="475.8" cy="901.3" r="0.7" fill="#3a2212"/>
<circle cx="469.7" cy="901.7" r="0.7" fill="#3a2212"/>
<polygon points="347.3,912.4 331.3,897.1 317.7,893.5 311.6,902.4 308.8,913.9 321.1,920.4 343.2,921.7" fill="#6b472d" stroke="#3a2212" stroke-width="0.9"/>
<polygon points="330.6,896.9 317.7,893.5 311.6,902.4 308.8,913.9 320.5,920.1" fill="#765238" stroke="#3a2212" stroke-width="0.7"/>
<circle cx="319.9" cy="910.2" r="0.7" fill="#3a2212"/>
<circle cx="320.6" cy="904.7" r="0.7" fill="#3a2212"/>
<circle cx="319.0" cy="901.7" r="0.7" fill="#3a2212"/>
<circle cx="318.8" cy="912.1" r="0.7" fill="#3a2212"/>
<circle cx="319.4" cy="911.6" r="0.7" fill="#3a2212"/>
<polygon points="620.9,912.5 644.5,911.8 657.5,904.4 655.3,893.3 649.0,882.7 634.8,887.1 617.0,902.6" fill="#734d31" stroke="#3a2212" stroke-width="0.9"/>
<polygon points="645.1,911.5 657.5,904.4 655.3,893.3 649.0,882.7 635.5,886.9" fill="#9a7454" stroke="#3a2212" stroke-width="0.7"/>
<circle cx="647.7" cy="903.5" r="0.7" fill="#3a2212"/>
<circle cx="651.5" cy="903.2" r="0.7" fill="#3a2212"/>
<circle cx="646.3" cy="891.4" r="0.7" fill="#3a2212"/>
<circle cx="646.8" cy="903.0" r="0.7" fill="#3a2212"/>
<circle cx="644.1" cy="896.8" r="0.7" fill="#3a2212"/>
<polygon points="359.8,915.0 376.0,899.8 381.4,886.6 374.4,880.4 364.7,877.1 357.0,889.0 352.2,910.7" fill="#6b472d" stroke="#3a2212" stroke-width="0.9"/>
<polygon points="376.3,899.2 381.4,886.6 374.4,880.4 364.7,877.1 357.3,888.4" fill="#866242" stroke="#3a2212" stroke-width="0.7"/>
<circle cx="371.8" cy="892.9" r="0.7" fill="#3a2212"/>
<circle cx="375.8" cy="886.0" r="0.7" fill="#3a2212"/>
<circle cx="367.9" cy="885.9" r="0.7" fill="#3a2212"/>
<circle cx="375.0" cy="888.6" r="0.7" fill="#3a2212"/>
<circle cx="370.2" cy="890.5" r="0.7" fill="#3a2212"/>
<polygon points="611.9,911.2 630.4,905.1 639.6,896.7 636.5,888.9 629.8,882.9 619.2,889.5 607.4,905.0" fill="#734d31" stroke="#3a2212" stroke-width="0.9"/>
<polygon points="630.9,904.7 639.6,896.7 636.5,888.9 629.8,882.9 619.7,889.1" fill="#8b6746" stroke="#3a2212" stroke-width="0.7"/>
<circle cx="633.4" cy="896.5" r="0.7" fill="#3a2212"/>
<circle cx="632.2" cy="890.4" r="0.7" fill="#3a2212"/>
<circle cx="632.4" cy="894.8" r="0.7" fill="#3a2212"/>
<circle cx="630.9" cy="888.1" r="0.7" fill="#3a2212"/>
<circle cx="632.8" cy="896.2" r="0.7" fill="#3a2212"/>
<polygon points="487.4,921.2 494.8,905.3 493.4,894.4 484.0,892.1 473.5,893.7 472.2,904.4 478.4,920.8" fill="#734d31" stroke="#3a2212" stroke-width="0.9"/>
<polygon points="494.8,904.7 493.4,894.4 484.0,892.1 473.5,893.7 472.2,903.9" fill="#946c4c" stroke="#3a2212" stroke-width="0.7"/>
<circle cx="488.8" cy="895.9" r="0.7" fill="#3a2212"/>
<circle cx="480.7" cy="895.5" r="0.7" fill="#3a2212"/>
<circle cx="483.8" cy="898.9" r="0.7" fill="#3a2212"/>
<circle cx="479.6" cy="896.5" r="0.7" fill="#3a2212"/>
<circle cx="477.4" cy="896.8" r="0.7" fill="#3a2212"/>
<polygon points="465.0,911.5 471.8,897.1 470.3,887.3 461.4,885.1 451.6,886.8 450.5,896.5 456.5,911.3" fill="#734d31" stroke="#3a2212" stroke-width="0.9"/>
<polygon points="471.8,896.6 470.3,887.3 461.4,885.1 451.6,886.8 450.5,896.0" fill="#7f5a40" stroke="#3a2212" stroke-width="0.7"/>
<circle cx="460.1" cy="890.5" r="0.7" fill="#3a2212"/>
<circle cx="461.7" cy="890.8" r="0.7" fill="#3a2212"/>
<circle cx="460.6" cy="888.8" r="0.7" fill="#3a2212"/>
<circle cx="457.3" cy="890.4" r="0.7" fill="#3a2212"/>
<circle cx="464.5" cy="891.7" r="0.7" fill="#3a2212"/>
<polygon points="259.9,909.5 253.6,889.5 244.0,880.4 234.6,885.2 226.9,893.7 234.3,904.7 252.2,915.6" fill="#734d31" stroke="#3a2212" stroke-width="0.9"/>
<polygon points="253.2,889.0 244.0,880.4 234.6,885.2 226.9,893.7 233.9,904.1" fill="#946c4c" stroke="#3a2212" stroke-width="0.7"/>
<circle cx="240.7" cy="894.5" r="0.7" fill="#3a2212"/>
<circle cx="239.3" cy="887.4" r="0.7" fill="#3a2212"/>
<circle cx="243.5" cy="887.1" r="0.7" fill="#3a2212"/>
<circle cx="235.7" cy="892.6" r="0.7" fill="#3a2212"/>
<circle cx="242.3" cy="887.2" r="0.7" fill="#3a2212"/>
<polygon points="265.2,926.8 266.7,906.3 262.0,893.9 252.9,894.1 244.1,898.3 246.3,911.2 257.0,928.8" fill="#63422a" stroke="#3a2212" stroke-width="0.9"/>
<polygon points="266.5,905.6 262.0,893.9 252.9,894.1 244.1,898.3 246.2,910.5" fill="#a67a58" stroke="#3a2212" stroke-width="0.7"/>
<circle cx="258.1" cy="900.6" r="0.7" fill="#3a2212"/>
<circle cx="257.0" cy="902.3" r="0.7" fill="#3a2212"/>
<circle cx="259.5" cy="902.7" r="0.7" fill="#3a2212"/>
<circle cx="252.0" cy="900.0" r="0.7" fill="#3a2212"/>
<circle cx="254.0" cy="901.5" r="0.7" fill="#3a2212"/>
<polygon points="504.2,917.6 512.7,904.8 512.4,895.4 504.0,892.1 494.0,892.5 491.8,901.6 495.9,916.3" fill="#5c3b24" stroke="#3a2212" stroke-width="0.9"/>
<polygon points="512.7,904.4 512.4,895.4 504.0,892.1 494.0,892.5 491.8,901.1" fill="#916843" stroke="#3a2212" stroke-width="0.7"/>
<circle cx="497.7" cy="894.5" r="0.7" fill="#3a2212"/>
<circle cx="501.8" cy="899.8" r="0.7" fill="#3a2212"/>
<circle cx="508.7" cy="901.8" r="0.7" fill="#3a2212"/>
<circle cx="508.3" cy="899.7" r="0.7" fill="#3a2212"/>
<circle cx="508.4" cy="898.0" r="0.7" fill="#3a2212"/>
<polygon points="501.8,913.8 509.3,902.2 508.8,893.8 500.7,890.8 491.3,891.6 489.4,899.7 493.9,912.8" fill="#6b472d" stroke="#3a2212" stroke-width="0.9"/>
<polygon points="509.4,901.8 508.8,893.8 500.7,890.8 491.3,891.6 489.5,899.3" fill="#916843" stroke="#3a2212" stroke-width="0.7"/>
<circle cx="500.7" cy="894.3" r="0.7" fill="#3a2212"/>
<circle cx="501.5" cy="894.0" r="0.7" fill="#3a2212"/>
<circle cx="501.2" cy="898.5" r="0.7" fill="#3a2212"/>
<circle cx="497.3" cy="895.5" r="0.7" fill="#3a2212"/>
<circle cx="502.5" cy="895.2" r="0.7" fill="#3a2212"/>
<polygon points="521.2,921.4 532.9,911.3 535.1,902.1 527.4,896.5 517.2,894.2 512.7,902.4 513.1,917.8" fill="#63422a" stroke="#3a2212" stroke-width="0.9"/>
<polygon points="533.1,910.9 535.1,902.1 527.4,896.5 517.2,894.2 512.9,902.0" fill="#8b6746" stroke="#3a2212" stroke-width="0.7"/>
<circle cx="522.9" cy="898.8" r="0.7" fill="#3a2212"/>
<circle cx="531.1" cy="902.8" r="0.7" fill="#3a2212"/>
<circle cx="522.5" cy="902.8" r="0.7" fill="#3a2212"/>
<circle cx="521.2" cy="902.3" r="0.7" fill="#3a2212"/>
<circle cx="525.2" cy="904.1" r="0.7" fill="#3a2212"/>
<polygon points="575.7,907.3 552.5,897.7 536.1,896.9 532.9,904.9 533.5,914.4 549.5,917.6 574.5,915.2" fill="#5c3b24" stroke="#3a2212" stroke-width="0.9"/>
<polygon points="551.7,897.6 536.1,896.9 532.9,904.9 533.5,914.4 548.7,917.5" fill="#9e744f" stroke="#3a2212" stroke-width="0.7"/>
<circle cx="544.5" cy="908.7" r="0.7" fill="#3a2212"/>
<circle cx="545.8" cy="904.5" r="0.7" fill="#3a2212"/>
<circle cx="541.9" cy="903.5" r="0.7" fill="#3a2212"/>
<circle cx="546.9" cy="902.5" r="0.7" fill="#3a2212"/>
<circle cx="546.8" cy="901.4" r="0.7" fill="#3a2212"/>
<polygon points="359.5,919.7 343.9,901.8 330.2,895.1 323.6,901.7 319.8,911.2 332.1,920.1 354.8,927.0" fill="#5c3b24" stroke="#3a2212" stroke-width="0.9"/>
<polygon points="343.3,901.4 330.2,895.1 323.6,901.7 319.8,911.2 331.5,919.7" fill="#765238" stroke="#3a2212" stroke-width="0.7"/>
<circle cx="335.9" cy="902.5" r="0.7" fill="#3a2212"/>
<circle cx="328.9" cy="909.3" r="0.7" fill="#3a2212"/>
<circle cx="329.9" cy="910.8" r="0.7" fill="#3a2212"/>
<circle cx="327.9" cy="906.8" r="0.7" fill="#3a2212"/>
<circle cx="333.6" cy="909.6" r="0.7" fill="#3a2212"/>
<polygon points="587.4,907.8 565.4,896.5 549.5,895.0 545.6,903.7 545.5,914.1 560.9,918.2 585.6,916.5" fill="#63422a" stroke="#3a2212" stroke-width="0.9"/>
<polygon points="564.6,896.3 549.5,895.0 545.6,903.7 545.5,914.1 560.1,918.0" fill="#9a5238" stroke="#3a2212" stroke-width="0.7"/>
<circle cx="551.6" cy="908.7" r="0.7" fill="#3a2212"/>
<circle cx="556.7" cy="906.2" r="0.7" fill="#3a2212"/>
<circle cx="553.9" cy="898.8" r="0.7" fill="#3a2212"/>
<circle cx="553.4" cy="910.2" r="0.7" fill="#3a2212"/>
<circle cx="553.6" cy="911.3" r="0.7" fill="#3a2212"/>
<polygon points="278.3,913.9 301.2,914.5 314.5,908.4 313.4,898.0 308.2,887.8 294.0,891.1 275.4,904.5" fill="#734d31" stroke="#3a2212" stroke-width="0.9"/>
<polygon points="301.9,914.3 314.5,908.4 313.4,898.0 308.2,887.8 294.7,890.9" fill="#7f5a40" stroke="#3a2212" stroke-width="0.7"/>
<circle cx="301.2" cy="899.4" r="0.7" fill="#3a2212"/>
<circle cx="305.9" cy="904.7" r="0.7" fill="#3a2212"/>
<circle cx="304.6" cy="893.2" r="0.7" fill="#3a2212"/>
<circle cx="304.9" cy="901.5" r="0.7" fill="#3a2212"/>
<circle cx="304.3" cy="898.0" r="0.7" fill="#3a2212"/>
<polygon points="260.5,927.2 273.3,908.7 274.6,894.5 264.1,889.9 251.7,888.9 247.3,902.3 250.1,924.7" fill="#63422a" stroke="#3a2212" stroke-width="0.9"/>
<polygon points="273.5,908.0 274.6,894.5 264.1,889.9 251.7,888.9 247.5,901.6" fill="#7f5a40" stroke="#3a2212" stroke-width="0.7"/>
<circle cx="266.0" cy="899.2" r="0.7" fill="#3a2212"/>
<circle cx="269.0" cy="900.1" r="0.7" fill="#3a2212"/>
<circle cx="267.1" cy="900.1" r="0.7" fill="#3a2212"/>
<circle cx="256.5" cy="892.6" r="0.7" fill="#3a2212"/>
<circle cx="257.6" cy="898.3" r="0.7" fill="#3a2212"/>
<polygon points="491.0,927.8 500.3,913.1 500.3,902.3 491.2,898.7 480.5,899.0 477.8,909.4 482.0,926.3" fill="#5c3b24" stroke="#3a2212" stroke-width="0.9"/>
<polygon points="500.4,912.6 500.3,902.3 491.2,898.7 480.5,899.0 477.9,908.9" fill="#a67a58" stroke="#3a2212" stroke-width="0.7"/>
<circle cx="493.8" cy="908.4" r="0.7" fill="#3a2212"/>
<circle cx="483.5" cy="903.4" r="0.7" fill="#3a2212"/>
<circle cx="492.6" cy="903.4" r="0.7" fill="#3a2212"/>
<circle cx="489.5" cy="907.4" r="0.7" fill="#3a2212"/>
<circle cx="495.4" cy="907.5" r="0.7" fill="#3a2212"/>
<polygon points="586.9,918.5 608.5,928.4 623.6,928.1 626.7,918.0 626.0,906.4 611.2,903.8 588.0,908.7" fill="#5c3b24" stroke="#3a2212" stroke-width="0.9"/>
<polygon points="609.2,928.5 623.6,928.1 626.7,918.0 626.0,906.4 612.0,903.8" fill="#7f5a40" stroke="#3a2212" stroke-width="0.7"/>
<circle cx="621.3" cy="910.4" r="0.7" fill="#3a2212"/>
<circle cx="622.3" cy="914.1" r="0.7" fill="#3a2212"/>
<circle cx="621.4" cy="923.2" r="0.7" fill="#3a2212"/>
<circle cx="621.6" cy="915.2" r="0.7" fill="#3a2212"/>
<circle cx="618.2" cy="916.7" r="0.7" fill="#3a2212"/>
<polygon points="359.0,926.2 354.1,901.6 345.9,887.4 337.8,888.9 330.7,894.3 336.7,909.5 352.1,929.4" fill="#63422a" stroke="#3a2212" stroke-width="0.9"/>
<polygon points="353.7,900.9 345.9,887.4 337.8,888.9 330.7,894.3 336.4,908.8" fill="#946c4c" stroke="#3a2212" stroke-width="0.7"/>
<circle cx="346.6" cy="895.1" r="0.7" fill="#3a2212"/>
<circle cx="339.9" cy="896.3" r="0.7" fill="#3a2212"/>
<circle cx="339.9" cy="900.8" r="0.7" fill="#3a2212"/>
<circle cx="338.9" cy="893.1" r="0.7" fill="#3a2212"/>
<circle cx="337.2" cy="899.9" r="0.7" fill="#3a2212"/>
<polygon points="514.7,927.1 525.4,917.2 525.9,908.7 516.6,903.8 505.2,902.4 501.8,910.1 505.3,924.2" fill="#6b472d" stroke="#3a2212" stroke-width="0.9"/>
<polygon points="525.5,916.8 525.9,908.7 516.6,903.8 505.2,902.4 502.0,909.7" fill="#866242" stroke="#3a2212" stroke-width="0.7"/>
<circle cx="511.2" cy="909.3" r="0.7" fill="#3a2212"/>
<circle cx="509.9" cy="910.0" r="0.7" fill="#3a2212"/>
<circle cx="521.2" cy="913.7" r="0.7" fill="#3a2212"/>
<circle cx="521.2" cy="912.0" r="0.7" fill="#3a2212"/>
<circle cx="511.2" cy="906.3" r="0.7" fill="#3a2212"/>
<polygon points="500.9,934.1 512.2,922.0 514.1,911.8 506.2,906.9 496.1,905.3 491.9,914.6 492.8,931.1" fill="#6b472d" stroke="#3a2212" stroke-width="0.9"/>
<polygon points="512.4,921.5 514.1,911.8 506.2,906.9 496.1,905.3 492.0,914.1" fill="#946c4c" stroke="#3a2212" stroke-width="0.7"/>
<circle cx="500.1" cy="914.5" r="0.7" fill="#3a2212"/>
<circle cx="505.0" cy="912.2" r="0.7" fill="#3a2212"/>
<circle cx="499.1" cy="914.1" r="0.7" fill="#3a2212"/>
<circle cx="500.3" cy="911.1" r="0.7" fill="#3a2212"/>
<circle cx="503.7" cy="915.1" r="0.7" fill="#3a2212"/>
</g>
<path d="M136 671 C145 668 151 676 154 690 L158 712 L151 712 C147 698 138 684 136 671Z" fill="#6e4a30" stroke="#3a2212" stroke-width="1"/>
<path d="M164 712 C163 700 166 692 172 691 L168 712Z" fill="#6e4a30" stroke="#3a2212" stroke-width="1"/>
<path d="M166 714 C172 705 180 699 187 704 C180 710 175 716 170 722Z" fill="#76523a" stroke="#3a2212" stroke-width="1"/>
</svg>
<!--/ART-->
<!-- ===== RIGHT DOCK ===== -->
<div class="a" style="left:1506px;top:73px;width:411px;height:959px;background:#3c3c3c"></div>
<div class="a" style="left:1507px;top:89px;width:46px;height:943px;background:#535353"></div>
<div class="a" style="left:1555px;top:89px;width:362px;height:468px;background:#535353"></div>
<div class="a" style="left:1555px;top:559px;width:362px;height:473px;background:#535353"></div>
<!--RIGHT-->
<svg style="left:1536px;top:77px" width="12" height="8"><path d="M5 1l-3 3 3 3M10 1l-3 3 3 3" stroke="#d8d8d8" fill="none" stroke-width="1.2"/></svg>
<svg style="left:1901px;top:77px" width="12" height="8"><path d="M2 1l3 3-3 3M7 1l3 3-3 3" stroke="#d8d8d8" fill="none" stroke-width="1.2"/></svg>
<div class="a" style="left:1506px;top:139px;width:48px;height:2px;background:#3c3c3c;"></div>
<div class="a" style="left:1506px;top:295px;width:48px;height:2px;background:#3c3c3c;"></div>
<div class="a" style="left:1506px;top:381px;width:48px;height:2px;background:#3c3c3c;"></div>
<div class="a" style="left:1506px;top:467px;width:48px;height:2px;background:#3c3c3c;"></div>
<div class="a" style="left:1515px;top:94px;width:28px;height:5px;background:repeating-linear-gradient(90deg,#404040 0 1.5px,transparent 1.5px 2.6px)"></div>
<div class="a" style="left:1515px;top:145px;width:28px;height:5px;background:repeating-linear-gradient(90deg,#404040 0 1.5px,transparent 1.5px 2.6px)"></div>
<div class="a" style="left:1515px;top:301px;width:28px;height:5px;background:repeating-linear-gradient(90deg,#404040 0 1.5px,transparent 1.5px 2.6px)"></div>
<div class="a" style="left:1515px;top:387px;width:28px;height:5px;background:repeating-linear-gradient(90deg,#404040 0 1.5px,transparent 1.5px 2.6px)"></div>
<svg style="left:1506px;top:89px" width="48" height="380" fill="none" stroke="#d4d4d4" stroke-width="1.3">
<rect x="14.5" y="19.5" width="5" height="5"/><rect x="14.5" y="26.5" width="5" height="5"/><rect x="14" y="33" width="6" height="6" fill="#d4d4d4"/>
<path d="M24 25l3-4 3 3M27 21q6 5 0 14" stroke-width="1.8"/>
<path d="M13 64h22v22h-22zM13 64v-2h8l2 2" stroke="#b8b8b8" stroke-width="1.6"/><rect x="17" y="74" width="14" height="7" fill="#b8b8b8" stroke="none"/><rect x="19" y="71" width="3" height="3" fill="#b8b8b8" stroke="none"/><rect x="26" y="71" width="3" height="3" fill="#b8b8b8" stroke="none"/>
<circle cx="22" cy="115" r="8.5" stroke-width="2"/><path d="M16 121l12-12v12z" fill="#d4d4d4" stroke="none"/>
<rect x="15" y="142" width="14" height="15" stroke="#b8b8b8" stroke-width="1.6"/><rect x="12" y="145" width="14" height="15" stroke="#b8b8b8" stroke-width="1.6"/><path d="M22 143v7l2.5-2 2.5 2v-7" fill="#b8b8b8" stroke="none"/>
<rect x="24" y="178" width="12" height="11" fill="#8a8a8a" stroke="none"/>
<text x="12" y="195" font-family="Liberation Serif" font-style="italic" font-size="19" fill="#e0e0e0" stroke="none">fx</text>
<text x="10" y="245" font-family="Liberation Sans" font-size="21" fill="#e0e0e0" stroke="none">A</text><path d="M29 228v18" stroke-width="1.5"/>
<path d="M22 263h8v1.8h-1.5v16h-2v-16h-2v16h-2v-9q-6 0-6-4.5t6-4.3z" fill="#e0e0e0" stroke="none"/>
<rect x="10" y="326" width="7" height="7" stroke-width="1.3"/><rect x="14" y="330" width="7" height="7" fill="#d4d4d4" stroke="none"/>
<path d="M26 313h8v1.8h-1.5v16h-2v-16h-2v16h-2v-9q-6 0-6-4.5t6-4.3z" fill="#e0e0e0" stroke="none"/>
<rect x="10" y="361" width="7" height="7" stroke-width="1.3"/><rect x="14" y="365" width="7" height="7" fill="#d4d4d4" stroke="none"/>
<text x="19" y="364" font-family="Liberation Sans" font-size="19" fill="#e0e0e0" stroke="none">A</text>
</svg>
<div class="a" style="left:1555px;top:89px;width:362px;height:35px;background:#424242;"></div>
<div class="a" style="left:1556px;top:89px;width:54px;height:35px;background:#4a4a4a;"></div>
<div class="a" style="left:1610px;top:89px;width:75px;height:35px;background:#535353;"></div>
<div class="a" style="left:1685px;top:89px;width:78px;height:35px;background:#4a4a4a;"></div>
<div class="a" style="left:1763px;top:89px;width:71px;height:35px;background:#4a4a4a;"></div>
<div class="a" style="left:1609px;top:89px;width:1px;height:35px;background:#3c3c3c;"></div>
<div class="a" style="left:1685px;top:89px;width:1px;height:35px;background:#3c3c3c;"></div>
<div class="a" style="left:1763px;top:89px;width:1px;height:35px;background:#3c3c3c;"></div>
<div class="a" style="left:1834px;top:89px;width:1px;height:35px;background:#3c3c3c;"></div>
<span class="t" style="left:1567px;top:98.0px;font-size:12.5px;line-height:1;color:#b8b8b8;font-weight:bold;">Color</span>
<span class="t" style="left:1621px;top:98.0px;font-size:12.5px;line-height:1;color:#f4f4f4;font-weight:bold;">Swatches</span>
<span class="t" style="left:1696px;top:98.0px;font-size:12.5px;line-height:1;color:#b8b8b8;font-weight:bold;">Gradients</span>
<span class="t" style="left:1775px;top:98.0px;font-size:12.5px;line-height:1;color:#b8b8b8;font-weight:bold;">Patterns</span>
<svg style="left:1900px;top:100px" width="12" height="10" fill="#c8c8c8"><rect y="0" width="11" height="1.2"/><rect y="2.8" width="11" height="1.2"/><rect y="5.6" width="11" height="1.2"/><rect y="8.4" width="11" height="1.2"/></svg>
<svg style="left:1566px;top:142px" width="15" height="15"><circle cx="6" cy="6" r="4.5" stroke="#f0f0f0" stroke-width="2" fill="none"/><path d="M9.5 9.5l4 4" stroke="#f0f0f0" stroke-width="2.5"/></svg>
<div class="a" style="left:1583px;top:135px;width:325px;height:29px;background:#454545;border:1px solid #5f5f5f"></div>
<span class="t" style="left:1591px;top:141.9px;font-size:14.3px;line-height:1;color:#8e8e8e;font-style:italic;">Search Swatches</span>
<div class="a" style="left:1566px;top:174px;width:342px;height:23px;background:#4a4a4a;"></div>
<div class="a" style="left:1566.0px;top:175px;width:20px;height:20px;background:#6e5a40;"></div>
<div class="a" style="left:1588.5px;top:175px;width:20px;height:20px;background:#080408;"></div>
<div class="a" style="left:1611.0px;top:175px;width:20px;height:20px;background:#f01414;"></div>
<div class="a" style="left:1633.5px;top:175px;width:20px;height:20px;background:#cc1c1c;"></div>
<div class="a" style="left:1656.0px;top:175px;width:20px;height:20px;background:#a0c83c;"></div>
<div class="a" style="left:1678.5px;top:175px;width:20px;height:20px;background:#f26522;"></div>
<div class="a" style="left:1701.0px;top:175px;width:20px;height:20px;background:#ffffff;"></div>
<div class="a" style="left:1723.5px;top:175px;width:20px;height:20px;background:#e6e8e6;"></div>
<div class="a" style="left:1746.0px;top:175px;width:20px;height:20px;background:#3a4454;"></div>
<div class="a" style="left:1768.5px;top:175px;width:20px;height:20px;background:#054a8a;"></div>
<div class="a" style="left:1791.0px;top:175px;width:20px;height:20px;background:#a8a8a8;"></div>
<div class="a" style="left:1813.5px;top:175px;width:20px;height:20px;background:#c01e20;"></div>
<div class="a" style="left:1836.0px;top:175px;width:20px;height:20px;background:#c41818;"></div>
<div class="a" style="left:1858.5px;top:175px;width:20px;height:20px;background:#0c88c8;"></div>
<div class="a" style="left:1881.0px;top:175px;width:20px;height:20px;background:#ffffff;"></div>
<div class="a" style="left:1555px;top:205px;width:362px;height:2px;background:#3a3a3a;"></div>
<div class="a" style="left:1555px;top:207px;width:343px;height:36px;background:#424242;"></div>
<svg style="left:1565px;top:222px" width="12" height="8"><path d="M1 1l5 5 5-5" stroke="#c8c8c8" stroke-width="1.2" fill="none"/></svg>
<svg style="left:1582px;top:218px" width="19" height="14"><path d="M0.5 0.5h7l2 2h9v11h-18z" fill="#d4d4d4"/><path d="M1 4.5h17" stroke="#424242" stroke-width="1.4"/></svg>
<span class="t" style="left:1612px;top:218.6px;font-size:14.3px;line-height:1;color:#ececec;">RGB</span>
<div class="a" style="left:1555px;top:243px;width:343px;height:37px;background:#4a4a4a;"></div>
<div class="a" style="left:1583.0px;top:245.5px;width:35px;height:34.5px;background:#f41414;"></div>
<div class="a" style="left:1620.5px;top:245.5px;width:35px;height:34.5px;background:#ffff00;"></div>
<div class="a" style="left:1658.1px;top:245.5px;width:35px;height:34.5px;background:#00ff00;"></div>
<div class="a" style="left:1695.7px;top:245.5px;width:35px;height:34.5px;background:#00ffff;"></div>
<div class="a" style="left:1733.2px;top:245.5px;width:35px;height:34.5px;background:#0000ff;"></div>
<div class="a" style="left:1770.8px;top:245.5px;width:35px;height:34.5px;background:#ff00ff;"></div>
<div class="a" style="left:1555px;top:280px;width:343px;height:36px;background:#424242;"></div>
<svg style="left:1565px;top:295px" width="12" height="8"><path d="M1 1l5 5 5-5" stroke="#c8c8c8" stroke-width="1.2" fill="none"/></svg>
<svg style="left:1582px;top:291px" width="19" height="14"><path d="M0.5 0.5h7l2 2h9v11h-18z" fill="#d4d4d4"/><path d="M1 4.5h17" stroke="#424242" stroke-width="1.4"/></svg>
<span class="t" style="left:1612px;top:291.6px;font-size:14.3px;line-height:1;color:#ececec;">CMYK</span>
<div class="a" style="left:1555px;top:316px;width:343px;height:38px;background:#4a4a4a;"></div>
<div class="a" style="left:1583.0px;top:318.5px;width:35px;height:35px;background:#ec1c24;"></div>
<div class="a" style="left:1620.5px;top:318.5px;width:35px;height:35px;background:#fff200;"></div>
<div class="a" style="left:1658.1px;top:318.5px;width:35px;height:35px;background:#00a550;"></div>
<div class="a" style="left:1695.7px;top:318.5px;width:35px;height:35px;background:#00aeef;"></div>
<div class="a" style="left:1733.2px;top:318.5px;width:35px;height:35px;background:#2e3192;"></div>
<div class="a" style="left:1770.8px;top:318.5px;width:35px;height:35px;background:#ec008c;"></div>
<div class="a" style="left:1555px;top:354px;width:343px;height:36px;background:#424242;"></div>
<svg style="left:1567px;top:366px" width="8" height="12"><path d="M1.5 1l5 5-5 5" stroke="#c8c8c8" stroke-width="1.2" fill="none"/></svg>
<svg style="left:1582px;top:365px" width="19" height="14"><path d="M0.5 0.5h7l2 2h9v11h-18z" fill="#d4d4d4"/></svg>
<span class="t" style="left:1612px;top:365.6px;font-size:14.3px;line-height:1;color:#ececec;">Grayscale</span>
<div class="a" style="left:1555px;top:389px;width:343px;height:1px;background:#4a4a4a;"></div>
<div class="a" style="left:1555px;top:390px;width:343px;height:36px;background:#424242;"></div>
<svg style="left:1567px;top:402px" width="8" height="12"><path d="M1.5 1l5 5-5 5" stroke="#c8c8c8" stroke-width="1.2" fill="none"/></svg>
<svg style="left:1582px;top:401px" width="19" height="14"><path d="M0.5 0.5h7l2 2h9v11h-18z" fill="#d4d4d4"/></svg>
<span class="t" style="left:1612px;top:401.6px;font-size:14.3px;line-height:1;color:#ececec;">Pastel</span>
<div class="a" style="left:1555px;top:425px;width:343px;height:1px;background:#4a4a4a;"></div>
<div class="a" style="left:1555px;top:426px;width:343px;height:36px;background:#424242;"></div>
<svg style="left:1567px;top:438px" width="8" height="12"><path d="M1.5 1l5 5-5 5" stroke="#c8c8c8" stroke-width="1.2" fill="none"/></svg>
<svg style="left:1582px;top:437px" width="19" height="14"><path d="M0.5 0.5h7l2 2h9v11h-18z" fill="#d4d4d4"/></svg>
<span class="t" style="left:1612px;top:437.6px;font-size:14.3px;line-height:1;color:#ececec;">Light</span>
<div class="a" style="left:1555px;top:461px;width:343px;height:1px;background:#4a4a4a;"></div>
<div class="a" style="left:1555px;top:462px;width:343px;height:36px;background:#424242;"></div>
<svg style="left:1565px;top:477px" width="12" height="8"><path d="M1 1l5 5 5-5" stroke="#c8c8c8" stroke-width="1.2" fill="none"/></svg>
<svg style="left:1582px;top:473px" width="19" height="14"><path d="M0.5 0.5h7l2 2h9v11h-18z" fill="#d4d4d4"/><path d="M1 4.5h17" stroke="#424242" stroke-width="1.4"/></svg>
<span class="t" style="left:1612px;top:473.6px;font-size:14.3px;line-height:1;color:#ececec;">Pure</span>
<div class="a" style="left:1555px;top:498px;width:343px;height:24px;background:#4a4a4a;"></div>
<div class="a" style="left:1583.0px;top:500.5px;width:35px;height:21.5px;background:#ed1c24;"></div>
<div class="a" style="left:1620.5px;top:500.5px;width:35px;height:21.5px;background:#f26522;"></div>
<div class="a" style="left:1658.1px;top:500.5px;width:35px;height:21.5px;background:#f7941d;"></div>
<div class="a" style="left:1695.7px;top:500.5px;width:35px;height:21.5px;background:#fff200;"></div>
<div class="a" style="left:1733.2px;top:500.5px;width:35px;height:21.5px;background:#8dc63f;"></div>
<div class="a" style="left:1770.8px;top:500.5px;width:35px;height:21.5px;background:#39b54a;"></div>
<div class="a" style="left:1808.3px;top:500.5px;width:35px;height:21.5px;background:#00a651;"></div>
<div class="a" style="left:1845.8px;top:500.5px;width:35px;height:21.5px;background:#00a99d;"></div>
<div class="a" style="left:1898px;top:207px;width:19px;height:315px;background:#535353;"></div>
<svg style="left:1902px;top:216px" width="11" height="7"><path d="M1 6l4.5-4.5 4.5 4.5" stroke="#9a9a9a" stroke-width="1.1" fill="none"/></svg>
<div class="a" style="left:1901px;top:228px;width:13px;height:180px;background:#5e5e5e;"></div>
<svg style="left:1902px;top:506px" width="11" height="7"><path d="M1 1l4.5 4.5 4.5-4.5" stroke="#9a9a9a" stroke-width="1.1" fill="none"/></svg>
<div class="a" style="left:1555px;top:522px;width:362px;height:1px;background:#3c3c3c;"></div>
<svg style="left:1793px;top:531px" width="95" height="18" fill="#9a9a9a">
<path d="M1 3h6l2 2h9v11h-17z"/>
<rect x="39.5" y="2.5" width="13" height="13" fill="none" stroke="#9a9a9a" stroke-width="1.3"/><path d="M46 5.5v7M42.5 9h7" stroke="#9a9a9a" stroke-width="1.3"/>
<rect x="75" y="3" width="14" height="2"/><rect x="79" y="1" width="6" height="2"/><path d="M76.5 6h11l-1 11h-9z" fill="none" stroke="#9a9a9a" stroke-width="1.3"/><path d="M80 8v7M82 8v7M84 8v7" stroke="#9a9a9a" stroke-width="1"/>
</svg>
<div class="a" style="left:1555px;top:557px;width:362px;height:2px;background:#3a3a3a;"></div>
<div class="a" style="left:1555px;top:559px;width:362px;height:35px;background:#424242;"></div>
<div class="a" style="left:1556px;top:559px;width:59px;height:35px;background:#535353;"></div>
<div class="a" style="left:1615px;top:559px;width:75px;height:35px;background:#4a4a4a;"></div>
<div class="a" style="left:1690px;top:559px;width:55px;height:35px;background:#4a4a4a;"></div>
<div class="a" style="left:1614px;top:559px;width:1px;height:35px;background:#3c3c3c;"></div>
<div class="a" style="left:1690px;top:559px;width:1px;height:35px;background:#3c3c3c;"></div>
<div class="a" style="left:1744px;top:559px;width:1px;height:35px;background:#3c3c3c;"></div>
<span class="t" style="left:1568px;top:569.6px;font-size:12.3px;line-height:1;color:#f4f4f4;font-weight:bold;">Layers</span>
<span class="t" style="left:1626px;top:569.6px;font-size:12.3px;line-height:1;color:#b8b8b8;font-weight:bold;">Channels</span>
<span class="t" style="left:1701px;top:569.6px;font-size:12.3px;line-height:1;color:#b8b8b8;font-weight:bold;">Paths</span>
<svg style="left:1901px;top:572px" width="12" height="10" fill="#c8c8c8"><rect y="0" width="11" height="1.2"/><rect y="2.8" width="11" height="1.2"/><rect y="5.6" width="11" height="1.2"/><rect y="8.4" width="11" height="1.2"/></svg>
<div class="a" style="left:1561px;top:606px;width:108px;height:26px;background:#454545;border:1px solid #3e3e3e;border-radius:2px"></div>
<svg style="left:1570px;top:612px" width="14" height="14"><circle cx="5.5" cy="5.5" r="4.3" stroke="#e0e0e0" stroke-width="1.5" fill="none"/><path d="M8.5 8.5l4 4" stroke="#e0e0e0" stroke-width="1.8"/></svg>
<span class="t" style="left:1588px;top:611.5px;font-size:13px;line-height:1;color:#ececec;">Kind</span>
<svg style="left:1654px;top:618px" width="10" height="6"><path d="M1 1l4 4 4-4" stroke="#d0d0d0" stroke-width="1.1" fill="none"/></svg>
<svg style="left:1682px;top:607px" width="170" height="26" fill="none" stroke="#d8d8d8" stroke-width="1.4">
<rect x="3" y="5" width="14" height="11"/><path d="M5 14l3-4 2 2 3-4 3 6z" fill="#d8d8d8" stroke="none"/>
<circle cx="40" cy="10.5" r="6.5" stroke-width="1.6"/><path d="M35.5 15l9-9v9z" fill="#d8d8d8" stroke="none"/>
<path d="M63 5h13M69.5 5v12M66 17h7M63 5v2.5M76 5v2.5" stroke-width="2"/>
<rect x="94" y="5" width="12" height="12"/><rect x="92.5" y="3.5" width="3" height="3" fill="#d8d8d8"/><rect x="104.5" y="3.5" width="3" height="3" fill="#d8d8d8"/><rect x="92.5" y="15.5" width="3" height="3" fill="#d8d8d8"/><rect x="104.5" y="15.5" width="3" height="3" fill="#d8d8d8"/>
<path d="M124 18l5-11 5 11zM131 4h4l3 3v11h-4" stroke-width="1.3"/><path d="M126.5 17.5l2.5-6 2.5 6z" fill="#d8d8d8" stroke="none"/>
<rect x="152" y="8" width="10" height="17" rx="5" fill="#3c3c3c" stroke="none"/><circle cx="157" cy="8" r="5" fill="#e8e8e8" stroke="none"/>
</svg>
<div class="a" style="left:1555px;top:634px;width:362px;height:2px;background:#474747;"></div>
<div class="a" style="left:1561px;top:641px;width:161px;height:27px;background:#454545;border:1px solid #3e3e3e;border-radius:2px"></div>
<span class="t" style="left:1571px;top:648.0px;font-size:13px;line-height:1;color:#ececec;">Normal</span>
<svg style="left:1707px;top:652px" width="10" height="6"><path d="M1 1l4 4 4-4" stroke="#d0d0d0" stroke-width="1.1" fill="none"/></svg>
<span class="t" style="left:1730px;top:647.5px;font-size:12.4px;line-height:1;color:#cfcfcf;">Opacity:</span>
<div class="a" style="left:1782px;top:643px;width:61px;height:20px;background:#454545;border:1px solid #3e3e3e;border-radius:2px"></div>
<div class="a" style="left:1825px;top:643px;width:1px;height:20px;background:#5a5a5a;"></div>
<span class="t" style="left:1786px;top:646.0px;font-size:12.4px;line-height:1;color:#ececec;">100%</span>
<svg style="left:1830px;top:651px" width="10" height="6"><path d="M1 1l4 4 4-4" stroke="#d0d0d0" stroke-width="1.1" fill="none"/></svg>
<div class="a" style="left:1555px;top:668px;width:362px;height:2px;background:#474747;"></div>
<span class="t" style="left:1564px;top:681.0px;font-size:12.4px;line-height:1;color:#cfcfcf;">Lock:</span>
<svg style="left:1600px;top:677px" width="135" height="20">
<rect x="4" y="3" width="14" height="14" fill="#8a8a8a"/><g fill="#5a5a5a"><rect x="4" y="3" width="3.5" height="3.5"/><rect x="11" y="3" width="3.5" height="3.5"/><rect x="7.5" y="6.5" width="3.5" height="3.5"/><rect x="14.5" y="6.5" width="3.5" height="3.5"/><rect x="4" y="10" width="3.5" height="3.5"/><rect x="11" y="10" width="3.5" height="3.5"/><rect x="7.5" y="13.5" width="3.5" height="3.5"/><rect x="14.5" y="13.5" width="3.5" height="3.5"/></g>
<path d="M32 18l4-5 11-11" stroke="#8a8a8a" stroke-width="3" stroke-linecap="round"/>
<g stroke="#d8d8d8" stroke-width="1.5" fill="none"><path d="M66 2v16M58 10h16"/></g><path d="M66 0l-3 3h6zM66 20l-3-3h6zM56 10l3-3v6zM76 10l-3-3v6z" fill="#d8d8d8"/>
<path d="M86 5h14v11h-14zM84 5h4M98 3v4M84 16h18" stroke="#d8d8d8" stroke-width="1.4" fill="none"/>
<path d="M117 9v-3a5 5 0 0 1 10 0v3" stroke="#d8d8d8" stroke-width="2" fill="none"/><rect x="115" y="9" width="14" height="10" fill="#d8d8d8"/><circle cx="122" cy="14" r="1.5" fill="#535353"/>
</svg>
<span class="t" style="left:1757px;top:681.0px;font-size:12.4px;line-height:1;color:#cfcfcf;">Fill:</span>
<div class="a" style="left:1782px;top:677px;width:61px;height:20px;background:#454545;border:1px solid #3e3e3e;border-radius:2px"></div>
<div class="a" style="left:1825px;top:677px;width:1px;height:20px;background:#5a5a5a;"></div>
<span class="t" style="left:1786px;top:680.0px;font-size:12.4px;line-height:1;color:#ececec;">100%</span>
<svg style="left:1830px;top:685px" width="10" height="6"><path d="M1 1l4 4 4-4" stroke="#d0d0d0" stroke-width="1.1" fill="none"/></svg>
<div class="a" style="left:1555px;top:705px;width:362px;height:2px;background:#474747;"></div>
<div class="a" style="left:1555px;top:707px;width:343px;height:33px;background:#424242;"></div>
<svg style="left:1566px;top:718px" width="18" height="12"><path d="M1 6q8-9.5 16 0q-8 9.5-16 0z" fill="#e4e4e4"/><circle cx="9" cy="6" r="3.2" fill="#535353"/><circle cx="9.6" cy="5" r="1" fill="#e4e4e4"/></svg>
<svg style="left:1598px;top:721px" width="12" height="7"><path d="M1 1l5 5 5-5" stroke="#c8c8c8" stroke-width="1.1" fill="none"/></svg>
<span class="t" style="left:1622px;top:718.3px;font-size:13px;line-height:1;color:#f4f4f4;font-weight:bold;">Sale Flyer 02: A4</span>
<div class="a" style="left:1555px;top:790px;width:343px;height:2px;background:#474747;"></div>
<div class="a" style="left:1593px;top:740px;width:2px;height:50px;background:#474747;"></div>
<svg style="left:1566px;top:760px" width="18" height="12"><path d="M1 6q8-9.5 16 0q-8 9.5-16 0z" fill="#e4e4e4"/><circle cx="9" cy="6" r="3.2" fill="#535353"/><circle cx="9.6" cy="5" r="1" fill="#e4e4e4"/></svg>
<svg style="left:1629px;top:757px" width="19" height="19"><path d="M1.5 1.5h16v3M1.5 1.5v3M9.5 1.5v16M5.5 17.5h8" stroke="#dcdcdc" stroke-width="2.2" fill="none"/></svg>
<span class="t" style="left:1671px;top:759.5px;font-size:12.6px;line-height:1;color:#ececec;">kulinarische&nbsp; Konferenz</span>
<div class="a" style="left:1555px;top:792px;width:38px;height:50px;background:#4b6a9a;"></div>
<svg style="left:1566px;top:811px" width="18" height="12"><path d="M1 6q8-9.5 16 0q-8 9.5-16 0z" fill="#e4e4e4"/><circle cx="9" cy="6" r="3.2" fill="#535353"/><circle cx="9.6" cy="5" r="1" fill="#e4e4e4"/></svg>
<div class="a" style="left:1555px;top:842px;width:343px;height:2px;background:#474747;"></div>
<div class="a" style="left:1593px;top:792px;width:2px;height:50px;background:#474747;"></div>
<div class="a" style="left:1618px;top:797px;width:31px;height:41px;border:1.5px solid #2a2a2a;background-color:#fff;background-image:linear-gradient(45deg,#ccc 25%,transparent 25%,transparent 75%,#ccc 75%),linear-gradient(45deg,#ccc 25%,transparent 25%,transparent 75%,#ccc 75%);background-size:8px 8px;background-position:0 0,4px 4px"></div>
<div class="a" style="left:1630px;top:819px;width:19px;height:19px;background:#535353;border:1.5px solid #2a2a2a"></div>
<svg style="left:1632px;top:821px" width="15" height="15"><rect x="3" y="3" width="9" height="9" stroke="#d8d8d8" stroke-width="1.2" fill="none"/><g fill="#d8d8d8"><rect x="1.5" y="1.5" width="3" height="3"/><rect x="10.5" y="1.5" width="3" height="3"/><rect x="1.5" y="10.5" width="3" height="3"/><rect x="10.5" y="10.5" width="3" height="3"/></g></svg>
<span class="t" style="left:1661px;top:810.5px;font-size:12.7px;line-height:1;color:#ececec;">Bleed [Hide for Print]</span>
<svg style="left:1566px;top:852px" width="18" height="12"><path d="M1 6q8-9.5 16 0q-8 9.5-16 0z" fill="#e4e4e4"/><circle cx="9" cy="6" r="3.2" fill="#535353"/><circle cx="9.6" cy="5" r="1" fill="#e4e4e4"/></svg>
<div class="a" style="left:1555px;top:874px;width:343px;height:2px;background:#474747;"></div>
<div class="a" style="left:1593px;top:844px;width:2px;height:30px;background:#474747;"></div>
<svg style="left:1618px;top:855px" width="12" height="7"><path d="M1 1l5 5 5-5" stroke="#c8c8c8" stroke-width="1.1" fill="none"/></svg>
<svg style="left:1632px;top:851px" width="20" height="15"><path d="M0.5 0.5h7l2 2h10v12h-19z" fill="#d4d4d4"/><path d="M1 5h18" stroke="#535353" stroke-width="1.3"/></svg>
<span class="t" style="left:1667px;top:852.0px;font-size:12.6px;line-height:1;color:#ececec;">Text</span>
<svg style="left:1566px;top:894px" width="18" height="12"><path d="M1 6q8-9.5 16 0q-8 9.5-16 0z" fill="#e4e4e4"/><circle cx="9" cy="6" r="3.2" fill="#535353"/><circle cx="9.6" cy="5" r="1" fill="#e4e4e4"/></svg>
<div class="a" style="left:1555px;top:924px;width:343px;height:2px;background:#474747;"></div>
<div class="a" style="left:1593px;top:876px;width:2px;height:48px;background:#474747;"></div>
<svg style="left:1649px;top:891px" width="19" height="19"><path d="M1.5 1.5h16v3M1.5 1.5v3M9.5 1.5v16M5.5 17.5h8" stroke="#dcdcdc" stroke-width="2.2" fill="none"/></svg>
<span class="t" style="left:1691px;top:893.5px;font-size:12.6px;line-height:1;color:#ececec;">Gutschein</span>
<svg style="left:1566px;top:935px" width="18" height="12"><path d="M1 6q8-9.5 16 0q-8 9.5-16 0z" fill="#e4e4e4"/><circle cx="9" cy="6" r="3.2" fill="#535353"/><circle cx="9.6" cy="5" r="1" fill="#e4e4e4"/></svg>
<div class="a" style="left:1555px;top:956px;width:343px;height:2px;background:#474747;"></div>
<div class="a" style="left:1593px;top:926px;width:2px;height:30px;background:#474747;"></div>
<svg style="left:1618px;top:938px" width="12" height="7"><path d="M1 1l5 5 5-5" stroke="#c8c8c8" stroke-width="1.1" fill="none"/></svg>
<svg style="left:1632px;top:934px" width="20" height="15"><path d="M0.5 0.5h7l2 2h10v12h-19z" fill="#d4d4d4"/><path d="M1 5h18" stroke="#535353" stroke-width="1.3"/></svg>
<span class="t" style="left:1667px;top:935.5px;font-size:12.6px;line-height:1;color:#ececec;">Graphic Elements</span>
<svg style="left:1566px;top:976px" width="18" height="12"><path d="M1 6q8-9.5 16 0q-8 9.5-16 0z" fill="#e4e4e4"/><circle cx="9" cy="6" r="3.2" fill="#535353"/><circle cx="9.6" cy="5" r="1" fill="#e4e4e4"/></svg>
<div class="a" style="left:1593px;top:958px;width:2px;height:39px;background:#474747;"></div>
<div class="a" style="left:1639px;top:962px;width:29px;height:36px;border:1.5px solid #2a2a2a;background-color:#fff;background-image:linear-gradient(45deg,#ccc 25%,transparent 25%,transparent 75%,#ccc 75%),linear-gradient(45deg,#ccc 25%,transparent 25%,transparent 75%,#ccc 75%);background-size:8px 8px;background-position:0 0,4px 4px"></div>
<div class="a" style="left:1642px;top:965px;width:4px;height:4px;background:#c8602a"></div>
<span class="t" style="left:1681px;top:974.5px;font-size:12.6px;line-height:1;color:#ececec;">Berry Branch</span>
<div class="a" style="left:1898px;top:707px;width:19px;height:290px;background:#535353;"></div>
<svg style="left:1902px;top:717px" width="11" height="7"><path d="M1 6l4.5-4.5 4.5 4.5" stroke="#9a9a9a" stroke-width="1.1" fill="none"/></svg>
<div class="a" style="left:1901px;top:728px;width:13px;height:40px;background:#5e5e5e;"></div>
<svg style="left:1902px;top:980px" width="11" height="7"><path d="M1 1l4.5 4.5 4.5-4.5" stroke="#9a9a9a" stroke-width="1.1" fill="none"/></svg>
<div class="a" style="left:1555px;top:997px;width:362px;height:2px;background:#474747;"></div>
<svg style="left:1660px;top:1003px" width="230" height="20" fill="none" stroke="#d8d8d8" stroke-width="1.8">
<rect x="3" y="6" width="9" height="7" rx="3.5"/><rect x="13" y="6" width="9" height="7" rx="3.5"/><path d="M8 9.5h9"/>
<text x="38" y="15" font-family="Liberation Serif" font-style="italic" font-size="15" fill="#8a8a8a" stroke="none">fx</text>
<rect x="71" y="3" width="18" height="13" fill="#8a8a8a" stroke="none"/><circle cx="80" cy="9.5" r="4" fill="#535353" stroke="none"/>
<circle cx="115" cy="10" r="7" stroke-width="1.5"/><path d="M110 15l10-10v10z" fill="#d8d8d8" stroke="none"/><path d="M120 18l2 2 2-2z" fill="#d8d8d8" stroke="none"/>
<path d="M139 4h6l2 2h9v11h-17z" fill="#d8d8d8" stroke="none"/>
<rect x="173.5" y="2.5" width="14" height="14" stroke-width="1.4"/><path d="M180.5 5.5v8M176.5 9.5h8" stroke-width="1.4"/>
<rect x="207" y="4" width="16" height="2" fill="#d8d8d8" stroke="none"/><rect x="212" y="2" width="6" height="2" fill="#d8d8d8" stroke="none"/><path d="M209 7h12l-1 11h-10z" stroke-width="1.4"/><path d="M212.5 9v7M215 9v7M217.5 9v7" stroke-width="1"/>
</svg>
<!--/RIGHT-->
<!-- ===== CI HUB PANEL ===== -->
<div class="a" style="left:876px;top:50px;width:630px;height:905px;background:#535353;border-radius:5px 5px 0 0;box-shadow:0 0 3px rgba(0,0,0,.5)"></div>
<div class="a" style="left:876px;top:50px;width:630px;height:15px;background:#424242;border-radius:5px 5px 0 0"></div>
<div class="a" style="left:876px;top:65px;width:630px;height:35px;background:#424242"></div>
<div class="a" style="left:876px;top:65px;width:63px;height:35px;background:#535353"></div>
<!--CIHUB-->
<svg style="left:1467px;top:54px" width="12" height="8"><path d="M5 1l-3 3 3 3M10 1l-3 3 3 3" stroke="#d8d8d8" fill="none" stroke-width="1.3"/></svg>
<svg style="left:1491px;top:53px" width="10" height="10"><path d="M1 1l8 8M9 1l-8 8" stroke="#d8d8d8" stroke-width="2"/></svg>
<span class="t" style="left:888px;top:75.0px;font-size:13px;line-height:1;color:#f0f0f0;font-weight:bold;">CI HUB</span>
<svg style="left:1488px;top:78px" width="13" height="10" fill="#c8c8c8"><rect y="0" width="12" height="1.3"/><rect y="3" width="12" height="1.3"/><rect y="6" width="12" height="1.3"/><rect y="8.6" width="12" height="1.3"/></svg>
<svg style="left:902px;top:114px" width="10" height="14"><path d="M2 1.5l6 5.5-6 5.5" stroke="#f0f0f0" stroke-width="1.8" fill="none"/></svg>
<span class="t" style="left:944px;top:112.9px;font-size:22.4px;line-height:1;color:#f2f2f2;letter-spacing:-0.6px;-webkit-text-stroke:0.25px #f2f2f2;">Connections</span>
<svg style="left:1068.0px;top:112.0px" width="17.0" height="17.0"><circle cx="8.5" cy="8.5" r="8.5" fill="#f4f4f4"/><rect x="6.9" y="6.5" width="3.2" height="7" fill="#535353"/><rect x="5.3" y="12.0" width="6.4" height="1.6" fill="#535353"/><rect x="5.3" y="6.5" width="2" height="1.6" fill="#535353"/><circle cx="8.5" cy="3.7" r="1.7" fill="#535353"/></svg>
<span class="t" style="left:1090px;top:112.9px;font-size:22.4px;line-height:1;color:#f2f2f2;letter-spacing:-0.6px;-webkit-text-stroke:0.25px #f2f2f2;">(4</span>
<svg style="left:1114px;top:113px" width="18" height="15"><path d="M2 8l5 5 9-10" stroke="#22c55e" stroke-width="3.6" fill="none"/></svg>
<span class="t" style="left:1133px;top:112.9px;font-size:22.4px;line-height:1;color:#f2f2f2;letter-spacing:-0.6px;-webkit-text-stroke:0.25px #f2f2f2;">)</span>
<div class="a" style="left:1148px;top:119px;width:332px;height:2px;background:#5e5e5e"></div>
<svg style="left:900px;top:184px" width="14" height="9"><path d="M1.5 1.5l5.5  5.5l5.5 -5.5" stroke="#f0f0f0" stroke-width="1.8" fill="none"/></svg>
<span class="t" style="left:944px;top:180.2px;font-size:22.4px;line-height:1;color:#f2f2f2;letter-spacing:-0.6px;-webkit-text-stroke:0.25px #f2f2f2;">Navigation</span>
<svg style="left:1053.5px;top:180.0px" width="17.0" height="17.0"><circle cx="8.5" cy="8.5" r="8.5" fill="#f4f4f4"/><rect x="6.9" y="6.5" width="3.2" height="7" fill="#535353"/><rect x="5.3" y="12.0" width="6.4" height="1.6" fill="#535353"/><rect x="5.3" y="6.5" width="2" height="1.6" fill="#535353"/><circle cx="8.5" cy="3.7" r="1.7" fill="#535353"/></svg>
<div class="a" style="left:1075px;top:187px;width:75px;height:2px;background:#5e5e5e"></div>
<div class="a" style="left:1390px;top:167px;width:50px;height:42px;background:#474747;border-radius:3px"></div>
<svg style="left:1160px;top:175px" width="320" height="26" fill="none" stroke="#f4f4f4" stroke-width="2">
<path d="M14 2l3.2 6.8 7.3.8-5.4 5 1.5 7.3-6.6-3.7-6.6 3.7 1.5-7.3-5.4-5 7.3-.8z" fill="#f4f4f4" stroke="none"/>
<g fill="#8a8a8a" stroke="none"><rect x="53" y="7" width="14" height="15" rx="2"/><rect x="51" y="4" width="18" height="2.5"/><rect x="57" y="2" width="6" height="2.5"/></g>
<g stroke="#535353" stroke-width="1.2"><path d="M57 10v9M60 10v9M63 10v9"/></g>
<rect x="101" y="6" width="14" height="14" rx="2"/><path d="M108 9v8M104 13h8"/>
<g stroke="#8a8a8a" stroke-width="2.5"><circle cx="154" cy="12" r="6.5"/><path d="M159 17l5 5"/><path d="M154 9v6M151 12h6" stroke-width="1.8"/></g>
<g stroke-width="2.6"><rect x="196" y="3" width="11" height="7" rx="3.5" transform="rotate(40 201 6)"/><rect x="204" y="13" width="11" height="7" rx="3.5" transform="rotate(40 209 16)"/></g>
<path d="M245 7h7l2 3h12v11h-21z" stroke-width="2"/>
<g stroke-width="3"><circle cx="302" cy="12" r="6.5"/><path d="M307 17l5 5"/></g>
</svg>
<svg style="left:894px;top:215px" width="20" height="24"><path d="M16 3a10 10 0 1 0 0 18l-3-5a4.5 4.5 0 1 1 0-8z" fill="#2e8bc0"/><path d="M5 6l6 4-5 6z" fill="#7cc6e8"/></svg>
<span class="t" style="left:921px;top:217.8px;font-size:18.5px;line-height:1;color:#f2f2f2;">CELUM demo.celu...</span>
<div class="a" style="left:1104px;top:214px;width:23px;height:25px;border:1px solid #7a7a7a;border-radius:2px"></div>
<span class="t" style="left:1106px;top:217.8px;font-size:18.5px;line-height:1;color:#f2f2f2;">en</span>
<svg style="left:1136px;top:218px" width="24" height="18"><path d="M10 1L1 9h3v8h4.5v-5h3v5H16V9h3z" fill="#f4f4f4"/><path d="M16 17l5-15" stroke="#9a9a9a" stroke-width="1.5"/></svg>
<span class="t" style="left:1164px;top:217.8px;font-size:18.5px;line-height:1;color:#f2f2f2;letter-spacing:0.3px;">Works...</span>
<span class="t" style="left:1243px;top:217.8px;font-size:18.5px;line-height:1;color:#8a8a8a;">/</span>
<span class="t" style="left:1256px;top:217.8px;font-size:18.5px;line-height:1;color:#f2f2f2;letter-spacing:0.6px;">#01 | S...</span>
<span class="t" style="left:1347px;top:217.8px;font-size:18.5px;line-height:1;color:#8a8a8a;">/</span>
<span class="t" style="left:1358px;top:217.8px;font-size:18.5px;line-height:1;color:#f2f2f2;letter-spacing:0.55px;">01 | Upload box</span>
<svg style="left:900px;top:258px" width="14" height="9"><path d="M1.5 1.5l5.5  5.5l5.5 -5.5" stroke="#f0f0f0" stroke-width="1.8" fill="none"/></svg>
<span class="t" style="left:944.6px;top:254.9px;font-size:22.4px;line-height:1;color:#f2f2f2;letter-spacing:-0.6px;-webkit-text-stroke:0.25px #f2f2f2;">Filter</span>
<svg style="left:1000.3px;top:254.2px" width="17.0" height="17.0"><circle cx="8.5" cy="8.5" r="8.5" fill="#f4f4f4"/><rect x="6.9" y="6.5" width="3.2" height="7" fill="#535353"/><rect x="5.3" y="12.0" width="6.4" height="1.6" fill="#535353"/><rect x="5.3" y="6.5" width="2" height="1.6" fill="#535353"/><circle cx="8.5" cy="3.7" r="1.7" fill="#535353"/></svg>
<div class="a" style="left:1022px;top:262px;width:468px;height:2px;background:#5e5e5e"></div>
<div class="a" style="left:893px;top:289px;width:170px;height:39px;border:1px solid #6c6c6c;border-radius:2px"></div>
<span class="t" style="left:904px;top:301.6px;font-size:17.5px;line-height:1;color:#f2f2f2;">File Category</span>
<svg style="left:1034px;top:305.5px" width="11" height="7"><path d="M1 1l4.5 4.5 4.5-4.5" stroke="#e0e0e0" stroke-width="1.1" fill="none"/></svg>
<div class="a" style="left:1081px;top:289px;width:211px;height:39px;border:1px solid #6c6c6c;border-radius:2px"></div>
<span class="t" style="left:1092px;top:301.6px;font-size:17.5px;line-height:1;color:#f2f2f2;">Asset Type</span>
<svg style="left:1264px;top:305.5px" width="11" height="7"><path d="M1 1l4.5 4.5 4.5-4.5" stroke="#e0e0e0" stroke-width="1.1" fill="none"/></svg>
<div class="a" style="left:893px;top:337px;width:184px;height:39px;border:1px solid #6c6c6c;border-radius:2px"></div>
<span class="t" style="left:904px;top:349.6px;font-size:17.5px;line-height:1;color:#f2f2f2;">Asset Availability</span>
<svg style="left:1048px;top:353.5px" width="11" height="7"><path d="M1 1l4.5 4.5 4.5-4.5" stroke="#e0e0e0" stroke-width="1.1" fill="none"/></svg>
<span class="t" style="left:893px;top:400.1px;font-size:19px;line-height:1;color:#f2f2f2;">Result</span>
<svg style="left:953.7px;top:400.4px" width="16.6" height="16.6"><circle cx="8.3" cy="8.3" r="8.3" fill="#f4f4f4"/><rect x="6.7" y="6.3" width="3.2" height="7" fill="#535353"/><rect x="5.1" y="11.8" width="6.4" height="1.6" fill="#535353"/><rect x="5.1" y="6.3" width="2" height="1.6" fill="#535353"/><circle cx="8.3" cy="3.5" r="1.7" fill="#535353"/></svg>
<span class="t" style="left:975px;top:400.1px;font-size:19px;line-height:1;color:#f2f2f2;">(4</span>
<svg style="left:999px;top:399px" width="16" height="20"><path d="M1.5 1.5h8l5 5v12h-13z" stroke="#f4f4f4" stroke-width="1.6" fill="none"/><path d="M9.5 1.5v5h5" stroke="#f4f4f4" stroke-width="1.4" fill="none"/></svg>
<span class="t" style="left:1016px;top:400.1px;font-size:19px;line-height:1;color:#f2f2f2;">)</span>
<div class="a" style="left:1030px;top:407px;width:15px;height:2px;background:#5e5e5e"></div>
<div class="a" style="left:1388px;top:387px;width:53px;height:43px;background:#474747;border-radius:3px"></div>
<svg style="left:1350px;top:396px" width="130" height="26">
<g fill="#f4f4f4"><rect x="2" y="5" width="6" height="4"/><rect x="9.5" y="5" width="6" height="4"/><rect x="17" y="5" width="6" height="4"/><rect x="2" y="10.5" width="6" height="4"/><rect x="9.5" y="10.5" width="6" height="4"/><rect x="17" y="10.5" width="6" height="4"/><rect x="2" y="16" width="6" height="4"/><rect x="9.5" y="16" width="6" height="4"/><rect x="17" y="16" width="6" height="4"/></g>
<rect x="52" y="4" width="22" height="17" fill="none" stroke="#f4f4f4" stroke-width="2"/><circle cx="59" cy="10" r="2.5" fill="#f4f4f4"/><path d="M55 17q4-6 8 0z" fill="#f4f4f4"/><path d="M65 9h6M65 12h6M65 15h6" stroke="#f4f4f4" stroke-width="1.5"/>
<g transform="translate(115,12)" fill="#8a8a8a"><circle r="6.5"/><g id="gt"><rect x="-2" y="-10" width="4" height="20"/><rect x="-10" y="-2" width="20" height="4"/><rect x="-2" y="-10" width="4" height="20" transform="rotate(45)"/><rect x="-2" y="-10" width="4" height="20" transform="rotate(-45)"/></g><circle r="2.8" fill="#535353"/></g>
</svg>
<span class="t" style="left:893px;top:451.1px;font-size:19px;line-height:1;color:#f2f2f2;">Version 1/1</span>
<svg style="left:1010px;top:454px" width="20" height="12"><path d="M2 2l8 7 8-7" stroke="#8f8f8f" stroke-width="3.5" fill="none"/></svg>
<svg style="left:1325px;top:447px" width="160" height="26">
<g fill="#f4f4f4"><rect x="41" y="6" width="17" height="3"/><rect x="46" y="3.5" width="7" height="2.5"/><path d="M43 10h13l-1 13h-11z"/></g><path d="M47 12v9M50 12v9M53 12v9" stroke="#535353" stroke-width="1.1"/>
<path d="M101 4l-7 8 7 8" stroke="#f4f4f4" stroke-width="3.2" fill="none"/>
<path d="M137 4l7 8-7 8" stroke="#8f8f8f" stroke-width="3.2" fill="none"/>
</svg>
<svg style="left:1318px;top:449px" width="22" height="20"><path d="M6 9v-3a5 5 0 0 1 10 0v3" stroke="#c8c8c8" stroke-width="2.4" fill="none"/><rect x="3" y="9" width="16" height="10" rx="1" fill="#c8c8c8"/></svg>
<div class="a" style="left:1494px;top:487px;width:5px;height:228px;background:#6e6e6e;border-radius:3px"></div>
<div class="a" style="left:1493px;top:486px;width:7px;height:55px;background:#f0f0f0;border-radius:3px"></div>
<div class="a" style="left:893px;top:486px;width:241px;height:230px;border-left:1px solid #6a6a6a;border-right:1px solid #6a6a6a;border-top:1px solid #5e5e5e"></div>
<div class="a" style="left:896px;top:527px;width:235px;height:157px;background:#efefef"></div>
<svg style="left:896px;top:527px" width="235" height="157">
<path d="M50 106 C50 60 55 35 76 20 C96 6 134 6 152 18 C172 33 178 62 182 106 Z" fill="#2f6a93"/>
<path d="M40 103 L187 103 L187 136 Q112 142 41 136 Z" fill="#2d6891"/>
<path d="M41 104 L186 104" stroke="#234f6e" stroke-width="1.5"/>
<text x="97" y="134" font-size="8.5" font-family="Liberation Mono" font-weight="bold" fill="#dfe8ee" letter-spacing="1.3">CELUM</text>
<path d="M119 113 a6 6 0 1 0 1 10" stroke="#dfe8ee" stroke-width="2.5" fill="none"/>
</svg>
<svg style="left:900px;top:741px" width="14" height="9"><path d="M1.5 1.5l5.5  5.5l5.5 -5.5" stroke="#f0f0f0" stroke-width="1.8" fill="none"/></svg>
<span class="t" style="left:944px;top:736.3px;font-size:19px;line-height:1;color:#f2f2f2;">Details</span>
<svg style="left:1009.7px;top:737.2px" width="16.6" height="16.6"><circle cx="8.3" cy="8.3" r="8.3" fill="#f4f4f4"/><rect x="6.7" y="6.3" width="3.2" height="7" fill="#535353"/><rect x="5.1" y="11.8" width="6.4" height="1.6" fill="#535353"/><rect x="5.1" y="6.3" width="2" height="1.6" fill="#535353"/><circle cx="8.3" cy="3.5" r="1.7" fill="#535353"/></svg>
<div class="a" style="left:1032px;top:744px;width:120px;height:2px;background:#5e5e5e"></div>
<svg style="left:1170px;top:732px" width="320" height="28" fill="#f4f4f4" stroke="none">
<path d="M8 7h-4v15h15v-4" stroke="#f4f4f4" stroke-width="2.2" fill="none"/><path d="M11 15l10-10M15 4h7v7" stroke="#f4f4f4" stroke-width="2.4" fill="none"/>
<path d="M62 3h6v9h4l-7 7-7-7h4z"/><rect x="57" y="18" width="16" height="5"/>
<path d="M112 19h6v-9h4l-7-7-7 7h4z"/><rect x="107" y="18" width="16" height="5"/>
<g stroke="#8a8a8a" stroke-width="2.5" fill="none"><circle cx="164" cy="12" r="6.5"/><path d="M169 17l5 5"/><path d="M164 9v6M161 12h6" stroke-width="1.8"/></g>
<path d="M206 12v-3a6 6 0 0 1 12 0v3" stroke="#f4f4f4" stroke-width="2.5" fill="none"/><rect x="203" y="12" width="18" height="11" rx="1"/>
<rect x="248" y="6" width="17" height="3"/><rect x="253" y="3.5" width="7" height="2.5"/><path d="M250 10h13l-1 13h-11z"/>
<g transform="translate(304,13)"><circle r="6.5"/><rect x="-2" y="-10" width="4" height="20"/><rect x="-10" y="-2" width="20" height="4"/><rect x="-2" y="-10" width="4" height="20" transform="rotate(45)"/><rect x="-2" y="-10" width="4" height="20" transform="rotate(-45)"/><circle r="2.8" fill="#535353"/></g>
</svg>
<svg style="left:1252px;top:742px" width="16" height="14"><path d="M4 4v-0M" /></svg>
<span class="t" style="left:893px;top:778.8px;font-size:19px;line-height:1;color:#f2f2f2;font-weight:bold;letter-spacing:0.8px;">Name</span>
<span class="t" style="left:1062px;top:778.8px;font-size:19px;line-height:1;color:#f2f2f2;letter-spacing:0.2px;">beanie-mockup-top-view2.jpg</span>
<span class="t" style="left:893px;top:809.8px;font-size:19px;line-height:1;color:#f2f2f2;font-weight:bold;letter-spacing:0.8px;">Size</span>
<span class="t" style="left:1062px;top:809.8px;font-size:19px;line-height:1;color:#f2f2f2;letter-spacing:0.2px;">3.5 MB (3,694,684 Bytes)</span>
<span class="t" style="left:893px;top:840.8px;font-size:19px;line-height:1;color:#f2f2f2;font-weight:bold;letter-spacing:0.8px;">Width x Height</span>
<span class="t" style="left:1062px;top:840.8px;font-size:19px;line-height:1;color:#f2f2f2;letter-spacing:0.2px;">5,000 x 3,333</span>
<span class="t" style="left:893px;top:871.8px;font-size:19px;line-height:1;color:#f2f2f2;font-weight:bold;letter-spacing:0.8px;">Modified</span>
<span class="t" style="left:1062px;top:871.8px;font-size:19px;line-height:1;color:#f2f2f2;letter-spacing:0.2px;">10/30/2023, 3:46:58 PM</span>
<svg style="left:1456px;top:912px" width="16" height="20"><circle cx="8" cy="5" r="4.5" fill="#22c55e"/><path d="M1 19v-5q0-4 4-5h6q4 1 4 5v5z" fill="#22c55e"/></svg>
<div class="a" style="left:876px;top:944px;width:630px;height:2px;background:#3c3c3c"></div>
<div class="a" style="left:1176px;top:948px;width:28px;height:4px;background:repeating-linear-gradient(90deg,#6e6e6e 0 1px,transparent 1px 3px)"></div>
<div class="a" style="left:1047px;top:383px;width:289px;height:205px;background:#3a3a3a;border-radius:6px"></div>
<div class="a" style="left:1042px;top:378px;width:288px;height:205px;background:#fff;border-radius:6px"></div>
<div class="a" style="left:1044px;top:408px;width:284px;height:29px;background:#add8e6;border-radius:6px"></div>
<svg style="left:1057px;top:386px" width="22" height="16"><path d="M2.5 6.5l7 6 10-11" stroke="#0000ee" stroke-width="3.6" fill="none"/></svg>
<span class="t" style="left:1092px;top:384.8px;font-size:18.7px;line-height:1;color:#0b0b14;">Place and link</span>
<span class="t" style="left:1092px;top:413.7px;font-size:18.7px;line-height:1;color:#0b0b14;">Place and embed</span>
<span class="t" style="left:1092px;top:442.6px;font-size:18.7px;line-height:1;color:#a8a8a8;">Replace</span>
<span class="t" style="left:1092px;top:471.5px;font-size:18.7px;line-height:1;color:#0b0b14;">Open in Photoshop</span>
<span class="t" style="left:1092px;top:500.4px;font-size:18.7px;line-height:1;color:#0b0b14;">Open in local application</span>
<span class="t" style="left:1092px;top:529.3px;font-size:18.7px;line-height:1;color:#0b0b14;">Save local</span>
<span class="t" style="left:1092px;top:558.2px;font-size:18.7px;line-height:1;color:#0b0b14;">Select rendition</span>
<svg style="left:1150px;top:420px" width="14" height="20"><path d="M1 1v15l4-4 3 6 2.5-1-3-6h5z" fill="#fff" stroke="#000" stroke-width="1.1"/></svg>
<!--/CIHUB-->
</body></html>
